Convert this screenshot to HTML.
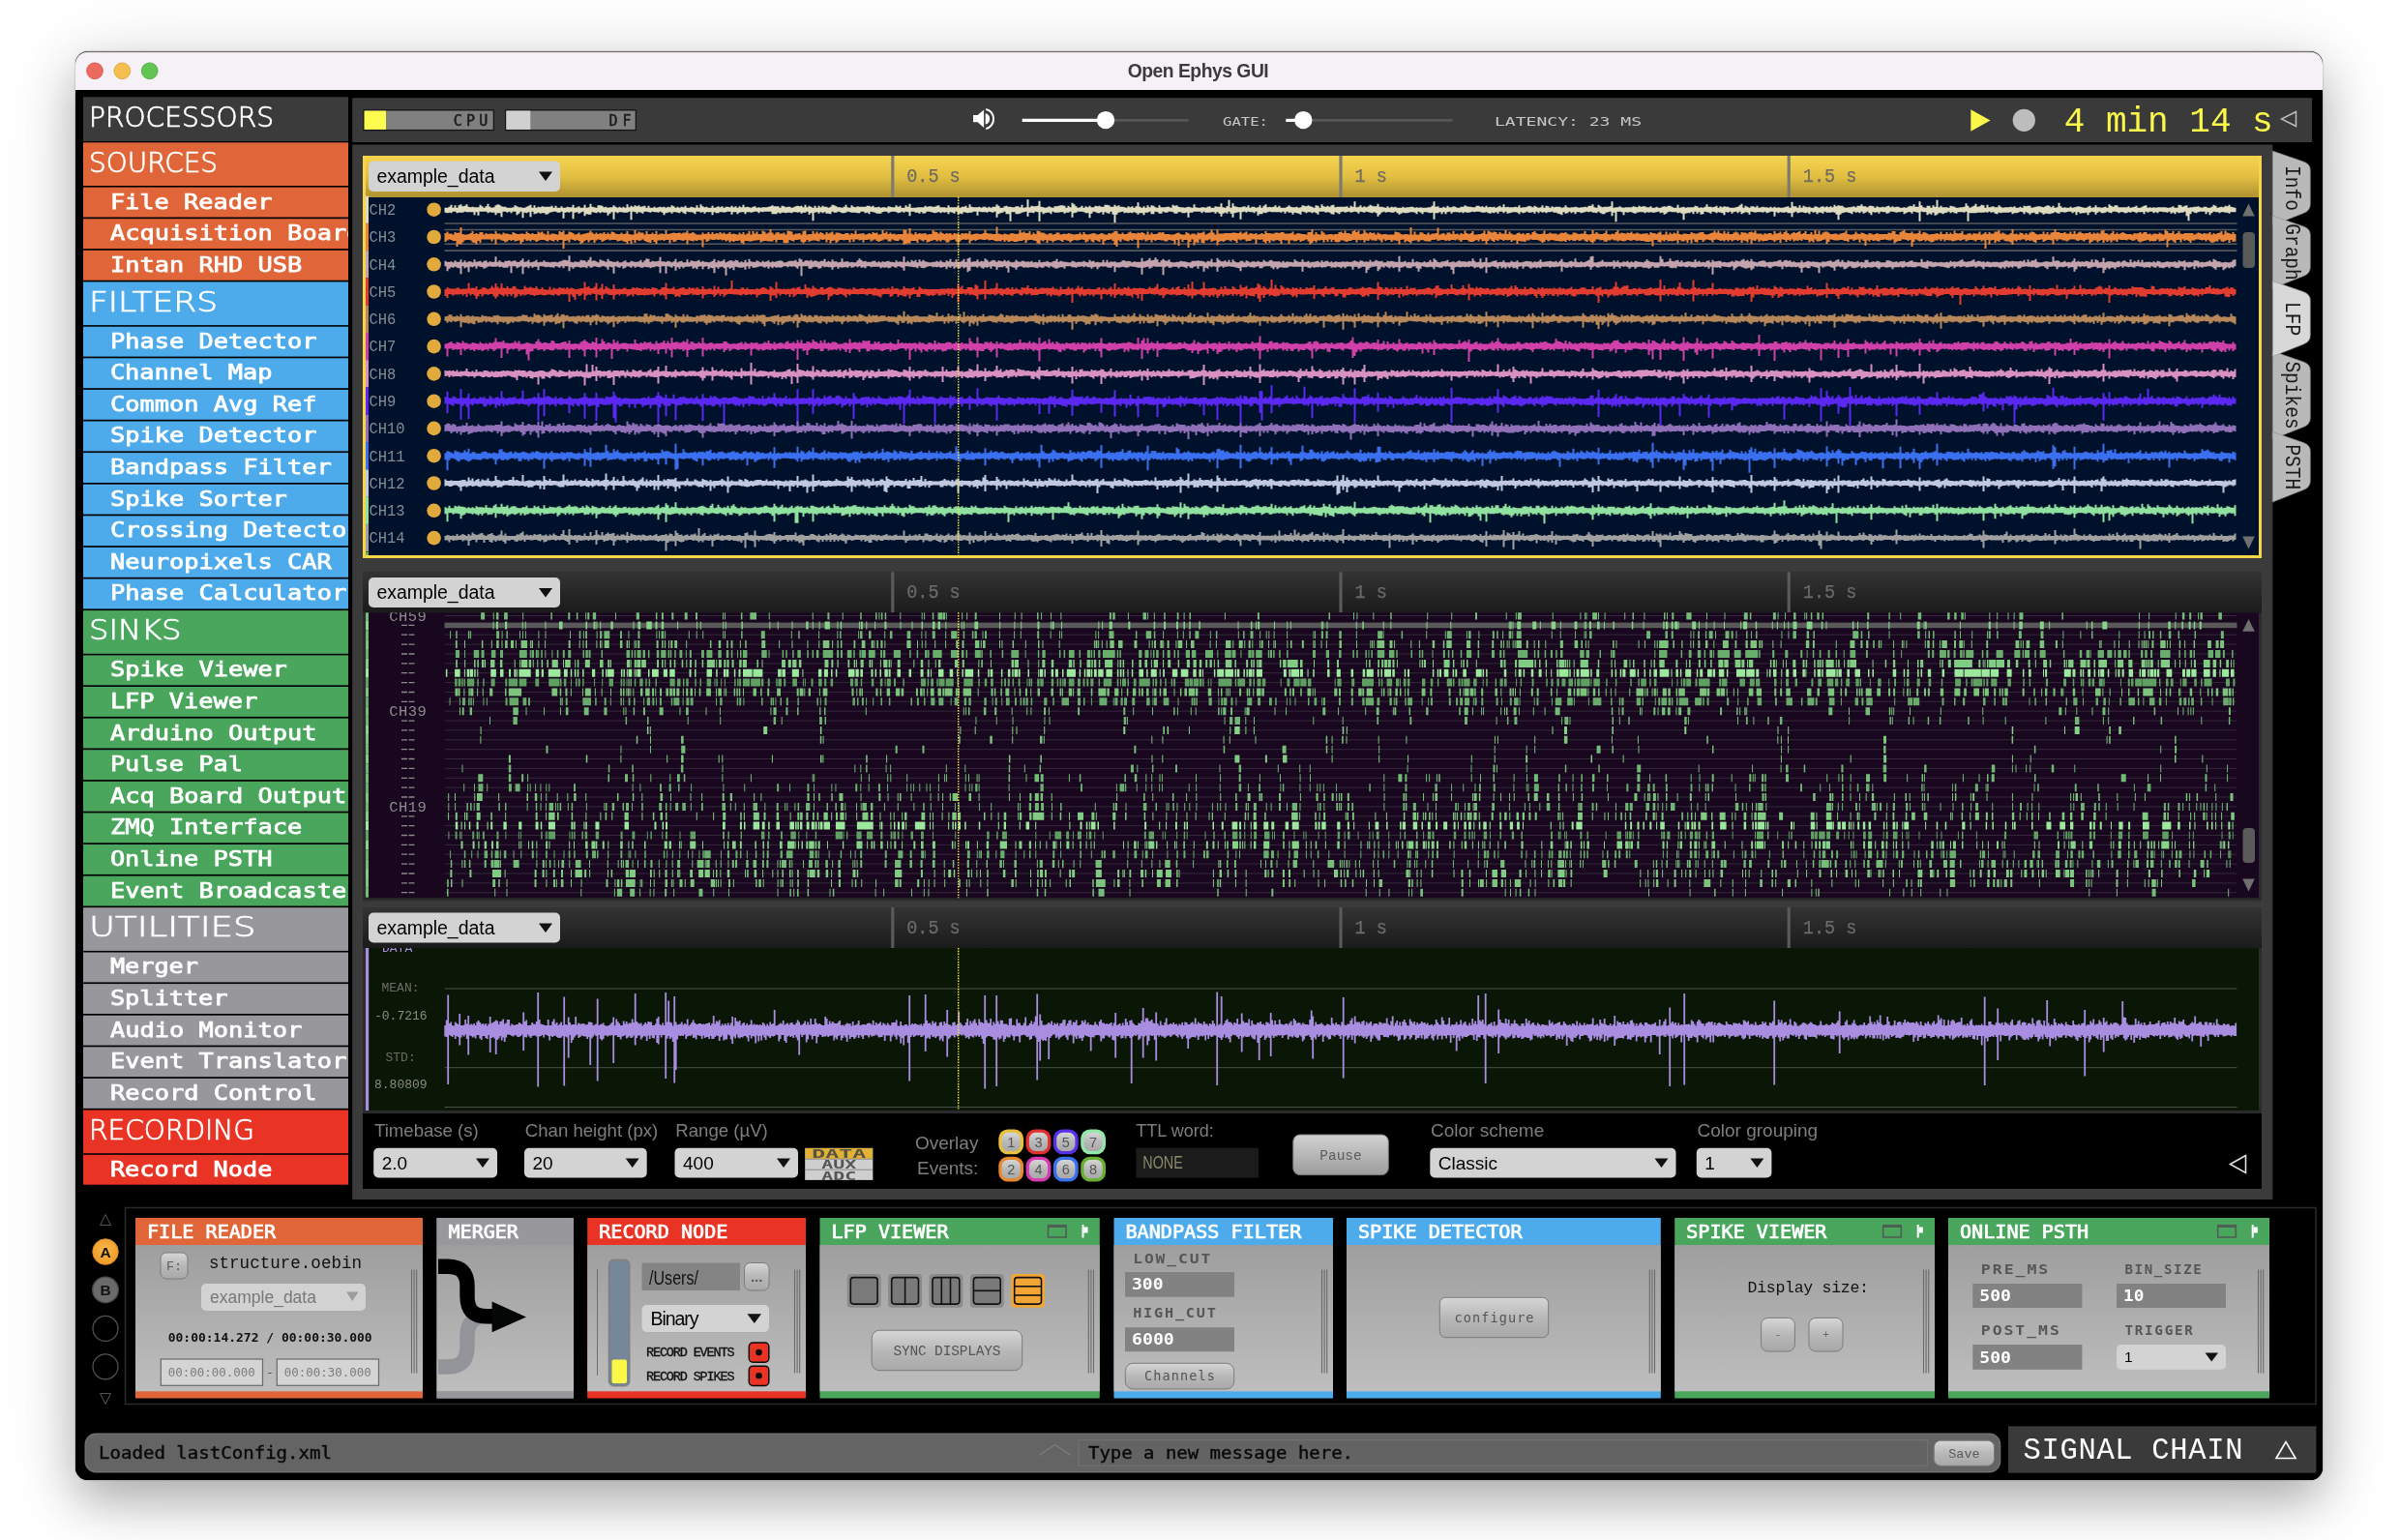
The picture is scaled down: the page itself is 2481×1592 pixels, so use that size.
<!DOCTYPE html>
<html><head><meta charset="utf-8"><title>Open Ephys GUI</title>
<style>
html,body{margin:0;padding:0;background:#fff;}
body{width:2481px;height:1592px;overflow:hidden;position:relative;}
#win{position:absolute;left:78px;top:53.4px;width:2323px;height:1476.8px;border-radius:13px;background:#000;box-shadow:0 22px 50px rgba(0,0,0,0.28),0 8px 90px rgba(0,0,0,0.10),0 0 1.5px rgba(0,0,0,0.5);}
svg{position:absolute;left:0;top:0;will-change:transform;}
text{white-space:pre;}
</style></head><body>
<div id="win"></div>
<svg width="2481" height="1592" viewBox="0 0 2481 1592">
<defs>
<clipPath id="winclip"><rect x="78" y="53.4" width="2323" height="1476.8" rx="13"/></clipPath>
<linearGradient id="gYel" x1="0" y1="0" x2="0" y2="1"><stop offset="0" stop-color="#f6d44e"/><stop offset="0.5" stop-color="#e2be42"/><stop offset="1" stop-color="#ae9230"/></linearGradient>
<linearGradient id="gHdr" x1="0" y1="0" x2="0" y2="1"><stop offset="0" stop-color="#333"/><stop offset="1" stop-color="#1b1b1b"/></linearGradient>
<linearGradient id="gBody" x1="0" y1="0" x2="0" y2="1"><stop offset="0" stop-color="#9e9e9e"/><stop offset="1" stop-color="#bebebe"/></linearGradient>
<linearGradient id="gBtn" x1="0" y1="0" x2="0" y2="1"><stop offset="0" stop-color="#d2d2d2"/><stop offset="1" stop-color="#9c9c9c"/></linearGradient>
<linearGradient id="gBtn2" x1="0" y1="0" x2="0" y2="1"><stop offset="0" stop-color="#d6d6d6"/><stop offset="0.5" stop-color="#b8b8b8"/><stop offset="1" stop-color="#a8a8a8"/></linearGradient>
<radialGradient id="gA" cx="0.5" cy="0.4" r="0.6"><stop offset="0" stop-color="#f8b848"/><stop offset="1" stop-color="#ee9a28"/></radialGradient>
</defs>
<g clip-path="url(#winclip)" opacity="0.999">
<rect x="78.0" y="53.0" width="2323.0" height="1477.0" fill="#000" />
<rect x="78.0" y="53.0" width="2323.0" height="40.0" fill="#f6f0f7" />
<line x1="78.0" y1="53.9" x2="2401.0" y2="53.9" stroke="#cfc9cf" stroke-width="1" />
<circle cx="98" cy="73.3" r="8.4" fill="#ec6a5e" stroke="#d05347" stroke-width="0.8"/>
<circle cx="126.3" cy="73.3" r="8.4" fill="#f4bf4f" stroke="#d6a23e" stroke-width="0.8"/>
<circle cx="154.7" cy="73.3" r="8.4" fill="#61c554" stroke="#50a73e" stroke-width="0.8"/>
<text x="1238.7" y="79.6" font-size="19.3" font-family='"Liberation Sans","DejaVu Sans",sans-serif' fill="#3c3a3c" font-weight="bold" textLength="146.0" lengthAdjust="spacing" text-anchor="middle" >Open Ephys GUI</text>
<rect x="86.0" y="100.3" width="274.0" height="45.7" fill="#3b3b3b" />
<text x="92.0" y="131.0" font-size="27.6" font-family='"DejaVu Sans","Liberation Sans",sans-serif' fill="#fff" font-weight="200" textLength="191.0" lengthAdjust="spacingAndGlyphs" stroke="#fff" stroke-width="0.7">PROCESSORS</text>
<clipPath id="plclip"><rect x="86" y="100" width="274" height="1130"/></clipPath><g clip-path="url(#plclip)">
<rect x="86.0" y="147.3" width="274.0" height="44.7" fill="#e0663a" />
<text x="92.0" y="177.5" font-size="27.6" font-family='"DejaVu Sans","Liberation Sans",sans-serif' fill="#fff" font-weight="200" textLength="133.0" lengthAdjust="spacingAndGlyphs" stroke="#fff" stroke-width="0.7">SOURCES</text>
<rect x="86.0" y="193.6" width="274.0" height="30.9" fill="#e0663a" />
<text x="113.9" y="215.5" font-size="21.3" font-family='"DejaVu Sans Mono","Liberation Mono",monospace' fill="#fff" textLength="167.6" lengthAdjust="spacingAndGlyphs" stroke="#fff" stroke-width="0.75">File Reader</text>
<rect x="86.0" y="226.2" width="274.0" height="30.9" fill="#e0663a" />
<text x="113.9" y="248.1" font-size="21.3" font-family='"DejaVu Sans Mono","Liberation Mono",monospace' fill="#fff" textLength="259.6" lengthAdjust="spacingAndGlyphs" stroke="#fff" stroke-width="0.75">Acquisition Board</text>
<rect x="86.0" y="258.8" width="274.0" height="30.9" fill="#e0663a" />
<text x="113.9" y="280.7" font-size="21.3" font-family='"DejaVu Sans Mono","Liberation Mono",monospace' fill="#fff" textLength="198.3" lengthAdjust="spacingAndGlyphs" stroke="#fff" stroke-width="0.75">Intan RHD USB</text>
<rect x="86.0" y="291.4" width="274.0" height="44.7" fill="#4eabeb" />
<text x="92.0" y="321.6" font-size="27.6" font-family='"DejaVu Sans","Liberation Sans",sans-serif' fill="#fff" font-weight="200" textLength="133.0" lengthAdjust="spacingAndGlyphs" stroke="#fff" stroke-width="0.7">FILTERS</text>
<rect x="86.0" y="337.7" width="274.0" height="30.9" fill="#4eabeb" />
<text x="113.9" y="359.6" font-size="21.3" font-family='"DejaVu Sans Mono","Liberation Mono",monospace' fill="#fff" textLength="213.6" lengthAdjust="spacingAndGlyphs" stroke="#fff" stroke-width="0.75">Phase Detector</text>
<rect x="86.0" y="370.3" width="274.0" height="30.9" fill="#4eabeb" />
<text x="113.9" y="392.2" font-size="21.3" font-family='"DejaVu Sans Mono","Liberation Mono",monospace' fill="#fff" textLength="167.6" lengthAdjust="spacingAndGlyphs" stroke="#fff" stroke-width="0.75">Channel Map</text>
<rect x="86.0" y="402.9" width="274.0" height="30.9" fill="#4eabeb" />
<text x="113.9" y="424.8" font-size="21.3" font-family='"DejaVu Sans Mono","Liberation Mono",monospace' fill="#fff" textLength="213.6" lengthAdjust="spacingAndGlyphs" stroke="#fff" stroke-width="0.75">Common Avg Ref</text>
<rect x="86.0" y="435.5" width="274.0" height="30.9" fill="#4eabeb" />
<text x="113.9" y="457.4" font-size="21.3" font-family='"DejaVu Sans Mono","Liberation Mono",monospace' fill="#fff" textLength="213.6" lengthAdjust="spacingAndGlyphs" stroke="#fff" stroke-width="0.75">Spike Detector</text>
<rect x="86.0" y="468.1" width="274.0" height="30.9" fill="#4eabeb" />
<text x="113.9" y="490.0" font-size="21.3" font-family='"DejaVu Sans Mono","Liberation Mono",monospace' fill="#fff" textLength="228.9" lengthAdjust="spacingAndGlyphs" stroke="#fff" stroke-width="0.75">Bandpass Filter</text>
<rect x="86.0" y="500.7" width="274.0" height="30.9" fill="#4eabeb" />
<text x="113.9" y="522.6" font-size="21.3" font-family='"DejaVu Sans Mono","Liberation Mono",monospace' fill="#fff" textLength="183.0" lengthAdjust="spacingAndGlyphs" stroke="#fff" stroke-width="0.75">Spike Sorter</text>
<rect x="86.0" y="533.3" width="274.0" height="30.9" fill="#4eabeb" />
<text x="113.9" y="555.2" font-size="21.3" font-family='"DejaVu Sans Mono","Liberation Mono",monospace' fill="#fff" textLength="259.6" lengthAdjust="spacingAndGlyphs" stroke="#fff" stroke-width="0.75">Crossing Detector</text>
<rect x="86.0" y="565.9" width="274.0" height="30.9" fill="#4eabeb" />
<text x="113.9" y="587.8" font-size="21.3" font-family='"DejaVu Sans Mono","Liberation Mono",monospace' fill="#fff" textLength="228.9" lengthAdjust="spacingAndGlyphs" stroke="#fff" stroke-width="0.75">Neuropixels CAR</text>
<rect x="86.0" y="598.5" width="274.0" height="30.9" fill="#4eabeb" />
<text x="113.9" y="620.4" font-size="21.3" font-family='"DejaVu Sans Mono","Liberation Mono",monospace' fill="#fff" textLength="244.3" lengthAdjust="spacingAndGlyphs" stroke="#fff" stroke-width="0.75">Phase Calculator</text>
<rect x="86.0" y="631.1" width="274.0" height="44.7" fill="#4aa65d" />
<text x="92.0" y="661.3" font-size="27.6" font-family='"DejaVu Sans","Liberation Sans",sans-serif' fill="#fff" font-weight="200" textLength="95.5" lengthAdjust="spacingAndGlyphs" stroke="#fff" stroke-width="0.7">SINKS</text>
<rect x="86.0" y="677.4" width="274.0" height="30.9" fill="#4aa65d" />
<text x="113.9" y="699.3" font-size="21.3" font-family='"DejaVu Sans Mono","Liberation Mono",monospace' fill="#fff" textLength="183.0" lengthAdjust="spacingAndGlyphs" stroke="#fff" stroke-width="0.75">Spike Viewer</text>
<rect x="86.0" y="710.0" width="274.0" height="30.9" fill="#4aa65d" />
<text x="113.9" y="731.9" font-size="21.3" font-family='"DejaVu Sans Mono","Liberation Mono",monospace' fill="#fff" textLength="152.3" lengthAdjust="spacingAndGlyphs" stroke="#fff" stroke-width="0.75">LFP Viewer</text>
<rect x="86.0" y="742.6" width="274.0" height="30.9" fill="#4aa65d" />
<text x="113.9" y="764.5" font-size="21.3" font-family='"DejaVu Sans Mono","Liberation Mono",monospace' fill="#fff" textLength="213.6" lengthAdjust="spacingAndGlyphs" stroke="#fff" stroke-width="0.75">Arduino Output</text>
<rect x="86.0" y="775.2" width="274.0" height="30.9" fill="#4aa65d" />
<text x="113.9" y="797.1" font-size="21.3" font-family='"DejaVu Sans Mono","Liberation Mono",monospace' fill="#fff" textLength="137.0" lengthAdjust="spacingAndGlyphs" stroke="#fff" stroke-width="0.75">Pulse Pal</text>
<rect x="86.0" y="807.8" width="274.0" height="30.9" fill="#4aa65d" />
<text x="113.9" y="829.7" font-size="21.3" font-family='"DejaVu Sans Mono","Liberation Mono",monospace' fill="#fff" textLength="244.3" lengthAdjust="spacingAndGlyphs" stroke="#fff" stroke-width="0.75">Acq Board Output</text>
<rect x="86.0" y="840.4" width="274.0" height="30.9" fill="#4aa65d" />
<text x="113.9" y="862.3" font-size="21.3" font-family='"DejaVu Sans Mono","Liberation Mono",monospace' fill="#fff" textLength="198.3" lengthAdjust="spacingAndGlyphs" stroke="#fff" stroke-width="0.75">ZMQ Interface</text>
<rect x="86.0" y="873.0" width="274.0" height="30.9" fill="#4aa65d" />
<text x="113.9" y="894.9" font-size="21.3" font-family='"DejaVu Sans Mono","Liberation Mono",monospace' fill="#fff" textLength="167.6" lengthAdjust="spacingAndGlyphs" stroke="#fff" stroke-width="0.75">Online PSTH</text>
<rect x="86.0" y="905.6" width="274.0" height="30.9" fill="#4aa65d" />
<text x="113.9" y="927.5" font-size="21.3" font-family='"DejaVu Sans Mono","Liberation Mono",monospace' fill="#fff" textLength="259.6" lengthAdjust="spacingAndGlyphs" stroke="#fff" stroke-width="0.75">Event Broadcaster</text>
<rect x="86.0" y="938.2" width="274.0" height="44.7" fill="#98989c" />
<text x="92.0" y="968.4" font-size="27.6" font-family='"DejaVu Sans","Liberation Sans",sans-serif' fill="#fff" font-weight="200" textLength="172.5" lengthAdjust="spacingAndGlyphs" stroke="#fff" stroke-width="0.7">UTILITIES</text>
<rect x="86.0" y="984.5" width="274.0" height="30.9" fill="#98989c" />
<text x="113.9" y="1006.4" font-size="21.3" font-family='"DejaVu Sans Mono","Liberation Mono",monospace' fill="#fff" textLength="91.0" lengthAdjust="spacingAndGlyphs" stroke="#fff" stroke-width="0.75">Merger</text>
<rect x="86.0" y="1017.1" width="274.0" height="30.9" fill="#98989c" />
<text x="113.9" y="1039.0" font-size="21.3" font-family='"DejaVu Sans Mono","Liberation Mono",monospace' fill="#fff" textLength="121.6" lengthAdjust="spacingAndGlyphs" stroke="#fff" stroke-width="0.75">Splitter</text>
<rect x="86.0" y="1049.7" width="274.0" height="30.9" fill="#98989c" />
<text x="113.9" y="1071.6" font-size="21.3" font-family='"DejaVu Sans Mono","Liberation Mono",monospace' fill="#fff" textLength="198.3" lengthAdjust="spacingAndGlyphs" stroke="#fff" stroke-width="0.75">Audio Monitor</text>
<rect x="86.0" y="1082.3" width="274.0" height="30.9" fill="#98989c" />
<text x="113.9" y="1104.2" font-size="21.3" font-family='"DejaVu Sans Mono","Liberation Mono",monospace' fill="#fff" textLength="244.3" lengthAdjust="spacingAndGlyphs" stroke="#fff" stroke-width="0.75">Event Translator</text>
<rect x="86.0" y="1114.9" width="274.0" height="30.9" fill="#98989c" />
<text x="113.9" y="1136.8" font-size="21.3" font-family='"DejaVu Sans Mono","Liberation Mono",monospace' fill="#fff" textLength="213.6" lengthAdjust="spacingAndGlyphs" stroke="#fff" stroke-width="0.75">Record Control</text>
<rect x="86.0" y="1147.5" width="274.0" height="44.7" fill="#e93324" />
<text x="92.0" y="1177.7" font-size="27.6" font-family='"DejaVu Sans","Liberation Sans",sans-serif' fill="#fff" font-weight="200" textLength="171.0" lengthAdjust="spacingAndGlyphs" stroke="#fff" stroke-width="0.7">RECORDING</text>
<rect x="86.0" y="1193.8" width="274.0" height="30.9" fill="#e93324" />
<text x="113.9" y="1215.7" font-size="21.3" font-family='"DejaVu Sans Mono","Liberation Mono",monospace' fill="#fff" textLength="167.6" lengthAdjust="spacingAndGlyphs" stroke="#fff" stroke-width="0.75">Record Node</text>
</g>
<rect x="364.2" y="101.2" width="2025.8" height="45.8" fill="#3a3a3a" />
<rect x="375.3" y="113.2" width="135.7" height="22.0" fill="#141414" />
<rect x="376.6" y="114.5" width="133.1" height="19.4" fill="#808080" />
<rect x="376.6" y="114.5" width="22.4" height="19.4" fill="#fdfb4e" />
<text x="468.7" y="130.2" font-size="15" font-family='"DejaVu Sans Mono","Liberation Mono",monospace' fill="#1c1c1c" textLength="35.5" lengthAdjust="spacing" stroke="#1c1c1c" stroke-width="0.5">CPU</text>
<rect x="522.0" y="113.2" width="136.0" height="22.0" fill="#141414" />
<rect x="523.3" y="114.5" width="133.4" height="19.4" fill="#808080" />
<rect x="523.3" y="114.5" width="25.0" height="19.4" fill="#d0d0d0" />
<text x="629.5" y="130.2" font-size="15" font-family='"DejaVu Sans Mono","Liberation Mono",monospace' fill="#1c1c1c" textLength="23.0" lengthAdjust="spacing" stroke="#1c1c1c" stroke-width="0.5">DF</text>
<path d="M1006 119H1010.6L1017.1 113.5V132L1010.6 126.3H1006z" fill="#fff"/>
<path d="M1018.7 117.3A4.5 5.55 0 0 1 1018.7 128.4z" fill="#fff"/>
<path d="M1019.2 112.9A8.7 10.1 0 0 1 1019.2 133" fill="none" stroke="#fff" stroke-width="2"/>
<line x1="1056.7" y1="124.4" x2="1228.8" y2="124.4" stroke="#575757" stroke-width="2.8" />
<line x1="1056.7" y1="124.4" x2="1142.7" y2="124.4" stroke="#fff" stroke-width="3.2" />
<circle cx="1143" cy="124.1" r="9.2" fill="#fff"/>
<text x="1264.0" y="129.7" font-size="13" font-family='"DejaVu Sans Mono","Liberation Mono",monospace' fill="#c8c8c8" textLength="47.0" lengthAdjust="spacingAndGlyphs" >GATE:</text>
<line x1="1329.3" y1="124.4" x2="1501.7" y2="124.4" stroke="#575757" stroke-width="2.8" />
<line x1="1329.3" y1="124.4" x2="1347.3" y2="124.4" stroke="#fff" stroke-width="3.2" />
<circle cx="1347.3" cy="124.1" r="9.2" fill="#fff"/>
<text x="1545.0" y="129.7" font-size="13" font-family='"DejaVu Sans Mono","Liberation Mono",monospace' fill="#c8c8c8" textLength="152.0" lengthAdjust="spacingAndGlyphs" >LATENCY: 23 MS</text>
<path d="M2037.3 113.2L2057.5 124.5L2037.3 135.8z" fill="#fbf84a"/>
<circle cx="2092.3" cy="124.3" r="11.6" fill="#bdbdbd"/>
<text x="2133.7" y="136.0" font-size="36" font-family='"Liberation Mono","DejaVu Sans Mono",monospace' fill="#fbf84a" textLength="216.0" lengthAdjust="spacing" >4 min 14 s</text>
<path d="M2373.5 115.5L2358.5 123L2373.5 130.5z" fill="none" stroke="#bbb" stroke-width="1.5"/>
<rect x="364.2" y="149.5" width="1985.1" height="1090.5" fill="#3b3b3b" />
<path d="M2349.3 156L2381 167Q2388.3 169.5 2388.3 176L2388.3 211Q2388.3 218 2381 220.5L2349.3 233z" fill="#b9b9b9" stroke="#8a8a8a" stroke-width="0.6"/>
<text transform="translate(2362.6 194.5) rotate(90)" text-anchor="middle" font-size="22" font-family='"Liberation Mono","DejaVu Sans Mono",monospace' fill="#1a1a1a" textLength="46.8" lengthAdjust="spacingAndGlyphs">Info</text>
<path d="M2349.3 223L2381 234Q2388.3 236.5 2388.3 243L2388.3 276Q2388.3 283 2381 285.5L2349.3 298z" fill="#b9b9b9" stroke="#8a8a8a" stroke-width="0.6"/>
<text transform="translate(2362.6 260.5) rotate(90)" text-anchor="middle" font-size="22" font-family='"Liberation Mono","DejaVu Sans Mono",monospace' fill="#1a1a1a" textLength="58.5" lengthAdjust="spacingAndGlyphs">Graph</text>
<path d="M2349.3 363L2381 374Q2388.3 376.5 2388.3 383L2388.3 432Q2388.3 439 2381 441.5L2349.3 454z" fill="#b9b9b9" stroke="#8a8a8a" stroke-width="0.6"/>
<text transform="translate(2362.6 408.5) rotate(90)" text-anchor="middle" font-size="22" font-family='"Liberation Mono","DejaVu Sans Mono",monospace' fill="#1a1a1a" textLength="70.2" lengthAdjust="spacingAndGlyphs">Spikes</text>
<path d="M2349.3 446.5L2381 457.5Q2388.3 460.0 2388.3 466.5L2388.3 497Q2388.3 504 2381 506.5L2349.3 519z" fill="#b9b9b9" stroke="#8a8a8a" stroke-width="0.6"/>
<text transform="translate(2362.6 482.8) rotate(90)" text-anchor="middle" font-size="22" font-family='"Liberation Mono","DejaVu Sans Mono",monospace' fill="#1a1a1a" textLength="46.8" lengthAdjust="spacingAndGlyphs">PSTH</text>
<path d="M2349.3 290.6L2381 301.6Q2388.3 304.1 2388.3 310.6L2388.3 346.6Q2388.3 353.6 2381 356.1L2349.3 368.6z" fill="#d8d8d8" stroke="#8a8a8a" stroke-width="0.6"/>
<text transform="translate(2362.6 329.6) rotate(90)" text-anchor="middle" font-size="22" font-family='"Liberation Mono","DejaVu Sans Mono",monospace' fill="#1a1a1a" textLength="35.1" lengthAdjust="spacingAndGlyphs">LFP</text>
<rect x="375.0" y="161.0" width="1963.0" height="416.0" fill="#f8d548" />
<rect x="378.0" y="203.8" width="1957.0" height="370.2" fill="#00122b" />
<rect x="378.0" y="161.0" width="1957.0" height="42.8" fill="url(#gYel)" />
<line x1="922.8" y1="161.0" x2="922.8" y2="203.8" stroke="#7d7a6e" stroke-width="3.2" />
<text x="937.2" y="187.6" font-size="20" font-family='"Liberation Mono","DejaVu Sans Mono",monospace' fill="#6f6c62" textLength="55.5" lengthAdjust="spacingAndGlyphs" stroke="#6f6c62" stroke-width="0.25">0.5 s</text>
<line x1="1386.0" y1="161.0" x2="1386.0" y2="203.8" stroke="#7d7a6e" stroke-width="3.2" />
<text x="1400.5" y="187.6" font-size="20" font-family='"Liberation Mono","DejaVu Sans Mono",monospace' fill="#6f6c62" textLength="33.3" lengthAdjust="spacingAndGlyphs" stroke="#6f6c62" stroke-width="0.25">1 s</text>
<line x1="1849.2" y1="161.0" x2="1849.2" y2="203.8" stroke="#7d7a6e" stroke-width="3.2" />
<text x="1863.8" y="187.6" font-size="20" font-family='"Liberation Mono","DejaVu Sans Mono",monospace' fill="#6f6c62" textLength="55.5" lengthAdjust="spacingAndGlyphs" stroke="#6f6c62" stroke-width="0.25">1.5 s</text>
<rect x="381.0" y="166.6" width="198.0" height="31.3" rx="5" fill="#d3d3d3" />
<text x="389.5" y="189.1" font-size="19.5" font-family='"Liberation Sans","DejaVu Sans",sans-serif' fill="#000" textLength="122.0" lengthAdjust="spacing" >example_data</text>
<path d="M557.0 177.6h14l-7.0 9.5z" fill="#111"/>
<line x1="459.5" y1="231.0" x2="2312.5" y2="231.0" stroke="#56585c" stroke-width="1.6" />
<line x1="459.5" y1="237.5" x2="2312.5" y2="237.5" stroke="#56585c" stroke-width="1.6" />
<line x1="459.5" y1="252.3" x2="2312.5" y2="252.3" stroke="#56585c" stroke-width="1.6" />
<line x1="459.5" y1="259.1" x2="2312.5" y2="259.1" stroke="#56585c" stroke-width="1.6" />
<rect x="378.0" y="202.6" width="3.0" height="28.3" fill="#dedbc0" />
<text x="381.5" y="222.0" font-size="16.6" font-family='"Liberation Mono","DejaVu Sans Mono",monospace' fill="#868c94" textLength="27.8" lengthAdjust="spacingAndGlyphs" >CH2</text>
<circle cx="448.6" cy="216.7" r="7.3" fill="#e2a93c"/>
<path d="M460.5 214.7v5m2 0.5v-5.5m2 -1v6m2 0.5v-8.5m2 3v4m2 0v-6.5m2 2.5v5.5m2 -0.5v-7.5m2 -1v8.5m2 0v-6.5m2 -0.5v6m2 0.5v-8m2 2.5v5.5m2 0v-5m2 -0.5v5.5m2 3v-8m2 0v5m2 3.5v-8.5m2 -2.5v7m2 0v-5.5m2 1.5v4m2 0v-5.5m2 -2.5v9.5m2 -1v-5.5m2 1v5m2 0v-5.5m2 -2v10m2 -2v-9m2 0.5v8.5m2 4v-11m2 0.5v5m2 0v-5m2 1v5m2 -1v-4m2 0v5.5m2 -1.5v-4.5m2 -2v6.5m2 3.5v-9m2 1v6.5m2 -2v-4.5m2 0.5v10.5m2 -5.5v-5m2 -1v6.5m2 -1v-6.5m2 -1v12.5m2 -5.5v-4m2 -2.5v9m2 -0.5v-6m2 -1v6m2 1v-6.5m2 -1v7m2 0v-6.5m2 0v8m2 -0.5v-7.5m2 0v6m2 -0.5v-6.5m2 2v4m2 0v-6m2 2v5m2 0v-5m2 -1.5v5.5m2 7v-11m2 0v5m2 -0.5v-5.5m2 0.5v5.5m2 -1v-4.5m2 -2.5v14.5m2 -6.5v-5m2 -0.5v5m2 1.5v-7.5m2 1.5v5m2 -1v-4m2 -3v11.5m2 -2v-6.5m2 -0.5v7.5m2 0v-11m2 3v5.5m2 0.5v-5.5m2 0.5v5.5m2 -1v-7m2 0v8m2 -1v-6.5m2 1.5v5.5m2 0v-6m2 1v8m2 -2v-6.5m2 0v5m2 7.5v-14.5m2 1.5v5.5m2 1v-5.5m2 -1v5.5m2 0v-4.5m2 -1v6m2 0v-5m2 -3.5v8.5m2 -1v-4.5m2 -1.5v14.5m2 -8.5v-5m2 -1.5v7m2 1.5v-7.5m2 -1v7m2 0.5v-6m2 -0.5v7.5m2 -2v-6m2 2v4m2 0.5v-6.5m2 2v5m2 -1v-4m2 -1v5.5m2 0v-4.5m2 -0.5v5.5m2 -1v-5m2 0.5v5.5m2 2.5v-8.5m2 1v5.5m2 -0.5v-6m2 0.5v5m2 1.5v-8.5m2 1v6m2 0v-4.5m2 -1v6m2 0.5v-5.5m2 -1v5m2 1.5v-6m2 -1.5v8.5m2 -2.5v-4m2 0v4.5m2 0v-5.5m2 0.5v5.5m2 1.5v-6.5m2 -2.5v6.5m2 0v-4m2 -3.5v8.5m2 -0.5v-6m2 1v6.5m2 -1.5v-5.5m2 1v4.5m2 0v-4.5m2 -2v9.5m2 -3v-4.5m2 -0.5v6m2 0v-7m2 1v5m2 0v-6m2 1.5v5m2 -0.5v-5.5m2 0v5m2 0v-4.5m2 -1.5v9m2 -2.5v-5m2 -1v6m2 2v-6.5m2 -1.5v6.5m2 -0.5v-5m2 -2.5v7.5m2 2v-7m2 -0.5v5.5m2 0v-5m2 0.5v5m2 -0.5v-5.5m2 -0.5v5.5m2 0v-4m2 -0.5v6m2 -1.5v-4m2 -0.5v5m2 -0.5v-4.5m2 0v4.5m2 0v-5m2 -0.5v5.5m2 2.5v-9m2 1v8m2 0v-8m2 0v6.5m2 1v-6m2 -2v7m2 0v-6.5m2 1v6m2 -0.5v-6m2 0v6m2 0.5v-5.5m2 -0.5v5m2 0v-6m2 -0.5v7m2 -0.5v-6m2 -0.5v8m2 -1v-5.5m2 -2.5v8m2 -1v-4.5m2 -1.5v9m2 -1.5v-6.5m2 1v13.5m2 -8.5v-7m2 2v4.5m2 1.5v-8m2 1.5v5m2 1v-7.5m2 1v5.5m2 1.5v-7m2 1v6m2 0.5v-7.5m2 -2v7m2 1v-7.5m2 1v6.5m2 -1v-4.5m2 0v5m2 1v-5.5m2 -1v6.5m2 -0.5v-8m2 2.5v4.5m2 0.5v-4.5m2 -2.5v7.5m2 0v-6m2 0.5v5.5m2 0.5v-7m2 0.5v6.5m2 -1.5v-5m2 0v5m2 1.5v-6.5m2 -1v7m2 1.5v-8.5m2 1v5m2 0.5v-6.5m2 1.5v5.5m2 1v-6.5m2 -0.5v7m2 0v-6m2 -0.5v5m2 -0.5v-4.5m2 0.5v4m2 1.5v-7m2 0.5v5.5m2 -0.5v-4.5m2 0v4.5m2 0.5v-7m2 1.5v6.5m2 -0.5v-7m2 2v4m2 1v-5m2 -2.5v6.5m2 0.5v-5.5m2 -3v12.5m2 -4.5v-4m2 0v4m2 1v-5m2 -0.5v5.5m2 1v-6.5m2 0v5m2 1.5v-6.5m2 -1.5v7.5m2 -1.5v-5m2 -0.5v5.5m2 0.5v-6m2 0.5v6m2 0.5v-6.5m2 -1v7m2 -0.5v-7m2 2v6m2 -1v-5m2 0v5.5m2 -0.5v-4.5m2 -2.5v9m2 -2v-5m2 0v5.5m2 1v-6.5m2 0v4.5m2 3v-9m2 2v6m2 0.5v-7.5m2 0v5.5m2 0.5v-7m2 2v5.5m2 -0.5v-8.5m2 2.5v6m2 -1v-4.5m2 0v4.5m2 4v-8.5m2 -0.5v5m2 0.5v-4.5m2 -1v5.5m2 0v-5.5m2 1v5m2 -1v-5m2 1v4.5m2 0.5v-6m2 0v5m2 6v-13.5m2 1.5v8.5m2 -1v-5.5m2 0v5m2 -1v-5.5m2 -0.5v8.5m2 0v-7.5m2 0v15m2 -9.5v-5m2 0v5m2 2v-8m2 0v8m2 -0.5v-6.5m2 -2.5v8m2 -0.5v-4.5m2 -0.5v4.5m2 5v-17.5m2 8v5.5m2 0v-7m2 0.5v7m2 -1.5v-5.5m2 -0.5v6.5m2 9.5v-21m2 6v5.5m2 2v-7m2 0.5v5.5m2 -0.5v-5.5m2 -1v6.5m2 1.5v-7m2 0.5v4m2 1v-6.5m2 0v6.5m2 0v-7m2 -0.5v7m2 0v-7m2 0.5v8m2 -1v-5m2 -2v7m2 -1v-4.5m2 -4.5v15m2 -4.5v-9m2 2v6.5m2 -1v-4m2 -0.5v4.5m2 0v-6m2 2v4.5m2 1v-7m2 1v6m2 5v-12.5m2 1.5v6.5m2 -2v-4.5m2 -1.5v6.5m2 1v-7m2 -0.5v7.5m2 -1v-5.5m2 0v8m2 -2.5v-7.5m2 0v8.5m2 0.5v-8.5m2 1.5v5m2 3v-8m2 -2v18.5m2 -8.5v-8.5m2 -1v7.5m2 -0.5v-5.5m2 0v5m2 1.5v-6m2 0.5v5m2 0.5v-7m2 1v5.5m2 0.5v-7m2 1.5v4.5m2 1v-7m2 -4v12.5m2 -1.5v-6.5m2 1v5.5m2 2v-9m2 1.5v5m2 0v-7.5m2 2v4.5m2 2.5v-9m2 0.5v8.5m2 -2.5v-4.5m2 0.5v4.5m2 1.5v-8.5m2 2v6.5m2 -2v-4.5m2 0v5.5m2 0v-6m2 0v5m2 0v-4m2 -3v7.5m2 1.5v-8m2 -0.5v8.5m2 -1.5v-5.5m2 0.5v5m2 1v-6m2 0.5v5.5m2 -0.5v-5.5m2 -0.5v11m2 -5v-5.5m2 0.5v5m2 -1v-7.5m2 3v4.5m2 0v-4m2 0v4m2 1.5v-6m2 0v4.5m2 1v-5m2 -1v6m2 0v-6.5m2 1.5v4.5m2 0v-4.5m2 -1.5v7.5m2 -1.5v-5.5m2 0v7m2 3v-13.5m2 4v6.5m2 -1v-5m2 -1.5v7.5m2 -2v-12m2 8v6m2 4v-14.5m2 3v7m2 -0.5v-6m2 0.5v5m2 7.5v-12.5m2 -0.5v5.5m2 -0.5v-5.5m2 1v5.5m2 -1v-6.5m2 2.5v4.5m2 0v-5.5m2 0v6.5m2 -1.5v-4m2 -0.5v8.5m2 -1.5v-9m2 2.5v6.5m2 -1.5v-7m2 -1.5v9m2 -1v-5m2 -0.5v5m2 0.5v-5m2 -0.5v5.5m2 0v-7m2 2v5m2 0v-6.5m2 2v5m2 -1v-4m2 0v6m2 -2v-5m2 -1.5v7.5m2 0v-6m2 0.5v7.5m2 -2v-5.5m2 -0.5v6.5m2 0.5v-6m2 -0.5v7.5m2 -3v-6.5m2 0.5v6.5m2 1v-7m2 -1v7m2 0v-6m2 0.5v6.5m2 -1v-4.5m2 -2.5v8m2 1.5v-9m2 2v4m2 0v-7.5m2 2v5.5m2 1v-6m2 -1v6.5m2 0.5v-6m2 -1.5v9m2 0.5v-10m2 2.5v5m2 1v-6.5m2 0v7.5m2 -2v-5.5m2 0v5m2 1v-6m2 -0.5v6m2 -0.5v-4m2 -2v7m2 -0.5v-5.5m2 -5.5v10.5m2 0.5v-5m2 -0.5v7m2 -2v-6.5m2 2v5m2 0.5v-6.5m2 1v4.5m2 0.5v-6m2 -1.5v8m2 0.5v-7.5m2 0.5v6m2 1v-7m2 -2.5v13m2 -2v-8m2 0v6m2 -1v-4.5m2 0.5v5m2 -0.5v-6m2 1.5v4.5m2 0.5v-6m2 0.5v5.5m2 -1v-5m2 1v5.5m2 1.5v-7m2 0v6m2 -1v-6m2 1v5.5m2 0v-6m2 0v5.5m2 -0.5v-5.5m2 0v5.5m2 0.5v-5m2 -0.5v7m2 -2.5v-4m2 -0.5v5.5m2 1.5v-6.5m2 0v4.5m2 0v-4.5m2 -0.5v5.5m2 0.5v-6m2 -1.5v7m2 7v-18.5m2 5.5v6.5m2 0v-7m2 1.5v4.5m2 2v-6.5m2 -1v5.5m2 2v-6.5m2 -2v6.5m2 -0.5v-4.5m2 0v6.5m2 -1.5v-6m2 0.5v5.5m2 0v-4.5m2 0v5m2 -0.5v-5.5m2 0v6.5m2 -1v-7m2 1v6.5m2 0v-6m2 0v5.5m2 -0.5v-4.5m2 0v5m2 -0.5v-6m2 0v6m2 0.5v-5.5m2 -0.5v6.5m2 0v-5.5m2 -1.5v6.5m2 1v-6m2 -0.5v7m2 -1v-5.5m2 -0.5v6.5m2 -1v-4.5m2 -1v7m2 -2v-6m2 1.5v4.5m2 1.5v-9m2 3v4.5m2 2v-7m2 0.5v6m2 -0.5v-5.5m2 0v5m2 0v-5.5m2 0.5v5.5m2 1.5v-9m2 2.5v4.5m2 1v-6m2 0v5.5m2 -1v-5m2 -1v7m2 0v-6.5m2 1v5m2 1.5v-8m2 1v5m2 1.5v-5.5m2 -0.5v4.5m2 1v-7.5m2 2.5v4.5m2 1v-7.5m2 0.5v6m2 0v-4.5m2 -1.5v5.5m2 1v-5.5m2 -0.5v6m2 1v-7m2 0v7.5m2 1v-7.5m2 -0.5v5m2 1.5v-8.5m2 2v6m2 -1.5v-4m2 -0.5v6m2 -1v-5m2 -0.5v7.5m2 -2v-5m2 0.5v4.5m2 1v-6m2 0v5.5m2 -0.5v-5.5m2 0.5v4.5m2 0.5v-6.5m2 0v6m2 1v-8.5m2 3v5.5m2 0.5v-5.5m2 -3v7m2 1.5v-7m2 1v7m2 0v-7.5m2 0v6m2 -0.5v-5.5m2 -0.5v5.5m2 4.5v-15m2 6.5v5m2 9.5v-15m2 0v4.5m2 0v-5.5m2 1v5m2 3v-7.5m2 -0.5v5m2 0.5v-5.5m2 0v5m2 0v-5m2 -1v7m2 0.5v-7m2 0.5v5.5m2 -0.5v-6.5m2 1v5.5m2 0v-6m2 0v7m2 -1v-5m2 0v5.5m2 -0.5v-6m2 1.5v5m2 0v-5m2 -1v5.5m2 -0.5v-4m2 0v5.5m2 -0.5v-6m2 -0.5v8.5m2 -1v-7m2 -1v6.5m2 -0.5v-6m2 1v5.5m2 0v-4.5m2 0v4.5m2 1v-8.5m2 3v5m2 1v-6.5m2 -0.5v13.5m2 -6.5v-6m2 -0.5v6m2 0v-6m2 0v5m2 2v-7m2 -1.5v6m2 2v-7.5m2 1.5v4.5m2 2.5v-7.5m2 0.5v6.5m2 -2.5v-5m2 -2.5v8m2 0.5v-6m2 0v7m2 -2v-4.5m2 -0.5v5.5m2 1v-7.5m2 2v4.5m2 0.5v-6.5m2 1v6m2 2v-9m2 0.5v5.5m2 0.5v-6m2 1v4m2 2v-6m2 0v4.5m2 -0.5v-4.5m2 -0.5v6.5m2 -1.5v-6.5m2 -1.5v10.5m2 -1v-5.5m2 -2v6.5m2 0.5v-6m2 1v7m2 -3v-5.5m2 0v6m2 0.5v-5.5m2 -1.5v6.5m2 0v-4.5m2 -0.5v5m2 0.5v-6m2 0.5v4.5m2 1.5v-6m2 0.5v5m2 -1v-5m2 1v4m2 5v-10m2 1v4.5m2 1v-6m2 0.5v4.5m2 0.5v-5m2 -0.5v5.5m2 -0.5v-5.5m2 -0.5v7m2 0v-5.5m2 -6v15.5m2 -4.5v-6.5m2 0v5.5m2 1.5v-5.5m2 -2.5v7.5m2 -0.5v-4.5m2 -2v7m2 0.5v-6.5m2 0.5v5.5m2 1.5v-7.5m2 1v4m2 1v-5m2 -1.5v6m2 2v-7.5m2 1v5m2 0v-6m2 -0.5v7.5m2 -2v-4.5m2 -1v6.5m2 0v-5.5m2 -1v6.5m2 -0.5v-5m2 -2.5v8m2 2v-8.5m2 -1v15m2 -5.5v-9m2 0v7.5m2 -0.5v-5.5m2 0.5v4.5m2 0.5v-5.5m2 0v6m2 1v-7.5m2 -0.5v5.5m2 1v-5.5m2 -1.5v6.5m2 1v-7.5m2 -1.5v7.5m2 2v-7.5m2 0v6.5m2 -1v-4.5m2 -1.5v7.5m2 2v-9.5m2 0.5v6m2 0.5v-5m2 -1.5v6m2 1.5v-6.5m2 0v4.5m2 0.5v-5.5m2 0.5v5m2 1.5v-7.5m2 -0.5v7.5m2 -1.5v-4.5m2 -1v5.5m2 0.5v-5m2 -0.5v6m2 -0.5v-5.5m2 1v4.5m2 -0.5v-4m2 -0.5v7m2 -1v-5.5m2 -1v5.5m2 0v-6.5m2 0.5v7.5m2 -2v-7.5m2 2.5v5.5m2 0.5v-6m2 -5.5v20.5m2 -10v-6.5m2 2v5m2 0v-4.5m2 -2v9.5m2 -1.5v-8m2 2v7m2 -2v-7.5m2 1.5v9m2 -1v-15m2 7.5v6m2 0v-7.5m2 1.5v7m2 -1v-6m2 0v5.5m2 -1v-4m2 -2v7.5m2 -1v-6m2 0.5v6.5m2 0.5v-6m2 0v4.5m2 0v-5m2 0v5m2 0.5v-6m2 -3.5v8.5m2 10v-16m2 2v5.5m2 0v-6.5m2 -1v7.5m2 0v-9.5m2 3v6m2 0v-6.5m2 -1.5v8m2 0v-7.5m2 2.5v4.5m2 0.5v-8m2 2.5v4.5m2 1v-6m2 -0.5v6m2 1.5v-6.5m2 0v7m2 -1.5v-7.5m2 1.5v6.5m2 -0.5v-5m2 -0.5v5.5m2 0v-5.5m2 0v5.5m2 -0.5v-5.5m2 0.5v7m2 -1v-7m2 1.5v5.5m2 -0.5v-5m2 -1v5m2 0.5v-4.5m2 -2v8.5m2 -2v-6m2 -0.5v7.5m2 1.5v-9m2 2v5.5m2 -0.5v-5.5m2 -0.5v7.5m2 0v-8m2 0v6m2 1v-6.5m2 0.5v7.5m2 -1v-7.5m2 -1v8.5m2 0.5v-8.5m2 1.5v6.5m2 -0.5v-7.5m2 2v4.5m2 1v-6m2 -4.5v11m2 -1.5v-6m2 1.5v4.5m2 0.5v-5.5m2 0.5v4.5m2 -0.5v-4m2 -1v5m2 1.5v-5.5m2 -0.5v5m2 3v-8.5m2 -0.5v6m2 1.5v-7m2 0.5v6m2 0v-5.5m2 0v5m2 2.5v-8.5m2 -1v7m2 -1v-4m2 -0.5v5m2 2.5v-9.5m2 2v5.5m2 -1v-4.5m2 0.5v5.5m2 0v-6m2 -0.5v6m2 -1v-4m2 -3.5v8.5m2 0.5v-7.5m2 1v5m2 0v-6.5m2 0v7m2 1v-6m2 0v5m2 0v-5m2 0v6m2 0v-6m2 -1v6m2 0.5v-5m2 -0.5v4.5m2 0.5v-5.5m2 -1v7.5m2 -1v-4.5m2 0v4.5m2 0v-5.5m2 -1v8.5m2 -2.5v-6.5m2 2.5v5m2 -1v-4.5m2 0.5v4m2 1.5v-6m2 0.5v4.5m2 1v-6m2 0v4.5m2 0v-4.5m2 0v5m2 0v-5m2 0.5v5m2 -1v-4m2 -0.5v6.5m2 -1v-6.5m2 1.5v6.5m2 -2v-4.5m2 -3v8.5m2 -0.5v-7.5m2 1.5v6m2 -1v-6m2 -0.5v11m2 5v-13.5m2 -0.5v7m2 -2.5v-4.5m2 -0.5v6m2 0.5v-6.5m2 -0.5v6m2 -0.5v-4.5m2 0.5v4m2 0v-5m2 0v7.5m2 -2v-4.5m2 0v7.5m2 -2v-6.5m2 -2v7m2 0.5v-6.5m2 2v4.5m2 1v-6m2 -0.5v5.5m2 0v-5m2 -1.5v7m2 0v-6.5m2 -1.5v9m2 -1.5v-5.5m2 0.5v5m2 0v-4.5" stroke="#dedbc0" stroke-width="2" fill="none"/>
<rect x="378.0" y="230.8" width="3.0" height="28.3" fill="#e8853a" />
<text x="381.5" y="250.3" font-size="16.6" font-family='"Liberation Mono","DejaVu Sans Mono",monospace' fill="#868c94" textLength="27.8" lengthAdjust="spacingAndGlyphs" >CH3</text>
<circle cx="448.6" cy="245.0" r="7.3" fill="#e2a93c"/>
<path d="M460.5 241.0v9m2 -1.5v-9m2 2v6m2 0.5v-6.5m2 1v6.5m2 0v-9m2 1v14m2 -3v-11.5m2 -5.5v17.5m2 -2v-8.5m2 0.5v6m2 -0.5v-5.5m2 -0.5v6m2 0.5v-7.5m2 -2v11.5m2 0.5v-9m2 -1v11.5m2 -3.5v-7m2 -2v11m2 -3.5v-7.5m2 2.5v5m2 0v-6.5m2 1v5.5m2 0v-6m2 0v8m2 -2v-5.5m2 -3v13.5m2 -5v-6m2 0v6m2 1v-6m2 -2v8.5m2 1.5v-9m2 0v8m2 -1.5v-6m2 0.5v6.5m2 -1v-8m2 1v8.5m2 -0.5v-7m2 0v6.5m2 3.5v-10.5m2 0v8.5m2 -2.5v-5.5m2 -2.5v9.5m2 -0.5v-7.5m2 1v7.5m2 -1.5v-7m2 1v6.5m2 1.5v-8m2 -2.5v9.5m2 -1v-7.5m2 -1v8.5m2 0v-6.5m2 1v6.5m2 0.5v-10.5m2 3.5v5.5m2 1v-7.5m2 0v8m2 -1.5v-6m2 0.5v7m2 -1.5v-9m2 1v8m2 9v-18.5m2 4v6.5m2 -0.5v-6.5m2 -2.5v11m2 -3v-7.5m2 1v7m2 1v-6.5m2 -0.5v6m2 1v-8.5m2 2v9.5m2 -1v-9m2 -0.5v7.5m2 -1v-7m2 -0.5v10m2 -2v-10m2 2v7.5m2 3v-9m2 -1.5v8m2 -1v-5.5m2 -1v7m2 2v-8.5m2 -1.5v9m2 -1v-6m2 -1.5v7m2 1v-6.5m2 -2.5v8.5m2 0v-8m2 1.5v6.5m2 1.5v-7.5m2 0v7m2 -0.5v-8m2 1.5v7.5m2 0.5v-8.5m2 -2.5v13m2 -3v-7m2 0.5v9.5m2 -4v-5.5m2 -4.5v13m2 -3v-6.5m2 -2v9.5m2 -0.5v-8m2 0v7m2 1.5v-6.5m2 -3.5v11m2 0.5v-8.5m2 0v9m2 -3v-7.5m2 1.5v8m2 2v-13m2 3.5v6m2 0v-7m2 0v6.5m2 1v-7m2 -4v10m2 0v-6m2 -0.5v10m2 -3.5v-7m2 -0.5v9.5m2 -0.5v-8.5m2 0v7m2 0v-7.5m2 1v7m2 0.5v-8.5m2 0v7.5m2 4.5v-14m2 3v7m2 0.5v-8m2 -1v9.5m2 -1v-7m2 1v6.5m2 -1v-5.5m2 0v6m2 7v-15m2 1.5v5.5m2 2.5v-8.5m2 -1.5v9m2 -1.5v-5.5m2 -2v8m2 0v-6m2 -1v6.5m2 0.5v-6.5m2 -1.5v7.5m2 1v-7m2 -1v7.5m2 1.5v-7.5m2 -0.5v7m2 2v-10.5m2 2v7m2 1v-8.5m2 0.5v7m2 0v-6.5m2 -2v8m2 2.5v-9m2 -2v12.5m2 -3.5v-6.5m2 -1v7.5m2 0.5v-10.5m2 3.5v7m2 -0.5v-10m2 2.5v7m2 0v-9m2 2.5v6m2 2.5v-8.5m2 -3.5v11m2 -0.5v-9.5m2 2v7.5m2 0.5v-9m2 -3.5v12.5m2 0v-9m2 2v5.5m2 2.5v-10m2 -0.5v8m2 0v-6.5m2 0v6.5m2 3v-10.5m2 2v9m2 -0.5v-12.5m2 0.5v9m2 1v-9.5m2 3v7m2 -1.5v-6.5m2 0v6.5m2 -0.5v-6.5m2 1.5v7.5m2 1.5v-12.5m2 -0.5v11.5m2 -2v-5.5m2 -0.5v8m2 -1v-7m2 -3v9.5m2 0v-7m2 -2v9.5m2 0.5v-8m2 -1.5v7.5m2 0.5v-7m2 1.5v5m2 3v-10.5m2 1.5v6.5m2 3.5v-11m2 -1v9.5m2 -0.5v-6m2 -2v10.5m2 -1.5v-9m2 0.5v7m2 0v-6m2 0v6.5m2 -0.5v-7m2 0v7m2 2.5v-8m2 -1.5v6.5m2 2.5v-8m2 -3.5v9m2 0v-5.5m2 -0.5v7m2 -0.5v-6.5m2 -0.5v9.5m2 -2.5v-5.5m2 -0.5v6m2 -0.5v-6.5m2 1v7.5m2 -1v-8.5m2 1v6.5m2 1.5v-8.5m2 2v7.5m2 -1v-7m2 -4v10.5m2 -1v-6.5m2 -1.5v8m2 2v-7.5m2 -1.5v9m2 -2v-5.5m2 -0.5v7m2 0.5v-6.5m2 -0.5v7m2 -1.5v-5.5m2 0v6.5m2 4.5v-15.5m2 0.5v14m2 -0.5v-10m2 -5.5v15.5m2 -2.5v-7.5m2 1v6.5m2 0v-9m2 2v9m2 -3.5v-6.5m2 0.5v7m2 1v-8m2 -0.5v7m2 2.5v-8m2 -0.5v8m2 -1v-7m2 -4v10.5m2 -0.5v-8.5m2 0.5v9.5m2 -1v-7m2 -2v10m2 -1.5v-7m2 1v6.5m2 2v-9.5m2 0.5v9m2 -2v-7.5m2 1.5v5.5m2 -0.5v-6.5m2 0.5v8m2 4v-12m2 1v7m2 -1.5v-7m2 0.5v6m2 0.5v-7m2 0.5v6m2 4v-12.5m2 3.5v6.5m2 -1v-6m2 -0.5v7.5m2 -1v-6.5m2 0.5v5.5m2 0v-5.5m2 -1v7m2 0v-10m2 3v6.5m2 1v-7m2 0v6.5m2 0v-6m2 0v7m2 0.5v-15m2 7v7.5m2 0.5v-7.5m2 0.5v5.5m2 2v-8.5m2 0.5v6.5m2 1.5v-7.5m2 -1v8m2 -0.5v-8m2 0.5v8.5m2 0v-8m2 -0.5v8m2 -0.5v-11m2 2.5v8.5m2 -1v-8.5m2 1.5v10m2 -2.5v-7.5m2 -2v9m2 0v-5.5m2 -2v8m2 0.5v-7m2 -3.5v13m2 0.5v-13m2 1.5v8m2 1v-9m2 1v6.5m2 3v-8.5m2 -1v7m2 0.5v-8m2 1.5v8m2 -1.5v-7m2 -1.5v8m2 -0.5v-7.5m2 2v6.5m2 1v-8m2 -0.5v6.5m2 0.5v-6.5m2 -1v8m2 1.5v-9m2 0.5v7m2 -1v-5.5m2 -0.5v6.5m2 0v-6.5m2 -1.5v7.5m2 -0.5v-5m2 -2.5v8m2 2.5v-8.5m2 0.5v7m2 -2v-5.5m2 -0.5v8m2 1v-9.5m2 0.5v6.5m2 1v-6.5m2 -0.5v8m2 -2.5v-6.5m2 0.5v11.5m2 -4v-6.5m2 0v5.5m2 0v-7m2 0.5v6m2 1.5v-8.5m2 -1.5v14m2 2v-16m2 2.5v7m2 1.5v-8m2 -1.5v7m2 1v-6.5m2 0v7m2 0.5v-9m2 -1v8.5m2 1v-8m2 0v6.5m2 0.5v-6.5m2 -1v16m2 -8.5v-7m2 -1v8.5m2 -1v-6.5m2 1.5v7m2 -1v-9m2 3v5.5m2 2.5v-10m2 1.5v6m2 1v-7m2 -0.5v6.5m2 0v-8m2 0.5v8m2 0v-8.5m2 2v7.5m2 0v-7.5m2 0v6m2 0.5v-6m2 0v6.5m2 3.5v-10.5m2 -1v7m2 6v-13.5m2 1.5v5.5m2 2.5v-7.5m2 0v5.5m2 0v-8m2 1v15m2 -6v-7.5m2 -1v6m2 6v-12m2 1v8m2 0.5v-10.5m2 0.5v6.5m2 3.5v-10.5m2 -1v12m2 -3v-6m2 -1v7m2 -1v-7m2 -3v12.5m2 -1v-8.5m2 2v6m2 5v-16m2 4v8.5m2 -1v-7.5m2 0v8.5m2 -1v-8m2 0v7m2 0.5v-7.5m2 0v8.5m2 -1.5v-7.5m2 0v8.5m2 2v-10m2 0v6.5m2 1v-9m2 2v6m2 0v-7m2 -1v10m2 -0.5v-6.5m2 -1.5v8m2 -1.5v-6m2 0.5v5.5m2 4.5v-11m2 1.5v5m2 0.5v-6m2 -1v6.5m2 2.5v-8m2 -3v12.5m2 -2.5v-8m2 0v10m2 -2.5v-7m2 0v8m2 -1v-8m2 0v7.5m2 1v-8m2 -1v12m2 -4v-8m2 1.5v7m2 0v-7m2 0v10.5m2 -3.5v-7.5m2 -1.5v9m2 1v-7m2 -1v7.5m2 -1v-7m2 0.5v8.5m2 -1v-7m2 0v6.5m2 -1v-5m2 -2.5v9.5m2 3v-12.5m2 -3v14m2 -2v-6.5m2 -2.5v10.5m2 -2v-6.5m2 0.5v6m2 -0.5v-9m2 1.5v10m2 -2.5v-5.5m2 0v7.5m2 -2.5v-5.5m2 0v8m2 -2v-5.5m2 -0.5v8m2 0.5v-8.5m2 -2v10m2 -1.5v-9m2 1.5v7.5m2 1v-11m2 2.5v9m2 -1v-8m2 1v7m2 -1v-9m2 -1v10m2 2.5v-10.5m2 -1.5v9.5m2 0.5v-6.5m2 -0.5v6.5m2 2.5v-12.5m2 2.5v8m2 0.5v-7.5m2 -1.5v7.5m2 1v-7.5m2 -0.5v8m2 0.5v-6.5m2 -2v7m2 1v-7m2 1v8m2 -3v-5.5m2 0v7m2 -1v-5.5m2 0v5.5m2 2v-7.5m2 0v6m2 0v-9m2 0.5v9m2 3.5v-12m2 1.5v6m2 -0.5v-5m2 -0.5v8.5m2 -1.5v-7m2 0.5v7.5m2 1.5v-16.5m2 7.5v6.5m2 -0.5v-9m2 3v6m2 1.5v-7.5m2 -2.5v8.5m2 -0.5v-7.5m2 1.5v7m2 0.5v-7m2 -2v9m2 0v-7m2 -1v6.5m2 0v-6.5m2 -0.5v6.5m2 1.5v-13.5m2 7v6m2 -0.5v-6.5m2 -0.5v7m2 1v-6.5m2 -2v8m2 0.5v-8.5m2 1.5v6m2 0v-9m2 3v6.5m2 -1v-6m2 1v6m2 1.5v-9m2 1v6m2 0v-9.5m2 2.5v7m2 1.5v-7.5m2 -1v9m2 0v-11m2 3.5v6.5m2 -1v-5.5m2 -0.5v7.5m2 -2v-5.5m2 -1v8.5m2 -0.5v-10.5m2 3.5v10.5m2 -3.5v-10.5m2 1v8m2 1.5v-8.5m2 -1v10.5m2 -2v-8m2 2v7m2 -1.5v-7.5m2 1.5v6.5m2 1v-7.5m2 -3.5v10m2 0.5v-6.5m2 -2.5v8.5m2 2v-8.5m2 1v6m2 0v-6m2 -1.5v11m2 -3v-8.5m2 1.5v7.5m2 0v-8.5m2 1.5v7.5m2 -1.5v-7.5m2 0v7.5m2 -1v-5m2 -2.5v8m2 0v-9m2 2v7m2 0.5v-6.5m2 0v7.5m2 1.5v-9.5m2 -3v11.5m2 -2v-6m2 -0.5v8m2 -1v-8m2 1v6.5m2 0.5v-7m2 0v7.5m2 0v-6.5m2 -1v8m2 0v-9m2 0.5v8m2 1v-10m2 1.5v6.5m2 1v-6.5m2 0v5.5m2 1v-8.5m2 0v8.5m2 -1v-6.5m2 0.5v7m2 -0.5v-7m2 0v6m2 1.5v-10m2 3v8m2 -1.5v-6m2 -0.5v8m2 1.5v-13.5m2 3.5v8m2 -2v-7.5m2 1.5v6m2 1v-6.5m2 0v6m2 1.5v-8.5m2 -2.5v11.5m2 -1.5v-6.5m2 0.5v6m2 -1v-6m2 0.5v6.5m2 0v-8.5m2 -2v11.5m2 -1v-7m2 -1v8.5m2 0.5v-8.5m2 0.5v7.5m2 -1v-7.5m2 0.5v7.5m2 0.5v-9.5m2 2v6.5m2 0.5v-7m2 -1v8.5m2 -0.5v-7m2 0.5v7m2 0v-7.5m2 0v8m2 0.5v-9m2 1.5v7.5m2 -0.5v-9.5m2 1v13.5m2 -6.5v-7m2 1v6m2 2v-9.5m2 -1v11m2 -2v-6m2 0v7m2 -1.5v-8.5m2 3v7m2 -0.5v-8.5m2 1.5v7.5m2 -0.5v-8.5m2 1v7m2 3v-13m2 3.5v6m2 1.5v-7m2 -1v8m2 -1v-7m2 0.5v9m2 -3v-6m2 -2v11.5m2 -4v-6.5m2 0.5v8.5m2 0.5v-9m2 -1v7.5m2 0v-8m2 0v10m2 -1.5v-6.5m2 0.5v5m2 0.5v-6m2 -1v7.5m2 2v-10m2 -2v9.5m2 -0.5v-7m2 -2v9.5m2 1v-8m2 0.5v7m2 1v-10.5m2 2.5v6.5m2 1.5v-10m2 2.5v6m2 1.5v-7.5m2 -1.5v8m2 -0.5v-8.5m2 1v8.5m2 -1v-5.5m2 -2.5v11m2 -2.5v-8m2 0v8.5m2 1.5v-9m2 -1.5v7.5m2 4.5v-12.5m2 1v8m2 0.5v-10.5m2 3v6m2 2.5v-8.5m2 0v7m2 1v-7m2 -1.5v8m2 0v-7m2 -1v7m2 0v-7m2 1.5v6m2 1.5v-11m2 2.5v7m2 -0.5v-7m2 -1.5v11.5m2 -3.5v-5.5m2 -2v8m2 2v-11.5m2 2.5v7m2 1v-6.5m2 -1.5v6.5m2 2v-9.5m2 1v7.5m2 0.5v-9m2 -1v9m2 1v-7m2 -1v6.5m2 0.5v-9m2 3v6m2 2.5v-8.5m2 -2v9m2 1.5v-8m2 -4.5v9.5m2 2v-7.5m2 -3.5v11m2 -0.5v-6.5m2 -2v7.5m2 -0.5v-8m2 0v12.5m2 -2v-9.5m2 1.5v5.5m2 0.5v-6m2 -0.5v7m2 0v-7m2 1v6m2 -0.5v-6.5m2 -0.5v7m2 1v-8.5m2 -2v10.5m2 1v-8m2 0.5v5m2 0v-5m2 -0.5v7m2 -1v-8.5m2 2v6m2 3v-8.5m2 -1.5v7m2 1.5v-8m2 1v12m2 -5.5v-6m2 -1.5v8.5m2 -1.5v-6.5m2 1v6.5m2 -0.5v-6.5m2 -1v8m2 0.5v-7.5m2 0v6m2 0v-6m2 0v5.5m2 0.5v-6m2 -1.5v8m2 0v-7.5m2 -2v8.5m2 4v-12.5m2 3v8m2 -1v-6.5m2 -2.5v9m2 -1.5v-8.5m2 -1.5v10m2 0.5v-7.5m2 0.5v8m2 -1v-7m2 -1.5v15.5m2 -5v-8.5m2 0v6m2 1v-7.5m2 -2.5v11m2 -0.5v-7m2 -2v8m2 1.5v-9m2 1v7m2 1v-7m2 -0.5v8.5m2 -0.5v-8m2 -0.5v7m2 0v-7.5m2 1v5.5m2 1.5v-9.5m2 2.5v5.5m2 2v-7.5m2 -2v8m2 0.5v-6.5m2 -1.5v8m2 1v-7.5m2 -3.5v10.5m2 -0.5v-7.5m2 0.5v6.5m2 1v-8m2 -2v9m2 -0.5v-5m2 0v7m2 -1v-7m2 -0.5v7m2 0v-5.5m2 -1.5v7.5m2 1v-8m2 0v6.5m2 0v-8.5m2 3v7m2 -1v-7m2 -1.5v17m2 -9v-6m2 -2v12.5m2 -4v-7m2 0v6.5m2 3v-11.5m2 0v9.5m2 1v-12m2 3.5v6.5m2 -0.5v-7m2 1v7.5m2 0.5v-7m2 0v7m2 1v-9.5m2 -4v16m2 -4.5v-6.5m2 -0.5v8m2 -1.5v-5.5m2 -2v8m2 -1v-6.5m2 1.5v5m2 1.5v-8m2 1.5v5.5m2 1v-8.5m2 -1v9m2 1.5v-10m2 1.5v9.5m2 -3v-5.5m2 -0.5v6m2 -0.5v-5.5m2 -2.5v10.5m2 -1v-7m2 -2v8m2 0v-5.5m2 -2v8m2 4v-12.5m2 -3v10.5m2 1.5v-9m2 0v7.5m2 0v-6.5m2 0v7.5m2 0v-8.5m2 1.5v8m2 -1v-7m2 -2v8m2 0v-5.5m2 -3v8.5m2 1v-6.5m2 -1.5v8.5m2 -1v-8.5m2 1.5v7.5m2 1v-8m2 -0.5v7m2 -0.5v-6.5m2 -1v11.5m2 -1.5v-8m2 -1.5v8m2 0v-7m2 -1v10m2 -1.5v-7.5m2 -3v9.5m2 3v-13m2 3v7.5m2 1.5v-8.5m2 1v6m2 2v-9.5m2 -2v9.5m2 0v-6.5m2 -1.5v9.5m2 -2.5v-5.5m2 -1v7m2 0v-8m2 1v7m2 0.5v-6.5m2 0v5.5m2 0.5v-6m2 0.5v6.5m2 -0.5v-7.5m2 0.5v6m2 2v-8.5m2 -1v10.5m2 -1v-8m2 -1.5v9m2 -0.5v-8.5m2 2v6m2 1.5v-8m2 1v6.5m2 0.5v-8m2 0v7.5m2 -1.5v-5.5m2 -1.5v9m2 -0.5v-7.5m2 1v6.5m2 -1.5v-10m2 1.5v16.5m2 -6.5v-8m2 0v7m2 1.5v-10.5m2 3v9m2 -3v-7m2 -2v9m2 2.5v-9m2 0.5v5.5m2 1.5v-8m2 0v7m2 1v-8m2 0v10m2 -2.5v-7.5m2 1.5v6m2 -1v-6m2 -1v7m2 0.5v-7m2 1v6.5m2 -0.5v-7m2 0.5v8m2 -1.5v-6.5m2 -1.5v9.5m2 1.5v-8.5m2 -1.5v9.5m2 -1v-7.5m2 -1v8.5m2 -2v-7m2 -1.5v10.5m2 0.5v-7.5m2 -4v10.5m2 -1v-7.5m2 0.5v10m2 -3v-6m2 -2v10m2 -0.5v-7.5" stroke="#e8853a" stroke-width="2" fill="none"/>
<rect x="378.0" y="259.1" width="3.0" height="28.3" fill="#c4a4ac" />
<text x="381.5" y="278.6" font-size="16.6" font-family='"Liberation Mono","DejaVu Sans Mono",monospace' fill="#868c94" textLength="27.8" lengthAdjust="spacingAndGlyphs" >CH4</text>
<circle cx="448.6" cy="273.3" r="7.3" fill="#e2a93c"/>
<path d="M460.5 269.8v5.5m2 5v-9.5m2 0v7m2 -1.5v-6m2 1v5.5m2 -1v-6.5m2 1.5v6m2 0.5v-6.5m2 -2.5v15m2 -8v-4m2 -2v8m2 -1v-5m2 -1v11m2 -5.5v-5.5m2 1v5m2 -1v-7m2 2.5v7m2 -2.5v-5m2 -0.5v6m2 0.5v-5m2 -1.5v8m2 -1v-7.5m2 2v4.5m2 -0.5v-5m2 0.5v5m2 0v-5m2 -5.5v10.5m2 -0.5v-4.5m2 -1.5v7m2 -0.5v-5m2 0.5v5.5m2 0v-7m2 0v7m2 -1.5v-6m2 1v12m2 -7v-5.5m2 -0.5v6m2 2v-6.5m2 0v5.5m2 -1v-6m2 -2v16m2 -7v-5.5m2 -0.5v5.5m2 1.5v-8.5m2 2.5v4m2 1.5v-6m2 -0.5v5.5m2 0v-7m2 2.5v8m2 -4v-4.5m2 0v4.5m2 0.5v-6.5m2 1.5v5.5m2 -0.5v-5m2 0.5v5m2 0v-5.5m2 0v6m2 -1.5v-4.5m2 0.5v4.5m2 1v-6.5m2 -0.5v5.5m2 2v-8.5m2 0v6.5m2 0v-6m2 -5v16m2 -4v-5.5m2 0.5v6.5m2 -1.5v-6m2 0.5v5m2 0.5v-5.5m2 -2v8m2 -0.5v-7m2 0v7m2 1v-6.5m2 -2v6.5m2 1.5v-11m2 4v6.5m2 -1v-6m2 1v5.5m2 0.5v-5m2 -3v8m2 -1v-6m2 0.5v5.5m2 1v-5.5m2 -3v11m2 -3v-6m2 0.5v6m2 6.5v-12m2 0v4.5m2 1v-6.5m2 1.5v5.5m2 -1.5v-4m2 -1v7.5m2 -1v-7.5m2 2v4m2 0.5v-4.5m2 -1.5v7m2 -1.5v-5m2 0.5v6m2 -1v-5m2 -0.5v5.5m2 1v-8m2 2.5v5.5m2 -1v-6.5m2 -2v9m2 0v-8.5m2 3v6.5m2 -1v-6.5m2 0.5v6m2 -1v-5m2 -0.5v6m2 6.5v-16.5m2 4.5v5m2 0v-5m2 0.5v12m2 -7.5v-5.5m2 0.5v5.5m2 1v-5.5m2 -1v5m2 4.5v-12m2 3.5v5m2 1.5v-7.5m2 -0.5v6m2 1.5v-6m2 0v4.5m2 0v-7.5m2 3v4.5m2 -0.5v-6m2 0.5v8m2 -1v-6.5m2 -0.5v8.5m2 -2.5v-7m2 2v4.5m2 3v-8.5m2 1v5m2 -0.5v-4.5m2 0.5v7m2 -1.5v-6m2 -1v7.5m2 5v-14.5m2 3.5v5m2 1.5v-8.5m2 1v6m2 -0.5v-6m2 -1.5v9m2 7.5v-13.5m2 -1v6m2 1.5v-8.5m2 0v7.5m2 2.5v-9m2 -1.5v7m2 0.5v-7m2 2v5.5m2 0v-6.5m2 1v5m2 2.5v-10m2 2.5v4m2 2.5v-10m2 2.5v5m2 1.5v-6m2 0v6m2 -0.5v-7m2 1v5.5m2 -0.5v-4m2 -1.5v6m2 1v-6m2 -0.5v5.5m2 2v-8.5m2 2v4.5m2 1.5v-7m2 0.5v5m2 1v-6.5m2 -0.5v6.5m2 0.5v-7.5m2 0.5v6.5m2 -1v-4m2 0v4m2 1v-6m2 -0.5v5.5m2 0.5v-6m2 0v5.5m2 1v-7.5m2 2v7m2 -2.5v-8m2 1v17m2 -10v-4.5m2 -1.5v6m2 0v-6m2 0.5v8m2 0v-9m2 1.5v6m2 -0.5v-6.5m2 0.5v6.5m2 1.5v-7m2 -1v7.5m2 -2v-5.5m2 -2v8.5m2 -0.5v-5m2 -1v6.5m2 0v-5.5m2 -2.5v10.5m2 -2.5v-6m2 0v5.5m2 2v-6.5m2 -0.5v5.5m2 0.5v-9.5m2 3.5v5.5m2 0v-6m2 0v6.5m2 -1.5v-4m2 -0.5v6m2 -0.5v-5m2 0v4m2 1v-7m2 -2v8m2 1.5v-8m2 1.5v6m2 1v-7.5m2 1v4.5m2 0v-4.5m2 0v5.5m2 -0.5v-6m2 0v6m2 0v-4.5m2 -1v5.5m2 1.5v-6m2 -1v6m2 0.5v-6m2 -0.5v6m2 1v-7.5m2 1v6m2 -1.5v-4.5m2 0.5v5m2 0.5v-7.5m2 1.5v4.5m2 0.5v-5.5m2 0.5v6m2 3v-14.5m2 6v4m2 0v-5.5m2 1.5v4.5m2 0v-7m2 1.5v6m2 0v-7.5m2 2.5v6m2 -2v-7m2 2v6.5m2 0.5v-8.5m2 1.5v6.5m2 -1v-5m2 0.5v4m2 0v-4m2 -0.5v5.5m2 -0.5v-5m2 -1v6.5m2 -0.5v-5m2 -1.5v7.5m2 -0.5v-5.5m2 0.5v4.5m2 2.5v-9m2 1v5.5m2 1v-9m2 3v4.5m2 2.5v-7m2 -2.5v8m2 1v-6.5m2 0v6.5m2 -1.5v-6m2 -2v9.5m2 -1v-5.5m2 -3.5v14m2 -1.5v-13.5m2 4.5v5m2 0v-5.5m2 0v5.5m2 1v-8.5m2 2.5v4.5m2 1.5v-7m2 0.5v7.5m2 -1.5v-9m2 1.5v8m2 -1v-5m2 -1v8m2 -2.5v-6.5m2 0.5v6.5m2 3v-8m2 -1.5v7m2 0v-6.5m2 0.5v6m2 -1v-6.5m2 1.5v7m2 4.5v-12.5m2 1.5v4.5m2 1v-5m2 -0.5v6m2 2v-10m2 1.5v6m2 -1v-4.5m2 -1v6m2 1v-7m2 1v5.5m2 0.5v-6.5m2 0.5v5.5m2 0v-6.5m2 1.5v5m2 0.5v-6m2 0.5v6m2 -1.5v-7m2 2.5v5.5m2 0v-6m2 0v4.5m2 0.5v-6m2 1v6m2 -1.5v-4m2 -1v6m2 1v-7.5m2 -2v10m2 -1v-6m2 -1v6.5m2 0v-6m2 0.5v7m2 -2.5v-4.5m2 0.5v4m2 0v-4m2 -1.5v6.5m2 0v-6m2 1v5.5m2 -1v-5m2 0v5m2 -0.5v-4.5m2 -1v6.5m2 -1v-4.5m2 0.5v5m2 0v-7.5m2 1.5v7.5m2 -1.5v-6.5m2 1.5v4.5m2 2.5v-7.5m2 0.5v5m2 -1v-4m2 -2.5v7m2 -0.5v-4m2 -2.5v7.5m2 0.5v-5.5m2 -1v6.5m2 -1.5v-4.5m2 -0.5v11m2 -5v-5m2 0v5.5m2 -0.5v-5.5m2 -1.5v6.5m2 0.5v-7m2 1v6.5m2 -0.5v-6.5m2 0.5v5m2 0.5v-4.5m2 -1v5.5m2 0.5v-5.5m2 0v6m2 0v-6m2 -4v17m2 -7v-6.5m2 -0.5v6.5m2 -0.5v-7m2 -2v11m2 -1v-7.5m2 -0.5v6.5m2 0.5v-9.5m2 2v7.5m2 0v-4.5m2 -2v6.5m2 8.5v-16.5m2 1.5v7m2 -1v-5.5m2 -1.5v8.5m2 0v-6m2 0.5v4.5m2 0v-4.5m2 -0.5v5m2 1.5v-6.5m2 -1v6m2 0v-5.5m2 0v6m2 1v-6.5m2 0.5v4m2 1.5v-5.5m2 -1.5v7.5m2 -1.5v-6m2 0v5.5m2 2.5v-8.5m2 0.5v5.5m2 0v-5.5m2 0.5v10.5m2 -4v-5.5m2 -1.5v8m2 -2.5v-5m2 -2.5v8.5m2 -1v-4m2 0v4.5m2 5v-14m2 2v7.5m2 -1v-5m2 0v6.5m2 -1v-6.5m2 1.5v5m2 -0.5v-6.5m2 2.5v4.5m2 0v-7.5m2 2v6m2 0.5v-5.5m2 0v6m2 3v-10.5m2 0v6.5m2 0v-5m2 -2v7m2 -1v-5m2 1v5m2 0v-6m2 0v6.5m2 -1v-5m2 -1v5.5m2 2v-6.5m2 0v6.5m2 -1.5v-7m2 1.5v5m2 0v-4.5m2 -1.5v6m2 1.5v-8m2 1.5v8m2 -2v-6m2 0v8m2 -1.5v-6.5m2 1v5m2 0.5v-7m2 1.5v5.5m2 0v-6.5m2 0.5v5m2 -0.5v-4.5m2 0.5v4.5m2 0v-7.5m2 1.5v6m2 0v-5m2 0v5m2 5v-12.5m2 2.5v5m2 0v-5m2 -1v7m2 0.5v-6m2 -0.5v5m2 1v-6m2 -0.5v6m2 0v-6.5m2 1.5v4.5m2 1v-7.5m2 1.5v5.5m2 0v-6.5m2 0v5.5m2 0v-4m2 -1v6.5m2 -0.5v-5m2 -1v6.5m2 -1v-5m2 0v5.5m2 1v-6.5m2 -0.5v5.5m2 1.5v-6.5m2 -0.5v5.5m2 -0.5v-4.5m2 0v5m2 3v-8.5m2 -1v6.5m2 0v-5.5m2 0.5v7m2 -1v-7.5m2 0.5v6m2 0v-5m2 -0.5v12m2 -3.5v-8m2 -2v8m2 -1v-5m2 -0.5v5.5m2 -0.5v-6.5m2 1v10.5m2 -2v-8m2 -0.5v6m2 1v-5.5m2 0v4m2 1v-6.5m2 0.5v7m2 -1.5v-6m2 0.5v7m2 -1v-5.5m2 0v5.5m2 4.5v-16m2 6v6m2 -0.5v-5.5m2 -1v5.5m2 1.5v-5.5m2 -0.5v6.5m2 0v-6m2 -3.5v8m2 -0.5v-4m2 -1v7m2 3.5v-10m2 0.5v6.5m2 -2.5v-4m2 -1v5.5m2 0.5v-5m2 -0.5v5.5m2 -0.5v-7m2 2v5.5m2 2v-11m2 1.5v7m2 0.5v-5.5m2 0.5v5.5m2 0v-6.5m2 0v5m2 0.5v-6m2 -1v6.5m2 0.5v-4.5m2 -0.5v8m2 4.5v-13m2 1v5m2 -0.5v-5.5m2 -1v7m2 0v-6m2 0v5.5m2 0.5v-6m2 0.5v5m2 0.5v-6.5m2 0.5v5m2 0.5v-8.5m2 2.5v7.5m2 -1v-5m2 -0.5v5.5m2 1.5v-10.5m2 4v6m2 -1.5v-5m2 -4.5v16m2 -6v-5m2 0v5m2 -1v-5m2 -0.5v6m2 0.5v-7m2 2v6.5m2 -2.5v-4.5m2 0v6.5m2 -1v-7m2 2v6.5m2 -2v-4.5m2 0v6m2 -1.5v-6m2 1v6.5m2 -0.5v-6m2 -1.5v9m2 -2.5v-4.5m2 0v4m2 2.5v-7m2 -0.5v5.5m2 -0.5v-5.5m2 0.5v6m2 1.5v-7.5m2 1v5.5m2 -0.5v-6m2 0.5v6.5m2 -1v-6m2 -2v9m2 -1.5v-5m2 0v5m2 0v-5.5m2 0v5.5m2 1v-7m2 0.5v5.5m2 0.5v-5.5m2 -1v6m2 0v-4.5m2 -1.5v5.5m2 5.5v-13m2 3v5m2 1v-5.5m2 0v5.5m2 -1v-5.5m2 -0.5v7m2 -1.5v-4.5m2 -3.5v9m2 0v-5.5m2 0.5v5m2 0v-6m2 1v4.5m2 0.5v-5.5m2 -1v5.5m2 0.5v-7m2 -3.5v13.5m2 -2.5v-11.5m2 6.5v4m2 1v-5m2 -0.5v6m2 -1v-5.5m2 -1.5v7m2 -0.5v-4.5m2 0v5.5m2 -1v-4.5m2 0v5m2 -0.5v-4.5m2 -1.5v8.5m2 -2v-5m2 -1.5v6.5m2 1.5v-6m2 0v4m2 0.5v-5.5m2 0.5v4.5m2 1v-6.5m2 1.5v6.5m2 -1.5v-6m2 1v4.5m2 2v-8m2 0.5v6m2 -0.5v-5m2 0v5m2 1v-5.5m2 -1v6.5m2 0v-8.5m2 1.5v8m2 -1v-6m2 0v4.5m2 1.5v-5.5m2 0v5.5m2 0v-5.5m2 -6.5v10.5m2 0v-7.5m2 3.5v4.5m2 -0.5v-4.5m2 -0.5v5m2 1.5v-9.5m2 2.5v7.5m2 -0.5v-6.5m2 -1v8m2 -2v-6.5m2 2v5m2 0v-6.5m2 2v4m2 1v-5.5m2 -0.5v6m2 -1v-5m2 0.5v5.5m2 0v-5.5m2 -2.5v8.5m2 -1v-5m2 -1v6m2 0v-4.5m2 -0.5v4.5m2 1v-5m2 -1.5v6m2 2v-8.5m2 2v4.5m2 8v-15m2 1.5v6m2 0.5v-6.5m2 -0.5v6.5m2 1v-7.5m2 1.5v4m2 0.5v-5m2 0.5v4.5m2 0.5v-5m2 -0.5v5.5m2 -1v-5.5m2 1v8.5m2 -2v-8m2 0.5v6m2 -0.5v-5m2 -1.5v7.5m2 0.5v-9m2 2v8m2 -0.5v-8.5m2 1.5v6.5m2 2.5v-11.5m2 2.5v7.5m2 -2.5v-4.5m2 0.5v4.5m2 -0.5v-5m2 -0.5v6m2 0v-6.5m2 0.5v6.5m2 -1v-4m2 -0.5v6m2 0.5v-6.5m2 0v5m2 -0.5v-5m2 0v5m2 0.5v-6.5m2 -0.5v7m2 2.5v-7.5m2 -1.5v6m2 1v-7.5m2 1v6m2 0v-6.5m2 1.5v5.5m2 -0.5v-5.5m2 1v5m2 -0.5v-4.5m2 0v6m2 4.5v-12.5m2 2v5.5m2 -0.5v-5.5m2 -1v7.5m2 0v-7m2 0.5v4.5m2 0.5v-5.5m2 0.5v5.5m2 0.5v-6m2 0.5v11m2 -7v-4m2 -1v6.5m2 -1v-5m2 -0.5v5m2 0v-5.5m2 -0.5v7m2 0.5v-6m2 -0.5v9.5m2 -4v-7m2 -0.5v7m2 1v-5.5m2 -2v7m2 2.5v-7.5m2 0.5v6.5m2 -1.5v-7m2 1v5m2 1.5v-6.5m2 0.5v6.5m2 -0.5v-6m2 -1v6.5m2 -1v-4m2 -0.5v6.5m2 -1v-5m2 -2.5v8.5m2 -1v-7.5m2 2.5v5m2 0.5v-6m2 -0.5v6m2 -0.5v-5m2 -1v7m2 1.5v-8m2 1v5m2 -0.5v-4.5m2 0v5m2 0.5v-7.5m2 0v7m2 0v-6.5m2 1v7.5m2 -2v-5.5m2 -0.5v6m2 0v-5m2 -1v5.5m2 1v-6.5m2 -0.5v6.5m2 -1v-4m2 -0.5v5.5m2 -0.5v-6m2 -0.5v7m2 0v-5.5m2 0v5.5m2 -1v-4m2 0v4m2 1v-8.5m2 3v6m2 0.5v-6.5m2 -1.5v8.5m2 -2.5v-5m2 0v5.5m2 0.5v-5m2 -0.5v5m2 -0.5v-4m2 0v4m2 0.5v-5m2 0.5v4.5m2 0.5v-5m2 -0.5v6m2 0.5v-6m2 -1.5v6m2 -0.5v-4.5m2 -0.5v7m2 -1.5v-5m2 -0.5v5m2 1v-7m2 -1v7.5m2 -0.5v-5m2 0.5v5.5m2 0v-6m2 0v5.5m2 0v-6.5m2 -1v7m2 1.5v-6m2 -1v6m2 -0.5v-5.5m2 1v5.5m2 2v-8m2 1v4.5m2 0v-5.5m2 0.5v5.5m2 0v-5m2 -0.5v5m2 0.5v-5.5m2 0v5m2 1v-5.5m2 -0.5v7m2 -1.5v-5.5m2 -1v8m2 -2v-6.5m2 1v6.5m2 -1v-5.5m2 -0.5v7m2 -1.5v-5m2 0v5.5m2 2v-7.5m2 -0.5v7.5m2 -1.5v-5.5m2 -1.5v7m2 -0.5v-4m2 -3v7.5m2 0v-5m2 -1.5v7m2 -0.5v-6.5m2 -1.5v9m2 0v-6m2 0.5v4.5m2 -0.5v-4m2 -0.5v4.5m2 1.5v-6.5m2 0v8m2 -2.5v-5m2 0v5m2 -0.5v-10m2 4.5v6m2 2.5v-9m2 0.5v6.5m2 -0.5v-4.5m2 -0.5v5.5m2 -0.5v-6m2 1.5v4m2 2v-6.5m2 0.5v5m2 0v-6.5m2 -2.5v13.5m2 -2.5v-7.5m2 -1v5.5m2 1v-5.5m2 -0.5v5m2 0.5v-5m2 -1v5.5m2 2v-7m2 0.5v6.5m2 -1v-8m2 3v4.5m2 0v-7.5m2 1v8m2 -0.5v-5.5m2 -0.5v6m2 5.5v-15.5m2 4.5v7.5m2 -2v-6.5m2 0v8m2 -1.5v-6.5m2 0.5v6m2 1.5v-7m2 -1v6m2 0v-6.5m2 1.5v4m2 1.5v-7m2 -0.5v6m2 0.5v-5m2 0.5v5m2 -0.5v-7.5m2 3v5m2 0.5v-7m2 1v4.5m2 0v-6.5m2 2.5v4.5m2 0v-7m2 2.5v5.5m2 -0.5v-5.5m2 0v5.5m2 0.5v-6m2 0.5v4m2 1v-6m2 1v5.5m2 -1.5v-5.5m2 0.5v6.5m2 0v-5.5m2 0v6m2 -1v-5.5m2 -0.5v5.5m2 1.5v-6.5m2 0v5m2 0v-5m2 -0.5v6.5m2 0.5v-6m2 -2v7.5m2 -1.5v-5m2 0v5.5m2 3.5v-10m2 2v4.5m2 1v-6m2 0v5.5m2 -1v-4m2 -2v9m2 -3v-6m2 0.5v7m2 -1v-4.5m2 -0.5v6m2 -1v-4.5m2 -0.5v5m2 -0.5v-5m2 -1v6m2 0.5v-5m2 -3v9.5m2 1.5v-10m2 1.5v6m2 0v-6m2 1v4.5m2 3.5v-8m2 -0.5v7m2 -1.5v-5m2 0v6m2 -1v-5.5m2 -2v8m2 -1.5v-7" stroke="#c4a4ac" stroke-width="2" fill="none"/>
<rect x="378.0" y="287.4" width="3.0" height="28.3" fill="#e23b30" />
<text x="381.5" y="306.8" font-size="16.6" font-family='"Liberation Mono","DejaVu Sans Mono",monospace' fill="#868c94" textLength="27.8" lengthAdjust="spacingAndGlyphs" >CH5</text>
<circle cx="448.6" cy="301.5" r="7.3" fill="#e2a93c"/>
<path d="M460.5 299.0v7m2 2v-11m2 1v6m2 0.5v-6m2 0v7m2 -1v-6m2 -1v7m2 0v-7m2 1.5v5m2 1.5v-7m2 0v5.5m2 3v-8.5m2 -6v11m2 2v-7.5m2 -0.5v6.5m2 1.5v-7.5m2 -2v13m2 -2.5v-7m2 -0.5v5m2 2.5v-9m2 -0.5v7.5m2 -0.5v-6m2 1v6m2 -1v-6m2 -2.5v8.5m2 2.5v-9m2 -4.5v15.5m2 -2v-10m2 1.5v6m2 1v-12m2 4.5v9m2 -2v-6.5m2 -2v10.5m2 -2.5v-6m2 0v8m2 -2v-8m2 0v12m2 -1.5v-8m2 0.5v5m2 2v-6.5m2 -0.5v5.5m2 1v-10m2 2v7m2 -0.5v-6.5m2 -1v8.5m2 0v-7.5m2 0.5v8m2 -1v-9m2 2.5v6.5m2 -0.5v-5.5m2 -2v8m2 0.5v-6.5m2 0.5v5.5m2 -0.5v-5m2 -3v8m2 0.5v-5.5m2 -2v8m2 -1.5v-5.5m2 0v7m2 0v-8.5m2 1v6m2 0.5v-7m2 1v5.5m2 0.5v-7.5m2 1.5v13.5m2 -7.5v-7m2 0.5v9m2 3v-11m2 0v5m2 2v-7.5m2 -0.5v7.5m2 -2v-5.5m2 -6.5v18.5m2 -4.5v-8.5m2 -1v8.5m2 0.5v-7m2 0v5.5m2 0.5v-7.5m2 -4v18m2 -6v-5.5m2 -1.5v7.5m2 4v-15.5m2 5.5v5.5m2 -1v-7.5m2 1.5v7m2 0.5v-6.5m2 0.5v6m2 4.5v-15.5m2 4.5v6.5m2 -1v-5m2 -0.5v7m2 -1.5v-5m2 -1v6.5m2 -0.5v-6.5m2 1.5v7.5m2 -1v-6.5m2 -0.5v6m2 2v-9.5m2 1v6m2 1v-8m2 1v7.5m2 -0.5v-7m2 1v6m2 0.5v-8m2 1v6.5m2 0v-7m2 1v5.5m2 0v-7.5m2 0.5v9m2 -2.5v-6m2 1.5v4m2 2v-6.5m2 -2v7.5m2 1v-8.5m2 -4.5v17m2 -5.5v-6m2 0.5v5.5m2 0v-6m2 -1.5v8m2 2.5v-8m2 0v7m2 1v-9m2 -0.5v7m2 0.5v-8m2 1.5v6.5m2 0v-6m2 -2v7.5m2 -1v-5.5m2 -0.5v7.5m2 -0.5v-6m2 -1.5v8m2 0v-6.5m2 0.5v5m2 4.5v-12.5m2 2.5v6.5m2 -0.5v-5.5m2 -0.5v5.5m2 0v-6m2 1.5v5m2 2.5v-11.5m2 3.5v6m2 -1.5v-7m2 2.5v7m2 -2v-5m2 -0.5v8.5m2 -2v-6.5m2 0.5v5m2 0v-6m2 -8v14m2 0.5v-5.5m2 -0.5v6m2 0v-5.5m2 0v6m2 0.5v-8m2 0v6.5m2 1v-6m2 -1.5v7.5m2 -1v-5m2 0v6m2 -1v-5m2 0v5.5m2 3v-9.5m2 1v6m2 -0.5v-6.5m2 -1v7m2 0v-6.5m2 1v5.5m2 0.5v-5m2 -3.5v15m2 -5.5v-8m2 1.5v6.5m2 2.5v-16.5m2 7v5m2 2v-7m2 0.5v5m2 0v-5.5m2 0.5v6m2 -1v-5.5m2 0.5v8m2 -3v-6m2 -0.5v9.5m2 -1.5v-7m2 -1.5v7m2 0v-7.5m2 2.5v5.5m2 -0.5v-5m2 -5v10m2 4v-10.5m2 0v8m2 1.5v-8.5m2 -3v11m2 -0.5v-8.5m2 1v6.5m2 -0.5v-5.5m2 -2v7.5m2 0.5v-8m2 2v5.5m2 -0.5v-6m2 -1v13m2 -3.5v-10m2 1v8m2 -1.5v-5.5m2 0.5v6m2 0v-7.5m2 0v6.5m2 0.5v-6.5m2 0.5v7m2 2v-9m2 0.5v5m2 1.5v-7m2 1v4.5m2 0v-7m2 1.5v5.5m2 0.5v-5.5m2 -0.5v5.5m2 0v-6m2 0v6m2 0.5v-5.5m2 -0.5v7m2 -1.5v-6m2 0.5v5.5m2 1.5v-7m2 -1v8m2 0v-7m2 0.5v7.5m2 1v-8.5m2 -1v6.5m2 -0.5v-5.5m2 0v5.5m2 0v-6.5m2 1.5v8m2 -1v-10m2 2.5v5.5m2 0v-6m2 0.5v8.5m2 -2v-5.5m2 -0.5v6.5m2 1v-10.5m2 2v8.5m2 -2v-6.5m2 0.5v10m2 -3.5v-7m2 -1v7m2 0v-4.5m2 0v7.5m2 0v-10.5m2 1.5v6m2 0v-5m2 -0.5v6m2 1v-6.5m2 0v7m2 -1v-6m2 0v7m2 -1v-6m2 0v4.5m2 2v-6.5m2 -0.5v7m2 -1v-6m2 0v6.5m2 -1.5v-5m2 -0.5v8m2 -2v-5.5m2 -0.5v10m2 -2.5v-7m2 0v5.5m2 8.5v-19m2 4v6.5m2 0v-8.5m2 3.5v4.5m2 1.5v-6m2 -2v6.5m2 1.5v-8m2 0v7.5m2 0.5v-6.5m2 -4.5v12m2 3.5v-14m2 3.5v5.5m2 0v-6m2 0v5.5m2 5.5v-19.5m2 9v5m2 0.5v-5.5m2 -1v6.5m2 -0.5v-5.5m2 -1v8m2 -1v-12m2 6v5m2 1.5v-7m2 0.5v7.5m2 -2v-5m2 -1.5v7.5m2 -0.5v-7m2 1.5v6m2 1v-9m2 2v5m2 -0.5v-6m2 1.5v4.5m2 1.5v-5.5m2 -2.5v8.5m2 -2v-6m2 0v7m2 0v-9.5m2 3v5.5m2 2v-7.5m2 1v6m2 0v-8m2 2v6m2 -1v-5.5m2 -1v6.5m2 0v-6.5m2 0.5v5.5m2 2v-8m2 0.5v6.5m2 2v-8.5m2 -1.5v8m2 1v-7m2 0v6.5m2 1.5v-7m2 -3v9m2 -1.5v-5m2 0v5m2 1.5v-7m2 -2v8.5m2 -0.5v-6m2 -1v15.5m2 -9v-4.5m2 -1.5v5.5m2 1v-9m2 2.5v8.5m2 -2v-8m2 2.5v7m2 -0.5v-6.5m2 -0.5v5.5m2 1.5v-7m2 0.5v5.5m2 2v-7.5m2 0v5.5m2 0v-7m2 -0.5v7.5m2 5v-10m2 -2v6.5m2 0v-5.5m2 1v5.5m2 -1v-6m2 -1.5v10m2 -2v-5.5m2 -6v15m2 -3v-6m2 -2v7m2 1.5v-7m2 0v7m2 -1.5v-7m2 1v7.5m2 0.5v-9.5m2 2v7m2 2v-9m2 -1v6.5m2 1v-7m2 0v10.5m2 -4.5v-6.5m2 0.5v13m2 -7v-6m2 1v5m2 0v-5.5m2 -2v7m2 0.5v-6m2 0v6.5m2 0v-8m2 -3v10.5m2 1.5v-6.5m2 -1v7m2 3v-11m2 1v7.5m2 -1.5v-6m2 1.5v5m2 0.5v-6.5m2 -1.5v7.5m2 0v-5.5m2 -2v8.5m2 -0.5v-9m2 3v6m2 -1v-5m2 -2v8m2 0.5v-6.5m2 -5v12.5m2 -1v-7m2 -7.5v17.5m2 -3v-7m2 0.5v6.5m2 -1.5v-4.5m2 -0.5v5.5m2 1v-7.5m2 -6.5v16m2 -2.5v-7m2 0.5v7m2 1.5v-9m2 0v7m2 1.5v-9m2 0.5v6.5m2 3.5v-8.5m2 -0.5v7m2 -2v-7.5m2 2.5v7.5m2 -2v-8.5m2 2.5v7m2 -0.5v-6.5m2 0.5v5m2 2v-10m2 1.5v6.5m2 1.5v-6.5m2 0v5m2 2.5v-12m2 3v8.5m2 -1.5v-7.5m2 -1.5v13m2 -3.5v-6m2 -1v8m2 0v-8.5m2 0.5v8.5m2 -2.5v-7m2 -4v15.5m2 3.5v-17.5m2 3.5v7m2 3v-12m2 1.5v7.5m2 -1v-5m2 -1.5v8.5m2 -1v-16m2 9.5v7.5m2 0.5v-12m2 3.5v8m2 -0.5v-6.5m2 -4v8.5m2 1.5v-8.5m2 2v6m2 0v-7m2 0.5v6m2 1v-6m2 -2v10m2 -1.5v-7.5m2 -0.5v10m2 -3.5v-5m2 -2v7.5m2 0v-5.5m2 0v5.5m2 0v-7.5m2 1v6m2 0.5v-7m2 0v6.5m2 5v-14m2 4.5v5m2 -0.5v-5.5m2 0v5.5m2 1.5v-6.5m2 -1v9m2 -3v-8m2 2.5v6m2 0v-6m2 -1v6m2 0.5v-7m2 2v7.5m2 -0.5v-7m2 0v4.5m2 0.5v-5m2 0v8.5m2 0v-9m2 0.5v6m2 0v-7.5m2 -0.5v7.5m2 -0.5v-5.5m2 0.5v5.5m2 0v-6m2 0v5.5m2 1v-7m2 -1.5v10.5m2 -0.5v-9m2 0.5v7m2 1.5v-9.5m2 0v7m2 0v-6m2 0.5v5.5m2 0v-5.5m2 -7v18.5m2 -5v-8.5m2 0.5v7m2 0.5v-5.5m2 -2v7.5m2 1.5v-8.5m2 1.5v5.5m2 0v-7m2 1.5v6m2 -1v-7m2 2v5m2 4v-9.5m2 -1.5v7m2 2.5v-7.5m2 0v6m2 0.5v-10m2 3.5v5.5m2 -0.5v-6.5m2 0.5v7m2 -1v-6.5m2 2v6.5m2 -1.5v-5.5m2 0v5.5m2 -0.5v-5m2 -0.5v6.5m2 -1v-6m2 -1v7.5m2 0v-6.5m2 1v6m2 -1.5v-5.5m2 -2.5v12.5m2 -2.5v-10.5m2 3v7.5m2 -0.5v-6.5m2 0.5v5m2 0v-5m2 -1v7.5m2 -1.5v-5m2 -5v10m2 0v-6m2 0.5v6.5m2 0.5v-6.5m2 0v5.5m2 0v-6.5m2 -3v10m2 0v-7m2 1v4.5m2 7v-17m2 4v7m2 0v-7m2 1v8m2 -1.5v-8.5m2 1.5v7m2 1.5v-9.5m2 1v6m2 0.5v-6m2 -0.5v6.5m2 -0.5v-6m2 1.5v5.5m2 -0.5v-6m2 0.5v5m2 1.5v-7m2 -1v8m2 -1v-6.5m2 0.5v6.5m2 1v-8m2 -0.5v6.5m2 3v-8.5m2 -1v8.5m2 -1v-9.5m2 3v5.5m2 1v-10m2 2v9.5m2 -2.5v-5m2 -0.5v7m2 -1v-5.5m2 -2.5v9m2 0v-6.5m2 -0.5v6m2 0v-7.5m2 1v6m2 2v-7m2 0.5v8.5m2 -4v-6.5m2 1v7m2 2.5v-11m2 1.5v7.5m2 -2v-6m2 0.5v7m2 -1.5v-6m2 0.5v7m2 0.5v-8.5m2 1v5.5m2 2.5v-8m2 -1.5v7.5m2 0.5v-6.5m2 -0.5v6m2 1v-6m2 -0.5v7m2 -1.5v-6m2 -1.5v9m2 1v-7.5m2 -0.5v8m2 -2v-5.5m2 -0.5v6m2 -0.5v-6.5m2 -0.5v7.5m2 -0.5v-6.5m2 1.5v6.5m2 -1v-5.5m2 0v5m2 0v-8m2 3.5v5m2 1.5v-8m2 -0.5v15.5m2 -8v-8.5m2 3v7m2 -2.5v-5m2 -0.5v6m2 3v-8m2 -0.5v6.5m2 -1v-6m2 -2v9.5m2 -0.5v-14m2 5v9m2 -1v-6m2 -1.5v8.5m2 -1.5v-8.5m2 0v8.5m2 1.5v-10.5m2 4v6m2 0.5v-6.5m2 -1v6m2 0.5v-6.5m2 1v7m2 -2v-6.5m2 1v5.5m2 -0.5v-4.5m2 0v6m2 0.5v-7m2 -0.5v7.5m2 -0.5v-8m2 1.5v5.5m2 1v-7m2 0v7.5m2 0v-8m2 -8.5v22.5m2 -6.5v-6m2 -4v10.5m2 -1.5v-5m2 -0.5v7.5m2 -2v-6m2 0.5v6.5m2 -0.5v-7m2 1.5v6.5m2 0.5v-9.5m2 -4.5v12.5m2 0.5v-7.5m2 1v7.5m2 -2v-5m2 -0.5v6.5m2 -0.5v-5m2 -1.5v6m2 7.5v-22m2 7.5v8m2 0.5v-7m2 -1v7m2 -0.5v-5m2 -0.5v7.5m2 -2v-5m2 -1v8m2 -2v-6.5m2 0.5v6m2 1.5v-13m2 6.5v5m2 1v-6m2 -0.5v5.5m2 0v-6m2 1v5m2 0v-5.5m2 0v5.5m2 1v-6m2 -0.5v5.5m2 2.5v-7.5m2 0.5v7m2 -1v-8m2 0v9m2 -0.5v-7.5m2 0v7.5m2 0v-8.5m2 1.5v5m2 1v-7m2 -1.5v7.5m2 8v-15m2 -0.5v11m2 -3v-6m2 -3.5v9.5m2 0v-5.5m2 -1.5v6.5m2 0.5v-6.5m2 -0.5v7.5m2 0v-6.5m2 -1v7.5m2 0.5v-6.5m2 0v9m2 -2.5v-10m2 1.5v7m2 4v-9.5m2 -2v10m2 0v-9m2 1.5v5m2 -0.5v-5m2 0.5v6m2 -0.5v-6.5m2 0.5v5.5m2 1.5v-7m2 0.5v6.5m2 -1.5v-6.5m2 0.5v8m2 -1.5v-6m2 0.5v6m2 -0.5v-5.5m2 -3.5v9m2 0v-6.5m2 -1v7m2 0.5v-5m2 -1v5.5m2 2.5v-7m2 -0.5v6.5m2 0v-6.5m2 0v6m2 -1v-5m2 -6.5v15.5m2 -4v-6m2 1v5m2 0v-6.5m2 1.5v5m2 2v-8m2 1v10m2 -4.5v-5.5m2 -1.5v7m2 -0.5v-7m2 1v6m2 0v-8m2 3.5v6m2 -1v-7m2 2v5m2 1v-6.5m2 0v8.5m2 -3v-8m2 0.5v8m2 0.5v-9m2 2v6m2 -1v-4.5m2 -1.5v7.5m2 -1v-6m2 1.5v7m2 -1.5v-6.5m2 -3.5v11.5m2 0.5v-8m2 -0.5v5m2 2v-7.5m2 -0.5v8m2 0v-7.5m2 1v6m2 -0.5v-7m2 -0.5v8.5m2 0v-6.5m2 0v6m2 2v-9m2 -0.5v6.5m2 0v-6.5m2 1v6m2 0.5v-7.5m2 2v5m2 0v-5.5m2 0v7.5m2 -2.5v-5.5m2 0.5v7m2 -0.5v-6.5m2 -1v5.5m2 1v-5.5m2 -0.5v6m2 1v-9m2 2v7.5m2 0v-7m2 -1.5v8.5m2 -2.5v-6m2 0.5v6.5m2 3v-11m2 2v7.5m2 -1v-7m2 0v7m2 -1v-5m2 -1.5v6.5m2 0v-5.5m2 -1v8m2 2.5v-12m2 2v7m2 0v-7.5m2 -0.5v8m2 10v-16m2 0v6.5m2 -1.5v-6m2 0v7m2 0v-6.5m2 0.5v6m2 -1v-5m2 -0.5v8m2 -2v-8.5m2 2v6.5m2 0v-5m2 -1.5v7.5m2 -0.5v-9.5m2 2.5v8m2 -1.5v-6.5m2 -1v7.5m2 3v-10.5m2 1v6m2 0.5v-8.5m2 3v7m2 -1.5v-5.5m2 -0.5v6.5m2 0v-7m2 -1v8m2 0v-6.5m2 -1v7m2 0v-5.5m2 -1.5v6.5m2 0v-5m2 -1v6m2 2v-10.5m2 1.5v7.5m2 0v-5.5m2 -0.5v5.5m2 0.5v-6m2 0.5v7m2 5v-16m2 4.5v4.5m2 1.5v-7.5m2 1v4.5m2 1.5v-6.5m2 0.5v6m2 0.5v-6.5m2 -0.5v7m2 -1v-5.5m2 0v7m2 -1v-7m2 0v6m2 0v-6.5m2 1.5v6m2 0.5v-11m2 4.5v6.5m2 -0.5v-6.5m2 0.5v5.5m2 0v-7m2 2v9.5m2 -4.5v-5.5m2 0v5m2 0.5v-6.5m2 -2.5v9m2 0.5v-6m2 0v5.5m2 -0.5v-9.5m2 4v7.5m2 -2v-6m2 1v6m2 -1v-5m2 -0.5v5.5m2 2v-7m2 0v5.5m2 1v-8m2 -1v7.5m2 0v-8.5m2 1v8m2 -1v-4.5m2 -1.5v6.5m2 0.5v-6.5m2 -3v18m2 -7.5v-6.5m2 -0.5v6m2 -0.5v-7m2 1.5v6.5m2 0v-6m2 -1v6.5m2 1v-6.5m2 -0.5v6.5m2 1v-7m2 -1v6m2 0v-5.5m2 -2.5v9m2 -1v-7m2 0v10m2 -2.5v-7.5m2 0v9.5m2 0v-9.5m2 1v8.5m2 0.5v-8m2 0v5m2 0v-5m2 -3.5v9m2 0.5v-9m2 3v5.5m2 -0.5v-4.5m2 -1v7m2 -1v-6.5m2 0v6m2 0v-5.5m2 -0.5v6.5m2 2v-8m2 -0.5v8m2 -1.5v-5.5m2 -0.5v6.5m2 1v-6.5m2 -3v8.5m2 1.5v-9m2 0v8.5m2 -2v-8m2 3v6m2 0v-6.5m2 0.5v5m2 1v-8m2 1v8m2 -1v-6.5m2 0v8m2 -2.5v-5m2 -1v7.5m2 -1.5v-5m2 -2v7m2 -0.5v-6.5m2 -2v8.5m2 0.5v-5.5m2 -1v6.5m2 0.5v-6m2 -0.5v6.5m2 0v-5.5m2 0v5m2 -0.5v-5.5m2 -0.5v9m2 0.5v-10.5m2 2v8.5m2 -3v-7m2 0.5v8.5m2 -1.5v-5.5" stroke="#e23b30" stroke-width="2" fill="none"/>
<rect x="378.0" y="315.7" width="3.0" height="28.3" fill="#b8885a" />
<text x="381.5" y="335.1" font-size="16.6" font-family='"Liberation Mono","DejaVu Sans Mono",monospace' fill="#868c94" textLength="27.8" lengthAdjust="spacingAndGlyphs" >CH6</text>
<circle cx="448.6" cy="329.8" r="7.3" fill="#e2a93c"/>
<path d="M460.5 327.3v4.5m2 2v-7m2 -1.5v7m2 1v-8m2 2v4.5m2 1v-5.5m2 -1v6m2 -0.5v-4.5m2 -2.5v13.5m2 -5v-6m2 0v6.5m2 0v-7.5m2 0v8.5m2 -1v-6.5m2 -1v8.5m2 0.5v-8m2 0v4.5m2 2v-6.5m2 0.5v5.5m2 0v-7.5m2 1v5m2 1.5v-6.5m2 0.5v5m2 0.5v-5.5m2 0.5v6m2 -1v-6.5m2 0v7m2 2v-9.5m2 1v6m2 0v-5.5m2 0v6.5m2 -1v-5.5m2 0v8m2 -1v-7m2 0v5.5m2 1v-6.5m2 0.5v4.5m2 0.5v-5.5m2 -0.5v6m2 -0.5v-5.5m2 -1.5v6.5m2 0.5v-6.5m2 0v6.5m2 1v-5.5m2 -0.5v5m2 2.5v-7m2 -3.5v8.5m2 0.5v-7.5m2 -0.5v9m2 -1v-7m2 1.5v4.5m2 4.5v-12m2 1.5v7m2 -1v-6m2 -0.5v7.5m2 0v-8m2 2.5v4.5m2 3v-9.5m2 -2v10.5m2 0v-7m2 -2v7.5m2 6.5v-14.5m2 1.5v6m2 -0.5v-6m2 1.5v5.5m2 -0.5v-5m2 -0.5v6m2 1.5v-7m2 -0.5v8m2 -2.5v-6m2 1v6m2 -1v-6m2 1v5.5m2 0.5v-7.5m2 0v7m2 3.5v-8.5m2 -2v7.5m2 -1.5v-5.5m2 -1.5v11m2 -4v-6m2 2v5.5m2 0v-7m2 0.5v5.5m2 1v-6m2 -0.5v8.5m2 -1.5v-6.5m2 -0.5v6m2 5.5v-12m2 1.5v4.5m2 2.5v-7.5m2 -0.5v6.5m2 -1v-5m2 -0.5v5.5m2 1.5v-6.5m2 -1v6m2 0.5v-6m2 0.5v5m2 0.5v-5.5m2 -0.5v5.5m2 0v-4.5m2 -1v6m2 0.5v-6m2 0v5.5m2 1.5v-10m2 0v8.5m2 2v-7.5m2 -2v8m2 -0.5v-6.5m2 -0.5v6m2 0.5v-5m2 -0.5v5.5m2 0.5v-5.5m2 -0.5v8m2 -2.5v-4.5m2 -3.5v8.5m2 -0.5v-8m2 1.5v6m2 2v-7m2 1v5m2 6v-13.5m2 1.5v6.5m2 -1.5v-4.5m2 0v6m2 0.5v-9m2 2.5v5.5m2 -0.5v-7m2 2v5.5m2 0v-5.5m2 0.5v5m2 -0.5v-4.5m2 -1.5v8m2 -2v-5.5m2 -1v7m2 -0.5v-6.5m2 -0.5v8.5m2 2v-9m2 -1.5v8.5m2 0v-8m2 0.5v6m2 1v-6m2 -1v5.5m2 0.5v-6m2 0.5v5.5m2 1v-7.5m2 0v6m2 0.5v-4.5m2 -1v5m2 1v-5.5m2 -0.5v6.5m2 -1v-4.5m2 -0.5v6m2 1.5v-8m2 -0.5v9.5m2 -2.5v-6m2 0v5.5m2 -0.5v-5.5m2 -1.5v7.5m2 0.5v-6m2 0v6m2 1v-9m2 2v5m2 1.5v-8.5m2 1v5.5m2 1v-7m2 -0.5v9.5m2 2.5v-11.5m2 2v5m2 -0.5v-4.5m2 -0.5v5m2 1v-6.5m2 -0.5v8.5m2 -2.5v-6m2 -1v11m2 -3.5v-5m2 -1v9m2 -1.5v-7.5m2 0v6m2 0v-6.5m2 -0.5v6.5m2 0v-4.5m2 -1.5v8m2 -2.5v-7m2 0.5v13.5m2 -5v-6m2 -3.5v7.5m2 0.5v-6m2 -0.5v7m2 1v-6.5m2 -1.5v7m2 0.5v-7m2 1.5v5.5m2 -1v-6.5m2 0v7m2 1.5v-7m2 -1v8m2 -2v-5.5m2 0.5v5.5m2 2v-8m2 0v6m2 0.5v-6m2 -2v8m2 -1.5v-5m2 -0.5v6.5m2 -0.5v-6m2 1v5.5m2 2.5v-8.5m2 -0.5v6.5m2 -1v-4m2 -2v7.5m2 -1v-6m2 1v5m2 0v-6m2 0v6m2 1v-6m2 -2.5v7.5m2 0v-7m2 1v5.5m2 1v-5.5m2 0v7.5m2 -1.5v-8.5m2 2v7m2 -1v-7m2 0.5v7m2 0v-7.5m2 1.5v5.5m2 -0.5v-6m2 0v6m2 -0.5v-5.5m2 1.5v4m2 1v-6m2 0.5v5.5m2 0v-5.5m2 0v5.5m2 1.5v-6.5m2 -2v10m2 -4v-6m2 1.5v6.5m2 0v-12m2 5.5v4.5m2 3v-9.5m2 1.5v7m2 1.5v-8m2 -0.5v6m2 0.5v-7m2 0v6.5m2 0.5v-6m2 0v5.5m2 -0.5v-5m2 0v5.5m2 0.5v-6m2 -2v8.5m2 -1v-7m2 0.5v7m2 -1v-5.5m2 -3.5v9m2 0v-5m2 -0.5v5.5m2 0v-6.5m2 2v7m2 -2.5v-5m2 -3v10m2 -2v-5.5m2 -1v7m2 -1v-5m2 0v8m2 -3v-4.5m2 -2.5v7m2 1.5v-5.5m2 -5.5v12m2 -1.5v-5.5m2 -1v5.5m2 5.5v-10m2 -1.5v8m2 1.5v-8.5m2 -0.5v6.5m2 4v-9m2 -1v5m2 1.5v-6.5m2 -2v8m2 0v-5.5m2 0v5m2 -0.5v-5.5m2 0v6m2 1v-7m2 0.5v6.5m2 0.5v-6.5m2 -1v6m2 0.5v-8.5m2 1v7.5m2 1v-6m2 -2v7.5m2 -0.5v-6.5m2 0.5v7m2 0.5v-8.5m2 1v6m2 0v-7m2 1v5.5m2 0v-5m2 -0.5v5.5m2 0v-5m2 -0.5v7m2 -1v-5m2 -1.5v6m2 0v-6m2 0v6m2 1.5v-9.5m2 2v8m2 1v-9m2 1v5m2 3.5v-11m2 3v5m2 1.5v-7.5m2 0v6m2 0.5v-7.5m2 1v5.5m2 1v-7m2 1v5m2 1v-8m2 2.5v4.5m2 1.5v-9m2 2.5v5.5m2 -0.5v-5m2 -2v8m2 0v-8m2 2v13.5m2 -8.5v-5m2 0v7.5m2 -2v-7m2 1v5.5m2 0v-6m2 0v7m2 2.5v-9m2 0.5v7.5m2 0.5v-8m2 -2v7m2 0v-6.5m2 -1.5v12m2 -3.5v-7.5m2 2v5.5m2 1.5v-7.5m2 0.5v5m2 -0.5v-4.5m2 0.5v4.5m2 2v-6.5m2 0v4.5m2 0v-4.5m2 -3v7m2 1.5v-6m2 0v6.5m2 0.5v-7m2 -1.5v7m2 0.5v-6.5m2 0.5v6.5m2 0.5v-9m2 2v6m2 -1v-6m2 -2.5v9.5m2 -1v-5m2 0.5v4m2 3v-10m2 2v5m2 2.5v-7.5m2 1v4m2 2v-9m2 2.5v7m2 -0.5v-7.5m2 1.5v6m2 -2v-7m2 0.5v12m2 -5v-6m2 -0.5v6.5m2 1v-7m2 -1.5v11m2 -2v-6.5m2 -1v6m2 0v-4.5m2 -3v8m2 -0.5v-6m2 1.5v5m2 -1v-5.5m2 1.5v5m2 2.5v-8.5m2 1v4.5m2 0.5v-5.5m2 -1.5v8m2 -0.5v-10m2 4.5v6.5m2 -1.5v-7.5m2 2.5v4.5m2 1.5v-6.5m2 -1v7.5m2 -0.5v-7m2 1v5.5m2 1.5v-6.5m2 -4.5v8.5m2 2v-6m2 -1.5v8m2 2v-9.5m2 0.5v5m2 0.5v-6m2 -2v8m2 0.5v-7m2 0v9m2 -3v-5m2 -1.5v8.5m2 -0.5v-7m2 -0.5v6.5m2 0v-8.5m2 3v5m2 1.5v-6.5m2 -1v6.5m2 -0.5v-4.5m2 -0.5v5m2 1v-6.5m2 0.5v6m2 1v-8m2 -3v10m2 0.5v-7m2 -1v7.5m2 0.5v-7m2 0v5.5m2 4.5v-9m2 -0.5v4.5m2 0.5v-5.5m2 0.5v5m2 2v-7m2 0.5v4m2 1.5v-7.5m2 1.5v6.5m2 -0.5v-6m2 0.5v4.5m2 1.5v-7m2 -2v8.5m2 -0.5v-6m2 0.5v5.5m2 -1v-4.5m2 -1.5v8m2 -1v-5.5m2 -3.5v8m2 3v-7.5m2 -1v7m2 -0.5v-5.5m2 -0.5v7.5m2 -1.5v-5m2 -1.5v6.5m2 2v-10.5m2 2.5v7m2 0v-9.5m2 3v5.5m2 0v-6.5m2 0v8m2 -0.5v-6m2 -1v5m2 0v-5m2 -0.5v12.5m2 -6.5v-5m2 -1.5v6.5m2 0.5v-7.5m2 1v6.5m2 0v-5.5m2 -1v8m2 -1v-7.5m2 -0.5v7.5m2 -0.5v-5m2 -3.5v17m2 -8.5v-5.5m2 -1.5v7m2 0.5v-6m2 -0.5v6m2 1v-6m2 -2.5v14m2 -6.5v-4.5m2 -4v8.5m2 -0.5v-4.5m2 -0.5v7.5m2 -1v-8m2 1.5v6.5m2 0v-7.5m2 1v7m2 0.5v-7.5m2 0.5v5.5m2 0v-6m2 -3.5v15m2 -5v-6m2 0.5v4.5m2 0.5v-7m2 -3.5v12m2 -1.5v-6m2 -0.5v6.5m2 0.5v-7.5m2 2v7m2 -2v-6.5m2 1v5m2 4.5v-10m2 0v7m2 -0.5v-6m2 0v6m2 -0.5v-10.5m2 5.5v4m2 0v-6m2 1.5v5m2 0v-8m2 2.5v6m2 -0.5v-6.5m2 2v4.5m2 0.5v-5.5m2 0v6m2 0.5v-8.5m2 2v4.5m2 1.5v-8.5m2 2.5v6m2 1v-6.5m2 -0.5v5.5m2 0v-5.5m2 0v6m2 2.5v-9.5m2 1.5v4.5m2 -0.5v-4.5m2 -0.5v7.5m2 -2v-5m2 -0.5v7m2 -1.5v-6m2 1.5v5m2 0v-6m2 -0.5v7m2 0v-7m2 1.5v5.5m2 -1v-5m2 -3v8m2 1v-6.5m2 -2v9.5m2 -1v-6.5m2 0.5v7m2 -2v-5m2 -2v9.5m2 0v-8.5m2 1v6.5m2 -1.5v-5m2 -5v15.5m2 -5.5v-5.5m2 0v6m2 -0.5v-6m2 0.5v7m2 -1v-5m2 -2v12.5m2 -6v-5m2 -1v6m2 2v-8.5m2 0.5v6m2 1v-7m2 -0.5v7m2 0v-5.5m2 0.5v5m2 0.5v-6m2 0.5v5.5m2 -1v-6m2 1v6.5m2 -2v-5m2 1v5m2 0.5v-6.5m2 -2v8m2 0.5v-6m2 -3.5v15.5m2 -7v-6m2 1.5v5.5m2 0v-6.5m2 1v4m2 2.5v-11m2 4v5.5m2 1v-7.5m2 0v8m2 -1.5v-5.5m2 -1.5v7m2 -0.5v-7.5m2 2v5m2 2v-6.5m2 -1.5v8m2 -1.5v-6.5m2 1.5v5.5m2 0v-5.5m2 -0.5v7m2 -1v-5.5m2 0v4.5m2 0v-5m2 0v6.5m2 -1v-6m2 0.5v5.5m2 0v-5.5m2 -3v15m2 -6v-7m2 1.5v6m2 0v-6m2 -1.5v7m2 1v-8.5m2 1.5v5.5m2 3.5v-10.5m2 2v13m2 -7.5v-7m2 1v9m2 -2v-7.5m2 1.5v4.5m2 5.5v-14m2 2v7m2 -1v-8m2 2v8m2 2v-9.5m2 1v7m2 -1v-5.5m2 -2.5v6.5m2 1.5v-6.5m2 -0.5v6m2 1v-7.5m2 1.5v5m2 1.5v-8.5m2 0.5v7m2 0v-6m2 -0.5v6m2 0v-6m2 1.5v5.5m2 1v-7m2 -0.5v5.5m2 0v-6.5m2 1v7.5m2 -1.5v-6.5m2 -1v11m2 -1v-8m2 -2v7m2 0v-5.5m2 0.5v5.5m2 1v-7m2 -0.5v6.5m2 0.5v-6m2 0v5m2 -0.5v-5m2 -1.5v7.5m2 0v-5.5m2 -0.5v6m2 -0.5v-5m2 0v7.5m2 -2.5v-6.5m2 1.5v5.5m2 0v-9.5m2 4v5m2 0v-5m2 -2v7m2 -0.5v-4m2 -0.5v6m2 -1v-6.5m2 0.5v6m2 -0.5v-5m2 -0.5v9m2 -3v-5m2 -2.5v7.5m2 -0.5v-4.5m2 0v5m2 0.5v-6.5m2 -1.5v8m2 0v-6.5m2 0v6m2 0v-5.5m2 0.5v6m2 -1.5v-4.5m2 0.5v7m2 -2v-6m2 0.5v6m2 0v-9m2 2.5v7m2 0.5v-7m2 0v5.5m2 1v-7m2 -2.5v8m2 0.5v-6m2 0.5v4.5m2 1v-6.5m2 -2.5v10.5m2 1v-9m2 0.5v6.5m2 -0.5v-6m2 0.5v6m2 -1.5v-4.5m2 -1v7m2 -0.5v-5.5m2 -1v11m2 -3v-9.5m2 2v7m2 0v-7m2 -1v9m2 -3v-5m2 0.5v6m2 0.5v-7.5m2 0.5v5.5m2 4v-10m2 0.5v5m2 1.5v-7.5m2 0v7m2 -0.5v-5.5m2 0.5v6.5m2 -0.5v-6m2 -1.5v9m2 -2v-6.5m2 0.5v6.5m2 -1.5v-4.5m2 0.5v5m2 2.5v-8m2 -1.5v6.5m2 5v-11m2 1v5m2 0v-5.5m2 0.5v7m2 -2v-6.5m2 1v7.5m2 0.5v-9.5m2 1v5.5m2 0.5v-6m2 1v4.5m2 1v-7m2 0v6m2 0.5v-6.5m2 -1.5v14.5m2 -6v-5m2 -1v5.5m2 0v-5m2 -2v7.5m2 1v-6.5m2 -2.5v8.5m2 -1v-7.5m2 1v6.5m2 0v-7.5m2 2v6.5m2 1v-7.5m2 -0.5v6.5m2 1v-8m2 1.5v4.5m2 0.5v-5m2 0v5m2 -0.5v-4m2 -3.5v7.5m2 0.5v-5m2 -2v7.5m2 -0.5v-6m2 -0.5v6.5m2 1v-6m2 -2.5v8.5m2 0v-6.5m2 0.5v5m2 -0.5v-5.5m2 0.5v5m2 0.5v-6m2 0v6.5m2 2v-8m2 0.5v5m2 -0.5v-4.5m2 0v6.5m2 -1.5v-5.5m2 -1.5v9.5m2 -2.5v-5m2 -2.5v7.5m2 0.5v-6m2 0v5.5m2 1.5v-7.5m2 1v4.5m2 0.5v-7.5m2 1v7m2 1.5v-8m2 1v6m2 -0.5v-7.5m2 0v9m2 -2.5v-4.5m2 0v5.5m2 2v-7m2 -2v7m2 1.5v-10m2 3v5.5m2 7v-16.5m2 4v5m2 1.5v-6.5m2 0v6.5m2 -1.5v-6.5m2 0v7m2 0.5v-6.5m2 0v6m2 -0.5v-5m2 -0.5v6.5m2 1v-7.5m2 0.5v6m2 -1v-6m2 1.5v5.5m2 0v-8m2 1.5v6.5m2 -1v-7m2 2v5m2 -0.5v-4m2 -2.5v7m2 1v-6m2 -0.5v6.5m2 4.5v-11m2 0v6m2 0v-6.5m2 0v5.5m2 1.5v-7.5m2 1v8.5m2 -3.5v-5.5m2 1.5v5.5m2 0.5v-6.5m2 -1v6.5m2 0v-6.5m2 -0.5v10m2 -3v-5.5m2 0v5m2 1v-6.5m2 0.5v6m2 -1v-5m2 0v5m2 1v-7.5m2 0v8m2 -1.5v-5m2 -2v7.5m2 0.5v-6m2 -0.5v8.5m2 -2.5v-6.5m2 0v7.5m2 -1.5v-5.5m2 1v5.5m2 0.5v-7.5m2 1.5v5.5m2 0.5v-7.5m2 1v6m2 -1v-5m2 -1.5v6.5m2 2.5v-8m2 0.5v5.5m2 -0.5v-5m2 -2v7.5m2 0v-5.5m2 -0.5v6m2 0v-7m2 1.5v6.5m2 -1v-7.5m2 2v5m2 -0.5v-5m2 -0.5v6m2 1v-6m2 -2.5v10.5m2 -3.5v-5m2 -0.5v7m2 0v-5.5m2 -1.5v6m2 0.5v-7.5m2 0v8.5m2 -1v-5m2 -1v7m2 -1v-5m2 -0.5v7.5m2 -3v-5.5m2 1v6.5m2 -1.5v-6.5m2 2v8m2 -2.5v-10m2 4.5v5m2 -1v-5m2 0v5.5m2 1v-6.5m2 0.5v5m2 2v-6.5m2 -1.5v6m2 2.5v-8m2 -1.5v8m2 -1.5v-5.5m2 1.5v5.5m2 -1.5v-5.5m2 1v4.5m2 0.5v-4.5m2 -1.5v8.5m2 -0.5v-7m2 0v5m2 1.5v-8m2 2v5m2 0v-5.5m2 -3v11m2 0v-9m2 -0.5v8m2 -1.5v-5m2 -0.5v5.5m2 2v-7m2 -0.5v7m2 0.5v-7.5m2 -1v9m2 -2.5v-5m2 0v5.5m2 0v-6m2 1v4.5m2 5v-12.5m2 0.5v8m2 0v-6m2 0v5m2 -0.5v-5m2 -0.5v6m2 0v-6.5m2 0v6.5m2 1v-5.5m2 -4v10.5m2 -1.5v-7m2 1v6.5m2 -1.5v-6.5m2 -0.5v8m2 1v-7m2 -0.5v7.5m2 -1.5v-5m2 -1v6m2 -0.5v-4.5m2 -2.5v7.5m2 0v-6.5m2 1.5v7.5m2 -1v-6m2 -1v5m2 1v-7m2 -1v7.5m2 1.5v-7m2 1v4.5m2 0v-5m2 0v5.5m2 0.5v-5.5m2 0v4.5m2 0.5v-8.5m2 2.5v7m2 1.5v-8" stroke="#b8885a" stroke-width="2" fill="none"/>
<rect x="378.0" y="344.0" width="3.0" height="28.3" fill="#d040a8" />
<text x="381.5" y="363.4" font-size="16.6" font-family='"Liberation Mono","DejaVu Sans Mono",monospace' fill="#868c94" textLength="27.8" lengthAdjust="spacingAndGlyphs" >CH7</text>
<circle cx="448.6" cy="358.1" r="7.3" fill="#e2a93c"/>
<path d="M460.5 355.6v5m2 8v-13.5m2 -1v6.5m2 0v-7.5m2 2v7m2 -1v-5.5m2 -2v8m2 -0.5v-7m2 1v12m2 -6.5v-8m2 2v8m2 -1.5v-6.5m2 1v5m2 1.5v-6.5m2 -1.5v7.5m2 1.5v-8.5m2 0.5v6m2 1v-6.5m2 -2v8m2 1.5v-8m2 0.5v6.5m2 -1v-6.5m2 1v7m2 -2v-6.5m2 1v6m2 2v-9.5m2 -4v12m2 -1v-7m2 0v7m2 9.5v-16.5m2 -1.5v8.5m2 -0.5v-5.5m2 0v11m2 -4v-6.5m2 -0.5v6m2 1v-7m2 -2v8m2 0v-6m2 -2v10.5m2 -1.5v-6m2 0v6m2 -0.5v-6m2 -1v12.5m2 6v-18m2 0.5v8.5m2 -0.5v-7.5m2 0v5m2 0v-7.5m2 -2.5v11.5m2 -0.5v-8m2 1.5v6m2 2v-9m2 0v7.5m2 -0.5v-6m2 -0.5v7.5m2 0.5v-10.5m2 0.5v9.5m2 -1.5v-5.5m2 0v6.5m2 0v-6.5m2 -1v7.5m2 -1v-7m2 -0.5v9m2 -0.5v-6.5m2 -3v18m2 -9v-5.5m2 0v6.5m2 -0.5v-6.5m2 0.5v5m2 1.5v-6.5m2 -2v7.5m2 1.5v-10m2 -1.5v17.5m2 -7v-8.5m2 1.5v6.5m2 1v-7m2 -2v8m2 1v-8m2 -5v20.5m2 -8.5v-5.5m2 -0.5v8m2 -1.5v-11m2 2.5v8m2 1v-6.5m2 -1.5v7.5m2 -1v-6m2 1v15.5m2 -10v-10m2 3.5v6.5m2 2v-10.5m2 3v6m2 -1v-5.5m2 -0.5v6.5m2 0v-6.5m2 0.5v8.5m2 -3v-5m2 -0.5v6m2 0.5v-6m2 -4.5v10.5m2 0.5v-7m2 0.5v6.5m2 1v-9m2 1v6.5m2 0v-8.5m2 1.5v7m2 -1v-6.5m2 -0.5v9.5m2 -2v-5.5m2 0v7m2 -1v-9m2 2.5v11m2 -4.5v-7m2 -0.5v7m2 0v-9m2 3v10.5m2 -5v-8m2 2.5v7m2 7.5v-20.5m2 5v7m2 0.5v-8m2 0v7m2 1v-7m2 -0.5v7m2 2v-10.5m2 1v8m2 7.5v-18.5m2 5v6.5m2 -1v-8m2 0.5v8.5m2 -0.5v-6.5m2 0v5.5m2 0v-7m2 1.5v5.5m2 8v-19.5m2 5.5v7m2 1v-7m2 -0.5v6m2 1v-8m2 0.5v6m2 2v-7m2 -0.5v5.5m2 0.5v-6m2 0v6.5m2 -1v-5.5m2 -2v11m2 -2v-9m2 1.5v6m2 2.5v-7.5m2 0v6m2 -1v-5.5m2 0.5v5.5m2 1v-7m2 -0.5v7m2 -0.5v-7.5m2 2v5.5m2 1v-8.5m2 1.5v6m2 -0.5v-5m2 -1.5v13.5m2 -6.5v-6.5m2 0v6m2 1v-7.5m2 1.5v7m2 -1.5v-5.5m2 -0.5v7.5m2 -0.5v-8.5m2 1v6.5m2 0.5v-9.5m2 3v7m2 -1.5v-5m2 -2v8.5m2 -0.5v-6m2 -0.5v5.5m2 0.5v-7m2 0.5v6m2 0v-5m2 -2v7.5m2 0v-8.5m2 2.5v5.5m2 1.5v-7.5m2 -1v9.5m2 -2.5v-5.5m2 -3.5v20.5m2 -11.5v-6m2 -3v9m2 2.5v-8m2 0v7m2 5v-14m2 0.5v8.5m2 -1.5v-6m2 -3.5v9.5m2 0.5v-8m2 0.5v7.5m2 -0.5v-5.5m2 -3v11m2 0v-8.5m2 -3v9m2 0v-5.5m2 -1v8.5m2 -1v-6.5m2 -1.5v8.5m2 -1v-7.5m2 0.5v8m2 -1.5v-5m2 0v7m2 -2v-5m2 -1v7m2 2.5v-10m2 1v6m2 4v-14.5m2 4v7m2 -1v-6.5m2 -0.5v7.5m2 0.5v-7m2 -1v10.5m2 -3.5v-6m2 -2.5v8.5m2 0v-8m2 0v11m2 -0.5v-11m2 3.5v5.5m2 1v-6.5m2 -2.5v8.5m2 0v-7m2 -1.5v8.5m2 1v-7m2 -0.5v8m2 -1v-7.5m2 0.5v6m2 0v-6m2 -1.5v10m2 -2v-6.5m2 0.5v6.5m2 0v-6.5m2 -4.5v10m2 -0.5v-5.5m2 -1v6m2 0.5v-5.5m2 -0.5v8m2 -2v-5.5m2 -0.5v17.5m2 -10v-7m2 -0.5v6m2 3v-9m2 1v5m2 1.5v-8.5m2 1v10m2 -3.5v-6.5m2 1.5v6.5m2 1v-8m2 -1.5v7m2 1v-7.5m2 1v5.5m2 2.5v-11.5m2 3.5v6m2 0v-7.5m2 1v6.5m2 2v-8.5m2 0v8m2 -0.5v-8.5m2 -0.5v7.5m2 0.5v-7.5m2 1.5v5m2 1.5v-7m2 -1.5v9m2 -0.5v-7m2 0v8m2 -1.5v-7.5m2 1.5v5m2 1.5v-7m2 0.5v5m2 2v-13m2 3.5v9.5m2 -1v-6.5m2 0v7.5m2 7v-21m2 6.5v7.5m2 0.5v-8m2 0.5v7.5m2 -2v-7.5m2 0v7m2 1.5v-7.5m2 -1.5v11m2 -2v-7m2 0.5v5m2 9v-16.5m2 2.5v4.5m2 1v-7m2 0.5v6m2 1v-6m2 0v6.5m2 0.5v-8m2 -0.5v8m2 0.5v-7m2 -1v7m2 0v-6.5m2 -0.5v7.5m2 -1v-10m2 3.5v6.5m2 1v-8m2 0.5v6m2 1.5v-7.5m2 -2v8m2 1v-6.5m2 -1.5v9.5m2 -1.5v-7m2 1v7m2 11v-24.5m2 6v6.5m2 -0.5v-7.5m2 -1v8.5m2 -0.5v-5m2 -5v11m2 -0.5v-6.5m2 -1v7.5m2 0.5v-6m2 -2.5v8.5m2 2v-9m2 1v8.5m2 -2.5v-6.5m2 0.5v7m2 -2v-6.5m2 1v5.5m2 1v-6.5m2 -0.5v7m2 1v-8.5m2 1.5v7m2 -1.5v-7m2 1.5v6m2 -0.5v-7m2 0.5v10m2 -2v-8m2 1v5.5m2 0.5v-7.5m2 1.5v5m2 0v-6.5m2 1v8m2 -2.5v-6m2 0v8.5m2 6.5v-20m2 5.5v5.5m2 0v-5m2 0v6.5m2 1v-9m2 0.5v7.5m2 -0.5v-6.5m2 -1v8m2 -0.5v-6m2 -0.5v6m2 -0.5v-5.5m2 -0.5v6m2 3.5v-9.5m2 0v7m2 2v-10m2 0.5v6.5m2 1v-7m2 1v6m2 0v-6m2 -6.5v13m2 -1.5v-5m2 -3.5v19m2 -9.5v-12m2 5.5v7m2 3.5v-16m2 5.5v7m2 -1.5v-7m2 1v8m2 -2v-5.5m2 -2.5v16.5m2 -7v-7m2 0v6.5m2 -1v-6m2 1v5.5m2 0v-6.5m2 -0.5v7.5m2 0v-8m2 2v6m2 0v-6.5m2 0.5v6m2 -0.5v-7m2 0v7m2 -1v-4.5m2 -2v7m2 1v-6.5m2 0.5v7m2 -0.5v-6.5m2 -1v10.5m2 -2.5v-11m2 4v6.5m2 4v-12.5m2 1v8.5m2 -1v-6.5m2 0v6m2 0v-6.5m2 -2.5v13m2 -5.5v-4.5m2 -0.5v6m2 2v-8.5m2 0v6.5m2 5v-10.5m2 -2v10.5m2 -0.5v-8.5m2 0v6.5m2 -0.5v-6.5m2 1v5m2 2v-9.5m2 2.5v5m2 1v-7m2 1v6m2 2.5v-9m2 -1.5v8m2 1v-7.5m2 0.5v6.5m2 -1.5v-5.5m2 -0.5v6.5m2 -0.5v-5m2 0v5m2 0.5v-8m2 1.5v8.5m2 -3v-5.5m2 -0.5v8.5m2 9v-24m2 7v8m2 -0.5v-7m2 0v6m2 3v-8.5m2 -2.5v7.5m2 1.5v-9.5m2 2v6m2 1v-7.5m2 0v7.5m2 -1v-5m2 -0.5v5.5m2 2v-9m2 1v6.5m2 2v-9m2 1v5.5m2 2v-7m2 0v7.5m2 -2v-6m2 0v5.5m2 3v-8m2 0v6m2 0.5v-6.5m2 0v6.5m2 -1.5v-5.5m2 -1.5v8m2 1v-9.5m2 2.5v15m2 -10v-7.5m2 -0.5v11m2 -2v-8m2 2v5m2 0.5v-6m2 0v6.5m2 -1v-6.5m2 1v8.5m2 0.5v-8.5m2 -1.5v6m2 0.5v-5m2 0v5.5m2 0v-6.5m2 0v6m2 1v-7.5m2 0.5v8m2 -2v-5m2 -0.5v5.5m2 0.5v-7m2 -2v9.5m2 8.5v-21.5m2 6v13.5m2 -4v-8.5m2 -1v7m2 2v-10m2 1v7m2 -0.5v-6.5m2 -1.5v8m2 -0.5v-6.5m2 1.5v5.5m2 -0.5v-6m2 -0.5v7.5m2 -0.5v-6.5m2 -3.5v11.5m2 -1v-6m2 -0.5v7m2 -1v-8.5m2 3.5v4.5m2 2v-9.5m2 2.5v5.5m2 -1v-4.5m2 -1.5v7.5m2 0.5v-6.5m2 0v8m2 -2v-11m2 4v6.5m2 1.5v-7m2 -0.5v7.5m2 -2v-6.5m2 1.5v7m2 -1.5v-6m2 0v6.5m2 -0.5v-5.5m2 0v6.5m2 -1v-7.5m2 0.5v7m2 4.5v-10m2 -1.5v6.5m2 1v-6.5m2 -0.5v10m2 -3.5v-7.5m2 2v5.5m2 6v-15.5m2 2.5v7m2 -0.5v-5m2 -0.5v6.5m2 0v-6m2 -1v6m2 0v-5.5m2 0.5v5.5m2 1v-7m2 0v6m2 0v-5.5m2 0v5m2 0.5v-5.5m2 -4v9.5m2 -0.5v-5.5m2 -1.5v7.5m2 0.5v-9m2 1.5v6.5m2 13.5v-23m2 4.5v8m2 -2v-6m2 -1.5v7m2 0v-8m2 2.5v6.5m2 1v-8.5m2 1v5.5m2 1.5v-7m2 0v6.5m2 -1v-5.5m2 -1v6m2 1.5v-9.5m2 2v8m2 -2v-7.5m2 -3.5v13m2 -2.5v-6.5m2 1.5v6.5m2 1v-7m2 -1v6m2 2v-7m2 0v6.5m2 -1v-5.5m2 -0.5v7.5m2 -1v-6m2 -2v7m2 2v-9m2 2v6.5m2 -1.5v-5m2 -1v6m2 0.5v-7m2 1v6m2 1v-8m2 0.5v9.5m2 -3v-6m2 -1v6.5m2 0.5v-6m2 -1.5v7m2 1v-7.5m2 -1v9m2 -0.5v-8m2 1v6m2 1.5v-7m2 0.5v5.5m2 1.5v-8m2 -4.5v10.5m2 0.5v-8.5m2 0.5v8m2 -0.5v-6.5m2 1v8.5m2 -3v-8.5m2 3.5v6.5m2 -1.5v-7.5m2 1.5v7m2 -0.5v-5.5m2 -1v7.5m2 1v-7.5m2 -0.5v8.5m2 -3v-6.5m2 1v5.5m2 1v-8m2 1v6m2 1.5v-7.5m2 0v7.5m2 8.5v-16.5m2 1.5v6m2 -0.5v-6m2 0.5v6.5m2 0v-6.5m2 0v7m2 -1v-7m2 0.5v6m2 0v-6.5m2 1v8m2 -1v-8.5m2 -2v8.5m2 4.5v-13m2 -0.5v9.5m2 0v-7m2 1v6m2 0v-5.5m2 -1v10m2 -3v-7m2 -2.5v10m2 0v-7.5m2 0v6m2 0v-7m2 1v6m2 0.5v-6.5m2 0.5v6.5m2 -0.5v-7.5m2 0.5v7m2 0.5v-6m2 -4.5v16m2 -4.5v-7.5m2 -3v19.5m2 -10v-9m2 1.5v7m2 1v-7m2 0.5v16.5m2 -11v-7.5m2 -3v11.5m2 -0.5v-6.5m2 -0.5v7.5m2 -1.5v-5m2 -2.5v8.5m2 0.5v-9.5m2 2.5v6.5m2 -1v-5m2 0v7m2 0.5v-8.5m2 -6v24.5m2 -11v-7.5m2 -1.5v9.5m2 -2v-6m2 0.5v6m2 -0.5v-5m2 -1v10m2 2.5v-17.5m2 5.5v6.5m2 1.5v-10.5m2 3v5m2 2v-7.5m2 0.5v6.5m2 -1v-5.5m2 -1.5v7m2 9.5v-15.5m2 -1v6.5m2 0.5v-8m2 2v6.5m2 1v-7m2 -0.5v6m2 0.5v-9m2 1v7m2 0.5v-6m2 0v6m2 0.5v-9.5m2 1.5v8.5m2 -1.5v-5.5m2 0.5v5.5m2 -0.5v-5m2 -1v7m2 0.5v-8m2 1v7m2 -1.5v-6m2 0.5v5.5m2 2v-7.5m2 0.5v5.5m2 -0.5v-6m2 -0.5v7.5m2 6.5v-22m2 9.5v6m2 0v-7.5m2 1.5v6.5m2 -1v-5.5m2 -0.5v5.5m2 2v-8m2 0.5v6.5m2 11.5v-20m2 0v8.5m2 0v-6.5m2 0.5v5m2 1.5v-8m2 0v10.5m2 -3.5v-8m2 1.5v7.5m2 2v-10m2 1.5v6m2 0.5v-8m2 2v6.5m2 -1.5v-6m2 -2v8m2 -0.5v-6m2 -0.5v7m2 0.5v-10m2 3v7m2 1.5v-8.5m2 -1v7m2 0.5v-6m2 -0.5v7.5m2 -0.5v-6.5m2 0v5.5m2 12v-17m2 0.5v4.5m2 0.5v-6.5m2 0v7m2 -1.5v-5.5m2 1v5.5m2 -0.5v-6m2 -2.5v10m2 -1.5v-5m2 0v14.5m2 -9v-7.5m2 2v6m2 0.5v-6.5m2 -1v7.5m2 7v-18.5m2 4.5v6m2 0.5v-6.5m2 -1v7m2 -0.5v-5m2 0v5m2 1v-6m2 0v5.5m2 -0.5v-5m2 -4v14m2 -5v-7m2 1.5v7.5m2 -1v-8m2 2v6m2 0v-6m2 -2v7m2 1v-6m2 0v6m2 -0.5v-7m2 -2v10m2 -1.5v-5m2 0v5m2 6v-12m2 0.5v5.5m2 0v-5m2 -2.5v15.5m2 -8v-6m2 0.5v6.5m2 0v-7.5m2 1.5v5.5m2 -0.5v-6m2 0.5v7m2 -1.5v-6m2 -0.5v7.5m2 2v-8.5m2 -1.5v8.5m2 -1v-6.5m2 -4.5v17.5m2 -6v-7.5m2 1.5v6m2 -0.5v-6m2 0v7.5m2 1.5v-11.5m2 2.5v5.5m2 1v-10m2 3.5v6m2 3v-8.5m2 -1v8m2 -1.5v-7.5m2 2v5m2 0.5v-6m2 0.5v5m2 1v-6.5m2 0.5v5.5m2 1v-6.5m2 -1.5v7m2 1v-7.5m2 -1.5v8m2 0.5v-6.5m2 -1v8.5m2 -1v-7.5m2 0v7.5m2 -1v-7m2 1.5v5.5m2 0.5v-6m2 -1.5v9.5m2 -2.5v-5.5m2 -1v7.5m2 -1v-5m2 -1.5v7m2 1v-8.5m2 2v6m2 0v-6.5m2 0v7m2 -1v-5.5m2 -0.5v7m2 1v-10m2 0v8m2 0.5v-7m2 1v7.5m2 -1v-7m2 -2v7m2 1.5v-6.5m2 0.5v5m2 0.5v-7.5m2 1.5v7m2 -1.5v-5m2 -1v7m2 -0.5v-6m2 -0.5v6m2 0v-7.5m2 1v8.5m2 0.5v-7.5m2 0v5m2 1.5v-9m2 -0.5v8m2 3.5v-8.5m2 -1.5v7.5m2 0v-6m2 0v5.5m2 0.5v-7m2 0v6m2 2v-7.5m2 -1.5v9m2 -0.5v-9m2 2v5.5m2 0v-5.5m2 -1.5v14m2 -6.5v-6.5m2 -0.5v8.5m2 -0.5v-6.5m2 0v7.5m2 -2v-5.5m2 -1v7m2 1.5v-8.5m2 -4.5v12m2 -1v-6.5m2 -0.5v13m2 -5v-9m2 2.5v7m2 -2v-6.5m2 1.5v5m2 1v-6.5m2 0v7m2 -1v-6m2 0v6m2 -0.5v-7m2 1v7.5m2 -1v-7m2 0.5v7m2 1.5v-9m2 0.5v7m2 2.5v-8.5m2 -1.5v7.5m2 -1v-5.5m2 -4.5v20m2 -10v-5m2 -1.5v7m2 1v-9.5m2 2v6m2 1v-6.5m2 -0.5v8m2 -0.5v-9.5m2 2.5v5.5m2 2v-7m2 -1v6m2 0v-5m2 -0.5v5.5m2 1v-6m2 -0.5v7.5m2 -2v-6.5m2 1v5.5m2 1v-7.5m2 0.5v6.5m2 -0.5v-5m2 -3v8m2 0.5v-5.5m2 -1.5v9m2 0.5v-10m2 1.5v5.5m2 0v-5.5m2 -3v9.5m2 -0.5v-8m2 1v7.5m2 2.5v-9.5m2 0.5v5.5m2 1.5v-10m2 1.5v7m2 0.5v-5.5m2 -0.5v6.5m2 -1v-6m2 -1.5v7m2 1.5v-6m2 -1.5v8m2 -1v-9.5m2 3.5v9m2 -2.5v-6m2 0v7m2 -2v-6.5m2 1v6m2 0.5v-6m2 -1v7m2 -0.5v-7m2 1.5v9m2 -3.5v-7.5m2 1.5v6m2 0v-6.5m2 -1.5v7.5m2 1.5v-8.5m2 -0.5v10.5m2 -0.5v-9m2 -1.5v8m2 2v-8.5m2 0v10m2 -1.5v-10.5m2 3v9m2 -3.5v-5m2 0v7m2 -2v-5m2 -2v9.5m2 -1.5v-6" stroke="#d040a8" stroke-width="2" fill="none"/>
<rect x="378.0" y="372.2" width="3.0" height="28.3" fill="#d890c0" />
<text x="381.5" y="391.7" font-size="16.6" font-family='"Liberation Mono","DejaVu Sans Mono",monospace' fill="#868c94" textLength="27.8" lengthAdjust="spacingAndGlyphs" >CH8</text>
<circle cx="448.6" cy="386.4" r="7.3" fill="#e2a93c"/>
<path d="M460.5 382.9v6m2 -0.5v-5m2 -0.5v7m2 -1.5v-5m2 -0.5v6.5m2 -0.5v-5m2 -1.5v6.5m2 0v-4.5m2 -1v6m2 -1v-4.5m2 -0.5v5m2 0.5v-8m2 3v5.5m2 -0.5v-4.5m2 -1v5.5m2 1.5v-6m2 -2.5v7m2 -0.5v-4m2 -0.5v5m2 1v-5.5m2 -1.5v7m2 -1v-6m2 0.5v6.5m2 0v-5.5m2 -1v5.5m2 1v-5.5m2 -1v6.5m2 0v-6m2 0v5.5m2 0.5v-6.5m2 -0.5v6m2 0.5v-6m2 -0.5v5.5m2 0v-5m2 0v6m2 0.5v-6m2 -1.5v8m2 2.5v-10m2 -0.5v6m2 0.5v-6m2 0v7m2 -0.5v-6.5m2 1.5v6m2 -1.5v-5.5m2 -0.5v8m2 0.5v-7.5m2 0.5v5.5m2 0v-6m2 -0.5v14m2 -8v-6.5m2 0v8.5m2 0v-8m2 1v4.5m2 1v-5.5m2 -1v7.5m2 -2v-7.5m2 0.5v6.5m2 1v-6.5m2 1.5v5m2 0.5v-7.5m2 0.5v6m2 0v-5m2 0.5v4.5m2 -0.5v-4m2 -2v9m2 -1v-6.5m2 -0.5v6m2 0v-5.5m2 -1.5v6.5m2 0.5v-5.5m2 -1v6m2 1v-5.5m2 0v14m2 -8v-14m2 8v6.5m2 -0.5v-6m2 -7.5v12m2 0v-5.5m2 -4.5v15m2 -5.5v-5.5m2 0v7.5m2 -1.5v-5m2 -0.5v6m2 -1v-4.5m2 -1v8m2 0v-8.5m2 2v5.5m2 8v-15m2 0v6m2 0v-6m2 0.5v7m2 -2v-5.5m2 0v5.5m2 2v-6m2 -2v6m2 0.5v-4.5m2 0v6m2 -1.5v-7m2 1v7m2 -0.5v-5.5m2 -1v7.5m2 -1v-7m2 2v4m2 0v-4m2 0v5.5m2 -1.5v-5.5m2 -1.5v8m2 0v-5m2 -1.5v7m2 0v-7.5m2 -3.5v17.5m2 -7.5v-5m2 -0.5v5m2 0.5v-5.5m2 -5.5v12m2 0v-6m2 0v4.5m2 1.5v-5.5m2 -0.5v5.5m2 1v-8.5m2 2v4.5m2 0.5v-4.5m2 -1v5m2 0v-5.5m2 1v5.5m2 -0.5v-4.5m2 -1v5m2 0.5v-5.5m2 0v5m2 0.5v-5.5m2 1v4m2 0.5v-5m2 -1v7.5m2 3v-14m2 4v7.5m2 -2.5v-6m2 1v5m2 0v-4.5m2 -4.5v14m2 -4.5v-6m2 -0.5v6m2 0v-4.5m2 -1v6m2 0.5v-8m2 2.5v4.5m2 1.5v-7m2 1v5m2 1.5v-6.5m2 -1v9.5m2 -4v-4m2 -1.5v6m2 0v-4.5m2 0v4.5m2 2v-10.5m2 3v5m2 0.5v-5.5m2 0.5v4.5m2 0v-5m2 -8.5v22.5m2 -9v-5m2 -2.5v8m2 0.5v-5m2 -1v6m2 -0.5v-6m2 0.5v6m2 -0.5v-5.5m2 0.5v4.5m2 2.5v-6.5m2 -0.5v4.5m2 1v-5.5m2 -1.5v8m2 -0.5v-5.5m2 0v6m2 -1.5v-4.5m2 0v7.5m2 -2v-6m2 -0.5v8m2 -2.5v-7m2 -0.5v8m2 7.5v-13m2 -1v6m2 1v-5.5m2 -8.5v20m2 -6.5v-7.5m2 0.5v7m2 -1v-5.5m2 1v5m2 0.5v-7m2 1v5.5m2 1v-6.5m2 -5v14m2 -3v-5m2 -2.5v6.5m2 1v-6.5m2 1.5v5m2 -0.5v-7m2 0v8m2 -1v-5.5m2 1v5m2 0v-6m2 0v6.5m2 -1v-6.5m2 1.5v5m2 1.5v-8m2 -0.5v8m2 -0.5v-5m2 -1.5v8m2 -2.5v-6.5m2 2.5v4m2 2.5v-10.5m2 2.5v7m2 -1.5v-5m2 -1v7.5m2 0.5v-7.5m2 0v6.5m2 -0.5v-6m2 1.5v8.5m2 -2.5v-7m2 -1v6m2 2.5v-6.5m2 -2v8.5m2 -2v-6m2 1.5v6m2 0v-6.5m2 -2.5v8m2 -0.5v-5m2 0v5m2 0.5v-6m2 0v5.5m2 2.5v-10m2 1v7m2 0.5v-8m2 1v6.5m2 -0.5v-6m2 1v6m2 0v-5.5m2 0v4m2 1v-7.5m2 0.5v7m2 1v-7m2 -4.5v14.5m2 -4v-5.5m2 -1.5v8.5m2 -2v-4.5m2 -1v5.5m2 2.5v-8.5m2 0.5v6.5m2 -1.5v-5m2 -1.5v7m2 0.5v-6m2 1v4m2 1v-5m2 0v4.5m2 1.5v-7m2 0v5.5m2 0.5v-5.5m2 0v5m2 6v-16m2 5v4.5m2 1v-7.5m2 2v5.5m2 1v-6.5m2 -1v7m2 -1v-5.5m2 -0.5v7.5m2 -2v-9.5m2 5v5m2 2v-7.5m2 1v4.5m2 1v-6m2 -0.5v7.5m2 -1v-9m2 1v8.5m2 0v-7m2 -0.5v6m2 1.5v-14m2 7v6.5m2 -0.5v-6.5m2 1v5m2 5v-13.5m2 3.5v6m2 -0.5v-6.5m2 1v5.5m2 -1v-4.5m2 -1.5v6.5m2 1.5v-12.5m2 5v7m2 0v-8.5m2 3v6m2 -1.5v-5.5m2 -1.5v6.5m2 2.5v-8m2 -1v7.5m2 0v-7.5m2 0.5v6m2 1.5v-5.5m2 -3.5v7.5m2 0.5v-7m2 0.5v6.5m2 -0.5v-6m2 1v5m2 0v-5.5m2 0.5v5m2 3v-7.5m2 -0.5v8.5m2 -2.5v-5m2 -2v8.5m2 1.5v-13.5m2 4v5.5m2 0v-5.5m2 0v6m2 0v-7m2 2v5m2 0v-5.5m2 -0.5v5.5m2 0v-6m2 0.5v7m2 -1v-8.5m2 3.5v4.5m2 1.5v-6.5m2 0.5v6.5m2 -2v-4.5m2 -0.5v6.5m2 0v-6m2 -5v17.5m2 -7.5v-5m2 -1.5v9.5m2 -3v-4.5m2 -2.5v8m2 -1v-7.5m2 2v6m2 -0.5v-5.5m2 0v5m2 1v-5.5m2 -2v8m2 1.5v-8.5m2 -0.5v6.5m2 0.5v-6m2 -0.5v5.5m2 8.5v-15.5m2 0.5v8m2 1.5v-7.5m2 0.5v4.5m2 -0.5v-5m2 -2.5v9.5m2 -2v-4m2 0v5m2 1v-7.5m2 1.5v5m2 0.5v-6.5m2 0v5m2 1.5v-6m2 -0.5v6.5m2 -1.5v-5m2 -0.5v8m2 -1v-6m2 -1v6.5m2 0v-5.5m2 -0.5v6m2 -1v-6.5m2 2v9.5m2 -5v-5.5m2 0.5v6m2 3.5v-12m2 3v4.5m2 1.5v-6m2 -1v6m2 0.5v-5m2 -1.5v5.5m2 0.5v-5.5m2 1v6.5m2 -2v-6m2 1v5m2 0.5v-6m2 -2v8m2 -0.5v-5.5m2 -0.5v6m2 -0.5v-4.5m2 0v5m2 1.5v-7.5m2 1v5m2 -0.5v-6m2 2v4m2 0v-4m2 -1.5v5.5m2 3v-9m2 0v8.5m2 0v-7m2 0v6m2 -0.5v-6.5m2 1v5.5m2 -1v-6m2 -5.5v21m2 -8.5v-6.5m2 1.5v4.5m2 2.5v-8.5m2 1v6.5m2 1.5v-8m2 -0.5v7m2 2v-10m2 -1v8m2 -0.5v-5m2 0.5v4.5m2 0.5v-5.5m2 -1v8m2 -2.5v-4.5m2 0v5m2 2v-7m2 -1v5.5m2 1.5v-8m2 1.5v6.5m2 0v-6.5m2 1v5m2 0.5v-7.5m2 1.5v6m2 -1.5v-5m2 -4.5v12.5m2 -2.5v-5.5m2 1v5.5m2 0.5v-6.5m2 0.5v6m2 5.5v-19.5m2 6.5v6.5m2 -0.5v-7.5m2 2v6m2 -0.5v-6m2 0.5v6.5m2 0v-7m2 -1.5v8.5m2 -1v-5m2 -1.5v8m2 -1v-5m2 -1v5.5m2 -0.5v-4.5m2 -0.5v5.5m2 0.5v-5m2 -1.5v6m2 -0.5v-5.5m2 0.5v6m2 -0.5v-5m2 0.5v5.5m2 5v-12m2 -2v10m2 -2v-5.5m2 0v5.5m2 -0.5v-7m2 2.5v6.5m2 0v-6.5m2 -5.5v12.5m2 -2v-6.5m2 1.5v5m2 0.5v-6m2 -2v9.5m2 0v-8m2 1.5v5.5m2 -1v-5m2 -0.5v7.5m2 0v-8.5m2 2v5m2 -0.5v-6.5m2 1v8m2 -0.5v-9m2 2v5m2 1v-8m2 -2v17.5m2 -6.5v-7.5m2 0.5v5m2 1.5v-7m2 -2v8m2 1v-6m2 -2v15m2 -7.5v-6.5m2 -0.5v7m2 -0.5v-5.5m2 -2.5v8.5m2 5v-18m2 7.5v6m2 -1.5v-5.5m2 0.5v5.5m2 0v-5.5m2 0.5v4.5m2 -0.5v-5m2 0v9.5m2 -2v-7m2 0v7.5m2 -2v-6m2 -0.5v7.5m2 1.5v-7.5m2 0v4m2 1v-7m2 0.5v5.5m2 1v-5.5m2 -1v7m2 -0.5v-5m2 -1v6m2 -0.5v-6.5m2 1.5v6m2 -1v-5m2 -1.5v6m2 0v-4m2 -2v6m2 0v-4.5m2 0v6m2 -1.5v-5m2 1v4.5m2 1.5v-6.5m2 -0.5v6m2 -0.5v-5m2 -1.5v7.5m2 -1v-4.5m2 -0.5v6m2 -0.5v-6m2 0v5.5m2 -0.5v-5m2 0.5v5.5m2 0.5v-8.5m2 2v6m2 -1v-4.5m2 -0.5v6m2 -1v-4.5m2 -0.5v10m2 -4.5v-5m2 -0.5v5.5m2 0.5v-5.5m2 0v6.5m2 -1v-5.5m2 0v4.5m2 0v-5m2 0.5v7m2 -2.5v-5.5m2 0.5v5m2 0v-5.5m2 1v6m2 -1.5v-5.5m2 0.5v6m2 -1v-4m2 -2.5v8m2 -1.5v-5.5m2 1v5.5m2 -0.5v-5m2 -1.5v6.5m2 -0.5v-4.5m2 0.5v4m2 0.5v-5m2 -7.5v12.5m2 1.5v-6m2 -0.5v5.5m2 0.5v-8m2 2v5m2 0v-5.5m2 -2v7m2 2.5v-6.5m2 -5.5v16m2 -4v-9m2 1v6m2 2v-7m2 -0.5v5.5m2 1v-7.5m2 1v7.5m2 -2.5v-6m2 1.5v5.5m2 7v-13m2 0v5.5m2 0.5v-5.5m2 0v7m2 -1.5v-5m2 -0.5v5.5m2 -1v-8m2 4v4.5m2 0v-4.5m2 0v4m2 0.5v-6.5m2 0v6.5m2 1.5v-6.5m2 -0.5v5.5m2 -0.5v-6m2 0.5v6m2 0v-5.5m2 -1v6.5m2 -0.5v-4m2 -0.5v5m2 2v-6.5m2 -1.5v6m2 -0.5v-5m2 0v6.5m2 -1.5v-4.5m2 0.5v4.5m2 2v-7.5m2 -2.5v8m2 -0.5v-4m2 0v6m2 -1.5v-4.5m2 -0.5v5m2 3.5v-12m2 2v6.5m2 1v-7m2 1v7.5m2 -0.5v-7m2 -1v7m2 -1.5v-4m2 -1v7m2 0v-6m2 0v4.5m2 0v-4.5m2 -0.5v4.5m2 0.5v-5m2 -1v6.5m2 1v-7.5m2 1.5v6.5m2 -2v-5.5m2 0v7m2 -1.5v-5.5m2 -0.5v8m2 -2v-5.5m2 1v5m2 0v-5.5m2 -1v6m2 0.5v-7m2 0v9m2 -2v-7m2 0v6.5m2 0v-7m2 1v5.5m2 0.5v-6m2 0v6m2 -0.5v-6.5m2 2.5v4.5m2 1.5v-8.5m2 0.5v8m2 -1v-5m2 -1v5m2 3v-7m2 -1v5m2 4.5v-10m2 1v6m2 -0.5v-6m2 1v4.5m2 0.5v-5m2 0v4m2 2v-7m2 -1.5v14.5m2 -7.5v-5.5m2 -2v10.5m2 -2.5v-5.5m2 0v5m2 2v-7.5m2 0v5.5m2 0v-5.5m2 0v7.5m2 -2v-5.5m2 0.5v5.5m2 1v-6m2 -1.5v6.5m2 -0.5v-5m2 0.5v4.5m2 -0.5v-5m2 -3v8.5m2 0.5v-6m2 0v6m2 0.5v-7.5m2 -0.5v7.5m2 -0.5v-5m2 -4v13m2 -3.5v-5.5m2 -0.5v5.5m2 1.5v-8m2 0v6m2 2v-8m2 1.5v6m2 -0.5v-6.5m2 0.5v6m2 1v-6m2 -0.5v4.5m2 0.5v-5.5m2 1v5.5m2 5v-17m2 6v7.5m2 -2v-6m2 -1v6m2 0v-5m2 1v6.5m2 -2v-4.5m2 -0.5v5m2 3v-9.5m2 2v5.5m2 -1v-6m2 0v6m2 5v-10.5m2 -1v7m2 0.5v-6.5m2 0.5v7m2 0.5v-8m2 -0.5v5.5m2 1v-6m2 0v7m2 0v-7m2 1v4m2 2v-8m2 1.5v4.5m2 1v-5.5m2 0v5m2 2v-7m2 0v5.5m2 -1v-5m2 0.5v6.5m2 5v-15m2 2.5v7.5m2 0v-7.5m2 1v5.5m2 -0.5v-4.5m2 0v5m2 0.5v-5.5m2 -0.5v4.5m2 2v-7m2 0.5v5.5m2 1.5v-6.5m2 0v5m2 0.5v-7m2 1v5m2 0v-4.5m2 0v6m2 -0.5v-6m2 -0.5v5m2 0.5v-6.5m2 1.5v5m2 -0.5v-6m2 -1.5v8m2 2.5v-7.5m2 0v7.5m2 -0.5v-8m2 -0.5v6.5m2 0v-7.5m2 0.5v10m2 -1v-7.5m2 0.5v6m2 -0.5v-5.5m2 0.5v6m2 -0.5v-13.5m2 8v4.5m2 0v-4.5m2 -1v8m2 -1v-6.5m2 -1v7.5m2 -1v-5m2 -2.5v9.5m2 -1.5v-6m2 0.5v6.5m2 -2.5v-6m2 -1v9m2 -1.5v-4.5m2 -7.5v16m2 -2.5v-7m2 -0.5v5.5m2 1.5v-7m2 0.5v6m2 0v-5m2 0v4m2 2v-6.5m2 0.5v4.5m2 -0.5v-4.5m2 0v5m2 2.5v-7.5m2 -8v14.5m2 -2v-4m2 -1.5v13.5m2 -6v-6.5m2 -0.5v5.5m2 1.5v-6m2 -1v5.5m2 0.5v-5m2 -1v7.5m2 -1v-7m2 0v7m2 0v-5.5m2 -2v7m2 0v-6.5m2 1v5.5m2 0v-5m2 -3v8m2 -1v-4.5m2 -3.5v9.5m2 -0.5v-7.5m2 2v4.5m2 1v-6.5m2 -0.5v6.5m2 0v-7m2 1.5v8m2 -1.5v-6m2 -5v11m2 1v-8.5m2 1.5v4.5m2 0.5v-6m2 1v5.5m2 0v-6.5m2 0.5v6m2 -0.5v-5m2 0v6m2 -0.5v-5.5m2 0v6.5m2 -1.5v-5.5m2 0v6m2 -1v-4m2 -1v6m2 -1v-5.5m2 -1.5v8m2 -0.5v-6m2 1.5v4m2 1.5v-6.5m2 -0.5v8m2 -1v-10m2 3v6m2 -0.5v-4.5m2 -2v8.5m2 -1v-5m2 0v4.5m2 0.5v-5.5m2 0.5v5m2 -1v-4.5m2 0v4.5m2 1v-6m2 0v6m2 -1v-4.5m2 0v5m2 0v-7m2 2v5.5m2 -0.5v-7.5m2 3v5.5m2 1.5v-8m2 -1v6.5m2 8v-17.5m2 1.5v9m2 -0.5v-5m2 -1v7.5m2 -2.5v-6.5m2 2v7m2 -1v-5.5m2 -1v7m2 -1.5v-5.5m2 1v4.5m2 0v-4.5m2 -0.5v5.5m2 -0.5v-4.5m2 -2v8m2 0.5v-7m2 -2v7.5m2 -1v-5.5m2 0.5v7m2 -1.5v-6m2 1v5m2 1.5v-7m2 -0.5v6.5m2 0v-6m2 -1v6.5m2 0.5v-7.5m2 1.5v7.5m2 -1v-6m2 -1.5v6.5m2 5.5v-18.5m2 6.5v6.5m2 -0.5v-4m2 -1v8m2 -2.5v-4.5m2 -1v6m2 1v-7.5m2 0.5v6.5m2 -1v-6.5m2 1v6m2 -0.5v-6.5m2 0.5v6.5m2 0.5v-7.5m2 0v8m2 -2v-6.5m2 2v5m2 0v-7.5m2 2.5v4.5m2 0.5v-6m2 1v7m2 -1v-7m2 -1v9m2 -2.5v-4m2 -0.5v7.5m2 -1.5v-7.5m2 0.5v7m2 1v-7m2 -1.5v9.5m2 -2v-7.5m2 1.5v4.5m2 2v-8m2 0v7.5m2 -1v-4.5m2 0v5m2 -0.5v-8.5m2 3v5m2 1.5v-5.5m2 -1v8m2 3v-13.5m2 3v5m2 -0.5v-4.5m2 0v5m2 0.5v-7m2 0.5v6.5m2 -0.5v-4.5m2 -1v5m2 0v-5m2 -0.5v6m2 1v-7m2 1.5v4.5m2 0v-5.5m2 0v6m2 0v-5.5m2 0v5m2 -0.5v-5.5m2 1.5v4.5m2 1v-7m2 -1v9m2 -1.5v-7m2 2v4m2 0v-6m2 -0.5v8m2 1.5v-8m2 0v5.5m2 0.5v-9m2 4v6m2 -1.5v-6m2 1v8m2 -2v-8.5" stroke="#d890c0" stroke-width="2" fill="none"/>
<rect x="378.0" y="400.5" width="3.0" height="28.3" fill="#5a28f0" />
<text x="381.5" y="420.0" font-size="16.6" font-family='"Liberation Mono","DejaVu Sans Mono",monospace' fill="#868c94" textLength="27.8" lengthAdjust="spacingAndGlyphs" >CH9</text>
<circle cx="448.6" cy="414.7" r="7.3" fill="#e2a93c"/>
<path d="M460.5 410.2v7m2 10v-22.5m2 6.5v6.5m2 1v-7m2 -2v10m2 -2.5v-7m2 1.5v6m2 0v-6m2 -9.5v31.5m2 -14v-8.5m2 0.5v6m2 3v-10m2 -4v26.5m2 -15.5v-5.5m2 -0.5v7.5m2 -2v-6.5m2 1.5v5.5m2 0v-6m2 -1.5v7m2 0.5v-6.5m2 -1v10m2 0v-8m2 0v5.5m2 1.5v-10m2 1.5v7m2 0v-5.5m2 -1.5v11m2 -3v-8.5m2 1.5v8m2 -2.5v-13m2 6.5v9.5m2 -2v-6.5m2 0v7.5m2 -1.5v-7m2 0.5v7m2 0v-7.5m2 -0.5v7m2 0v-5m2 0v6m2 -1v-6m2 -7.5v14m2 0.5v-6m2 0v6m2 2v-8.5m2 0v6.5m2 -1v-6m2 -1v8m2 -1v-6m2 -5v29m2 -16v-8.5m2 0.5v7m2 12v-28m2 8v7.5m2 0v-8.5m2 1v9m2 -1.5v-6.5m2 0.5v6.5m2 2v-10.5m2 2.5v5m2 1v-7m2 -0.5v8m2 -1v-5.5m2 0v5.5m2 0.5v-6.5m2 -2v17.5m2 -8.5v-7.5m2 1v8m2 -3v-5.5m2 0.5v7m2 1v-8.5m2 -0.5v6.5m2 1v-8m2 -4.5v26.5m2 -15v-7.5m2 1.5v8.5m2 -0.5v-8.5m2 0.5v7.5m2 -0.5v-7.5m2 -5.5v29.5m2 -14.5v-9.5m2 0.5v6m2 0.5v-7m2 1v6.5m2 0v-8.5m2 0v8m2 0.5v-8m2 -1v7.5m2 15v-27.5m2 4v28m2 -18.5v-7m2 -0.5v9.5m2 -0.5v-7.5m2 -0.5v6m2 0v-6.5m2 0.5v6m2 3.5v-9.5m2 0.5v5.5m2 0v-6m2 0.5v9.5m2 -4v-6m2 0.5v5m2 1v-6.5m2 -0.5v9.5m2 -1.5v-8.5m2 1v7m2 -0.5v-8.5m2 2v10.5m2 -3.5v-7.5m2 0v7m2 0.5v-9.5m2 -4v32m2 -16v-12.5m2 1.5v7m2 2v-8m2 -3.5v22.5m2 -10.5v-8m2 0v8m2 -2.5v-5.5m2 -4v10m2 16.5v-22m2 -0.5v7.5m2 -0.5v-8.5m2 0.5v8m2 -1.5v-7.5m2 1v7m2 0.5v-6.5m2 0v5.5m2 0v-6.5m2 1.5v5.5m2 0.5v-7m2 -1.5v7.5m2 1v-6m2 0v8m2 15v-28m2 4v6.5m2 1.5v-8m2 0.5v7m2 0v-9.5m2 1.5v9.5m2 -0.5v-10.5m2 1v8m2 0v-6.5m2 0.5v8.5m2 -3v-6.5m2 -0.5v29.5m2 -23v-6.5m2 1v6.5m2 -0.5v-6.5m2 0v6m2 1v-8.5m2 0.5v9.5m2 -1v-8m2 1v8m2 -2v-6m2 0.5v8.5m2 -3v-6.5m2 0.5v5.5m2 2.5v-10.5m2 0.5v8m2 0v-8m2 1.5v7m2 -0.5v-5.5m2 -1v8m2 -1.5v-5.5m2 -3v10m2 0.5v-7.5m2 -0.5v7m2 -1.5v-7.5m2 1.5v6.5m2 -0.5v-6.5m2 -4.5v12.5m2 1.5v-9.5m2 1v5.5m2 2.5v-9m2 1v8.5m2 -3v-6m2 -2v9m2 -0.5v-5.5m2 -1v7.5m2 -0.5v-6m2 -0.5v5.5m2 2v-8m2 -9v38.5m2 -23v-6m2 0v6m2 0v-6.5m2 0.5v6m2 -0.5v-5.5m2 -1v8.5m2 -1.5v-6.5m2 -9v25.5m2 -8v-7.5m2 -1.5v7m2 2.5v-9.5m2 1.5v6.5m2 -1.5v-5.5m2 -3v11m2 -1.5v-7m2 -1.5v8.5m2 0v-9.5m2 2.5v6m2 0v-6m2 -2v9.5m2 0v-10m2 1v7.5m2 4v-10m2 1v7m2 -0.5v-9m2 2v5.5m2 3v-8.5m2 0.5v5.5m2 15.5v-27m2 3.5v8m2 -0.5v-5m2 0v5m2 2v-8.5m2 0v8m2 -1v-7.5m2 0v11m2 -3.5v-7.5m2 1.5v7.5m2 -2v-7m2 1.5v7m2 -1.5v-5.5m2 -2.5v8m2 0.5v-6.5m2 0.5v6.5m2 0v-6m2 0v7.5m2 -1.5v-6.5m2 -2v8m2 1v-7.5m2 -1v7m2 1.5v-7.5m2 -1.5v8.5m2 5.5v-14m2 0v7.5m2 21v-27m2 -0.5v8m2 -1.5v-8.5m2 -6v17m2 -2.5v-6m2 -0.5v7m2 0v-5.5m2 -2.5v8m2 1v-7m2 0v5.5m2 0.5v-9m2 1v8.5m2 -1v-6.5m2 -0.5v7.5m2 -0.5v-7m2 0v7.5m2 20v-26.5m2 1v5m2 2.5v-8m2 -2v8.5m2 -0.5v-7m2 0.5v8m2 -1.5v-6.5m2 0v6m2 5v-13.5m2 2v8.5m2 -2v-7.5m2 2.5v5m2 0.5v-5.5m2 -1.5v7m2 2.5v-10m2 2v5m2 0v-5m2 -1v6m2 6.5v-14.5m2 2v6m2 0v-5m2 0v5.5m2 2.5v-19m2 10v6m2 1.5v-6.5m2 -0.5v7m2 -1v-6.5m2 -1v7m2 1.5v-7.5m2 -0.5v9.5m2 -2v-7m2 0v7.5m2 16v-24m2 -2v8.5m2 1v-7m2 0v7.5m2 0.5v-7.5m2 0v5.5m2 1.5v-8m2 0v8m2 -1v-6m2 0.5v7.5m2 -2v-5.5m2 -2v7.5m2 -0.5v-6m2 0v7.5m2 -0.5v-7m2 1v5m2 0v-6.5m2 1v7m2 -1v-7m2 0.5v6m2 2v-8m2 0.5v5.5m2 11v-16.5m2 0.5v5m2 1.5v-7m2 -0.5v7m2 -0.5v-6m2 -1.5v17.5m2 -10v-8.5m2 1.5v7.5m2 3v-12m2 3v5.5m2 0.5v-7m2 -1v8.5m2 1v-8.5m2 1v7.5m2 1v-8.5m2 0v6m2 0.5v-8m2 -8v27m2 -10.5v-9.5m2 0.5v9.5m2 0v-9.5m2 0v7.5m2 0v-8m2 2v6.5m2 0.5v-8.5m2 -1v8m2 0.5v-6m2 -0.5v7m2 -0.5v-8m2 1v7m2 -0.5v-5.5m2 -0.5v6m2 9.5v-15m2 0.5v5.5m2 0v-6.5m2 0v7m2 0v-6.5m2 -0.5v7m2 0.5v-8.5m2 -7v27.5m2 -12.5v-6m2 0v6m2 1.5v-8.5m2 1v5m2 0.5v-6m2 0v10m2 -3.5v-6m2 -4.5v12m2 -1.5v-6.5m2 0.5v5m2 2.5v-7.5m2 -3v22m2 -13.5v-6m2 0.5v5m2 1.5v-8.5m2 0v7m2 0.5v-7.5m2 -0.5v9m2 -0.5v-7.5m2 -0.5v9m2 -1v-6m2 -1v20m2 -13.5v-6.5m2 0.5v6m2 3.5v-9.5m2 -1v9.5m2 -2.5v-5.5m2 -2.5v8m2 0v-5.5m2 0v6.5m2 -1v-6m2 -0.5v7m2 0.5v-7.5m2 -2v11.5m2 -3.5v-6.5m2 1v8m2 -2v-7.5m2 2v5m2 0v-5.5m2 0.5v5m2 0.5v-7m2 0v7.5m2 -0.5v-5.5m2 -1v9m2 -2.5v-6.5m2 -0.5v18.5m2 -11.5v-7m2 1.5v7m2 -1v-6m2 0v7.5m2 -2v-6m2 -0.5v8m2 15v-24m2 1v6.5m2 -0.5v-7m2 1v8m2 -2v-6.5m2 1v8.5m2 -1.5v-7m2 0v5.5m2 2.5v-8m2 0.5v5.5m2 1.5v-9m2 1v8.5m2 18.5v-29.5m2 3.5v5m2 1v-9m2 0.5v8.5m2 -0.5v-5.5m2 -1.5v9.5m2 -1v-9m2 0.5v6.5m2 0v-7m2 2v6.5m2 8v-22.5m2 0v30.5m2 -17.5v-5.5m2 -1.5v7.5m2 0v-6m2 -2v8m2 9.5v-29m2 14v6.5m2 0v-7.5m2 0v7m2 2.5v-10m2 1.5v6m2 -0.5v-6m2 -1.5v7m2 0v-8.5m2 3v5.5m2 0v-6m2 -1v8m2 -0.5v-5.5m2 -3.5v9m2 -0.5v-6m2 1v5m2 0.5v-6.5m2 -11.5v19.5m2 -1v-6m2 -1.5v9m2 -2.5v-8.5m2 1.5v22m2 -15v-5.5m2 -1v7m2 2v-8.5m2 -1v7.5m2 2v-10.5m2 2.5v7.5m2 -0.5v-7.5m2 -0.5v8.5m2 -2v-5.5m2 -1v7.5m2 -1v-7m2 -0.5v10m2 -2.5v-7m2 0.5v10m2 0v-9m2 -4.5v10m2 0v-7m2 1v7m2 -0.5v-6.5m2 -0.5v8.5m2 -1.5v-6.5m2 -10v35.5m2 -19v-6.5m2 1v5m2 1v-6m2 -2v7m2 2.5v-10m2 0v9m2 0v-11m2 3.5v6m2 0.5v-7.5m2 1.5v7.5m2 -2v-6m2 -5.5v20m2 -8v-6.5m2 0v6.5m2 0v-6m2 -1v7m2 3v-8.5m2 -3v9m2 -0.5v-7.5m2 2v9.5m2 -4.5v-5.5m2 0.5v6.5m2 -1v-5.5m2 -0.5v6.5m2 -1v-7.5m2 1.5v8.5m2 -1.5v-6.5m2 0.5v6.5m2 -0.5v-7m2 0.5v7m2 -1.5v-6.5m2 -2.5v9m2 0v-5.5m2 -2v9.5m2 -0.5v-7.5m2 0.5v5.5m2 2.5v-9.5m2 2v7.5m2 -1v-7m2 -1.5v7m2 1.5v-6.5m2 -1.5v8.5m2 -1.5v-5.5m2 -2v9m2 0.5v-8.5m2 -1.5v9.5m2 -2v-5m2 -1v6.5m2 1v-6.5m2 -11.5v36.5m2 -19.5v-6m2 -1v6.5m2 0.5v-7.5m2 0.5v6.5m2 1v-7.5m2 1v5.5m2 0v-6m2 1v5m2 2v-8m2 0.5v7m2 0v-6.5m2 0v5m2 0.5v-6.5m2 0.5v6m2 1.5v-7.5m2 -1v8.5m2 -1v-6m2 -0.5v7.5m2 0.5v-8.5m2 -1.5v9m2 0v-6.5m2 -2.5v7.5m2 0.5v-8m2 -7.5v24.5m2 -9v-7m2 0.5v7.5m2 2v-12m2 1v7.5m2 1v-7m2 1v5.5m2 1v-8m2 -1v9.5m2 -0.5v-10m2 3v6.5m2 1v-10m2 1v10m2 -1v-7.5m2 0v6.5m2 -1v-5m2 -1.5v7.5m2 -1v-7m2 2v6m2 1.5v-8.5m2 -1v7m2 0.5v-5.5m2 -1.5v7.5m2 2.5v-11.5m2 1.5v8m2 0v-9.5m2 0.5v7.5m2 0v-7.5m2 0.5v7m2 1v-6.5m2 -0.5v8m2 -2v-6m2 0.5v6.5m2 -0.5v-6.5m2 1v6m2 -0.5v-6.5m2 0.5v7m2 -1.5v-7m2 1.5v6.5m2 2v-10m2 0.5v7m2 -0.5v-5m2 -0.5v6.5m2 1v-7m2 0v5.5m2 1v-6.5m2 -0.5v7m2 0v-7.5m2 -2.5v10m2 1v-11m2 3.5v5.5m2 -0.5v-6.5m2 -8v28.5m2 -13.5v-6.5m2 -0.5v7.5m2 0.5v-6.5m2 -0.5v5.5m2 1.5v-8.5m2 2v6m2 2.5v-9m2 -1.5v8.5m2 1.5v-13m2 4.5v6.5m2 2.5v-11m2 -0.5v8.5m2 0v-5.5m2 -3v9m2 1.5v-8.5m2 0.5v6m2 0.5v-6m2 0v5m2 1.5v-7.5m2 -1.5v9.5m2 -1v-7.5m2 0v6.5m2 4v-9.5m2 -0.5v7.5m2 -1.5v-5.5m2 -0.5v7.5m2 -1v-5.5m2 -1v9m2 -2.5v-6m2 -1.5v9m2 0v-7m2 -1v29m2 -22v-7m2 -0.5v8.5m2 1.5v-9m2 0.5v6m2 -1v-5.5m2 -2v10.5m2 -2v-8.5m2 2.5v5m2 1v-7.5m2 0.5v19m2 -13v-5.5m2 -4.5v10m2 0.5v-8m2 1v6.5m2 1.5v-7m2 -2v7.5m2 0.5v-5.5m2 -0.5v7.5m2 -1.5v-6m2 -1v6.5m2 2.5v-11m2 2.5v6m2 1.5v-7m2 -1v7.5m2 13.5v-24m2 4.5v7m2 -2v-5m2 -0.5v6m2 0v-7m2 1v6.5m2 2v-8.5m2 0v6.5m2 0v-8m2 2v5.5m2 0v-6.5m2 0v6m2 7v-13.5m2 0v9m2 0v-8m2 0v6.5m2 -0.5v-5.5m2 0v5m2 0v-6m2 0v6.5m2 -0.5v-5.5m2 0v5.5m2 1v-6m2 -0.5v5.5m2 0v-5.5m2 0.5v7.5m2 -1v-7.5m2 0.5v8m2 -2.5v-6m2 0.5v6m2 1.5v-8m2 0.5v6m2 -0.5v-6m2 -1v9.5m2 -2.5v-5.5m2 -1.5v7.5m2 0v-8.5m2 2.5v6.5m2 -1v-7m2 0v23.5m2 -15v-6.5m2 -1.5v6.5m2 0v-7m2 2v7m2 -1.5v-6m2 -2v8.5m2 -1v-7m2 1v7.5m2 -1v-6.5m2 0v8m2 -1.5v-5.5m2 0v5m2 3.5v-9.5m2 -2.5v8.5m2 0.5v-7.5m2 -1v8m2 1.5v-8m2 1.5v6m2 17.5v-34.5m2 9.5v9.5m2 0v-9.5m2 -7v14.5m2 2v-11m2 2v7m2 0v-9m2 3v5m2 0.5v-7m2 -2.5v19.5m2 -7.5v-10m2 1.5v9.5m2 0v-10.5m2 0v10m2 -3.5v-7m2 -10v40m2 -22.5v-8.5m2 2.5v5.5m2 2v-11m2 3.5v6m2 0v-7m2 -2v9m2 0.5v-6.5m2 -1v6.5m2 2v-8.5m2 -1.5v9.5m2 0.5v-8m2 1v5m2 1v-6.5m2 0.5v7.5m2 -1v-9m2 2.5v7m2 -2v-5.5m2 -0.5v7m2 -0.5v-6m2 -1.5v8.5m2 -1.5v-5.5m2 -2v10m2 -1.5v-7m2 0.5v18.5m2 -12.5v-7m2 0v6.5m2 0v-7.5m2 1v7m2 0.5v-9m2 2.5v6m2 1v-7.5m2 0v7m2 1.5v-9.5m2 2v7m2 -1v-8.5m2 0.5v18.5m2 -11.5v-5m2 0v6m2 1v-7m2 -0.5v7.5m2 -1.5v-7.5m2 0v8.5m2 0v-8m2 0.5v7m2 1.5v-14.5m2 6.5v6.5m2 1v-7m2 -1.5v6.5m2 0v-6.5m2 0.5v9m2 -2.5v-8.5m2 2.5v6.5m2 0v-8m2 1.5v6m2 2v-7.5m2 -0.5v6.5m2 1v-8m2 0.5v6.5m2 2v-8m2 0v7m2 -1v-6.5m2 0v5.5m2 1.5v-9m2 0.5v7.5m2 1v-8.5m2 1.5v5.5m2 0v-9.5m2 -0.5v11m2 7v-20m2 4.5v7.5m2 5v-11m2 0.5v7m2 -1v-6.5m2 0.5v8m2 1v-10m2 1v5.5m2 1.5v-6.5m2 -1.5v7.5m2 6v-12.5m2 0v5.5m2 0v-8m2 1v9m2 0v-10m2 1.5v7m2 20v-29m2 1.5v13m2 -5v-6.5m2 -1.5v10.5m2 -2v-6.5m2 -1.5v8m2 0v-9.5m2 2.5v6.5m2 0v-7m2 0.5v8m2 -0.5v-9m2 1v7.5m2 -1v-6m2 -0.5v7m2 -1v-6m2 1v6m2 1.5v-8m2 -3.5v11m2 -0.5v-9.5m2 1.5v7.5m2 -0.5v-17m2 8.5v10m2 2v-11m2 2v6m2 1v-10m2 -0.5v9.5m2 2v-9m2 -1v9m2 -0.5v-7m2 0v7m2 -1v-5.5m2 -0.5v8m2 -1.5v-7m2 0v7.5m2 0.5v-10m2 2.5v5.5m2 0.5v-6m2 -0.5v7.5m2 -1.5v-6m2 -0.5v7m2 0.5v-8m2 2v7m2 1.5v-9m2 -1v8m2 -1.5v-5.5m2 0.5v6m2 16.5v-28.5m2 4v8m2 -1v-5m2 -7v14.5m2 -2v-5.5m2 0v7m2 -1v-7.5m2 1v7m2 -1.5v-6m2 -0.5v6.5m2 3.5v-9m2 -2v8m2 1v-9m2 1.5v6m2 2v-7.5m2 0.5v5.5m2 0v-6.5m2 1v5m2 2v-8.5m2 -4v12m2 -1.5v-5m2 -2v8m2 0.5v-7.5m2 -9.5v16.5m2 -1v-6.5m2 -1.5v8.5m2 0v-6m2 0.5v5m2 1.5v-8.5m2 0.5v7.5m2 -1v-5.5m2 -1.5v8.5m2 -1v-6.5m2 0.5v6m2 0v-6.5m2 0.5v7m2 -1v-7.5m2 1.5v8.5m2 0v-10.5m2 0.5v7.5m2 0v-6.5m2 1v5m2 0v-5.5m2 -2v9m2 1v-7.5m2 0v6m2 -0.5v-7m2 1v6.5m2 -1v-6m2 0v7.5m2 -1.5v-6m2 -1v11.5m2 -3.5v-7.5m2 1.5v5.5m2 0v-6.5m2 -1.5v9.5m2 -1v-8m2 -2.5v10.5m2 0v-9m2 1.5v8.5m2 -1.5v-10m2 3v8m2 0.5v-8.5m2 0v6.5m2 2v-7.5m2 -1.5v9m2 0v-7m2 -2.5v7.5m2 0.5v-6" stroke="#5a28f0" stroke-width="2" fill="none"/>
<rect x="378.0" y="428.8" width="3.0" height="28.3" fill="#9070b8" />
<text x="381.5" y="448.2" font-size="16.6" font-family='"Liberation Mono","DejaVu Sans Mono",monospace' fill="#868c94" textLength="37.0" lengthAdjust="spacingAndGlyphs" >CH10</text>
<circle cx="448.6" cy="442.9" r="7.3" fill="#e2a93c"/>
<path d="M460.5 438.9v7m2 -0.5v-8m2 0.5v8m2 2v-8.5m2 -1.5v8.5m2 -0.5v-7m2 2v7m2 -2v-5.5m2 0v9m2 -2.5v-7.5m2 0.5v7m2 -1v-9m2 3.5v8.5m2 -1v-8m2 -0.5v8m2 -1v-6m2 0v6.5m2 -1v-7.5m2 1.5v6.5m2 0v-6m2 0v5m2 1v-7m2 0v6m2 0.5v-6.5m2 0v7.5m2 -1.5v-5.5m2 -1v6.5m2 2.5v-9m2 0v7m2 5v-15.5m2 5v7m2 -1v-6.5m2 -0.5v7m2 0.5v-7.5m2 1v5.5m2 -0.5v-4.5m2 -3.5v8m2 0.5v-7m2 0.5v6m2 1.5v-8m2 -3v14.5m2 -1.5v-9m2 -0.5v6.5m2 -0.5v-7.5m2 1v10.5m2 -3v-7m2 -0.5v6.5m2 2v-8m2 -3.5v16.5m2 -7.5v-5m2 -4.5v13m2 -0.5v-7m2 -2v6m2 1v-6.5m2 -1.5v9.5m2 -1.5v-5.5m2 -0.5v5.5m2 2v-7m2 -2v7m2 1.5v-9m2 2v6m2 1.5v-10.5m2 3v6m2 1v-7.5m2 -0.5v7.5m2 -1v-6m2 0.5v6m2 0.5v-6m2 -1.5v6.5m2 0v-6.5m2 0v8.5m2 -1.5v-6m2 -1v8m2 0.5v-6.5m2 -1.5v7.5m2 2.5v-9.5m2 0v5.5m2 0.5v-7.5m2 -1.5v9m2 -0.5v-5.5m2 0v6.5m2 -1v-6.5m2 1.5v5.5m2 -1v-6m2 -1v7.5m2 0v-6.5m2 1v5.5m2 1.5v-7m2 0.5v8.5m2 -3.5v-6m2 -0.5v6.5m2 1.5v-7m2 0v7m2 1v-7.5m2 -5v11m2 2.5v-10.5m2 1v7.5m2 -2v-8m2 1.5v11m2 -2.5v-8.5m2 2v8m2 -2v-8.5m2 1.5v6.5m2 0v-5.5m2 -2v7.5m2 -0.5v-6.5m2 0.5v6m2 1.5v-6m2 -1.5v9.5m2 -2.5v-7.5m2 -1v14m2 -5.5v-7.5m2 1v7.5m2 1v-8.5m2 -0.5v11.5m2 -5.5v-6m2 0.5v6.5m2 0v-5.5m2 -1v5m2 0.5v-6.5m2 1.5v5m2 1v-7m2 -0.5v6m2 0.5v-5m2 -1.5v8.5m2 -0.5v-7.5m2 -1v8.5m2 -1v-7m2 0.5v5.5m2 0.5v-5.5m2 0v5m2 2v-8.5m2 1v8.5m2 4.5v-13m2 1v7m2 -2v-5.5m2 -0.5v6.5m2 0.5v-9m2 3v6m2 0.5v-7m2 1v5.5m2 -0.5v-8.5m2 0.5v8m2 0.5v-9m2 0.5v7.5m2 1.5v-7.5m2 0v6.5m2 1v-8.5m2 0v7.5m2 0v-6m2 -0.5v9.5m2 -2.5v-7.5m2 -0.5v6.5m2 1v-5.5m2 -0.5v6m2 -0.5v-6m2 -0.5v8m2 -1.5v-6.5m2 1.5v8.5m2 -3v-6m2 0v8m2 -1v-6m2 -2v7.5m2 -1v-6m2 1.5v5m2 0v-7.5m2 2v6.5m2 0v-6.5m2 -1v7.5m2 -1v-6.5m2 -3v14.5m2 -4v-8m2 1.5v6.5m2 -0.5v-7m2 0v5.5m2 0.5v-7.5m2 2.5v7m2 -1v-6.5m2 0v6.5m2 -0.5v-7m2 0.5v6m2 0v-5m2 -5v12.5m2 -1v-6.5m2 0v6.5m2 -1.5v-6.5m2 1v7.5m2 -2v-8.5m2 0.5v8.5m2 -1v-5.5m2 0v7m2 -1v-5.5m2 -3v9m2 0v-5.5m2 -1.5v7.5m2 2.5v-9m2 -2.5v11.5m2 -3v-5m2 -1.5v8m2 -1.5v-6.5m2 0v7.5m2 -2v-4.5m2 -1v6m2 0v-10.5m2 3.5v6.5m2 3.5v-11m2 1.5v8.5m2 -1v-7m2 1v5.5m2 0v-6m2 -5v18.5m2 -7.5v-6m2 -1.5v9m2 -1.5v-5.5m2 -0.5v5.5m2 1v-6m2 -0.5v8m2 -1.5v-6m2 -2v7m2 2v-8m2 0v6m2 0.5v-6.5m2 1.5v5.5m2 -1v-7m2 2v6.5m2 -1v-6.5m2 -0.5v7.5m2 -0.5v-7.5m2 0.5v7m2 -0.5v-6m2 0v6.5m2 0v-7.5m2 1v7.5m2 0v-9.5m2 3v6m2 -0.5v-8m2 1.5v6m2 0.5v-7m2 1v6.5m2 0v-6m2 -0.5v11m2 -4.5v-6m2 -1.5v7m2 -0.5v-6.5m2 -0.5v7m2 2v-9.5m2 0.5v7m2 0v-5m2 0v5.5m2 1v-8m2 1v6m2 0.5v-7.5m2 2v6.5m2 -2v-7m2 1v8m2 0v-9m2 1.5v6.5m2 0v-7m2 -1.5v9m2 1.5v-8m2 -1v6.5m2 2v-9m2 0v7m2 -1v-4.5m2 -2.5v8m2 0v-6.5m2 -0.5v6.5m2 0.5v-7.5m2 1v6.5m2 -0.5v-6m2 1v7m2 1.5v-11.5m2 3v5m2 1v-8m2 0.5v8m2 4v-13.5m2 2v7.5m2 -1v-6.5m2 1.5v5.5m2 0.5v-8.5m2 0.5v9m2 -2.5v-6.5m2 1.5v5.5m2 0.5v-7m2 1v5m2 5v-11.5m2 1.5v6m2 -0.5v-7m2 0.5v6.5m2 0.5v-8m2 0v7m2 0.5v-7.5m2 1v6m2 1.5v-7m2 -0.5v9.5m2 -3.5v-6m2 -1v10m2 -2v-6.5m2 -0.5v7m2 0.5v-9m2 1.5v6m2 1.5v-8m2 0.5v6m2 2.5v-9m2 1.5v4.5m2 0.5v-5.5m2 -1.5v8m2 1v-8m2 0v8m2 -1v-8m2 -1v10.5m2 -2v-6.5m2 -1v8.5m2 0.5v-8.5m2 -0.5v7.5m2 0v-6m2 0.5v5m2 2v-8.5m2 -0.5v8m2 0v-9m2 3v5.5m2 0.5v-8m2 -2v9.5m2 2.5v-9m2 -1.5v8m2 -1v-5m2 -0.5v8m2 -0.5v-6m2 -2.5v7.5m2 1.5v-8.5m2 0.5v9m2 -2v-6.5m2 -3v8m2 4v-12m2 1.5v7.5m2 0v-6m2 -1v6.5m2 1v-6m2 -4v10m2 -1v-8.5m2 1.5v7m2 1.5v-6.5m2 -1.5v7m2 1v-6m2 -1v13m2 -6v-8m2 -1.5v9m2 0v-8m2 2.5v7.5m2 -3v-7.5m2 2v6.5m2 0.5v-7.5m2 1v7m2 -1v-6m2 -1v7m2 -0.5v-6.5m2 1v5m2 0.5v-6.5m2 0v11.5m2 -4v-7.5m2 -1.5v7m2 0.5v-5m2 0v5m2 2v-7m2 -0.5v6m2 -0.5v-6m2 0v6.5m2 0v-7.5m2 0v7m2 3v-10.5m2 2v5.5m2 0v-5.5m2 -0.5v9.5m2 -3.5v-5m2 0.5v6m2 0v-6.5m2 -1.5v7.5m2 -0.5v-5m2 -3.5v8.5m2 -0.5v-7m2 0.5v8.5m2 -2v-6.5m2 0v9m2 -1.5v-6m2 -0.5v14m2 -8.5v-5m2 -2v8m2 0v-7.5m2 1v10m2 -4v-7.5m2 0v8m2 1v-10.5m2 2.5v8.5m2 -1.5v-5.5m2 -3.5v13.5m2 -5v-6m2 -0.5v8.5m2 -2.5v-6m2 0v7.5m2 -0.5v-7m2 -2.5v8.5m2 0v-5.5m2 -0.5v7.5m2 -1v-7.5m2 2v5.5m2 1v-7.5m2 0v6.5m2 -0.5v-5.5m2 0.5v6.5m2 -0.5v-6m2 -0.5v5m2 7v-14.5m2 3v6.5m2 0.5v-7m2 -1v8.5m2 -2.5v-5m2 -0.5v6.5m2 -0.5v-5.5m2 0v5m2 1v-7m2 -1v7m2 5.5v-14m2 3v5.5m2 2v-7m2 -0.5v5.5m2 2v-7.5m2 -1v6m2 0.5v-8.5m2 2.5v6.5m2 3v-10.5m2 0v8m2 -1v-5.5m2 0.5v5m2 1v-8m2 1v6m2 3v-9m2 0v7m2 -1v-5m2 -1.5v7m2 0v-6.5m2 -1v8m2 -1.5v-6.5m2 0.5v6m2 1v-8m2 2v7m2 -1v-7m2 0.5v10m2 -4v-5m2 -2v10.5m2 -3v-6.5m2 1.5v7m2 -1v-7m2 0.5v5m2 3v-9m2 0.5v6m2 0.5v-6.5m2 -0.5v6.5m2 -1v-5m2 0v6.5m2 -1v-7.5m2 1v8.5m2 0.5v-9m2 0v6m2 1.5v-6.5m2 -2v9.5m2 -1v-7.5m2 1.5v5.5m2 1.5v-7m2 -0.5v14.5m2 -6.5v-9m2 -1.5v10m2 -1.5v-7m2 0v7m2 1.5v-7.5m2 -1.5v7m2 4v-9m2 -2v7.5m2 1v-6.5m2 0.5v5m2 0v-5.5m2 -2.5v7.5m2 0.5v-6m2 -2.5v13.5m2 -5.5v-6m2 1v6m2 1v-7.5m2 0.5v5m2 1v-7.5m2 1v7m2 0v-6.5m2 0v7m2 -1.5v-7.5m2 1.5v6.5m2 -0.5v-6.5m2 1v7m2 -1.5v-6.5m2 1v7m2 1v-8m2 0v5.5m2 -0.5v-5m2 0.5v5.5m2 -1v-6m2 -0.5v9m2 -0.5v-8.5m2 -2.5v12m2 -1.5v-6m2 -3.5v7.5m2 1v-6m2 0.5v5.5m2 1v-8m2 -0.5v8m2 -1v-8.5m2 3.5v6m2 0v-6m2 0v7m2 -2v-5.5m2 -1.5v8.5m2 -1.5v-6m2 -1.5v8m2 0.5v-7.5m2 0.5v8m2 0.5v-8m2 -0.5v6.5m2 1v-7m2 -0.5v6.5m2 0v-6m2 -0.5v6m2 0.5v-6m2 0v7m2 -0.5v-8.5m2 2.5v5m2 6v-10.5m2 0v4.5m2 0v-7m2 0v8m2 0.5v-7.5m2 -0.5v6.5m2 2v-8.5m2 1v6m2 1v-6.5m2 -2v7m2 5v-15m2 4v7m2 0.5v-9m2 2.5v11m2 -4.5v-7m2 -3v9.5m2 0v-6m2 -2v8.5m2 0.5v-8.5m2 2v6.5m2 0v-9m2 1.5v7.5m2 -1v-7m2 0v7.5m2 -0.5v-7m2 1v5.5m2 -1v-5.5m2 0.5v9m2 -2v-7.5m2 1v5m2 2v-7.5m2 -0.5v6.5m2 -0.5v-7m2 2v6m2 0.5v-12m2 5v5.5m2 0.5v-5.5m2 0v7m2 -2v-7.5m2 2v7m2 -0.5v-8.5m2 2v8m2 -1v-8m2 0v9m2 -2v-5.5m2 -0.5v6m2 1.5v-8m2 -0.5v7m2 -0.5v-6m2 0.5v6m2 3v-10m2 1.5v7m2 -0.5v-7m2 0v10.5m2 -2.5v-8.5m2 0v8m2 -2v-6m2 0.5v6m2 1.5v-7.5m2 -2v9m2 -1.5v-5m2 -4v10m2 1v-9m2 1v6.5m2 0v-7m2 0v7m2 0v-5.5m2 0v6.5m2 0v-7m2 1v5m2 -0.5v-6.5m2 1v8.5m2 -2v-6m2 0v5m2 1v-7m2 1.5v4.5m2 0.5v-7.5m2 -1v10m2 0.5v-8m2 -0.5v7m2 -1v-5m2 0v5.5m2 1.5v-8m2 0.5v6m2 1.5v-11.5m2 3v7m2 -0.5v-5.5m2 -3.5v10.5m2 -1.5v-5m2 -0.5v6m2 -0.5v-6.5m2 1v6m2 0v-5.5m2 -1.5v12m2 -0.5v-13.5m2 3.5v5.5m2 0.5v-8.5m2 2v7m2 -0.5v-7m2 1v5.5m2 0.5v-6.5m2 -1v6.5m2 1v-8.5m2 1.5v6.5m2 0v-5.5m2 -0.5v6m2 -0.5v-5.5m2 -0.5v6.5m2 0v-5.5m2 -1v10.5m2 -4.5v-5m2 -1.5v7m2 -1v-4m2 -1v5.5m2 4v-11.5m2 1.5v6.5m2 1v-6.5m2 -3.5v8.5m2 0v-5.5m2 0.5v6.5m2 0v-7m2 0v5.5m2 0.5v-7m2 0.5v6m2 3v-7.5m2 -2v8m2 0v-9m2 3v4.5m2 1v-6.5m2 -2v8.5m2 0v-6m2 -2v7.5m2 -0.5v-7m2 1.5v6m2 0.5v-7.5m2 -0.5v6.5m2 0.5v-5.5m2 -2.5v9m2 1v-11m2 3.5v6.5m2 1v-8m2 0v7.5m2 -1.5v-5m2 0v9m2 -3v-7.5m2 1v8m2 -1.5v-7.5m2 1.5v7m2 0v-8.5m2 0v7m2 0v-6m2 -0.5v6.5m2 -0.5v-9.5m2 2.5v6.5m2 0.5v-7.5m2 1v6.5m2 3v-10.5m2 2v6.5m2 -0.5v-5.5m2 -2v8m2 -0.5v-6m2 -0.5v8.5m2 -2.5v-6.5m2 0.5v8.5m2 -2.5v-5m2 0v5.5m2 1.5v-9.5m2 0v7m2 1v-5.5m2 -1v6.5m2 0v-7.5m2 2v5m2 1v-6.5m2 -2v9.5m2 -1v-8.5m2 2v6m2 1.5v-7.5m2 0.5v6m2 2v-10.5m2 2v7m2 -0.5v-7.5m2 1.5v5m2 0v-5m2 -5v16m2 -4.5v-6.5m2 -2v6.5m2 0.5v-6m2 -0.5v6.5m2 1.5v-8m2 0v8.5m2 -2v-5m2 0v8m2 -2.5v-5m2 -2.5v7m2 1.5v-7m2 0.5v6.5m2 -1.5v-5.5m2 0v7m2 0v-6.5m2 -1.5v8m2 5v-16.5m2 5v6.5m2 -1v-8.5m2 1.5v7.5m2 1v-8.5m2 -1v8m2 2v-8.5m2 1v5.5m2 0v-7m2 0v7.5m2 -0.5v-6.5m2 0.5v5.5m2 0.5v-7m2 0v8m2 -1.5v-8.5m2 2.5v6m2 0.5v-6.5m2 0v10.5m2 -4v-7m2 -5.5v18m2 -5.5v-6m2 -0.5v6m2 2.5v-8m2 0v7m2 0v-6.5m2 0v5m2 1v-6.5m2 0v7m2 0v-7m2 -1v6.5m2 0.5v-6.5m2 0v10m2 -3.5v-7m2 -0.5v9.5m2 -0.5v-7.5m2 -2v8.5m2 0.5v-8.5m2 0v9.5m2 -2v-8m2 1.5v7m2 -1v-8m2 2v6.5m2 3v-10m2 0.5v6.5m2 0.5v-8.5m2 2v7m2 0.5v-7m2 -2v8.5m2 -1.5v-7m2 0.5v7m2 1v-7m2 0.5v6m2 0v-7m2 1v5.5m2 1v-9m2 0.5v8m2 0v-6m2 -1.5v7.5m2 -0.5v-6.5m2 -0.5v7.5m2 -1v-6.5m2 -0.5v7.5m2 -0.5v-7.5m2 2.5v6.5m2 1.5v-10.5m2 -0.5v8.5m2 2.5v-10.5m2 2.5v5.5m2 -1v-6.5m2 -1.5v9m2 2v-10m2 2v10.5m2 -3.5v-6.5m2 -3v10m2 3v-10m2 0v6.5m2 0.5v-9m2 1v7m2 -1.5v-5m2 0.5v5.5m2 0v-7.5m2 0.5v7.5m2 -0.5v-6m2 0.5v7.5m2 -2.5v-7.5m2 -0.5v9.5m2 1.5v-8.5m2 0.5v6m2 1v-8.5m2 0.5v6.5m2 -0.5v-5.5m2 0v7m2 -1v-6.5m2 0v6m2 1.5v-6.5m2 -1.5v8.5m2 -2v-5.5m2 -0.5v6m2 3.5v-10.5m2 2v5.5m2 1.5v-9.5m2 -1v12m2 -2v-9.5m2 2v7m2 -0.5v-6m2 0.5v5m2 1v-7m2 -0.5v7m2 -0.5v-5.5m2 0.5v6m2 -1v-6.5m2 2v6m2 -1v-6.5m2 -0.5v6.5m2 0v-7m2 0v10m2 -1.5v-9.5m2 1.5v8m2 0v-8m2 1v5.5m2 2v-7.5m2 1v5m2 1v-8.5m2 1.5v5.5m2 0v-5m2 -3v8.5m2 0v-8m2 2.5v5m2 1v-7m2 1v5.5m2 -0.5v-6.5m2 1.5v6m2 0v-6m2 -1v7.5m2 -1.5v-7m2 1v6.5m2 -0.5v-5m2 0v5m2 -0.5v-5m2 -1.5v8.5m2 -1v-6m2 0.5v5m2 3.5v-9m2 1v4.5m2 0v-5.5m2 -3.5v11m2 -2v-5m2 0v7m2 -1v-6m2 -1.5v7m2 -0.5v-5m2 -0.5v7.5m2 0v-7m2 -0.5v6m2 0v-7m2 -3.5v11.5m2 -1.5v-5.5m2 -1.5v8m2 0.5v-7.5m2 -0.5v7m2 0.5v-6m2 -4.5v11m2 2.5v-11.5m2 1.5v7.5m2 -1.5v-5.5m2 0v8m2 -1.5v-6m2 0v7.5m2 0v-9m2 1v7m2 -0.5v-6m2 -2.5v8m2 0.5v-7m2 0v6.5m2 0.5v-8m2 0.5v6.5m2 1v-9m2 1.5v8.5m2 -1.5v-6m2 0.5v5m2 1.5v-7.5m2 -0.5v6.5m2 0.5v-6.5m2 -1v9.5m2 -1v-10.5m2 3v7.5m2 -1.5v-5.5m2 -0.5v6m2 -0.5v-6.5m2 2v6m2 0v-5.5m2 -2v8m2 0v-6.5m2 -1v6m2 0.5v-6" stroke="#9070b8" stroke-width="2" fill="none"/>
<rect x="378.0" y="457.1" width="3.0" height="28.3" fill="#3a70f0" />
<text x="381.5" y="476.5" font-size="16.6" font-family='"Liberation Mono","DejaVu Sans Mono",monospace' fill="#868c94" textLength="37.0" lengthAdjust="spacingAndGlyphs" >CH11</text>
<circle cx="448.6" cy="471.2" r="7.3" fill="#e2a93c"/>
<path d="M460.5 468.2v7m2 11v-20m2 0.5v9m2 -2v-6m2 1v5m2 1v-9m2 1v9.5m2 1v-10m2 1v7m2 -0.5v-7m2 -2.5v10m2 1v-9m2 -3.5v13.5m2 -1v-7.5m2 -1.5v7.5m2 0v-7.5m2 1.5v6.5m2 0v-6.5m2 0v7m2 -1v-7.5m2 -0.5v7m2 1v-8m2 1.5v6.5m2 -1v-5.5m2 0.5v5m2 1.5v-7.5m2 0.5v12m2 -5v-6.5m2 -4v9.5m2 1.5v-11.5m2 2.5v9m2 -1v-7m2 0.5v7.5m2 -1v-7.5m2 -0.5v7m2 0v-5m2 -2v8m2 -1v-6m2 0.5v8.5m2 0v-9m2 -1v7.5m2 1v-8m2 0.5v7m2 2v-8m2 -0.5v6.5m2 0.5v-8.5m2 1v6m2 0.5v-8m2 0.5v8.5m2 0.5v-8m2 0.5v6m2 10.5v-16.5m2 -1v8m2 -1.5v-5m2 -1v7.5m2 2v-11m2 2v7m2 -0.5v-6.5m2 0v6.5m2 -0.5v-5.5m2 -1.5v7.5m2 1.5v-8.5m2 0.5v7m2 -1.5v-6.5m2 0.5v9.5m2 -3.5v-6.5m2 1v6m2 0.5v-6m2 0v6.5m2 0v-7.5m2 1v5m2 0v-5m2 -4.5v17.5m2 -7v-7.5m2 0.5v8.5m2 6.5v-20m2 6v6m2 0.5v-7m2 -0.5v8m2 -0.5v-8m2 1v8m2 -1.5v-7m2 0v6.5m2 -0.5v-14m2 6.5v10m2 -1v-7m2 0v7m2 -0.5v-10.5m2 2.5v8m2 -1v-8.5m2 2.5v7.5m2 -0.5v-6.5m2 0.5v7.5m2 0.5v-8.5m2 -0.5v6.5m2 0v-5.5m2 -2v7m2 0.5v-5.5m2 0v8.5m2 -2.5v-6.5m2 -1v8.5m2 -2v-5.5m2 -0.5v6m2 3.5v-11m2 2.5v8m2 -3v-6m2 1v6m2 1v-7.5m2 0v6m2 1v-7m2 0v12m2 -6v-6m2 -3.5v9m2 0.5v-7.5m2 -0.5v14m2 -6.5v-7.5m2 1v6.5m2 0.5v-6m2 0.5v6m2 11v-27m2 10v16m2 -11v-5.5m2 0v6m2 0.5v-10.5m2 3v7m2 -0.5v-5.5m2 0v6m2 -0.5v-6m2 0v7.5m2 1v-9.5m2 1.5v9m2 -3.5v-7m2 0.5v7m2 7v-14.5m2 1v6.5m2 0.5v-8.5m2 0v10m2 -0.5v-11m2 3.5v6m2 1v-7.5m2 1v5m2 2.5v-9m2 0v7m2 0v-7.5m2 1v7m2 -1v-5m2 -1v6m2 2v-8m2 -1v8.5m2 -0.5v-8.5m2 1.5v8m2 -0.5v-8m2 1.5v5.5m2 1.5v-7m2 -2v8.5m2 -1.5v-7.5m2 1.5v13.5m2 -7v-6.5m2 -1v8m2 0v-7m2 1v9m2 -1.5v-9.5m2 0.5v8m2 -0.5v-6.5m2 -0.5v6.5m2 0.5v-6m2 0v5m2 2v-7.5m2 -1.5v7m2 1.5v-6.5m2 -6.5v21.5m2 -8v-7m2 -1v6.5m2 0.5v-6m2 0v5m2 0v-5.5m2 -1v6.5m2 0v-5.5m2 -1v7m2 0v-6m2 -0.5v6.5m2 1v-7m2 -6.5v15.5m2 -3.5v-5.5m2 -2.5v11.5m2 -2v-8.5m2 2v6m2 0.5v-8m2 -1.5v9m2 -1v-6.5m2 -4.5v13m2 -2v-6m2 0v6m2 1v-6m2 -0.5v7m2 -0.5v-7.5m2 -2v10.5m2 -2v-5m2 -2v9m2 -2v-6m2 0v6.5m2 1.5v-8m2 0v7.5m2 -1v-5.5m2 -1.5v6.5m2 1.5v-7.5m2 0v6m2 0.5v-6.5m2 1v8m2 1v-9.5m2 0v7.5m2 -1v-8m2 0.5v11.5m2 -3v-9m2 1.5v10m2 -4.5v-7.5m2 2.5v5.5m2 0.5v-6m2 -0.5v5.5m2 0v-7m2 1.5v6.5m2 -1v-5.5m2 -1v9m2 -2v-8.5m2 3v6m2 -1v-6m2 -4v12m2 0v-8m2 -1v8m2 3v-11m2 1v6.5m2 -0.5v-5.5m2 -3v10.5m2 -0.5v-8.5m2 2v5.5m2 1.5v-9.5m2 0.5v7m2 1v-7m2 -0.5v7.5m2 -1v-5.5m2 0v8m2 -0.5v-10m2 3v6.5m2 -1v-5.5m2 -1v6.5m2 1v-8m2 -1v9m2 -1v-6m2 -0.5v6m2 1.5v-7m2 -2.5v10m2 -1v-6.5m2 -0.5v6.5m2 -0.5v-5.5m2 -2v10m2 -2.5v-5m2 -2v8m2 0v-6.5m2 0.5v5m2 1v-6.5m2 -0.5v6m2 0.5v-8m2 2.5v6m2 0.5v-7m2 -7v15m2 -0.5v-9.5m2 2.5v8.5m2 -3v-5.5m2 0v5m2 1.5v-7.5m2 -2v9.5m2 0v-6.5m2 -2v8.5m2 0.5v-7.5m2 0v6m2 0v-6.5m2 -0.5v7.5m2 -0.5v-5.5m2 -0.5v6m2 7v-18m2 5v6m2 1v-7.5m2 -2v8.5m2 -0.5v-6m2 -1v8m2 0v-8m2 1.5v7.5m2 -2v-6.5m2 -0.5v7.5m2 1v-7m2 0.5v5.5m2 -0.5v-5.5m2 0.5v6.5m2 3.5v-10.5m2 0v7m2 -1.5v-6.5m2 -0.5v7.5m2 2v-7.5m2 -1v8.5m2 -2.5v-5m2 -0.5v7.5m2 -1v-7m2 -0.5v8.5m2 -1.5v-5.5m2 0v6.5m2 -1v-6m2 0.5v8m2 6.5v-15m2 -8.5v14.5m2 0.5v-8.5m2 2v6.5m2 -0.5v-5.5m2 0v9.5m2 -3.5v-7m2 -3v12.5m2 -3v-8.5m2 2v7.5m2 0v-7m2 0v5.5m2 0v-6.5m2 1v6.5m2 -0.5v-5.5m2 0v8.5m2 -1v-11m2 2.5v8m2 -1v-7.5m2 1.5v6m2 -0.5v-7.5m2 1.5v7.5m2 1.5v-10.5m2 0v7.5m2 1v-7.5m2 -1.5v7.5m2 0v-8m2 0.5v8m2 0v-6.5m2 -0.5v9.5m2 -1.5v-10m2 1v7.5m2 10v-23.5m2 8.5v5m2 0v-5m2 -1v6.5m2 1.5v-9.5m2 2v6.5m2 2v-9m2 0.5v6.5m2 0.5v-8m2 0v9m2 -0.5v-9m2 -2.5v10m2 1.5v-7.5m2 -0.5v8.5m2 -1.5v-9m2 0v8m2 1.5v-7m2 -1v6.5m2 1.5v-7m2 -1v10m2 -3.5v-6m2 -0.5v8.5m2 0.5v-7.5m2 -2v8m2 11.5v-25.5m2 8v7m2 -2v-7.5m2 0v8.5m2 -0.5v-8m2 2v7m2 -0.5v-7m2 0.5v7.5m2 -1.5v-7.5m2 2v7m2 -2v-5.5m2 0v7.5m2 -1v-6.5m2 0v6m2 1.5v-7m2 -6v12m2 0.5v-11m2 4.5v5.5m2 1.5v-7.5m2 -1v8m2 -0.5v-7m2 -1.5v11m2 -2v-7.5m2 0.5v8.5m2 -3v-6m2 1v6m2 -1v-6m2 1v6m2 -0.5v-5.5m2 -1.5v7m2 0.5v-6.5m2 0.5v6m2 3v-9m2 -1v6.5m2 1.5v-9m2 1.5v5.5m2 10.5v-20m2 -0.5v11m2 1v-10m2 -0.5v10.5m2 -1v-7.5m2 -1v8.5m2 -0.5v-6.5m2 1v5m2 0.5v-6m2 0.5v5.5m2 0.5v-8m2 1v7m2 9.5v-24.5m2 8.5v6m2 0v-7.5m2 2v7.5m2 1v-10m2 1.5v8m2 -2v-7m2 -1v7.5m2 0.5v-8m2 1.5v5.5m2 0v-11.5m2 5v7.5m2 0.5v-6.5m2 -1v8m2 -1v-6m2 -2v7m2 6.5v-18m2 6.5v6.5m2 -1v-5.5m2 -1.5v8.5m2 -2v-5m2 -0.5v5.5m2 0v-6.5m2 1.5v5.5m2 -0.5v-6.5m2 -1v10.5m2 4v-12m2 -0.5v6m2 -0.5v-5m2 0v5.5m2 -0.5v-5m2 -1.5v9.5m2 -1v-15m2 6.5v6.5m2 1v-6.5m2 0v7m2 -0.5v-10m2 0v10m2 -1v-6.5m2 1v6m2 1v-8m2 1.5v5m2 3v-10.5m2 2.5v8.5m2 -1.5v-8.5m2 -1v8m2 0.5v-6.5m2 -1v6.5m2 0.5v-8m2 2.5v5.5m2 0.5v-7.5m2 1.5v6.5m2 -1v-6m2 0.5v6m2 -1v-5.5m2 -2.5v8m2 1.5v-8m2 1.5v5m2 0.5v-5.5m2 -0.5v7.5m2 -1v-7m2 0.5v8.5m2 1v-13m2 4v7.5m2 1v-9.5m2 1v7.5m2 -2.5v-6.5m2 1v8.5m2 -2.5v-6.5m2 1v5.5m2 4v-10.5m2 -6v16m2 -0.5v-15.5m2 6v6m2 1.5v-7m2 -1v8.5m2 -2v-5m2 -2.5v7.5m2 2v-8m2 1v7m2 -2v-5m2 -1v6.5m2 -0.5v-5.5m2 0.5v5.5m2 2v-8.5m2 1v5.5m2 -0.5v-6.5m2 -1v8.5m2 -0.5v-9m2 2.5v6.5m2 1v-7.5m2 0v7.5m2 -0.5v-9.5m2 3.5v6.5m2 1v-8m2 -1.5v8.5m2 2.5v-10m2 -0.5v7.5m2 0v-7m2 0v7.5m2 2.5v-13.5m2 3.5v7m2 0.5v-9m2 2v6m2 0v-6.5m2 0.5v6m2 0.5v-7.5m2 -0.5v8m2 0.5v-8m2 0v10m2 -3v-7.5m2 1.5v5.5m2 0v-5.5m2 0.5v6m2 -0.5v-5.5m2 -1.5v9m2 -1.5v-9.5m2 2v9.5m2 1v-9m2 -1.5v8.5m2 -0.5v-10m2 3.5v8.5m2 -3.5v-6m2 0v7.5m2 -1.5v-5m2 -1v14m2 -7.5v-5.5m2 0v6.5m2 -1v-7.5m2 -2v14.5m2 -4.5v-7.5m2 -1.5v8.5m2 2v-8.5m2 0.5v6m2 0.5v-6.5m2 -0.5v6.5m2 -0.5v-7m2 1v6m2 0.5v-6.5m2 -0.5v6.5m2 1.5v-7.5m2 1v5m2 0v-7m2 -1v9.5m2 -1.5v-7.5m2 0v9m2 -1.5v-5.5m2 -0.5v9m2 -2v-7.5m2 0v7.5m2 0v-7.5m2 0v7m2 -0.5v-6m2 1v7.5m2 -1.5v-7.5m2 1.5v6m2 0.5v-7.5m2 1v6m2 1.5v-7.5m2 -1.5v8m2 0.5v-7m2 -2v7.5m2 0v-8.5m2 1v7.5m2 1.5v-8m2 0.5v14.5m2 -9v-5m2 -0.5v6.5m2 0v-6m2 -2.5v9.5m2 -0.5v-7.5m2 0.5v6m2 1v-11.5m2 5v5.5m2 2.5v-9.5m2 1v5.5m2 0.5v-8.5m2 1.5v7.5m2 0v-6.5m2 -2.5v8m2 0v-6.5m2 0.5v7m2 -1v-7.5m2 1v7m2 0.5v-7m2 -5v17.5m2 -5.5v-6m2 -1v6.5m2 0v-5.5m2 0v5m2 1.5v-7m2 -3v10.5m2 -1.5v-5.5m2 0v6.5m2 -0.5v-7.5m2 1.5v7m2 -0.5v-8m2 1v7.5m2 -1v-8m2 1v6m2 0v-5.5m2 -1v8.5m2 -2v-6m2 -1v10.5m2 -0.5v-9.5m2 0v11m2 -3.5v-10m2 4v5.5m2 0v-7m2 0v7m2 1.5v-9m2 2v6m2 3v-10.5m2 -9.5v26m2 -10v-6.5m2 -2v8.5m2 4v-10.5m2 0.5v6.5m2 -0.5v-5m2 -2.5v8.5m2 0v-7m2 1v5m2 1.5v-6.5m2 -3v8m2 1v-6.5m2 0.5v9m2 -2v-8.5m2 0v9m2 -1.5v-7m2 -3v21m2 -4.5v-13m2 0.5v6.5m2 0.5v-10.5m2 2.5v8m2 -1.5v-10m2 4v9m2 -0.5v-9m2 1v5m2 2.5v-8m2 -2v8.5m2 0v-7.5m2 -0.5v8m2 -0.5v-6.5m2 0.5v9m2 9.5v-20.5m2 1.5v6m2 2v-10m2 2v7m2 5v-12.5m2 -2.5v10.5m2 0v-6.5m2 0v5m2 0.5v-6.5m2 -3v10.5m2 -1.5v-7m2 0.5v8m2 -1.5v-6m2 0v6.5m2 1v-6.5m2 -2.5v8.5m2 1v-7m2 -2v9.5m2 -1v-6.5m2 -4v24m2 -14.5v-12m2 5v9m2 0v-12.5m2 5v7.5m2 -1v-8.5m2 -0.5v9m2 0.5v-8m2 -0.5v9m2 -1v-7.5m2 -1v7.5m2 -0.5v-7m2 2v6.5m2 8.5v-20.5m2 5v5.5m2 1v-7.5m2 0.5v6m2 2.5v-9m2 -3.5v11m2 1v-8.5m2 1.5v7m2 1v-9m2 1v6.5m2 -1.5v-5m2 -1v6.5m2 1v-11m2 1v10.5m2 -2v-8m2 1.5v10m2 -2.5v-7m2 -1v9.5m2 -2v-7m2 -1.5v8m2 1.5v-8m2 1.5v6.5m2 0.5v-7m2 -0.5v5.5m2 3v-9m2 0v7m2 -0.5v-5.5m2 -7.5v21m2 -6.5v-9m2 1.5v6m2 -0.5v-8.5m2 3v5.5m2 0.5v-8m2 -2v15m2 -5.5v-8m2 2.5v13m2 -5v-8m2 0.5v6.5m2 0v-6.5m2 0v5m2 0v-7.5m2 1.5v6m2 7v-12m2 0v7m2 -1.5v-6m2 -1.5v7m2 1v-7.5m2 0v10.5m2 -4v-5.5m2 0v7.5m2 0.5v-9m2 1.5v5.5m2 0v-6.5m2 1v5m2 1.5v-7m2 -0.5v7.5m2 9v-17m2 1.5v6.5m2 -1.5v-6.5m2 1.5v5m2 0.5v-6m2 0.5v5.5m2 1v-8m2 1v6m2 0.5v-7m2 -6v22.5m2 -9.5v-6.5m2 0.5v5m2 2v-8.5m2 0v8m2 -1.5v-5m2 -1.5v8m2 3.5v-15m2 4v6m2 2.5v-8m2 0.5v16m2 -7v-10m2 0v7.5m2 -1v-8m2 1.5v7.5m2 -1.5v-5.5m2 -0.5v6m2 2.5v-9m2 -1v8.5m2 6.5v-22.5m2 9.5v6.5m2 1v-8m2 1v5m2 1.5v-6.5m2 -1.5v9.5m2 -2.5v-7.5m2 0.5v7m2 1v-8m2 1v7.5m2 -0.5v-7.5m2 -1v8.5m2 -1v-5.5m2 -2v9m2 1.5v-9m2 0v6m2 1v-11.5m2 3.5v6.5m2 2v-7.5m2 0v5.5m2 2.5v-9m2 0.5v6m2 1v-6.5m2 -1v8.5m2 -1v-6m2 -1.5v9.5m2 -2.5v-7m2 0.5v8.5m2 -1v-8.5m2 0.5v7.5m2 -0.5v-6.5m2 0v7m2 -0.5v-5.5m2 -2v8.5m2 -0.5v-7.5m2 1v6.5m2 -0.5v-6m2 -0.5v8m2 1v-8m2 -1.5v7.5m2 -0.5v-7m2 1.5v7m2 0.5v-8m2 0.5v6.5m2 2v-10.5m2 -1.5v9.5m2 -0.5v-7m2 0.5v6.5m2 1.5v-7m2 -1v6m2 0.5v-6m2 -0.5v10m2 -4v-8m2 1v10m2 -1.5v-8m2 -1v8.5m2 1v-7m2 0v5m2 0v-5m2 -1v7.5m2 9.5v-24.5m2 2v20m2 -8v-6.5m2 0v9m2 -2.5v-5.5m2 -2.5v9.5m2 -2v-8.5m2 2.5v8m2 -2v-5.5m2 -0.5v7m2 -1v-5m2 -7v23.5m2 -9.5v-7.5m2 -0.5v6m2 2v-7.5m2 0v7m2 -0.5v-7.5m2 -0.5v7.5m2 1v-7.5m2 0.5v6m2 1v-8m2 1.5v6.5m2 0v-6.5m2 -3.5v12m2 -2.5v-7m2 -0.5v8m2 3v-19.5m2 10v7.5m2 -0.5v-10m2 0v8m2 1.5v-10.5m2 3v7m2 -0.5v-10m2 4.5v6.5m2 -0.5v-6m2 -1.5v8m2 -0.5v-6m2 -0.5v7m2 -1.5v-6.5m2 1v10.5m2 -5v-5.5m2 -0.5v7.5m2 -1.5v-5m2 -1v7m2 -0.5v-7m2 -2v10.5m2 -1v-6m2 0v5.5m2 0v-7.5m2 2v7m2 0v-7m2 -1.5v6.5m2 2v-8m2 -0.5v6.5m2 0.5v-6m2 -1v9m2 -2.5v-7.5m2 1.5v7.5m2 -1.5v-8m2 2.5v6m2 9v-16.5m2 2v6m2 0.5v-7m2 -0.5v6m2 2.5v-8m2 -1v6.5m2 0v-5.5m2 0.5v5.5m2 -0.5v-8m2 2.5v6m2 1v-6.5m2 0v6m2 -1v-5m2 -1v9m2 -2v-6.5m2 0.5v6m2 -0.5v-6m2 -4v10m2 0v-8m2 -0.5v9.5m2 -1.5v-9m2 2v7.5m2 0v-6.5m2 -0.5v7.5m2 0v-6m2 0v5m2 2.5v-7.5m2 -2v10m2 -2v-7m2 0.5v6m2 -0.5v-5.5m2 0v10m2 -4v-5.5m2 -2v8m2 1v-8" stroke="#3a70f0" stroke-width="2" fill="none"/>
<rect x="378.0" y="485.4" width="3.0" height="28.3" fill="#c0c8e0" />
<text x="381.5" y="504.8" font-size="16.6" font-family='"Liberation Mono","DejaVu Sans Mono",monospace' fill="#868c94" textLength="37.0" lengthAdjust="spacingAndGlyphs" >CH12</text>
<circle cx="448.6" cy="499.5" r="7.3" fill="#e2a93c"/>
<path d="M460.5 495.5v7m2 -0.5v-5m2 0v6m2 0v-6.5m2 0.5v5m2 -0.5v-4.5m2 0v5m2 1.5v-6.5m2 -0.5v11m2 -4.5v-7m2 0v6.5m2 1v-6m2 -4v9m2 -0.5v-5.5m2 -2v8.5m2 -0.5v-5m2 -1.5v6m2 1v-8m2 2.5v6m2 -1v-7m2 1v5.5m2 0.5v-6m2 -2v8m2 0v-5.5m2 0.5v6m2 -1v-5.5m2 -5v10m2 2v-8m2 0.5v7m2 0v-6m2 -1v5.5m2 -0.5v-4.5m2 0v4.5m2 0.5v-6m2 0v6m2 0.5v-9.5m2 3.5v5.5m2 0v-6m2 1v5.5m2 -0.5v-4.5m2 -6.5v11m2 1v-5.5m2 -0.5v5.5m2 1.5v-7.5m2 0v7m2 0v-6.5m2 0.5v4.5m2 -0.5v-5m2 0v5.5m2 3.5v-9m2 1v4.5m2 4v-14m2 4v6m2 -0.5v-4.5m2 -2v7m2 0v-5m2 0v4.5m2 0v-4.5m2 0.5v5m2 1v-6m2 -0.5v6.5m2 0v-13m2 6v5m2 1v-7m2 2v4.5m2 0v-5.5m2 0.5v5m2 -0.5v-6m2 2v4.5m2 -0.5v-5m2 -0.5v7m2 -0.5v-5.5m2 0v5m2 1v-8.5m2 2.5v6.5m2 -1.5v-4.5m2 -2.5v8.5m2 -1v-6m2 0v5m2 1v-6.5m2 1.5v5m2 -0.5v-5m2 -1v7m2 3.5v-17m2 6.5v6.5m2 -1v-4m2 -1v5.5m2 4.5v-13.5m2 4v5m2 0v-6.5m2 2v4.5m2 0.5v-5.5m2 -5v11m2 -1.5v-5m2 1v4.5m2 -0.5v-5m2 0v5.5m2 0v-7m2 2v6.5m2 4v-10m2 -1v8m2 -3v-6m2 -2v9m2 -0.5v-4.5m2 -2v8.5m2 -2v-4.5m2 -1.5v7m2 -1v-5m2 -1v10.5m2 -4v-5.5m2 -6v15.5m2 -4v-5.5m2 0.5v4m2 1.5v-7.5m2 1v5.5m2 3v-10m2 0.5v7m2 0v-7m2 0v8m2 4.5v-14m2 3.5v5.5m2 2v-7.5m2 0v4m2 0v-4m2 -0.5v5.5m2 -1v-7m2 3v5m2 0v-5m2 0v4m2 0v-6m2 1v6m2 1v-6m2 0v5.5m2 1v-9m2 1v5.5m2 1.5v-6.5m2 1v4.5m2 5.5v-11.5m2 1.5v5m2 2v-7.5m2 0v5m2 0v-5m2 -0.5v5m2 1.5v-8m2 1.5v5m2 1v-5m2 -5v17m2 -6v-6m2 -1v5.5m2 -0.5v-4m2 0v4.5m2 -0.5v-4m2 -2v6.5m2 0.5v-6.5m2 1.5v5m2 0.5v-8m2 1v7.5m2 -0.5v-5.5m2 -0.5v5m2 1v-5.5m2 -1v5.5m2 0v-6m2 0v5.5m2 0v-5.5m2 1v5.5m2 -0.5v-5m2 -1.5v6m2 0.5v-4.5m2 -0.5v5m2 0v-4.5m2 -1.5v6.5m2 -1v-4.5m2 -0.5v9m2 -3.5v-5m2 0.5v4.5m2 1.5v-6m2 -1v6m2 0v-5m2 -1v11.5m2 -5.5v-6m2 0.5v6m2 -1.5v-4.5m2 -5v12m2 -2v-4.5m2 -1v5.5m2 1.5v-7m2 -1v7.5m2 6.5v-13m2 1v6m2 -1v-5m2 -7v17.5m2 -5v-6m2 0v5.5m2 -1v-5.5m2 1.5v5m2 -0.5v-5m2 0v6.5m2 0v-6.5m2 -0.5v6m2 0.5v-6m2 0.5v5m2 0v-5.5m2 -2v7.5m2 -0.5v-5.5m2 0.5v5.5m2 -0.5v-4.5m2 0v4.5m2 0.5v-5.5m2 -4.5v11.5m2 -1.5v-7.5m2 -2v15.5m2 -6v-6.5m2 1v6.5m2 -2v-5m2 -0.5v6.5m2 -1v-4m2 -2v6m2 1.5v-6.5m2 -1.5v7.5m2 2v-8.5m2 1.5v4.5m2 0v-7.5m2 3v4m2 2v-6.5m2 0v4.5m2 1v-7m2 0v6m2 6.5v-11m2 -4.5v16.5m2 -5v-9m2 1v6m2 -0.5v-5m2 1v6m2 -1.5v-5m2 -0.5v5.5m2 0.5v-5.5m2 0v6.5m2 -1v-5.5m2 -2v6.5m2 3.5v-7.5m2 -1.5v9m2 -3v-5m2 -3v8m2 0.5v-6m2 -0.5v6m2 1.5v-7.5m2 -4v11m2 -1v-4.5m2 -2.5v8.5m2 -2v-4m2 -0.5v7m2 -2v-5m2 0.5v4m2 0v-4m2 0v4m2 0v-4m2 -0.5v6.5m2 0v-7m2 -1.5v7m2 0.5v-6m2 0v5m2 1v-5m2 -1.5v7.5m2 -1v-5m2 -2v6m2 8v-15m2 2.5v5.5m2 0.5v-6.5m2 0.5v4.5m2 0v-4.5m2 0v5m2 1.5v-6.5m2 0.5v4m2 2v-6.5m2 -1v7m2 2v-9m2 0.5v5.5m2 1v-5.5m2 -4v8m2 6.5v-17m2 5v5.5m2 0v-4m2 -0.5v5m2 -0.5v-4.5m2 0v5m2 4.5v-13.5m2 2.5v6.5m2 1.5v-6m2 -0.5v4.5m2 0.5v-6m2 1.5v8m2 -4v-5m2 0v6m2 -0.5v-5m2 0.5v5m2 -0.5v-5m2 -0.5v6.5m2 -1.5v-4m2 0v4m2 2v-9m2 2.5v4.5m2 0.5v-6m2 1.5v5.5m2 0.5v-6m2 0v4.5m2 0v-7m2 2.5v7m2 -2v-7.5m2 2v6m2 0v-5.5m2 -1v5m2 2v-6.5m2 -3v8m2 0v-6.5m2 1v5.5m2 0v-7.5m2 2.5v5.5m2 0v-7m2 1.5v5.5m2 -0.5v-4.5m2 0v5.5m2 -1v-6.5m2 2v4.5m2 0.5v-5.5m2 -6.5v11m2 0.5v-6m2 0.5v5m2 0.5v-4.5m2 -0.5v6m2 -1v-5.5m2 0.5v5m2 1.5v-6m2 -1v5m2 2v-8m2 1.5v5m2 0.5v-5.5m2 -1.5v6.5m2 8v-15m2 2.5v6m2 -2v-5m2 -1.5v6.5m2 0v-4m2 0v4.5m2 0v-4.5m2 0v6.5m2 1v-7.5m2 -3v7.5m2 0.5v-5.5m2 -1v6.5m2 0v-6m2 1v4.5m2 1v-8.5m2 1v6m2 2v-7.5m2 1v5m2 1.5v-6m2 -0.5v4.5m2 0.5v-5m2 0v5.5m2 -0.5v-5m2 0v5.5m2 -1v-5m2 -0.5v6m2 -0.5v-5m2 1v4.5m2 -0.5v-5m2 1v4m2 1v-9m2 3.5v9m2 -4v-5.5m2 0.5v5m2 2v-7.5m2 -0.5v6m2 2v-7.5m2 0v6m2 0v-7.5m2 2v5.5m2 -0.5v-4.5m2 -1v6.5m2 -1v-6m2 -3v16.5m2 -7.5v-6.5m2 1.5v5m2 0.5v-6.5m2 -6.5v15m2 -3v-4m2 -0.5v4.5m2 2.5v-8.5m2 1v7m2 0.5v-7.5m2 -2.5v8m2 1.5v-7.5m2 0.5v5.5m2 0v-6m2 0v6m2 2v-7.5m2 -1.5v9.5m2 -2.5v-4.5m2 0v4.5m2 6.5v-17m2 2.5v8m2 0.5v-5.5m2 0.5v4.5m2 1v-8.5m2 2.5v5m2 0v-5m2 0v4.5m2 0.5v-5.5m2 0.5v5.5m2 -0.5v-7m2 2.5v4.5m2 0v-5m2 -0.5v5m2 0.5v-6m2 0.5v7.5m2 -1v-5.5m2 -0.5v7m2 -1v-7m2 -0.5v6m2 1v-7.5m2 1v9.5m2 -3.5v-6.5m2 1.5v4.5m2 1.5v-7m2 0v5.5m2 1.5v-6m2 -1.5v7m2 3v-10.5m2 1.5v5m2 0.5v-4.5m2 0v4.5m2 1v-6m2 -0.5v6.5m2 -1.5v-4.5m2 -0.5v5.5m2 0.5v-5m2 0v5.5m2 -1.5v-5m2 -0.5v6m2 0.5v-6.5m2 0.5v5m2 0v-6m2 1v6.5m2 -1.5v-5m2 0.5v5.5m2 0v-7.5m2 0.5v6.5m2 0v-4.5m2 0v4m2 1.5v-6m2 0.5v5m2 -0.5v-6.5m2 1v6.5m2 -0.5v-6m2 0v6m2 -1v-4.5m2 0.5v4.5m2 0v-5m2 0.5v4m2 2v-6.5m2 -0.5v5.5m2 9.5v-20m2 6v12.5m2 -7.5v-6.5m2 -5v15.5m2 -3.5v-6m2 -3.5v15.5m2 -5.5v-7.5m2 1.5v4.5m2 0.5v-6.5m2 -0.5v9m2 -1v-7m2 1v4.5m2 0.5v-8m2 1.5v6.5m2 0v-5m2 -2v9.5m2 -2.5v-5.5m2 -0.5v5.5m2 2v-7m2 -1v8m2 -2.5v-4.5m2 -5.5v11m2 0v-6m2 1v4.5m2 0.5v-5.5m2 0v4.5m2 1v-6m2 0.5v4.5m2 0.5v-4.5m2 -1.5v5.5m2 2v-6.5m2 0v5.5m2 6v-11.5m2 0v7m2 -2v-4.5m2 -0.5v4.5m2 0v-6m2 1v6m2 -1v-5.5m2 1v5m2 1.5v-7m2 -1.5v6.5m2 0.5v-4.5m2 0v5.5m2 -1v-5m2 -1.5v10.5m2 -4.5v-5m2 0.5v5m2 1v-6m2 -1v5.5m2 0v-7.5m2 1.5v6m2 0.5v-6m2 0.5v5m2 3v-8m2 0v6.5m2 -1v-7.5m2 2v7m2 -0.5v-6.5m2 0.5v4.5m2 1.5v-8m2 1.5v5.5m2 0.5v-6m2 1v5m2 -1v-4.5m2 0v5m2 1v-6m2 -1.5v7.5m2 -1v-4.5m2 -0.5v5m2 -0.5v-4m2 0v5m2 -1v-5m2 0.5v4.5m2 3v-8.5m2 -0.5v7m2 1.5v-7m2 -1.5v9m2 -2.5v-6m2 1v5.5m2 1v-6m2 -1v7m2 -0.5v-6m2 0.5v9.5m2 -4.5v-5.5m2 -5v15.5m2 -6v-4.5m2 -0.5v5.5m2 -0.5v-4.5m2 -0.5v5.5m2 -0.5v-5m2 -2v7.5m2 3v-8m2 0v5.5m2 -1v-5.5m2 1v6m2 -1v-4.5m2 -1v5.5m2 0v-6m2 1v6m2 -1.5v-7m2 3v4m2 0v-5.5m2 0.5v6m2 2v-9.5m2 2.5v5m2 -1v-5m2 0.5v5.5m2 -0.5v-5m2 0.5v5m2 -1v-4m2 -1v6m2 -1v-4.5m2 -1v7.5m2 -0.5v-7m2 1.5v4m2 0.5v-6m2 1v5m2 -0.5v-5.5m2 1v5.5m2 -1v-5m2 -0.5v6m2 2v-6.5m2 -1v5m2 0.5v-4.5m2 -0.5v4.5m2 0v-4.5m2 -0.5v6.5m2 -1.5v-7m2 1.5v5.5m2 2.5v-6.5m2 0v6m2 5.5v-15.5m2 2v6.5m2 0v-5m2 -5v16m2 -6.5v-5.5m2 1v5.5m2 -1v-4m2 0v4.5m2 1v-8.5m2 1.5v6m2 -0.5v-6.5m2 2.5v7m2 -2.5v-4.5m2 -1v5.5m2 1v-6.5m2 0v7m2 -2v-4.5m2 -2v8.5m2 -1v-5m2 0v5m2 -0.5v-5m2 0v4.5m2 1.5v-6.5m2 0.5v11m2 -6.5v-5m2 1v5m2 -0.5v-5m2 0.5v5m2 -0.5v-5.5m2 -1.5v6.5m2 0.5v-5.5m2 -1.5v7m2 0.5v-5m2 -0.5v5.5m2 -1v-4m2 -1v12m2 -6v-5m2 0v4.5m2 1v-6m2 -0.5v7.5m2 -2.5v-5m2 0.5v5.5m2 0v-5.5m2 0.5v5m2 -0.5v-5m2 -4.5v13m2 -3.5v-4.5m2 -1.5v7m2 0.5v-6.5m2 0v6.5m2 -1.5v-7m2 1.5v6m2 -0.5v-4.5m2 0v4m2 0v-5m2 -0.5v8m2 -2v-5.5m2 1v4m2 1v-5.5m2 -1.5v7.5m2 -0.5v-5.5m2 0v6.5m2 5.5v-16m2 3.5v5.5m2 1v-7m2 1.5v4m2 2v-7m2 -1v9m2 -3v-4.5m2 -0.5v5.5m2 0v-6m2 0v7m2 0v-6.5m2 0.5v7m2 -2.5v-4m2 0v4.5m2 -0.5v-5m2 0v6m2 -1v-5.5m2 0v6.5m2 -0.5v-5m2 0.5v7m2 5v-18.5m2 6v4.5m2 0.5v-4.5m2 0v5.5m2 -1.5v-4.5m2 0v5.5m2 0v-6.5m2 1.5v6m2 -1.5v-5.5m2 0v5m2 1v-6.5m2 1v5m2 5.5v-14.5m2 2.5v7m2 -0.5v-4.5m2 0v4m2 1.5v-5.5m2 -0.5v5m2 -0.5v-4.5m2 -1.5v7.5m2 -0.5v-5m2 0v4m2 0v-4.5m2 -1.5v6.5m2 0.5v-7.5m2 1v6.5m2 2v-7m2 -2.5v9m2 -1.5v-5m2 -1.5v6.5m2 2.5v-8.5m2 -0.5v8m2 0v-7m2 -0.5v5.5m2 0v-4.5m2 -1v6m2 -1v-5m2 0.5v6.5m2 -1.5v-5.5m2 -1.5v15m2 -4v-8.5m2 -0.5v5.5m2 2v-7m2 -3v7.5m2 0v-4.5m2 -6v18m2 -8v-4.5m2 -0.5v6m2 -1v-5m2 0.5v4.5m2 1.5v-6.5m2 0v6.5m2 0v-5.5m2 -0.5v6.5m2 -1.5v-5m2 -0.5v8.5m2 -3.5v-4m2 -1.5v6m2 0v-7.5m2 2.5v6m2 -0.5v-6.5m2 1.5v4m2 4.5v-13.5m2 3.5v5.5m2 0.5v-4.5m2 -1v7.5m2 -1.5v-5.5m2 0.5v4m2 1v-7.5m2 0.5v6m2 0.5v-4.5m2 -0.5v5.5m2 0v-6m2 0.5v5.5m2 -1v-4.5m2 0v4.5m2 0.5v-5.5m2 1v5.5m2 -1v-5m2 -0.5v5.5m2 0v-5m2 -1.5v6.5m2 1.5v-7m2 0.5v6.5m2 -2v-5m2 0.5v5m2 0.5v-5m2 -4v14m2 -5.5v-4.5m2 -1v5m2 1.5v-6m2 -0.5v6.5m2 -1.5v-5m2 1v4m2 0.5v-4.5m2 -1v5.5m2 1v-7m2 -0.5v9m2 -1v-6m2 -0.5v4.5m2 3v-9m2 -1v7.5m2 0.5v-6m2 0.5v6m2 -1v-5m2 0.5v4.5m2 0.5v-5.5m2 0.5v4m2 1.5v-6.5m2 -0.5v5.5m2 0v-4.5m2 0v4.5m2 0.5v-5m2 -1v7m2 0.5v-7m2 0v5.5m2 1v-5.5m2 -1v5m2 1.5v-5.5m2 0v4.5m2 6v-15.5m2 4.5v5m2 1.5v-9m2 0.5v8m2 -1.5v-4m2 -0.5v4.5m2 1v-5m2 -1.5v6m2 3.5v-9m2 -0.5v7m2 -1v-4.5m2 0v4.5m2 -0.5v-5m2 0v6m2 -1v-4.5m2 -0.5v5m2 0v-5.5m2 1v6.5m2 1.5v-9m2 0.5v6m2 -1v-4m2 -1.5v7m2 -1.5v-4m2 0v4m2 0.5v-5m2 0v4.5m2 1.5v-6.5m2 0v5.5m2 0.5v-5.5m2 0.5v5m2 0v-5m2 -0.5v5.5m2 -0.5v-4.5m2 0v4m2 2v-7.5m2 0.5v7m2 -0.5v-5.5m2 -0.5v5m2 -0.5v-5m2 -2.5v7.5m2 0.5v-5m2 -1.5v11.5m2 -5v-6.5m2 2v4.5m2 -0.5v-6m2 2v4.5m2 0v-5.5m2 -4v17.5m2 -8v-5.5m2 1v5m2 0v-5.5m2 0v5m2 0.5v-6m2 1v5m2 -0.5v-5.5m2 0.5v5.5m2 1.5v-8m2 1v4.5m2 1v-6.5m2 -0.5v6m2 0.5v-4.5m2 -3v13.5m2 -5.5v-10m2 3v7.5m2 -1.5v-4m2 0v5m2 -0.5v-5.5m2 1v5m2 -0.5v-6m2 1.5v5.5m2 -0.5v-5.5m2 0.5v4m2 1.5v-7.5m2 0.5v6m2 1v-8.5m2 1.5v5.5m2 0.5v-5.5m2 -0.5v6m2 0.5v-6.5m2 0.5v5m2 0.5v-6m2 1.5v5m2 0v-6m2 0.5v5.5m2 -1v-4.5m2 0v5m2 1v-7.5m2 0v6m2 0.5v-4.5m2 0v5m2 0v-6m2 1v4.5m2 0.5v-7.5m2 2v5m2 1v-7.5m2 0v6.5m2 -0.5v-4.5m2 -0.5v6.5m2 0.5v-6.5m2 0v4.5m2 0.5v-4.5m2 0v5m2 -1v-4.5m2 0v4.5m2 0.5v-6m2 0v5.5m2 0v-4.5m2 -2v7.5m2 0v-5.5m2 -1v6.5m2 0.5v-6m2 0.5v4.5m2 0v-4.5m2 -1.5v5.5m2 0v-4m2 -0.5v4.5m2 1v-5.5m2 -1.5v6.5m2 0v-4.5m2 0v4.5m2 -0.5v-4.5m2 0v5m2 0v-5m2 0v5.5m2 7v-12m2 -1v7m2 -1v-5m2 -1v5m2 0v-4m2 -1.5v6.5m2 -1v-6" stroke="#c0c8e0" stroke-width="2" fill="none"/>
<rect x="378.0" y="513.6" width="3.0" height="28.3" fill="#90e0a0" />
<text x="381.5" y="533.1" font-size="16.6" font-family='"Liberation Mono","DejaVu Sans Mono",monospace' fill="#868c94" textLength="37.0" lengthAdjust="spacingAndGlyphs" >CH13</text>
<circle cx="448.6" cy="527.8" r="7.3" fill="#e2a93c"/>
<path d="M460.5 524.3v7m2 8v-14m2 -2.5v7.5m2 0v-5m2 0v6.5m2 -1v-8m2 1v7m2 0.5v-8.5m2 1v12.5m2 -3.5v-9m2 0.5v7.5m2 -1.5v-5m2 -1v6.5m2 0v-5.5m2 -1v7.5m2 -1v-5.5m2 -2v8.5m2 1v-8.5m2 0v7m2 1.5v-8.5m2 0.5v6m2 -0.5v-8m2 2.5v7.5m2 -0.5v-7m2 0.5v6.5m2 -1.5v-7.5m2 -1.5v14m2 -4.5v-6.5m2 0v7m2 -0.5v-10m2 3v8.5m2 -1v-7.5m2 -1.5v11.5m2 -1.5v-7m2 -1.5v7.5m2 0v-8m2 0v9m2 -1v-6.5m2 0.5v5m2 2.5v-7.5m2 -1v6.5m2 2v-8.5m2 -1.5v9m2 -0.5v-6m2 0v5m2 1v-6m2 -2.5v9m2 -1v-6.5m2 -1v7.5m2 2v-7.5m2 0.5v4.5m2 1.5v-9.5m2 3v6m2 0v-6m2 -1.5v7m2 0v-6.5m2 0v7m2 -1v-5.5m2 -1v10m2 -1.5v-9m2 1.5v5.5m2 0.5v-5.5m2 -1v8m2 -2v-7m2 -1.5v10m2 -1v-7m2 0v9m2 -2v-7.5m2 0.5v7m2 0v-5.5m2 -0.5v5.5m2 0v-7m2 1.5v7.5m2 -0.5v-9.5m2 1.5v8m2 -1.5v-5m2 -2.5v9.5m2 -1.5v-7m2 0.5v11.5m2 -4v-6.5m2 0v6m2 -1v-6.5m2 0.5v6.5m2 0v-5.5m2 -0.5v6m2 0.5v-8.5m2 2.5v5.5m2 1.5v-8.5m2 -1.5v12m2 -2v-7.5m2 0v6m2 0v-5.5m2 -1v6.5m2 -0.5v-6.5m2 1.5v5m2 2v-8m2 1v6m2 1.5v-8m2 0v7m2 0.5v-8m2 1v8m2 -2v-6m2 -1.5v6.5m2 1.5v-6.5m2 0v5.5m2 0v-6.5m2 0v7.5m2 -1v-6.5m2 0.5v7m2 -0.5v-8m2 -1.5v15.5m2 -5v-7m2 -1v6m2 0.5v-6.5m2 -4v19.5m2 -8v-9.5m2 3v7m2 -0.5v-8m2 0.5v7m2 -0.5v-11.5m2 5.5v6m2 1.5v-7m2 -0.5v6m2 1v-6.5m2 0v7.5m2 -2v-7m2 1.5v6m2 1.5v-8m2 -0.5v6.5m2 -0.5v-5.5m2 0v6.5m2 -0.5v-7m2 -0.5v9m2 0.5v-10m2 1v6.5m2 0.5v-6m2 0.5v6.5m2 -1v-8m2 -2v9.5m2 0.5v-5.5m2 -0.5v6.5m2 0v-9.5m2 2.5v6m2 1v-6m2 -1v7.5m2 1.5v-8.5m2 -2v7.5m2 2v-7m2 -2.5v9.5m2 -2v-9m2 2.5v7m2 0.5v-6m2 0v8m2 -1v-8.5m2 1v6m2 0v-6.5m2 1v5.5m2 1.5v-7m2 0v5.5m2 0v-6m2 -1v6.5m2 1v-6.5m2 0v7.5m2 -1v-7m2 0v6m2 0.5v-8m2 0v7.5m2 0v-6m2 0.5v6.5m2 2v-9m2 -3.5v18.5m2 -8.5v-7.5m2 1.5v7.5m2 -0.5v-8m2 -2v9.5m2 0v-6.5m2 -0.5v6.5m2 2v-7.5m2 -1v7m2 -1v-7.5m2 2.5v5m2 10.5v-17m2 -1v18m2 -11v-6m2 -0.5v7m2 4v-9.5m2 0v6m2 -0.5v-6.5m2 1.5v6m2 -0.5v-8m2 0v16.5m2 -8v-7.5m2 0.5v8m2 -1.5v-6m2 -0.5v6.5m2 0v-7.5m2 2v6m2 -1v-6.5m2 -1v9m2 0.5v-7.5m2 0.5v5m2 0.5v-9.5m2 2v7m2 0.5v-7.5m2 1.5v5.5m2 3v-9m2 0.5v8m2 -1v-8m2 -1v8.5m2 3v-10.5m2 -0.5v7.5m2 1v-9.5m2 0v8.5m2 1.5v-8.5m2 0v8m2 -1.5v-6m2 -1v7.5m2 1.5v-7m2 -1.5v7m2 2v-8.5m2 0.5v6m2 0.5v-6.5m2 0v8.5m2 0.5v-10.5m2 1v6m2 0.5v-6.5m2 0v9.5m2 -3.5v-8m2 2v6.5m2 -0.5v-5.5m2 -1.5v8m2 -1v-9.5m2 2.5v7.5m2 0v-5.5m2 -2v9m2 -2v-5.5m2 0.5v8m2 1v-9.5m2 -0.5v6m2 1v-6m2 -3.5v8.5m2 1.5v-8.5m2 0v7.5m2 -0.5v-5.5m2 0.5v5m2 0v-5.5m2 0v5.5m2 0.5v-5.5m2 -1v6m2 3v-9m2 -2v9m2 1.5v-8m2 -2v10m2 -1.5v-9m2 1.5v6.5m2 1.5v-7m2 -0.5v6.5m2 1.5v-8.5m2 1.5v8.5m2 -2.5v-6m2 -1v6m2 0v-6.5m2 2v6m2 -1.5v-6m2 -1v7.5m2 1v-7.5m2 0v8.5m2 -1.5v-8m2 1.5v7.5m2 -0.5v-7.5m2 0.5v6.5m2 0.5v-7m2 -2v9.5m2 -2v-6m2 -1.5v7.5m2 1v-6.5m2 0.5v6.5m2 -0.5v-6m2 0v6m2 -0.5v-6.5m2 0v7.5m2 -1v-6m2 -0.5v6.5m2 0.5v-6m2 -0.5v7m2 -1.5v-5.5m2 0.5v5.5m2 0v-6m2 0.5v5m2 1v-8.5m2 1.5v6m2 9.5v-15m2 0v7m2 -0.5v-6m2 0v7.5m2 -2.5v-7m2 2v5.5m2 1v-7.5m2 -0.5v7m2 0v-5.5m2 -1.5v8.5m2 -2v-5m2 -0.5v5.5m2 3v-10.5m2 2v6m2 0.5v-7.5m2 0.5v7.5m2 -0.5v-7.5m2 0.5v8.5m2 -2v-7.5m2 1.5v5.5m2 0.5v-6m2 0v6m2 -0.5v-6.5m2 0v13.5m2 -7v-6m2 0v6m2 0.5v-7m2 1v5.5m2 0v-5m2 -2v7m2 0v-7m2 -4v11.5m2 1.5v-8.5m2 1.5v6.5m2 1v-8m2 0v6m2 -0.5v-5m2 -2.5v8m2 0v-6m2 -0.5v7m2 1v-7.5m2 -0.5v8.5m2 -2.5v-5m2 -1.5v7.5m2 -0.5v-7.5m2 1v6m2 2v-9m2 2v5.5m2 0v-5.5m2 -2v9m2 0v-8.5m2 0.5v6m2 2v-8.5m2 0.5v6m2 1v-7m2 1.5v5.5m2 0v-7m2 -1.5v13m2 -2.5v-8m2 -4.5v11m2 0.5v-8m2 1v5.5m2 0v-7.5m2 1v6m2 0v-5.5m2 -1.5v7.5m2 3v-11m2 0v9m2 -0.5v-6.5m2 0v12m2 -4v-8m2 0v5.5m2 0.5v-6.5m2 -0.5v8.5m2 -1v-7m2 0v6m2 1v-7m2 -3v14.5m2 -2.5v-9m2 1v5m2 0v-5m2 0.5v5m2 0.5v-7m2 0v7.5m2 0v-7m2 -1.5v8.5m2 2.5v-10.5m2 0v8.5m2 -1.5v-6.5m2 -5v16m2 -3.5v-7m2 -4v10m2 -0.5v-7m2 0.5v13m2 -5v-6.5m2 -1v7m2 0v-6.5m2 -1.5v8.5m2 -0.5v-7m2 1v6.5m2 0v-8m2 -1v12m2 -2.5v-10m2 1v9.5m2 -2v-6.5m2 1v6.5m2 0v-7m2 -1.5v7.5m2 1v-8m2 0v7.5m2 1.5v-8.5m2 -3v11m2 -2v-5m2 0v7.5m2 -1.5v-6m2 -1v7.5m2 -1v-6.5m2 1v5.5m2 -0.5v-6m2 0.5v6m2 1.5v-10m2 0v8.5m2 -0.5v-6.5m2 0.5v8m2 -2v-5m2 0v5.5m2 0.5v-7.5m2 0v8m2 -1.5v-7.5m2 -0.5v8m2 0v-6.5m2 0.5v8m2 -1v-8m2 0v7m2 0v-6m2 -0.5v8m2 0v-11m2 4.5v5.5m2 0v-8.5m2 3v5m2 0.5v-7m2 1.5v5m2 0.5v-6.5m2 -1v7.5m2 2v-8m2 -0.5v6m2 1v-8m2 2v8m2 -3v-5m2 -0.5v6.5m2 -0.5v-5.5m2 -1.5v7m2 -0.5v-7m2 -1v8m2 0.5v-5.5m2 -1.5v7m2 2.5v-11.5m2 3v6.5m2 1v-9.5m2 2v7.5m2 0.5v-8m2 0v8.5m2 0v-9m2 -3.5v9.5m2 4.5v-11.5m2 0.5v7m2 2v-11.5m2 3.5v8.5m2 1v-9m2 -2v7m2 1v-6m2 -1v7m2 0v-8.5m2 0.5v9m2 -1v-7.5m2 -0.5v8m2 -1v-6.5m2 -0.5v7.5m2 1.5v-7.5m2 -6v15m2 -2.5v-6m2 0v5m2 0.5v-5.5m2 0v5m2 0.5v-7m2 1.5v6m2 0v-6m2 -0.5v6m2 0.5v-7m2 -0.5v7m2 -0.5v-6m2 0.5v7m2 1v-8m2 0.5v6m2 0v-6.5m2 0.5v5.5m2 1v-6.5m2 -2v7m2 0.5v-9m2 1v9m2 -1v-7m2 -0.5v8.5m2 0v-8.5m2 0v7m2 0.5v-7.5m2 1v7m2 0v-7.5m2 1v7m2 0v-6.5m2 -1v7.5m2 0v-8m2 0.5v5.5m2 1v-8m2 2v5.5m2 2v-8m2 -1.5v11m2 -3.5v-10m2 4.5v6m2 9.5v-18m2 0v8.5m2 0.5v-7.5m2 0v9m2 -1v-10m2 -0.5v11m2 1v-9m2 -1v9m2 1v-8.5m2 -0.5v6m2 2.5v-8m2 -1.5v8.5m2 -0.5v-7.5m2 -2v10m2 -1v-8m2 1.5v8m2 -1.5v-5.5m2 -1v7m2 2v-8.5m2 -1.5v7m2 4v-9.5m2 0.5v8.5m2 -1.5v-8.5m2 1v6m2 0.5v-9m2 2v9.5m2 4.5v-14.5m2 1.5v6m2 0.5v-7m2 -1v15.5m2 -8.5v-7m2 1.5v6m2 0v-8.5m2 2v6.5m2 -0.5v-8.5m2 0v8.5m2 -0.5v-5m2 0v6.5m2 1v-9.5m2 -2.5v11m2 0v-7.5m2 -1.5v10m2 2v-9.5m2 -1v8.5m2 -2v-6m2 0.5v8m2 -2.5v-5.5m2 0v8.5m2 -2v-8m2 -0.5v8.5m2 -0.5v-7.5m2 0.5v9.5m2 -3.5v-7m2 2v6.5m2 -0.5v-6m2 -2.5v9.5m2 -2v-7.5m2 2v7m2 1v-8.5m2 -1.5v18.5m2 -10v-7.5m2 1.5v6.5m2 -0.5v-6m2 -2.5v8m2 -0.5v-5m2 -1.5v9.5m2 -2.5v-5.5m2 0v5.5m2 0.5v-7.5m2 1.5v5m2 0.5v-7m2 -1v10m2 -1.5v-7.5m2 -1v8m2 0v-7.5m2 0.5v7m2 1v-7m2 -0.5v6.5m2 -0.5v-6.5m2 -0.5v8m2 -0.5v-6m2 0.5v5m2 0.5v-5.5m2 0v7m2 5v-15m2 2v7.5m2 -1.5v-5.5m2 -3.5v12m2 -2v-7m2 -1v8m2 -0.5v-6m2 0.5v7m2 -0.5v-8m2 0v9.5m2 -3v-6.5m2 0v8m2 0v-6.5m2 -1v7.5m2 -1v-6m2 0.5v8m2 -1v-7m2 -1.5v7.5m2 0.5v-8m2 -1v9.5m2 0.5v-7.5m2 -1.5v7.5m2 1.5v-8.5m2 1v6.5m2 -0.5v-6m2 -1v6.5m2 0v-8m2 2.5v6m2 0v-7m2 -0.5v9m2 3.5v-16m2 5v6m2 2v-8m2 -0.5v6m2 1.5v-8.5m2 1v7m2 0v-7m2 0.5v5m2 0.5v-5.5m2 0v7m2 -1.5v-7m2 -0.5v8.5m2 -1.5v-7m2 1v8m2 -2v-6m2 1v7m2 -0.5v-8m2 1v7m2 -1v-6m2 -2v13m2 -4.5v-6m2 -1.5v7.5m2 -1v-5.5m2 0.5v6.5m2 -0.5v-8.5m2 2.5v5.5m2 -0.5v-5m2 -1v6.5m2 -0.5v-6m2 1v5.5m2 0v-9m2 1v7.5m2 2v-7m2 -1v6m2 2v-8m2 0.5v7.5m2 -0.5v-7m2 0.5v5.5m2 0v-5.5m2 -2v11m2 -4v-6m2 0v7.5m2 -1.5v-5m2 -0.5v5.5m2 0.5v-5.5m2 0v6.5m2 -0.5v-6.5m2 -0.5v6.5m2 -0.5v-7m2 2v5m2 0v-6m2 1v5.5m2 0.5v-6m2 -1v7m2 -1.5v-5.5m2 -1.5v8m2 0v-6m2 0v6m2 0v-6.5m2 1v7m2 -1.5v-5.5m2 -0.5v6.5m2 2.5v-9.5m2 -0.5v7.5m2 0v-11.5m2 5v5.5m2 0.5v-7m2 0v9m2 -2v-7.5m2 -6v15m2 -1.5v-7.5m2 2v6m2 -1v-5m2 0v5.5m2 0v-6m2 -1.5v7m2 2v-7.5m2 -2.5v8m2 3.5v-9m2 -3v10.5m2 -1v-7m2 0.5v6m2 -0.5v-7m2 0.5v8.5m2 -2v-8m2 1v8m2 1v-8m2 1v6.5m2 -0.5v-7m2 1v7m2 -0.5v-8.5m2 1v8.5m2 -2.5v-5m2 -1v7m2 0v-11m2 5v5.5m2 10v-15.5m2 -0.5v5.5m2 0.5v-5m2 -1.5v7m2 -0.5v-6m2 0.5v5.5m2 1v-7.5m2 -1v8m2 2v-8m2 -1.5v6.5m2 0.5v-5.5m2 -3v8.5m2 -0.5v-5m2 0v5.5m2 0.5v-8m2 1.5v6.5m2 -0.5v-5.5m2 -1v6.5m2 6.5v-16m2 3.5v6m2 -0.5v-5.5m2 -0.5v7m2 -0.5v-8m2 2v5.5m2 0.5v-6m2 0.5v5m2 1.5v-6.5m2 0v5.5m2 -0.5v-5m2 0v5.5m2 1v-8.5m2 1.5v5.5m2 0.5v-6m2 0.5v5m2 0.5v-8m2 2.5v7m2 1v-11.5m2 3v5.5m2 4.5v-10m2 0.5v5.5m2 -0.5v-6.5m2 1v6m2 -0.5v-6m2 0.5v8m2 0v-8.5m2 1v5.5m2 0v-7m2 0v7.5m2 -0.5v-6m2 0v5.5m2 0v-8.5m2 3.5v6.5m2 7v-18m2 4.5v5m2 1.5v-8m2 0v6.5m2 0.5v-6m2 -1v6.5m2 1v-6m2 -1v6m2 1v-6.5m2 0.5v6m2 -0.5v-5.5m2 -1v8m2 -1v-5.5m2 -1.5v7.5m2 -0.5v-6.5m2 0.5v5.5m2 -0.5v-5m2 -1.5v7.5m2 -1v-5m2 -0.5v7m2 -1v-6m2 0v6.5m2 -0.5v-8m2 1.5v6.5m2 7.5v-13m2 0v5.5m2 0v-6.5m2 -0.5v6.5m2 0v-6.5m2 1.5v6m2 5v-15.5m2 3v7m2 0v-5.5m2 -0.5v9m2 -3.5v-6.5m2 1.5v6m2 0.5v-7.5m2 -1v8.5m2 -1v-8.5m2 2v7m2 0.5v-7m2 -1.5v7m2 0.5v-6m2 -1v7m2 5.5v-13m2 0.5v9m2 -0.5v-8.5m2 -2.5v9.5m2 -0.5v-6.5m2 0v6.5m2 0.5v-7m2 1v5m2 1v-5.5m2 -0.5v5.5m2 0v-6.5m2 1.5v6m2 -1v-6m2 -0.5v7m2 -0.5v-8.5m2 3v6m2 1v-6.5m2 -4v9m2 0v-6.5m2 1v5.5m2 0v-6.5m2 0v6.5m2 1.5v-7.5m2 1v6.5m2 0.5v-7m2 -2.5v9m2 -1v-6.5m2 -2v13m2 -4v-6.5m2 0v5.5m2 0v-7m2 1.5v5.5m2 0.5v-6.5m2 -1v8m2 -1v-9m2 2v7m2 1.5v-8m2 1v8.5m2 -2.5v-9m2 3v6m2 1v-7.5m2 -2.5v9.5m2 8.5v-15.5m2 -0.5v7m2 -0.5v-7m2 0.5v14.5m2 -6.5v-6.5m2 -3v12m2 -3v-6m2 0v5m2 -0.5v-5m2 -2v9m2 0.5v-9m2 1v9.5m2 -1.5v-8m2 1v6m2 -0.5v-7m2 -0.5v10m2 -3v-5.5m2 -1v7m2 -0.5v-6.5m2 1.5v6.5m2 0v-11m2 3.5v6m2 1v-5.5m2 -4.5v10m2 0v-8m2 1.5v6m2 1v-7.5m2 0.5v7.5m2 -2.5v-7.5m2 2v6.5m2 0.5v-7m2 0v10.5m2 -3.5v-6.5m2 -0.5v8m2 -2v-8.5m2 2v7m2 1.5v-7m2 -0.5v5.5m2 3.5v-11m2 2v7.5m2 -1.5v-5.5m2 -1v6.5m2 -0.5v-4.5m2 -1v7m2 1.5v-9.5m2 1.5v6.5m2 9.5v-17m2 0.5v6m2 1.5v-8m2 0.5v5.5m2 1v-7m2 1v7m2 -2v-7m2 0.5v7m2 2v-10.5m2 3v5m2 0.5v-7m2 0.5v6.5m2 -0.5v-5m2 -4v9.5m2 3.5v-9.5m2 -1v8m2 0v-6.5m2 -0.5v9m2 -2.5v-8m2 0.5v6.5m2 0.5v-6m2 0v6m2 2.5v-11" stroke="#90e0a0" stroke-width="2" fill="none"/>
<rect x="378.0" y="541.9" width="3.0" height="28.3" fill="#a0a0a0" />
<text x="381.5" y="561.4" font-size="16.6" font-family='"Liberation Mono","DejaVu Sans Mono",monospace' fill="#868c94" textLength="37.0" lengthAdjust="spacingAndGlyphs" >CH14</text>
<circle cx="448.6" cy="556.1" r="7.3" fill="#e2a93c"/>
<path d="M460.5 554.1v4.5m2 0v-5.5m2 0.5v7m2 -2.5v-4m2 -0.5v5.5m2 -0.5v-4.5m2 -2v6.5m2 -0.5v-4m2 -1v5m2 1.5v-7.5m2 1v5.5m2 0v-4.5m2 -2v12m2 -5v-5.5m2 -3v7.5m2 0v-6m2 1v7.5m2 -2.5v-5.5m2 -1v6.5m2 0v-7m2 2v8m2 -3v-4m2 -1.5v5.5m2 2v-8m2 -1v10m2 -2.5v-5.5m2 1v6m2 -1.5v-5m2 -1v6.5m2 -0.5v-10m2 5v6.5m2 2v-10.5m2 2.5v4.5m2 0.5v-5m2 0v4m2 0v-4m2 0v5.5m2 0.5v-7.5m2 0v6m2 0.5v-8m2 -1.5v8.5m2 2v-6.5m2 -1v5.5m2 0v-4.5m2 -0.5v5.5m2 0v-5m2 -1.5v6m2 0v-5m2 -0.5v6.5m2 0.5v-7.5m2 1.5v4.5m2 2.5v-7m2 -1v7.5m2 -1.5v-4.5m2 -1.5v6m2 -0.5v-4.5m2 -2v6.5m2 1v-6m2 1v4m2 0.5v-4.5m2 -2v6m2 0v-10m2 5v6m2 1v-6.5m2 -6.5v16m2 -5v-5m2 1v4m2 0.5v-5.5m2 0.5v7.5m2 -2.5v-5.5m2 0.5v5.5m2 -0.5v-4.5m2 -2.5v7m2 -0.5v-4m2 0v5m2 -1v-8m2 4v4.5m2 -0.5v-5m2 -5v15m2 -4.5v-6m2 1v4.5m2 0v-8m2 3.5v6.5m2 -1v-7m2 -1.5v8.5m2 -1v-6m2 -0.5v7.5m2 5v-13m2 3v5.5m2 -1.5v-5.5m2 1.5v4.5m2 0v-6m2 0v5.5m2 0.5v-5m2 -3.5v11m2 -2.5v-4.5m2 -2.5v7.5m2 -1v-5.5m2 0.5v6m2 -0.5v-5m2 -0.5v5m2 1.5v-6m2 -1v5.5m2 1v-6m2 1v5m2 -0.5v-5m2 -0.5v5.5m2 0v-4.5m2 -1v5.5m2 0.5v-7m2 2v6m2 -1v-5.5m2 -0.5v6.5m2 -0.5v-6m2 -1v17.5m2 -8.5v-7.5m2 -2v8m2 0v-7.5m2 2v5.5m2 5v-16m2 2.5v8m2 1v-7m2 -0.5v8m2 -0.5v-6m2 -1v5.5m2 0v-6m2 1.5v4m2 0v-5.5m2 0v6.5m2 -0.5v-7m2 2v5.5m2 1.5v-14.5m2 8v5m2 1.5v-8m2 -1.5v7.5m2 0v-4.5m2 0v5m2 -0.5v-6m2 1.5v11m2 -6v-6.5m2 0v5.5m2 0v-6.5m2 2.5v4.5m2 0.5v-6m2 1v4.5m2 -0.5v-4.5m2 -0.5v5.5m2 0.5v-6m2 1v4m2 1v-5m2 0v5m2 0.5v-6m2 -0.5v6.5m2 1.5v-7m2 0v4.5m2 8v-15.5m2 -0.5v7.5m2 0.5v-5m2 -0.5v6m2 0.5v-6m2 -5v17m2 -7.5v-4.5m2 0.5v5.5m2 -1.5v-4m2 0v4.5m2 0v-5m2 -1v6.5m2 -0.5v-6.5m2 0v7m2 0.5v-7m2 -2.5v12m2 -2.5v-6m2 0v4.5m2 1.5v-6.5m2 1v4.5m2 -0.5v-4m2 -1v5m2 2v-7m2 0v5.5m2 1v-6.5m2 0v5m2 1.5v-9m2 3.5v5.5m2 2v-8.5m2 -0.5v8m2 3.5v-11m2 1v4.5m2 -0.5v-4m2 -0.5v5m2 -0.5v-6m2 0v6m2 0v-5m2 1v5.5m2 1v-8m2 1.5v4m2 2v-6m2 -0.5v4.5m2 1.5v-7.5m2 1.5v4.5m2 2v-9m2 2v5m2 2v-8m2 0.5v5.5m2 1.5v-5.5m2 -1v5m2 1v-7.5m2 1v7m2 2.5v-8m2 -1.5v6m2 -0.5v-5m2 1v5m2 -0.5v-4.5m2 -1.5v5.5m2 0v-5m2 0.5v4.5m2 1.5v-6.5m2 0v5m2 2v-7m2 1v5m2 2v-7.5m2 -1v8.5m2 -3v-5m2 -0.5v6m2 1v-6m2 -0.5v5m2 1v-5m2 -0.5v5.5m2 -1v-5m2 -1v6m2 0.5v-5m2 0v4.5m2 0.5v-4.5m2 -1v5.5m2 -0.5v-5.5m2 1.5v4m2 0v-4.5m2 0.5v4m2 0.5v-10m2 5.5v7m2 -2v-5m2 -1.5v6m2 0v-4.5m2 -0.5v5m2 0v-6m2 1v5.5m2 -1v-6m2 2v4m2 2.5v-6.5m2 -2.5v7m2 0v-7m2 1.5v6.5m2 0v-6.5m2 1v4.5m2 -0.5v-4.5m2 -2v7.5m2 1v-6m2 -1.5v8m2 -2.5v-4.5m2 0.5v7m2 -1v-7m2 -1.5v6.5m2 0.5v-5m2 -0.5v6.5m2 -1.5v-4m2 -1.5v6m2 0.5v-10m2 3.5v6.5m2 0v-5.5m2 -0.5v5m2 0.5v-5m2 0v5.5m2 3.5v-12m2 3v5m2 2.5v-7m2 -1.5v5.5m2 1.5v-6m2 0v6m2 -0.5v-6m2 1v4m2 2.5v-11.5m2 5v4.5m2 0v-5.5m2 -1.5v6.5m2 0v-4m2 0v5m2 -0.5v-7.5m2 2v5.5m2 0v-4.5m2 -0.5v4.5m2 0v-5.5m2 1v6m2 -0.5v-6.5m2 0.5v7m2 -2v-6m2 1v5m2 0.5v-6.5m2 -0.5v7.5m2 -0.5v-5.5m2 1v5m2 0v-6m2 0.5v5m2 0v-6m2 0.5v5m2 1.5v-6.5m2 0.5v6.5m2 -0.5v-8.5m2 3v6.5m2 -1.5v-5m2 -0.5v5m2 -0.5v-4m2 -1v5.5m2 0.5v-6m2 1v5.5m2 1v-7m2 -0.5v5.5m2 0.5v-6.5m2 -0.5v6.5m2 0v-6m2 1v5m2 -0.5v-5.5m2 0.5v6m2 -0.5v-7m2 2.5v4.5m2 0v-6.5m2 2v8m2 -4v-4m2 -2v7m2 -0.5v-6m2 -0.5v6m2 0v-7.5m2 3v5m2 0v-4.5m2 -3v9m2 -1.5v-5m2 -2.5v7m2 0.5v-4.5m2 -0.5v4.5m2 1.5v-7m2 0.5v5.5m2 6.5v-17m2 5v6m2 0v-5m2 -1.5v9m2 1v-9m2 0.5v4m2 1v-6m2 0.5v4.5m2 0v-5m2 0v6m2 -0.5v-6m2 0.5v6m2 0v-5m2 -1v7m2 -1v-5.5m2 -0.5v5.5m2 -0.5v-5m2 0.5v5m2 -0.5v-5m2 -4.5v15m2 -4v-6m2 0v5m2 0v-5m2 -0.5v6m2 -0.5v-4.5m2 -1v5m2 1v-5.5m2 0.5v5m2 1.5v-7m2 -1v6.5m2 -0.5v-6.5m2 1.5v5m2 0v-5m2 0v4.5m2 0v-4.5m2 0.5v5m2 0v-5.5m2 0v4.5m2 0v-6m2 2v4.5m2 0v-5.5m2 1v5.5m2 1.5v-7.5m2 0.5v5.5m2 -1v-4.5m2 -1v6m2 -0.5v-6.5m2 2v4.5m2 0v-4.5m2 -0.5v6m2 -1.5v-5m2 0v5.5m2 -0.5v-8m2 1v7.5m2 -0.5v-4m2 -1.5v7.5m2 -1.5v-4.5m2 -0.5v5m2 0v-6.5m2 2v4.5m2 1v-8m2 1.5v8m2 -1.5v-8m2 2v5m2 0v-5m2 -1.5v6m2 0.5v-5.5m2 1v5m2 -0.5v-4.5m2 -1.5v6.5m2 -1v-6.5m2 1v7m2 5v-11m2 0v4.5m2 0.5v-6.5m2 0.5v5.5m2 1v-6.5m2 1v6m2 -1.5v-6m2 1v5m2 0v-4m2 -1v6.5m2 4v-13.5m2 4v4.5m2 0v-5m2 0.5v4.5m2 0v-5m2 0.5v4.5m2 1v-6m2 0v5m2 2.5v-8.5m2 1.5v4.5m2 1v-11m2 5v5m2 0v-5m2 -1.5v7.5m2 -0.5v-6m2 0v6.5m2 -0.5v-8m2 2.5v6.5m2 -2v-10.5m2 5v6.5m2 -1v-7.5m2 3.5v5m2 1.5v-8m2 -0.5v7m2 0v-6m2 -0.5v7.5m2 -2v-6.5m2 -1.5v8m2 2v-6.5m2 -1.5v6.5m2 -0.5v-6m2 1.5v6m2 -1v-4.5m2 -3.5v9.5m2 -2v-5m2 -1.5v6.5m2 1.5v-6m2 -0.5v5m2 0.5v-4.5m2 -0.5v6m2 1.5v-8m2 0v5.5m2 0.5v-6.5m2 -5.5v14.5m2 -3.5v-4m2 0v4m2 1v-6.5m2 1v4.5m2 1v-5m2 -0.5v6m2 -1.5v-4m2 0v4m2 1v-7m2 1v5.5m2 1v-7.5m2 1v5m2 0v-5.5m2 1.5v4m2 1v-6.5m2 0.5v5m2 0.5v-8.5m2 3v5m2 0v-4.5m2 0v5m2 1v-6.5m2 0v6m2 0v-5.5m2 -2v15m2 -8.5v-4m2 -1v5.5m2 0.5v-6.5m2 0.5v5m2 2v-7.5m2 1v4.5m2 2v-6.5m2 0.5v4.5m2 1v-5.5m2 -0.5v4.5m2 0.5v-5.5m2 -1.5v11.5m2 -4.5v-5m2 0.5v6m2 -2v-4m2 -1.5v5.5m2 0.5v-6m2 1v6.5m2 -1v-5.5m2 -0.5v6m2 0v-5m2 -1v7m2 -1.5v-6m2 1.5v5m2 2v-8m2 0.5v6m2 -0.5v-6m2 0.5v4.5m2 0.5v-6m2 1v5m2 -0.5v-5m2 0.5v4.5m2 0v-5.5m2 1v5m2 0v-6.5m2 2v4.5m2 1v-6m2 0v4.5m2 0v-4.5m2 0v5m2 -0.5v-5.5m2 1v5.5m2 1v-7m2 -1v7m2 -1v-5m2 1v4.5m2 1.5v-8m2 2v7m2 -2.5v-5m2 -4.5v16m2 -7v-4m2 -1.5v5.5m2 0.5v-5m2 -1v6m2 0v-5.5m2 0v5m2 0.5v-5m2 -1v5.5m2 7.5v-17.5m2 5.5v5.5m2 -0.5v-8m2 1v7m2 -0.5v-5m2 -3v18m2 -9.5v-5.5m2 -0.5v6m2 1v-10.5m2 4.5v4.5m2 0.5v-7m2 2.5v5m2 -1v-4.5m2 0v5.5m2 0.5v-6.5m2 0v6m2 -1v-5.5m2 -0.5v9.5m2 -3.5v-5m2 0.5v5.5m2 -0.5v-4.5m2 -1v6m2 -0.5v-4.5m2 -1v7.5m2 -2v-5.5m2 -4v12m2 -3v-4m2 -1.5v10.5m2 -4.5v-5m2 0v5.5m2 -0.5v-4.5m2 -0.5v4.5m2 0v-4m2 -0.5v4.5m2 0.5v-4.5m2 0v5.5m2 1v-8m2 0v7.5m2 -2v-6m2 1.5v5.5m2 0v-5.5m2 0.5v6m2 -2v-4m2 -1.5v5.5m2 1v-9m2 2.5v7.5m2 5v-11.5m2 0.5v5.5m2 0.5v-7.5m2 0.5v7m2 -0.5v-6.5m2 -0.5v5.5m2 0.5v-4.5m2 0v5m2 -0.5v-5.5m2 0v5m2 1.5v-5.5m2 -1v5m2 0v-4.5m2 0.5v5.5m2 0v-6.5m2 0v5.5m2 1.5v-8m2 1v7m2 -1.5v-7m2 2v5.5m2 0.5v-6.5m2 0v6.5m2 0.5v-6m2 -2v6m2 1v-6m2 0.5v4.5m2 2v-6m2 -1v6.5m2 -1.5v-5.5m2 0v7m2 -1.5v-4m2 -5v11m2 0v-6m2 -2.5v7m2 2v-8m2 -1v14m2 -7.5v-4.5m2 -1v5.5m2 0v-5.5m2 1v5m2 -0.5v-7.5m2 3.5v5m2 -0.5v-5.5m2 0v5m2 1v-6m2 -4v9.5m2 0v-7m2 1.5v8m2 -2v-8m2 0.5v7m2 0.5v-7m2 0v6m2 2v-6m2 0v7m2 -2v-5.5m2 0v5m2 0v-6m2 0.5v5.5m2 -0.5v-4m2 -1.5v7.5m2 -1.5v-6.5m2 1v5.5m2 1.5v-6m2 -1v6m2 0v-6m2 0.5v7m2 -2.5v-5m2 -0.5v5.5m2 0.5v-5m2 -1.5v6.5m2 1.5v-8m2 0.5v5.5m2 2v-6m2 0v4.5m2 0.5v-5.5m2 -2.5v7.5m2 0v-5.5m2 -2v7.5m2 1v-7.5m2 1.5v6.5m2 -1.5v-6m2 1v5m2 0v-5.5m2 0.5v4.5m2 0.5v-5m2 0v6m2 -1v-4.5m2 -1v7.5m2 0v-7.5m2 0.5v5m2 0v-5m2 0.5v4m2 0v-4m2 -1.5v6m2 3.5v-13.5m2 3.5v9m2 -2v-6.5m2 1.5v4m2 2v-6.5m2 0.5v4m2 0v-5.5m2 -1.5v8.5m2 -1v-5.5m2 0v5.5m2 0.5v-7m2 1v5m2 0.5v-4.5m2 -0.5v4.5m2 0.5v-6.5m2 0v6.5m2 1v-5.5m2 -0.5v4.5m2 1.5v-7m2 1.5v6m2 -1.5v-7m2 2v5m2 0.5v-6m2 -4.5v15.5m2 3.5v-15.5m2 1.5v5m2 0v-5m2 -4v10m2 -0.5v-5.5m2 -1v6.5m2 -1v-5.5m2 1v5m2 0v-4.5m2 -4.5v9.5m2 -0.5v-5m2 0.5v4m2 0v-4.5m2 0.5v5m2 -1v-4m2 -1v6m2 1v-6m2 0v4.5m2 0v-4.5m2 -0.5v5m2 -0.5v-7m2 2v5.5m2 0.5v-8.5m2 2.5v5m2 0v-4m2 -2v7m2 4v-10.5m2 1.5v6m2 -2v-5m2 1v5m2 -0.5v-6m2 0v6.5m2 -0.5v-5m2 -0.5v5m2 0v-4.5m2 0.5v4m2 0v-4.5m2 0.5v5m2 -0.5v-5.5m2 -5.5v15m2 -4v-5.5m2 0v5.5m2 -0.5v-4m2 -1v6m2 0v-5.5m2 0v5.5m2 -0.5v-4.5m2 -1v5.5m2 1v-6m2 -1v6m2 0v-4.5m2 -2.5v7m2 -0.5v-4.5m2 -0.5v5.5m2 0v-4.5m2 -0.5v4.5m2 0v-4m2 -2v6.5m2 0v-4.5m2 0v6m2 -2v-4m2 -1v5m2 0.5v-4.5m2 0v4.5m2 1v-7m2 1v4.5m2 1v-5.5m2 0.5v4.5m2 0.5v-5m2 -0.5v4.5m2 0.5v-5m2 0.5v4.5m2 0v-4.5m2 0v4.5m2 0v-5.5m2 1v4.5m2 0v-5.5m2 -1.5v6.5m2 0.5v-6.5m2 2v5m2 -0.5v-4.5m2 -0.5v5m2 -0.5v-5.5m2 1v6.5m2 6.5v-18m2 4v6.5m2 -0.5v-5.5m2 0.5v4.5m2 0.5v-5.5m2 0.5v5m2 0v-5m2 -0.5v5.5m2 0v-4.5m2 -1v5.5m2 2.5v-7.5m2 -1.5v6m2 0v-8.5m2 4.5v6.5m2 -1v-7m2 1.5v4m2 0.5v-4.5m2 -1v7.5m2 -1v-6m2 0v4.5m2 2v-7m2 -0.5v6m2 0v-4.5m2 -0.5v6.5m2 0.5v-7m2 -1.5v7.5m2 -0.5v-5m2 -1.5v6m2 0v-5.5m2 1v5m2 0v-5m2 -0.5v5m2 0.5v-8m2 2.5v5m2 0v-6.5m2 2v4.5m2 0v-4.5m2 -6v14.5m2 -3.5v-6m2 1v4m2 0.5v-6m2 1.5v5.5m2 -1v-6m2 0.5v7m2 -1.5v-4.5m2 -1v6m2 -0.5v-5.5m2 -6.5v12m2 0v-6.5m2 1v6.5m2 -1v-5m2 0.5v4m2 0.5v-6m2 1.5v5m2 -1v-4.5m2 -1.5v6.5m2 0.5v-5.5m2 0.5v6m2 -1v-6m2 1v5m2 0v-5m2 -0.5v4.5m2 0.5v-4.5m2 -0.5v5m2 0v-4.5m2 -2.5v7.5m2 -0.5v-5m2 -1.5v6m2 0v-4m2 -3.5v9m2 -1v-5.5m2 1v4m2 2v-7m2 -1.5v7m2 1.5v-6.5m2 0v4.5m2 2v-7m2 0v7m2 -1.5v-4.5m2 -2v6m2 1v-6m2 0.5v14m2 -9v-5m2 -2v7.5m2 0.5v-6.5m2 -0.5v7.5m2 -0.5v-6m2 -0.5v6m2 0.5v-7.5m2 0.5v7m2 0v-6.5m2 -1.5v6.5m2 1.5v-7m2 1v5m2 0v-6.5m2 1.5v5.5m2 2v-10m2 3v4.5m2 0v-5.5m2 -0.5v6m2 -0.5v-7m2 2.5v5m2 -0.5v-4m2 -0.5v5m2 -0.5v-4.5m2 0v5m2 0v-6m2 1.5v4.5m2 -0.5v-5m2 0.5v6.5m2 -1.5v-4.5m2 -0.5v5.5m2 -1v-5.5m2 0.5v6.5m2 -0.5v-5.5m2 0v4.5m2 1v-5.5m2 -1v5.5m2 0.5v-4.5m2 -3v8m2 -0.5v-5m2 0.5v4m2 0.5v-4.5m2 -1.5v5.5m2 2v-6m2 0v5.5m2 0.5v-6m2 -0.5v5.5m2 -1v-4.5m2 0v6m2 -1.5v-6.5" stroke="#a0a0a0" stroke-width="2" fill="none"/>
<rect x="378.0" y="570.6" width="3.0" height="3.4" fill="#6cb83a" />
<path d="M2318.2 223.5L2324.5 210.5L2330.8 223.5z" fill="#6f6f6f"/>
<rect x="2318.5" y="240.0" width="12.5" height="37.0" rx="4" fill="#5a5a5a" />
<path d="M2318.2 554.5L2324.5 567.5L2330.8 554.5z" fill="#6f6f6f"/>
<rect x="375.0" y="591.3" width="1963.0" height="340.0" fill="#2b2b2b" />
<rect x="375.0" y="591.3" width="1963.0" height="42.0" fill="url(#gHdr)" />
<line x1="922.8" y1="591.3" x2="922.8" y2="633.3" stroke="#5a5a5a" stroke-width="3.2" />
<text x="937.2" y="617.9" font-size="20" font-family='"Liberation Mono","DejaVu Sans Mono",monospace' fill="#6a6a6a" textLength="55.5" lengthAdjust="spacingAndGlyphs" stroke="#6a6a6a" stroke-width="0.25">0.5 s</text>
<line x1="1386.0" y1="591.3" x2="1386.0" y2="633.3" stroke="#5a5a5a" stroke-width="3.2" />
<text x="1400.5" y="617.9" font-size="20" font-family='"Liberation Mono","DejaVu Sans Mono",monospace' fill="#6a6a6a" textLength="33.3" lengthAdjust="spacingAndGlyphs" stroke="#6a6a6a" stroke-width="0.25">1 s</text>
<line x1="1849.2" y1="591.3" x2="1849.2" y2="633.3" stroke="#5a5a5a" stroke-width="3.2" />
<text x="1863.8" y="617.9" font-size="20" font-family='"Liberation Mono","DejaVu Sans Mono",monospace' fill="#6a6a6a" textLength="55.5" lengthAdjust="spacingAndGlyphs" stroke="#6a6a6a" stroke-width="0.25">1.5 s</text>
<rect x="381.0" y="597.0" width="198.0" height="31.0" rx="5" fill="#d3d3d3" />
<text x="389.5" y="619.3" font-size="19.5" font-family='"Liberation Sans","DejaVu Sans",sans-serif' fill="#000" textLength="122.0" lengthAdjust="spacing" >example_data</text>
<path d="M557.0 607.9h14l-7.0 9.5z" fill="#111"/>
<rect x="378.0" y="633.3" width="1957.0" height="295.0" fill="#19071f" />
<clipPath id="d2clip"><rect x="375" y="633.3" width="1963" height="295"/></clipPath><g clip-path="url(#d2clip)">
<rect x="378.0" y="631.6" width="3.0" height="9.9" fill="#74bd78" />
<line x1="459.5" y1="636.5" x2="2312.5" y2="636.5" stroke="#34283a" stroke-width="1" />
<text x="402.3" y="641.5" font-size="15.5" font-family='"Liberation Mono","DejaVu Sans Mono",monospace' fill="#8c8c8c" textLength="38.4" lengthAdjust="spacing" >CH59</text>
<line x1="497.1" y1="636.5" x2="2312.5" y2="636.5" stroke="#74bd78" stroke-width="8" stroke-dasharray="4 8.6 1 2.2 2.5 5.7 3.68227 15.4 1 28.2 1.5 16.4 2 6.6 1.5 7.8 1 1.1 2 3.5 3.38508 19.8 1 20.8 3.15521 17.0 1.5 4.5 2 8.4 2 11.4 3 8.3 2 26.0 1 1.0 1 15.9 1.5 7.9 6.69126 12.7 1 44.0 1 14.7 2 13.3 1 17.5 1.5 14.3 1.5 1.9 1 1.5 1.5 2.3 1.5 14.1 1 21.4 1 1.4 1 7.7 1.5 4.2 5.06536 0.4 2 0.8 1 15.4 1 4.0 1 7.5 2 23.3 1 14.8 1 5.8 1 15.4 1.5 2.6 1 9.0 1 9.3 1 49.5 2.03003 1.3 2.5 13.2 1 14.6 3.5 1.1 1 5.7 1 9.4 1.5 12.0 1.80202 5.1 1 4.9 1.5 34.9 1 33.0 2 71.6 1.5 24.0 1 2.4 1 15.9 1 16.9 1.5 36.5 1 24.0 1 23.8 2 29.7 1 9.1 1 1.1 4 31.8 1 27.7 1 3.7 1 0.4 1 5.6 5 0.9 1 5.6 1 19.6 1 7.3 1.5 10.4 1 19.6 1.5 1.5 1 4.3 2 13.0 5.27797 15.4 1 17.5 1 19.3 3.97913 2.1 1.5 22.5 3 1.7 1 6.5 1 8.0 2.5 8.7 1 0.9 1 3.7 1.5 5.0 2.32519 2.9 1.5 45.1 2.07811 20.2 1.31352 10.4 1 17.5 3.5 26.9 2.5 4.6 2.4332 4.7 2.5 1.0 1 24.5 1 6.9 1 10.3 1 5.1 1 4.8 4.03337 40.0 1.5 78.1 1 9.1 1 26.6 1 6.1 2.50553 4.8 2 6.9 1 1.4 2.42234 16.5 3.5 66"/>
<rect x="378.0" y="641.4" width="3.0" height="9.9" fill="#86d488" />
<rect x="459.5" y="643.6" width="1853.0" height="5.6" fill="#595959" />
<line x1="415.0" y1="646.4" x2="428.5" y2="646.4" stroke="#8a8a8a" stroke-width="1.3" stroke-dasharray="6 1.5"/>
<line x1="509.6" y1="646.4" x2="2312.5" y2="646.4" stroke="#86d488" stroke-width="8" stroke-dasharray="1 2.3 2 7.1 2.22292 15.6 1 1.9 1 19.7 1 13.6 3.5 23.9 1.6826 6.4 2 0.9 1 2.8 1 10.1 2.5 20.7 1 3.9 2.79438 6.1 5.5 3.7 2 4.2 2.52436 13.9 1 19.0 1 2.7 1 22.4 1 1.5 1 15.7 1.5 27.4 1 7.4 1 13.8 1 13.7 2.38032 4.2 1 5.8 1 5.0 5.28677 7.6 1 2.2 1.5 17.7 1 0.9 2 3.5 1 7.8 1 9.3 2.05927 14.1 1 11.0 1 9.0 1.50979 9.9 2.6116 3.0 2.5 5.3 1 15.5 1 1.2 1 10.3 3.77182 22.0 1 14.2 1 5.9 1 16.2 2 11.4 1 0.8 2 7.3 1 37.4 1 2.8 1 6.5 3.20911 16.5 2 24.3 1.5 8.9 2 10.9 1.9909 5.5 1.5 4.3 1.5 8.6 1.5 38.7 1 12.4 1.5 3.6 1 1.1 2 14.8 1 12.3 1 2.6 1 31.0 1 0.4 1 3.3 1 29.2 1 5.6 1.5 19.9 1 6.6 1 36.2 1 23.8 1 59.4 1 0.4 1.5 0.9 1 3.7 4 12.0 4 3.6 1 10.8 4.5 4.7 1 13.7 2.85902 7.2 1 0.5 1 2.8 2 6.2 2.5 4.3 1 8.5 1.5 17.9 1.5 10.3 1 19.6 1.5 1.1 2.5 3.4 2 1.4 3 0.5 1 13.6 4 2.8 1 6.5 1 7.1 1 9.4 1 16.2 1 1.7 4.28293 8.5 1.5 15.6 1 4.1 1 6.2 1 3.2 1 4.2 4 10.2 5.81439 9.3 1.5 3.2 1 26.4 1.5 3.6 1 9.1 1.5 20.7 1.14556 28.3 3 3.9 1 0.5 1.55441 34.2 1 28.8 2.15359 5.8 1 16.9 1 4.7 3.57276 18.0 4 5.3 1 37.6 1 4.2 1.5 9.9 5 32.5 1 8.9 1 19.6 2.5 4.5 1 6.1 1.5 5.7 2 3.1 1.5 4.5 2.04539 87"/>
<rect x="378.0" y="651.3" width="3.0" height="9.9" fill="#6fb674" />
<line x1="459.5" y1="656.2" x2="2312.5" y2="656.2" stroke="#34283a" stroke-width="1" />
<line x1="415.0" y1="656.2" x2="428.5" y2="656.2" stroke="#8a8a8a" stroke-width="1.3" stroke-dasharray="6 1.5"/>
<line x1="465.1" y1="656.2" x2="2312.5" y2="656.2" stroke="#6fb674" stroke-width="8" stroke-dasharray="1 5.1 1.5 11.2 1.5 0.7 1 26.0 3 2.5 1 3.8 1.5 12.1 1 2.0 1 1.9 1 12.5 1 6.1 1 24.5 1 8.7 1.64958 2.5 1 1.3 1.87712 9.6 1 2.4 2.34272 2.0 5.88814 10.7 2 6.5 1 9.0 2 16.9 1 1.7 1 1.5 2.65642 0.9 1 23.7 1 6.9 1 5.5 1 19.9 1 0.9 1 16.1 1.5 19.2 4 27.0 1 6.4 1.5 19.4 1 18.2 1 1.8 1.5 17.5 1 0.9 2.51546 6.5 2.5 13.7 1 4.7 2.5 15.2 3.65317 11.1 1 3.1 1 6.3 3 10.4 1 5.0 6.30229 6.2 1.5 7.7 1.5 1.1 2.42071 5.6 1 1.5 2 12.9 1 14.2 1 5.7 1 16.4 2 11.5 1 8.3 1 1.1 1 34.2 1 1.8 1 10.3 5.09633 22.4 1.5 9.3 5.5 2.6 1.5 7.8 1 13.8 1 4.9 1 5.5 1.5 4.6 4 11.4 1 5.1 1.5 21.4 1 4.3 1.5 5.9 3.0342 6.6 1 5.6 1 1.6 1 4.3 1 12.5 1 26.3 1 0.6 1 5.8 2.10696 2.6 2.07654 11.7 2.5 15.0 1 21.3 5 0.5 1 18.0 1.5 24.1 1 18.6 1 1.0 5 15.1 1 1.2 2.5 7.8 1 13.4 2 2.4 1.5 4.4 1 5.5 2.83524 0.8 1 3.5 5 31.0 1 8.0 1 14.3 1 8.5 1 0.6 1 2.9 2.5 56.5 4 15.4 2.5 3.8 2 17.7 1 1.9 1 3.8 1.84489 5.9 1.33837 2.4 4 2.4 1 9.5 4 2.1 2 2.9 1 9.5 1.5 3.5 1 4.0 1.5 24.9 1 6.0 1 4.0 3.5 10.7 2.5 4.3 1.5 39.3 6.0347 2.5 1.5 5.8 1.5 20.0 1 28.6 2.5 5.5 1 2.3 1.5 3.1 1.5 20.8 1.5 4.1 1 11.2 1 14.9 1 0.7 2 6.4 1.5 21.2 3 19.6 3 19.9 1 17.0 1 10.6 1.5 26.8 1 19.4 1 4.9 1 3.4 2.03644 2.1 1.5 6.2 1.5 7.4 2.62945 7.2 1.5 15.5 1.5 25.8 3 64"/>
<rect x="378.0" y="661.2" width="3.0" height="9.9" fill="#7cc47c" />
<line x1="459.5" y1="666.1" x2="2312.5" y2="666.1" stroke="#34283a" stroke-width="1" />
<line x1="415.0" y1="666.1" x2="428.5" y2="666.1" stroke="#8a8a8a" stroke-width="1.3" stroke-dasharray="6 1.5"/>
<line x1="470.9" y1="666.1" x2="2312.5" y2="666.1" stroke="#7cc47c" stroke-width="8" stroke-dasharray="1.79507 7.3 1 16.9 1.5 8.4 1 4.4 2.5 2.8 1 2.6 2.5965 3.3 3 1.9 1 4.7 6.5 2.8 1 0.6 1.5 5.4 1 5.7 1 23.6 2 9.0 1 2.8 1 2.0 1.5 9.4 1 2.6 1 0.5 1 2.2 5.13013 11.1 2.5 4.2 1.5 0.7 1 4.7 1 0.7 1 1.1 2 17.3 2 3.5 1.5 1.3 1.16989 2.9 1 1.3 2.0586 1.9 2.87239 9.1 1 23.7 1.5 7.3 2.5 6.0 1.5 2.9 1.81819 7.4 1 4.4 1.5 15.5 4 13.9 1 12.3 1 15.0 1 10.8 1 3.5 6.61306 2.8 1 4.3 1.25369 2.2 1.5 12.1 1.73183 6.5 3.73523 6.2 2 0.7 1 2.0 1.5 2.6 2 1.9 1 22.0 4.24472 6.4 1 3.7 1 2.7 1 8.8 1 9.9 1 10.1 2 4.3 2 11.4 4.45799 1.4 1 1.2 2.70132 14.3 1 1.5 1 10.1 1.5 11.7 1 12.2 1.5 3.0 1 16.2 1 35.2 1 0.6 2 0.7 1 2.6 1 3.9 1 2.6 4.4787 4.3 4.5 11.9 2.96944 12.2 1 2.1 1 1.3 2 4.3 2.5 0.4 1 3.4 2 6.8 1 1.2 4.63223 3.8 1 3.9 3.61314 16.0 1 5.3 1 9.1 5.5 1.8 1 5.4 4 1.6 1 3.4 2 1.6 1 6.6 1 0.8 2 5.4 1 4.3 1 0.5 1 11.5 1 2.6 1.59377 10.3 2 9.5 1 0.4 1 5.8 1 4.3 1 12.6 2.5 15.0 1 13.3 1 0.7 1 0.8 1 2.7 7.71519 5.3 3 1.6 1 16.2 1 7.6 1 12.8 2.5 8.6 1.5 2.0 5.5 15.2 4.26455 7.4 1.49935 13.1 2 7.0 1.5 1.3 1 2.6 1 1.0 1 3.0 1 1.0 1 0.8 5.5 4.9 1.86192 6.0 1 3.3 1.39975 5.9 1 14.5 3.07027 11.7 3.6119 3.3 1.5 2.9 1 1.7 1 24.5 1.5 1.9 1 22.1 1 5.3 1 9.4 1 1.4 1 1.4 9.55141 4.8 1.5 7.3 1.20472 7.9 1 1.8 1 4.2 2 5.6 2.45721 5.9 1 8.6 5.97296 6.7 1.6905 9.2 2.28506 2.8 6.56775 2.2 1.5209 0.8 1.5 10.2 1 7.3 1 25.2 3.5 3.6 2.01126 21.8 1 13.7 4.98241 6.0 2 3.7 2.24731 4.9 1.5 4.0 1.5 1.0 1 11.8 1 7.8 1 0.6 1 1.9 1 18.4 1 1.5 2.5 3.0 1.5 5.8 1 1.3 5.5 7.1 2 3.4 3.49736 0.8 1 7.1 1 14.5 1.90723 28.3 3.8426 1.3 1 1.3 1 2.6 3.71325 10.4 4.56119 11.7 2 4.9 1 37.4 1 0.4 1 12.8 1 3.6 1 9.7 1 8.8 1 2.2 1 0.9 1.5 0.7 1.5 1.0 1 3.1 2 6.8 5.5 1.2 1 2.0 1 8.8 1.5 3.9 1 8.5 1.5 13.0 3.79453 4.7 3 1.5 4 63"/>
<rect x="378.0" y="671.0" width="3.0" height="9.9" fill="#6aae6e" />
<line x1="459.5" y1="676.0" x2="2312.5" y2="676.0" stroke="#34283a" stroke-width="1" />
<line x1="415.0" y1="676.0" x2="428.5" y2="676.0" stroke="#8a8a8a" stroke-width="1.3" stroke-dasharray="6 1.5"/>
<line x1="470.9" y1="676.0" x2="2312.5" y2="676.0" stroke="#6aae6e" stroke-width="8" stroke-dasharray="4.06298 5.1 1 8.7 5.46559 2.3 3.02677 7.3 4.54724 4.6 3 16.9 7.89035 2.9 1.19245 0.6 2.5 1.8 2 0.4 1 2.1 1.5 2.5 1 6.1 1 4.4 1.5 4.5 1.99718 3.5 2.9544 12.3 1.5 1.3 2.5 0.7 2 11.0 1.5 24.5 3.62588 1.5 1.5 1.5 1.5 1.4 4.04935 1.9 2.5 2.9 1.5 7.4 2.5 1.9 5.23631 2.1 1.5 0.7 1.5 3.0 1.5 3.7 2.89514 3.5 1 3.0 2 10.2 2.85565 2.5 6 5.9 3.5 5.0 2.5 2.5 1.5 4.8 1 1.9 1.5 1.4 4.54743 14.8 5.5 1.8 1 13.1 1.50103 2.1 1.5 5.4 1.5 3.7 3.53534 6.4 1.5 3.8 1.5 2.8 2.5 4.3 10.4598 4.0 1.99296 1.8 2 4.9 4.67218 1.7 1.5 4.7 1.5 0.5 4.64679 2.8 6.87206 5.4 2 0.9 2.27828 8.5 7.24408 9.1 1.5 6.0 1.5 6.9 2.53442 0.5 1.5 3.7 9.36013 9.3 8 3.0 2.5 2.1 1.5 7.8 6 0.5 1.5 7.6 1.5 10.7 1.5 8.2 7.82349 6.5 1 12.2 1.5 3.0 3.33784 14.2 1.5 3.2 1.5 3.8 5.75794 4.9 1.5 6.8 3.06164 0.7 1.5 1.4 1.5 3.2 2.23186 2.5 12.7557 2.0 1.5 1.2 1.5 18.2 3.3438 3.0 4 2.0 1 1.5 1.5 1.7 2.5 4.2 1.5 3.3 3 3.9 1.5 2.2 1.5 7.0 4.23332 1.9 4.4373 9.7 8 4.3 1 6.9 6.5 0.8 3.9133 5.0 1 6.9 3.34726 0.5 2.2812 1.7 6.54059 6.1 1.5 0.7 2 1.1 1.5 4.6 1.5 6.4 1.5 25.4 3.0169 10.7 3.26803 10.1 2.5 11.8 1.5 2.3 1.5 7.7 1.5 1.6 1 1.9 1.5 4.9 7.43676 4.7 5.5 1.8 1.5 13.8 1.5 6.9 1.5 1.3 1.5 9.3 1 10.3 2 3.0 1.5 2.6 1.5 7.3 1.5 4.8 5.12371 6.4 1.61701 12.8 3 5.3 2.06837 1.6 1.5 13.5 10.2794 6.6 1.5 2.1 1.77626 5.5 1.5 4.7 2.07451 3.2 1.5 3.3 2.559 17.7 4.42255 1.9 3.45956 10.5 1.5 10.0 1.5 0.5 2.5 40.8 1 3.7 8.5 14.1 1.5 6.6 2.90652 6.2 3.5 3.3 1.5 4.3 2.80633 0.9 1 3.5 12.3163 4.8 6.95736 4.5 13.1356 0.9 1.5 12.4 2.14791 11.0 3.07729 12.9 2 4.4 1 5.2 1.5 5.4 1.67833 7.2 2 5.9 1.5 6.7 1 5.7 5.72344 10.8 1.87371 26.1 1.5 6.7 1 26.7 2 2.4 2 5.8 6.8815 1.1 2.5 4.1 2 4.5 2.5 0.7 1.5 1.4 8 8.6 1.5 3.0 2 8.3 7.08666 11.6 6.09917 2.2 1.5 0.9 5.07491 5.2 1.5 3.9 6 18.2 1.5 15.4 2.5 4.4 3.35928 0.6 1 6.9 6.40853 3.4 5 2.3 1.5 2.2 3.5 2.2 3.5 1.8 1.5 11.2 2.28372 1.9 2.5 3.4 2 8.0 10.4429 8.8 1.5 4.3 1.5 4.0 2.5 1.3 1.5 13.6 5.5 1.9 5.5 2.4 2 7.2 1.5 53"/>
<rect x="378.0" y="680.9" width="3.0" height="9.9" fill="#80cc82" />
<line x1="459.5" y1="685.9" x2="2312.5" y2="685.9" stroke="#34283a" stroke-width="1" />
<line x1="415.0" y1="685.9" x2="428.5" y2="685.9" stroke="#8a8a8a" stroke-width="1.3" stroke-dasharray="6 1.5"/>
<line x1="471.2" y1="685.9" x2="2312.5" y2="685.9" stroke="#80cc82" stroke-width="8" stroke-dasharray="1.64325 7.3 1 8.9 1.5 1.8 1.5 3.1 2 0.6 1.5 5.0 4.45982 5.4 2.5 12.3 1 4.4 1 0.7 6.5 1.4 2.41246 1.6 1 3.6 1 3.3 1.5 4.3 1.5 3.7 6.21123 5.2 1 1.1 5.61717 4.5 1 1.6 1.5 6.5 5 10.2 3.56073 4.7 2 0.7 1 15.9 3.25152 0.5 1 3.1 2.06143 0.5 3.95637 0.9 4.69174 11.2 2 3.0 1.5 1.6 1 4.3 1.58673 2.7 1.58201 6.4 1.5 3.1 1 2.6 2 3.4 1.5 5.8 1.5 3.7 8.07896 1.3 1 1.7 3 2.4 2 1.1 2.15596 3.0 2 5.6 2.48602 1.1 4.18316 10.5 1.5 3.6 1 19.5 3.92765 2.8 3 1.4 4.28867 2.4 2.58168 24.0 4.00453 2.9 1.98302 4.2 1.22147 9.7 1.80278 4.4 1.5 0.8 1 3.6 3.13215 5.8 1.5 0.7 1.5 7.7 1 2.3 4.25369 1.1 1.5 0.6 1 6.1 3 13.6 1 6.4 2.5 5.3 1 6.2 1 2.2 2.5 14.5 3.33293 4.5 2 14.6 1 2.0 1.5 8.1 1 20.6 2.52565 0.6 4.28959 9.5 1 9.8 1 3.0 3.09455 6.4 2.5 15.5 3.5 1.0 1.5 5.5 1.5 5.7 3.91772 0.9 1.5 1.1 2.39197 2.5 1.5 4.8 8.0876 5.1 1 1.3 1.62856 1.4 1.5 7.9 1.5 5.9 2.5 3.5 2.67131 3.8 1 1.8 4.3273 5.0 1.11603 4.1 3 7.4 1.5 7.7 3.15127 3.5 3.3565 3.0 2.4246 4.0 2 2.2 2.39314 2.0 1 2.8 1.5 6.7 6.5 3.1 1.5 10.2 2 2.9 1.5 0.8 1.5 2.3 1.5 0.5 3.26957 18.5 1.5 1.7 3.49533 1.1 11.0211 2.3 2.5 11.5 1 13.1 2 7.9 2 28.1 1 2.0 1.5 7.7 1.68253 2.2 2 0.9 3 0.7 3 1.7 2 2.4 1 22.5 1 1.3 1.5 0.8 2 7.0 1 10.6 5.98996 3.3 1.5 6.8 1 1.1 1.5 2.2 1.5 8.3 1 24.1 2.55721 1.1 2 9.5 2 1.6 15.5412 1.2 1.5 3.1 1.5 5.1 1.5 9.9 1.5 1.1 5.83687 0.4 1.5 0.8 1 1.1 1 3.4 1 6.0 8.22453 9.9 1.5 12.2 1.13356 2.4 1 8.5 3.75714 2.2 1 2.6 1.5 9.7 1.5 5.8 1 2.0 1.5 4.2 5.5 11.6 2 8.5 1 2.2 1.5 8.3 2 4.0 1.5 4.8 1.5 6.7 5.13166 0.8 4.5135 6.8 5.88793 0.9 3 2.6 1 0.8 4.5 17.6 1.5 1.5 1.97992 0.9 1 6.1 1 2.2 1 6.2 3.08695 7.2 2 1.1 1.50815 7.0 1.5 1.9 2 0.5 1.5 0.9 1.5 2.5 8.24447 2.1 1 1.4 1.5 4.4 1 2.6 2 0.5 6.7868 16.6 1 12.1 1.5 6.7 2.34086 12.7 1 9.1 1.5 1.6 3.07005 17.0 1 1.1 1.5 5.0 3 3.3 18.7747 6.5 2 2.3 1 0.8 1 1.5 1.5 0.6 7.39037 0.5 8.06853 2.9 3 5.9 2.5 10.3 2 5.2 1 7.3 4.0113 2.6 1.5 13.3 1.5 0.8 1 1.3 5.3443 7.0 6.11901 0.8 3.08064 4.0 1.5 3.3 8.75693 8.2 1 1.8 6.03894 5.2 4.1422 9.3 3.99459 0.6 1.5 0.7 1.5 0.7 3.07653 4.9 1 2.0 9.30221 5.1 1 3.9 1 4.7 1 5.1 1 2.1 2.06845 7.9 6.80247 2.9 3.58286 3.5 1.5 5.1 2.68484 2.0 1 1.6 1 53"/>
<rect x="378.0" y="690.8" width="3.0" height="9.9" fill="#9ce89c" />
<line x1="459.5" y1="695.7" x2="2312.5" y2="695.7" stroke="#34283a" stroke-width="1" />
<line x1="415.0" y1="695.7" x2="428.5" y2="695.7" stroke="#8a8a8a" stroke-width="1.3" stroke-dasharray="6 1.5"/>
<line x1="460.9" y1="695.7" x2="2312.5" y2="695.7" stroke="#9ce89c" stroke-width="8" stroke-dasharray="1.5 7.7 5.58527 4.2 1 1.8 2.5 0.5 3.42793 1.1 1.5 1.6 1 12.9 5.66745 4.1 3.5 5.6 2 3.3 1.95555 0.5 1 1.6 12.2966 5.0 3.5 2.5 2.21011 4.9 12.5836 3.5 3.82894 3.0 1.5 2.6 1.5323 1.4 1.5 3.8 1.5 8.4 3.2669 7.1 1.5 2.2 1.5 0.5 6.6658 7.2 1.5 1.0 1.5 1.9 1 0.7 3.76667 2.2 1 0.7 1 0.5 3.72382 7.6 1.5 2.5 6.79287 5.0 4.22614 2.2 5.51166 14.8 2 3.5 1.5 11.0 5.48048 4.2 1.5 6.2 2.5 0.4 2.5 5.5 1.5 3.2 2 2.5 9.63144 0.8 9.93417 15.7 3.62257 0.7 3.49836 6.9 7.10289 3.5 1 15.5 3.5 2.5 4.03016 3.1 1.5 3.3 1.5 11.6 6.55075 1.0 3.27901 1.6 2.6138 8.5 2 2.1 1.5 3.4 1.5 3.4 3.44492 0.8 2 6.8 3.61715 8.5 2.5 9.5 3 4.1 1.92303 1.5 1 6.9 5.5 6.2 3.55256 3.9 1 4.3 1.5 1.7 8.5 4.7 1.5 8.9 1.5 0.9 2.67327 8.6 1.5 5.5 2.5 1.8 1.5 0.8 3.62179 0.6 2 7.8 1.5 9.2 1 0.7 3.32307 1.2 1.5 5.7 2.5 1.8 2.95213 4.1 1.5 3.3 9.16421 3.7 1.5 3.6 1.5 1.2 3.71947 0.6 1.5 1.7 2.80534 1.4 5.49523 2.7 6.5 5.0 1.5 1.4 1.72396 1.2 1.5 3.3 1 3.3 1.5 6.1 4.62894 3.1 1.5 3.1 6.05435 2.9 1 2.5 1.75408 7.9 5.44849 3.5 7.61335 4.9 3.43909 2.7 2.44941 1.1 1 10.9 1.5 1.8 6.93678 1.3 8.5 1.6 1.5 0.8 2.5 4.1 1.5 1.5 1.5 0.8 3.87862 0.5 1.5 2.3 6.05736 21.9 3 2.5 1.5 0.6 8.59111 0.9 3 4.6 1 4.7 1.5 13.3 2.5 7.2 4.11866 10.7 2.5 9.6 2.5 1.5 7.17016 4.2 1.5 2.0 1.5 2.0 6.99683 1.3 2.5 9.9 1.5 1.8 2 23.8 1.5 3.4 1.5 0.8 2 2.7 4.70374 4.2 1.5 1.2 1.88859 6.1 3.56667 9.8 6 0.9 1.5 2.0 1.5 17.2 2.5 9.0 1 2.4 3.03023 1.9 1.5 6.6 2.5 5.4 3 4.2 1 4.4 1 5.1 1.95738 0.5 9.69012 0.8 1.5 3.0 1 1.9 2.75217 1.4 8.9788 1.4 1.5 4.6 2.91428 12.4 1.5 2.5 1.5 3.6 1.5 1.1 3.11241 4.3 6.02065 1.9 1.5 5.4 1.5 4.1 1.5 2.8 3.498 2.7 9.66797 2.2 1 3.9 2.5 1.9 1.5 3.9 5.99206 5.6 1.5 1.9 3 4.8 4.77813 0.8 2.5 3.7 5.52477 2.6 1.5 8.6 9.09272 1.1 8.54576 1.5 3 8.2 1 1.5 1.5 2.5 3.53568 4.8 1 3.9 3 4.3 3.49086 6.4 2.5 0.5 1 7.9 1.5 1.9 3.54648 1.0 1.5 3.0 9.83574 0.8 1.5 0.6 3.36024 5.6 2.59651 5.5 5.45943 8.0 1.5 3.0 1.5 19.7 3.53642 7.5 1.5 2.2 1.89017 8.8 1.5 2.0 1.5 5.7 3.36771 11.4 2.5 10.4 9.21403 0.9 17.2902 0.5 8.5 0.9 8.3263 8.5 5.02722 11.3 1.5 4.7 2.5 12.4 1 1.1 2 17.7 6.9739 1.7 2.9308 4.9 1.5 0.9 1.5 4.0 2.85866 3.5 1.5 2.9 1.5 0.7 4.0306 3.6 1.5 6.4 1 1.7 2 2.2 2.0618 4.9 4.47368 6.5 1.5 1.0 4.09655 2.0 1.5 0.8 4.0206 0.5 2 0.8 2.46587 7.3 5.78213 10.7 3 1.2 4 1.1 5.27951 7.3 6.73656 2.9 3.31193 3.6 1 1.5 7.17064 1.9 3.58782 53"/>
<rect x="378.0" y="700.7" width="3.0" height="9.9" fill="#5f9f62" />
<line x1="459.5" y1="705.6" x2="2312.5" y2="705.6" stroke="#34283a" stroke-width="1" />
<line x1="415.0" y1="705.6" x2="428.5" y2="705.6" stroke="#8a8a8a" stroke-width="1.3" stroke-dasharray="6 1.5"/>
<line x1="470.1" y1="705.6" x2="2312.5" y2="705.6" stroke="#5f9f62" stroke-width="8" stroke-dasharray="2.5 1.0 2.84004 0.8 1.5 0.8 1.5 1.9 7.34525 3.0 1.5 4.4 1.5 6.9 4.08556 10.6 2 1.5 9.34506 1.5 7.72602 9.0 3.83964 10.1 11.2397 0.5 1.5 2.3 2.57251 4.6 1 4.0 1.5 1.2 2 2.4 1.5 10.5 1 7.1 1 6.4 4.37508 7.6 1.72689 1.0 1.5 1.7 1 0.8 1.5 0.7 1.5 2.8 1.5 3.9 3.45336 2.6 1.5 1.8 1.5694 5.4 1.5 13.4 5.312 2.3 3.5 2.4 1.5 1.8 2.5 6.6 1.5 3.7 1.5 5.6 4.5 3.3 1 0.9 1.5 3.3 1 2.7 1 9.3 1.5 1.5 1.5 0.5 2 1.8 7.27195 0.9 9.91288 0.8 2.5 4.4 2 6.5 1.5 0.7 3.5 2.3 2 7.0 4.70905 5.9 1 1.0 1 5.7 2 5.6 3.5 2.5 2.15835 4.3 2.56544 17.8 3.17218 1.5 3.21542 2.9 1.5 9.6 2.5 6.5 2.57403 2.2 1 1.2 4.06083 3.1 2 7.4 1.5 17.0 5.23145 1.6 1.5 2.0 2.79472 3.3 1.5 0.7 6.0563 1.1 8.11409 3.6 1.5 5.4 9.45539 5.6 1.5 4.9 2.5 3.8 2.79782 8.0 1.5 1.8 1.87024 1.8 2 2.8 1.5 4.5 2 6.9 1 1.1 1.5 0.5 1.5 5.1 2.36353 0.7 3.5 8.0 2.5 3.4 1.5 1.4 1.5 0.8 1 0.5 2.5 2.9 5.75143 3.5 3 2.5 2 1.8 2 2.0 3.10238 5.2 1.5 3.6 8.53499 5.5 1.64747 1.6 1 1.0 4 1.5 1.5 4.8 2.79461 2.9 11.3519 2.7 1.5 1.1 2 3.0 1.5 3.6 1.5 4.9 1.5 1.0 1.98039 9.7 4.34116 0.4 3.5 0.6 5.71433 0.6 2.45758 0.7 1.5 4.1 1 1.7 1 7.0 13.9868 3.3 1.5 1.2 7.70055 4.1 2.5 1.8 1.5 2.5 4 1.3 3.5 15.4 1 5.7 2.98425 3.9 6.36617 0.6 6.27797 1.3 3.65371 24.2 1 1.7 4.20893 10.6 3 7.8 12.0259 5.0 1.5 1.3 1.5 4.2 5.63533 3.8 3.25232 0.7 1 2.9 2.70664 1.4 2.5 12.5 3.48435 5.4 2.5 4.6 1.5 8.3 5.48315 0.8 1.5 4.1 2 0.9 2 0.7 6.32509 3.6 3.55979 6.0 1 2.6 1.5 7.8 1.5 3.5 3.13982 1.2 2.67926 9.5 1 3.5 1.5 10.5 2 12.7 1.5 3.6 2.11538 3.9 2.39452 2.6 4 3.1 4.5 1.5 1.5 1.2 3.23563 0.7 9.46689 0.9 1 1.8 6.55806 6.3 1.5 8.2 1.5 13.9 1.5 6.6 1.5 1.3 5.72091 3.3 1.5 3.2 2.60176 15.6 1 4.4 1 3.2 1.5 0.8 2.48043 0.7 5 4.3 2 1.6 11.457 9.6 2 0.6 5.78372 12.9 5.47616 4.9 5 1.2 4.32862 14.7 2.5 4.3 1 4.3 3 6.4 2.5 14.4 2 4.9 3.73475 5.7 6.5 1.7 3.32436 2.6 1.5 3.8 3.92887 6.2 3.44275 0.8 1.5 8.8 1 7.3 3.5 7.6 1 4.8 2 8.2 1 1.7 2.56046 8.1 3.16056 8.8 2.71526 10.5 1.5 12.8 6 5.1 1.5 3.9 2 0.4 9.27876 1.1 1.5 1.5 2 2.9 6.1675 11.0 3.5 12.4 1.5 4.8 1.5 15.7 2.23981 16.0 3 6.7 1.5 6.6 1.5 0.5 1.5 4.4 2.5 1.3 2.5 4.7 4.0796 0.4 1.5 16.2 1 6.8 2 1.2 2.5 1.7 7.03219 0.4 14.6691 2.7 1.5 5.5 2.65478 2.1 2.92172 7.2 1 1.4 4.33723 7.7 2.5854 4.2 1.5 1.9 8 14.5 4.00604 3.4 2.08146 53"/>
<rect x="378.0" y="710.5" width="3.0" height="9.9" fill="#7cc47c" />
<line x1="459.5" y1="715.5" x2="2312.5" y2="715.5" stroke="#34283a" stroke-width="1" />
<line x1="415.0" y1="715.5" x2="428.5" y2="715.5" stroke="#8a8a8a" stroke-width="1.3" stroke-dasharray="6 1.5"/>
<line x1="470.5" y1="715.5" x2="2312.5" y2="715.5" stroke="#7cc47c" stroke-width="8" stroke-dasharray="2.5 0.4 2.17422 3.8 1 4.0 1.5 0.4 3.07105 3.8 1 4.6 1 6.4 3.16373 12.7 1.5 2.3 13.2765 31.3 5.83427 2.5 1.5 4.2 2.04572 3.4 1 11.2 1 1.8 6 4.0 1 5.8 1 8.3 1 9.2 1.75873 1.1 1.5 1.8 1 0.5 1.83843 0.7 1 2.0 1 6.6 2.5 2.7 4.49129 2.4 2 1.2 1 3.8 2 4.4 2.5 1.2 2.75391 0.6 2.5 1.3 3.06113 3.5 1 2.3 2.13147 2.2 2.5 2.0 1 3.7 1.67705 5.8 4.76517 5.1 1 1.3 3.5903 2.4 1 0.8 1 7.5 1.5 1.2 1.5 1.0 1.5 2.7 1 9.5 3.37841 4.2 1.5 5.6 2 7.9 3.86767 16.7 2 1.0 3.79607 0.8 1 3.4 2.30592 8.9 1 2.8 4.71045 25.1 2 2.8 1 2.0 1.54947 0.6 1.5 13.5 2 2.3 1.5 5.4 3.45918 5.8 4.30322 1.4 2.61145 12.7 2 2.2 2.5 0.7 1.5 2.4 1 2.6 3.82185 3.8 3.5 1.4 2 0.5 7.7805 3.2 2 0.5 1.5 3.8 8.46624 6.6 1 12.8 2.0943 1.3 1.5 5.0 1.5 3.5 3.9145 5.2 1 4.2 1.5 4.8 1.94977 3.3 1 6.3 2.5 11.4 2.5 6.6 1.5 0.7 1.2015 5.8 3.5 0.9 1 3.5 3.21041 10.9 1.5854 6.1 7.89651 1.1 2.37596 5.3 4.30687 2.8 1 4.6 1.5 4.6 3.42712 2.8 1.5 1.2 2 3.2 2.5 3.9 1 0.7 2.36981 3.2 1.5 2.3 3.49138 7.5 1 5.4 1.5 3.0 2.63795 1.7 6.39247 0.7 2.5 10.4 3.56049 6.8 1 1.9 1.5 3.8 1 0.7 1 0.9 1 9.2 2 5.6 1.5 0.6 1.5 2.9 1.05203 2.8 4.5 0.8 2.5 21.0 2 3.3 1.5 1.3 2 6.3 1.52636 5.7 3.79207 1.4 1 1.2 1 19.4 3.13205 1.6 2 10.7 2 5.5 3.5 0.6 1.85899 2.5 6.35544 8.8 1 1.1 1.5 3.1 1 0.9 1.96409 4.0 2.5 2.1 1.5 3.7 1 1.8 1.5 13.2 3.80655 4.9 2 17.1 2 9.2 1.5 2.3 1 0.6 4.45534 1.1 3.86133 0.7 1.5 5.5 2 12.2 2.50713 3.4 1 8.2 2 0.9 1.5 1.1 1 3.9 1 10.9 2 3.9 2 12.2 1.57499 4.6 1 10.7 3.5 2.4 1.5 1.6 3.02979 0.7 6.93354 1.0 1 4.3 2.5 2.8 1.5 6.2 1 4.1 1 3.7 1 13.7 1 6.2 7.52778 1.2 1 1.0 1.5 3.9 1 1.1 2.15703 0.8 1 5.1 4.08256 1.5 2.5 5.7 1.5 1.2 6.5878 15.3 7.11797 0.5 2.5 7.3 3.5 0.5 4.55078 1.6 1.07861 6.1 1 3.2 1 10.7 4.70615 3.2 5.38835 13.2 2.03485 3.9 2 4.1 4.5 17.2 4.5 6.0 2.5 8.7 6.49746 6.4 1.5 3.1 2 9.8 1.5 1.3 1.5 0.8 1.5 3.1 6 5.6 3.78218 8.0 2 3.1 2 8.2 1 2.8 1.73293 1.2 1 6.1 2 5.8 2 1.9 2 10.9 3.37894 11.2 6 3.8 2.73809 7.4 5.67925 3.8 1.5 0.6 4 5.3 1.96364 3.6 1.5 1.2 1.5 1.3 3.5 14.9 2 9.6 1.5 6.4 1 2.9 2.26732 6.2 2 5.9 1.5 0.4 1 9.4 2.5 7.3 1 12.5 5.65982 1.7 1 6.3 1 11.3 1 6.0 1.5 8.2 1.5 4.1 10.378 7.4 1 4.7 1.5 2.5 1.5 7.7 1 0.4 1 9.3 2.53781 8.1 1 6.6 1.5 2.6 1.5 3.2 2.5 4.5 5.46536 0.7 2.5 1.2 1.39769 53"/>
<rect x="378.0" y="720.4" width="3.0" height="9.9" fill="#68aa6c" />
<line x1="459.5" y1="725.3" x2="2312.5" y2="725.3" stroke="#34283a" stroke-width="1" />
<line x1="415.0" y1="725.3" x2="428.5" y2="725.3" stroke="#8a8a8a" stroke-width="1.3" stroke-dasharray="6 1.5"/>
<line x1="464.6" y1="725.3" x2="2312.5" y2="725.3" stroke="#68aa6c" stroke-width="8" stroke-dasharray="1 9.3 1 2.0 3.14752 3.1 1.5 0.7 1.5 1.0 1 9.6 1 2.4 1 18.7 2 2.0 9.49161 4.5 3.77414 1.7 2 30.9 1.5 0.4 1 2.9 2 15.6 8.69077 4.1 1.57805 8.0 2 4.1 1 9.6 1.5 1.3 1 4.5 1.74844 3.6 1.5 8.6 1 2.6 3.31355 2.3 2 1.6 1 3.0 2 9.8 1.5 1.1 6 3.3 1 2.7 3 1.3 3 23.4 1 3.1 2.45434 15.1 1.5 1.0 2 2.2 1 17.6 1.5 8.1 1.5 0.5 1.5 1.3 1 4.1 1.5 4.8 2 9.6 1.5 18.5 1.5 1.9 1 3.7 2 26.9 2.5 2.1 1.5 3.4 2 2.2 1 6.1 1 7.3 1.5 6.9 1.5 21.1 1.5 4.9 2 5.1 1.5 5.7 4.251 3.9 5 7.3 1 3.0 3.78892 6.2 2.5 2.2 2.5 13.5 2.5 5.8 1 2.1 2 4.5 1 3.7 3.7169 5.3 2 3.6 1.5 1.5 2 1.0 2.2041 2.9 1.5 12.0 3.23982 5.9 1.5 7.7 7.5 9.0 3 3.0 1.5 6.4 1 7.5 8.02296 6.3 1 0.7 3 3.1 2.24503 1.3 3 5.2 2.95972 11.9 3.5 2.8 1 0.5 3 6.7 5.69534 9.2 1 13.1 1.5 0.5 2 0.7 1.5 11.7 3.29876 6.6 1 1.8 2 0.6 3.60281 4.0 2 3.0 1 10.8 5.05064 5.8 3 8.9 2.82248 3.4 1.5 10.1 1 2.5 1 4.2 1 12.5 1.53941 5.0 2.71577 5.0 1 0.7 2 14.0 2 10.9 2 9.4 2.4003 1.1 8.34828 3.4 2.77309 10.1 2.50084 1.9 1 0.7 2 7.8 1.5 1.4 4.90439 9.6 1 5.5 1 1.7 2.10084 16.8 2 5.3 2 2.0 3.1241 1.8 5.08747 3.7 1 0.8 2 4.7 2 13.3 2 3.3 1 7.9 2 2.3 4.5 1.0 1 14.1 1 1.8 2 13.4 1 2.9 6.5 5.8 5.69029 1.1 1 14.0 1 3.8 8.67354 9.7 1.5 7.2 1.5 1.0 2.3491 13.1 4.3408 1.4 1.5 11.8 1 2.5 2 1.2 5.65259 1.4 2.5 0.8 1.5 3.7 1.5 1.2 9.58299 6.8 7 1.2 1.5 2.8 2 18.5 2.12796 9.0 1 8.9 1.5 9.0 4.5 13.8 2 9.6 6.5 8.9 1.5 5.0 7 1.3 2 12.1 5.69512 6.4 1 13.7 3.50539 3.3 2 2.9 6.5 22.4 1 12.9 5.07067 0.7 6.32436 23.3 2 10.5 1.5 7.5 2.28182 18.7 2.55628 8.8 1.5 7.1 2 0.5 2.5 22.6 1 4.8 1.5 9.7 1.5 19.5 1.5 6.2 4.1993 5.6 1 12.5 2.5 5.3 2.53827 2.9 1 10.6 1.5 7.5 6.66449 2.9 1.5 3.9 1 5.6 5.5 4.4 2.5 4.5 1 12.9 2.63635 1.9 3 1.8 1.5 1.6 2.6925 7.0 1.5 10.2 1 10.6 5.60918 0.4 2.5 1.3 1.5 53"/>
<rect x="378.0" y="730.3" width="3.0" height="9.9" fill="#74bd78" />
<line x1="459.5" y1="735.2" x2="2312.5" y2="735.2" stroke="#34283a" stroke-width="1" />
<text x="402.3" y="740.2" font-size="15.5" font-family='"Liberation Mono","DejaVu Sans Mono",monospace' fill="#8c8c8c" textLength="38.4" lengthAdjust="spacing" >CH39</text>
<line x1="475.0" y1="735.2" x2="2312.5" y2="735.2" stroke="#74bd78" stroke-width="8" stroke-dasharray="1 1.7 2 5.9 2.45003 42.3 5.5 7.7 1 17.5 1 15.9 1 4.9 2.61018 16.3 4.85236 15.8 3.07761 16.8 1 1.2 1 7.2 1.44624 8.8 2.02503 14.7 4 16.8 1 5.6 2.68193 17.8 1 13.4 1 51.5 1 2.0 3.19542 9.8 2 9.6 1.5 21.6 1.2993 3.5 1.55205 41.3 1 100.0 1 1.3 1 1.9 1.5 14.4 2.54019 8.7 2.1766 15.4 1 14.5 1 3.2 1 12.6 2.09155 2.8 1 29.2 2 45.2 2 7.9 1 18.8 1 21.1 1.5 2.3 1 12.9 1 3.9 1 22.4 1.51892 1.6 1 1.0 3.14282 4.7 2 12.6 1 0.7 3.32572 25.8 1 10.6 1 37.2 3 12.8 1 27.1 1 10.6 2.85596 14.2 1 0.5 2 13.2 1.5 16.1 2.37097 31.7 1.5 4.0 4 4.2 1 8.2 1 1.0 1 17.1 1 2.8 1 1.0 1.5 6.1 3 2.3 1 13.9 1 10.8 1 10.0 5 53.2 1.5 6.0 1 2.2 2 16.5 1 0.7 1 11.6 2 2.3 1 3.3 3.5 2.4 2.85694 5.8 1 1.7 3 6.2 3 30.7 2 15.0 1.53635 1.6 1 4.0 1.5 0.5 1 84.1 4 16.7 1 16.5 4.5 19.8 1.5 1.0 1 0.9 1 15.8 1 30.8 1 42.4 1 78.1 3 3.5 1 10.5 1 15.2 1 10.0 2.93746 2.8 1 46.4 1.5 22.8 1 4.5 1 4.1 1 1.8 1 1.5 1 36.1 2 56"/>
<rect x="378.0" y="740.1" width="3.0" height="9.9" fill="#6fb674" />
<line x1="459.5" y1="745.1" x2="2312.5" y2="745.1" stroke="#34283a" stroke-width="1" />
<line x1="415.0" y1="745.1" x2="428.5" y2="745.1" stroke="#8a8a8a" stroke-width="1.3" stroke-dasharray="6 1.5"/>
<line x1="506.0" y1="745.1" x2="2312.5" y2="745.1" stroke="#6fb674" stroke-width="8" stroke-dasharray="1 23.4 4.5 111.7 1.5 20.9 1.5 40.2 1 32.5 1 54.4 2.5 5.6 1 38.4 2.74801 2.7 1.5 154.4 1 20.3 1 15.8 1 31.9 1 4.1 1 76.1 2.5 0.8 1 99.6 1 4.5 3.24037 2.2 5.5 5.3 1 7.7 1 60.3 1 29.4 1 34.7 1.71841 32.2 2 54.7 3 29.6 1 10.3 1.5 6.0 3 45.7 1 2.2 4 1.2 1 43.0 1.5 5.8 1 8.4 1.5 56.5 2.5 1.2 1 50.1 1 7.9 1.79444 5.7 1 13.8 1.5 11.2 2.5 68.7 1 41.3 1.5 0.9 1 15.8 1.5 3.5 1 14.1 1.5 10.7 1.5 27.8 1.5 13.9 1 22.1 1 40.7 1 29.5 4.5 24.5 1 4.3 1 24.8 1.5 27.1 1.5 40.2 1 27.6 1.5 57"/>
<rect x="378.0" y="750.0" width="3.0" height="9.9" fill="#86d488" />
<line x1="459.5" y1="754.9" x2="2312.5" y2="754.9" stroke="#34283a" stroke-width="1" />
<line x1="415.0" y1="754.9" x2="428.5" y2="754.9" stroke="#8a8a8a" stroke-width="1.3" stroke-dasharray="6 1.5"/>
<line x1="496.6" y1="754.9" x2="2312.5" y2="754.9" stroke="#86d488" stroke-width="8" stroke-dasharray="1 171.3 1.5 1.4 1 116.4 4 54.7 1.5 143.0 1 14.3 1 37.6 1 3.2 1 27.7 1 81.1 2 39.1 1.5 2.7 1.5 20.8 1 41.4 1 3.9 5.5 5.7 1 7.5 1 90.8 1.5 2.6 1 211.7 1 11.5 3 46.4 1.5 73.4 2 94.2 1 9.7 1 230.5 1.5 52.8 1 9.7 5 30.6 1.5 8.5 2.5 170"/>
<rect x="378.0" y="759.9" width="3.0" height="9.9" fill="#7cc47c" />
<line x1="459.5" y1="764.8" x2="2312.5" y2="764.8" stroke="#34283a" stroke-width="1" />
<line x1="415.0" y1="764.8" x2="428.5" y2="764.8" stroke="#8a8a8a" stroke-width="1.3" stroke-dasharray="6 1.5"/>
<line x1="496.4" y1="764.8" x2="2312.5" y2="764.8" stroke="#7cc47c" stroke-width="8" stroke-dasharray="1 160.4 1.5 12.7 1 31.1 2.5 141.2 1.5 1.3 1 139.6 1.5 30.6 2.5 20.4 1 27.8 2.5 1.3 1 110.5 1 10.1 1 62.2 1 5.2 1 25.7 1 72.2 1.5 4.4 1 9.6 1.5 2.8 1 32.2 1 27.7 1 90.5 1 2.0 1 37.3 1 29.7 3.5 45.5 1 26.0 1 70.4 1.5 71.5 1 2.6 1 6.1 1 98.0 3 129.6 1.5 96.5 1 1.6 1.5 66.4 1.5 113"/>
<rect x="378.0" y="769.7" width="3.0" height="9.9" fill="#74bd78" />
<line x1="459.5" y1="774.7" x2="2312.5" y2="774.7" stroke="#34283a" stroke-width="1" />
<line x1="415.0" y1="774.7" x2="428.5" y2="774.7" stroke="#8a8a8a" stroke-width="1.3" stroke-dasharray="6 1.5"/>
<line x1="564.5" y1="774.7" x2="2312.5" y2="774.7" stroke="#74bd78" stroke-width="8" stroke-dasharray="2 75.0 1 29.5 1 31.2 4.1845 217.3 2 25.8 2 216.9 2 90.3 1.5 59.4 4 41.2 1.5 4.3 1 47.6 1 118.5 1 32.0 1 7.5 1 63.4 4 11.8 1.5 25.6 1 75.5 1.5 69.6 1 6.0 1 98.0 2.5 153.3 1.5 128.8 1 13.9 2 112"/>
<rect x="378.0" y="779.6" width="3.0" height="9.9" fill="#80cc82" />
<line x1="459.5" y1="784.5" x2="2312.5" y2="784.5" stroke="#34283a" stroke-width="1" />
<line x1="415.0" y1="784.5" x2="428.5" y2="784.5" stroke="#8a8a8a" stroke-width="1.3" stroke-dasharray="6 1.5"/>
<line x1="525.9" y1="784.5" x2="2312.5" y2="784.5" stroke="#80cc82" stroke-width="8" stroke-dasharray="2 77.9 1.5 34.1 1 46.8 1 13.9 2.5 36.1 1 2.6 1 50.6 1 49.1 1.5 0.9 1 43.8 1.5 19.4 1 125.8 1.5 31.0 1.5 113.6 1 9.8 1 74.1 5 26.5 2 16.1 4.5 46.1 1 47.6 1 28.9 1 64.7 1 22.9 1 31.5 1.92984 65.4 1.5 31.6 1 162.3 1 70.8 1 33.4 3 129.8 1 17.8 1 148.3 1.5 26.8 1 85"/>
<rect x="378.0" y="789.5" width="3.0" height="9.9" fill="#6fb674" />
<line x1="459.5" y1="794.4" x2="2312.5" y2="794.4" stroke="#34283a" stroke-width="1" />
<line x1="415.0" y1="794.4" x2="428.5" y2="794.4" stroke="#8a8a8a" stroke-width="1.3" stroke-dasharray="6 1.5"/>
<line x1="477.5" y1="794.4" x2="2312.5" y2="794.4" stroke="#6fb674" stroke-width="8" stroke-dasharray="1 47.3 2.5 100.5 1.5 23.0 1.5 49.1 2.5 40.1 1 135.8 1 5.0 1 4.8 1.5 19.0 1 3.5 1 56.7 1 18.5 1 44.4 1.5 14.6 1 14.8 1.5 92.8 3 3.4 1 14.6 1.5 22.6 2 43.5 1 19.1 2.5 37.7 1 21.4 1 9.6 1 99.8 1 64.9 1 22.0 2 1.5 1 29.7 1 39.1 1.5 33.0 1.5 38.4 4 59.5 1 54.4 1 28.5 1 4.5 2.5 16.1 1.5 37.2 2.0867 41.2 3.5 38.9 2.5 67.2 3.5 17.6 1 2.6 1 9.7 1 3.1 1 21.5 2.5 21.0 1 87.9 1 46.6 1 20.3 1 59"/>
<rect x="378.0" y="799.4" width="3.0" height="9.9" fill="#74bd78" />
<line x1="459.5" y1="804.3" x2="2312.5" y2="804.3" stroke="#34283a" stroke-width="1" />
<line x1="415.0" y1="804.3" x2="428.5" y2="804.3" stroke="#8a8a8a" stroke-width="1.3" stroke-dasharray="6 1.5"/>
<line x1="494.3" y1="804.3" x2="2312.5" y2="804.3" stroke="#74bd78" stroke-width="8" stroke-dasharray="5 26.5 2.5 10.8 2 4.0 1 82.4 1.5 16.0 3 4.8 1.5 17.0 1 19.0 1 6.7 2.7961 4.0 1.5 38.1 1 28.5 1 62.8 1 0.5 1 47.6 1 7.1 1 18.3 1 2.1 1 15.9 1 31.7 1 5.2 1 0.9 1 18.8 1 2.2 1 7.6 1 1.0 1 30.0 1.5 16.4 1 8.0 4.5 1.7 3 26.2 1 9.9 1.5 45.1 1.5 8.9 2.5 9.0 1 4.9 1 7.3 1 1.4 1 34.1 1 24.1 1 18.6 2 19.2 1 20.1 1 19.6 1 9.4 1 75.3 1 14.1 4 3.0 2 19.7 1 2.0 1 6.8 1 1.3 1.51528 32.0 1 8.3 1 12.5 1.5 19.6 1 12.4 1 6.9 4 21.3 1.5 12.9 1 7.8 1.5 10.0 2.5 12.6 1.5 29.9 3 9.7 1 15.5 1.5 24.6 1 7.8 1 12.2 2 18.0 1 17.6 2 1.4 1 1.0 1 6.4 2.11798 1.1 1.5 20.2 3 39.2 1 11.2 1 2.4 1.5 7.4 1 15.3 4 14.1 3 21.0 1 14.4 1.5 0.9 1 39.0 1 15.6 1 7.5 1.5 3.2 3 41.3 1.5 88.2 5 22.3 1.0642 11.9 1 45.5 2 20.6 1 59"/>
<rect x="378.0" y="809.2" width="3.0" height="9.9" fill="#6aae6e" />
<line x1="459.5" y1="814.2" x2="2312.5" y2="814.2" stroke="#34283a" stroke-width="1" />
<line x1="415.0" y1="814.2" x2="428.5" y2="814.2" stroke="#8a8a8a" stroke-width="1.3" stroke-dasharray="6 1.5"/>
<line x1="479.2" y1="814.2" x2="2312.5" y2="814.2" stroke="#6aae6e" stroke-width="8" stroke-dasharray="1 9.8 1 3.4 5 3.8 1 21.7 3 3.7 5 7.5 1 1.6 1 4.4 1 4.3 1 4.9 1 2.0 1 24.7 2 58.6 1 6.8 1 19.6 2 7.6 2.14046 7.3 1.5 11.6 1 32.2 1 20.9 1 32.9 2 10.9 1 17.4 2.00733 4.6 1 17.3 1 3.1 1 19.8 2.02128 3.0 1 7.4 1 9.3 2 7.1 1 19.1 1 3.1 1 1.8 1 5.2 1 6.2 1 2.6 1 7.8 1 26.6 1 3.3 1 1.6 1 2.8 2.35621 1.1 1 30.0 1 31.8 3.42069 38.1 2 34.9 1 2.7 4.5 0.7 1.5 10.5 1 8.5 1 5.0 1 6.9 1 1.8 1 26.8 1 6.4 1 23.6 1 18.9 2.5 6.8 1 10.2 1.89181 20.3 1 1.5 1.5 16.1 1 9.3 1 6.6 1 1.9 1 2.6 1 12.2 1 33.3 1.5 13.5 1 21.1 2 28.9 2.52175 14.2 1 11.2 1 11.2 1 3.5 1.87526 12.9 2 18.7 1 12.3 1 0.7 1 5.4 5 19.8 1.5 6.3 1.5 5.5 1 7.7 1.5 10.3 2 13.0 1 19.4 2 9.0 3 7.8 2.6151 2.9 2 11.2 2 23.7 1.86599 6.8 1 5.6 1.55788 0.7 1.5 2.9 1.5 22.6 1 13.4 1.5 11.4 2.33861 1.0 1.5 35.3 2 18.2 1 8.7 1 12.1 1.5 6.9 1 6.4 1.5 7.7 3.5 2.8 1.0213 49.8 1.5 0.9 1 28.4 1 1.9 1.5 19.5 3 7.8 1 0.5 1.5 46.9 1 2.6 1.61489 37.0 2 21.5 1.5 36.1 1 12.9 3.6927 56.2 1.5 8.1 1 72"/>
<rect x="378.0" y="819.1" width="3.0" height="9.9" fill="#7cc47c" />
<line x1="459.5" y1="824.0" x2="2312.5" y2="824.0" stroke="#34283a" stroke-width="1" />
<line x1="415.0" y1="824.0" x2="428.5" y2="824.0" stroke="#8a8a8a" stroke-width="1.3" stroke-dasharray="6 1.5"/>
<line x1="463.2" y1="824.0" x2="2312.5" y2="824.0" stroke="#7cc47c" stroke-width="8" stroke-dasharray="1 5.8 1 19.2 1 1.8 5.75859 16.4 1 28.3 1.53933 6.8 2.52536 3.5 1 4.4 1 10.5 1 9.6 1 5.8 2.5 9.6 1 31.7 1.5 14.4 1.5 8.0 1 18.2 2.60849 7.9 1 19.5 1 10.6 1 20.6 2 6.0 2.23925 22.2 1 6.2 1 47.1 2.13852 4.4 1 4.2 1.5 11.6 1.42319 6.7 4 18.1 1 17.8 2 7.2 1 9.2 1 1.3 1.5 10.1 1 18.9 1 7.1 1 3.5 1 6.6 1.18808 1.7 5.5 11.4 2.5 7.6 1 30.3 1 10.0 1 9.4 2 3.5 4 1.8 2.5 8.6 1 66.4 1 27.0 1.5 7.6 1 19.7 1.5 12.7 1 9.2 1 23.9 1 14.9 1.5 11.0 3 8.9 1.57115 0.5 1.5 17.0 2 19.8 1 15.6 2.13693 5.6 1.5 6.9 2 2.5 1 1.8 1 1.0 1.5 5.4 2 35.7 1 19.0 1.51761 0.7 1.5 16.8 1 8.9 1 1.4 2.70631 14.0 1 20.9 1 0.7 3 2.2 1.5 13.3 1 6.4 1 8.0 1 3.7 1 13.7 1.5 4.8 4 9.2 2.5 9.4 1.5 13.5 1 7.8 1.5 25.8 1 26.5 3 7.2 1 2.4 1.5 0.6 1 2.7 2.98528 1.6 1 7.6 1.5 10.1 1 12.2 2 13.9 1 1.8 1.5 27.0 1 26.5 2.0177 1.0 1.5 48.1 2.5 14.5 2 0.6 1.5 8.8 1.5 7.0 1 8.5 1 5.6 1 5.2 2.35895 20.6 1 10.7 1.5 2.7 1 12.1 1 1.1 1 2.5 1.5 24.1 1 1.9 1.5 14.4 1 1.3 2 12.4 1 25.4 1 19.5 1 38.7 1 2.0 1 1.4 2.5 2.8 1 17.4 1.5 17.6 1 17.5 1 9.1 1 41.8 1.5 1.9 1 6.5 1.5 18.1 1 14.3 3 54"/>
<rect x="378.0" y="829.0" width="3.0" height="9.9" fill="#6fb674" />
<line x1="459.5" y1="833.9" x2="2312.5" y2="833.9" stroke="#34283a" stroke-width="1" />
<text x="402.3" y="838.9" font-size="15.5" font-family='"Liberation Mono","DejaVu Sans Mono",monospace' fill="#8c8c8c" textLength="38.4" lengthAdjust="spacing" >CH19</text>
<line x1="463.3" y1="833.9" x2="2312.5" y2="833.9" stroke="#6fb674" stroke-width="8" stroke-dasharray="1 5.8 1 11.3 1.5 2.2 1.5 2.1 1 1.9 3.3432 19.4 1.5 5.1 1.5 21.2 1 8.1 1.5 3.3 1 4.4 1 2.6 4.5 2.0 1 1.2 1 1.4 1.5 6.7 1 2.8 1.5 13.7 1 17.5 1 0.7 1.5 5.1 2.5 8.4 1.5 2.0 2.93245 3.1 1 9.1 1.56569 16.5 2.90053 3.8 1.5 3.2 1 4.5 3 4.2 3.5 5.0 1 10.1 1.80559 19.7 3.55904 4.8 1 4.0 1 8.0 1 8.7 4.5 7.3 1 11.4 2 6.4 1 1.2 1 7.1 1 2.2 1.5 6.9 4.30114 3.7 1 12.5 1.5 7.4 1.5 4.1 2.82173 1.4 1 10.8 1 3.7 1 0.7 4.5 4.0 2.5 11.5 1 12.8 1.08843 15.5 1 8.9 1.5 6.1 1 11.2 1 11.9 1 2.7 1 20.3 1 11.3 1 26.8 1 1.1 1 8.6 2.24888 3.9 4 2.2 3 7.9 1 8.1 1.5 34.2 1 17.9 1.5 0.8 2.0553 8.5 1 17.3 3.57596 9.1 1.5 9.5 1 1.0 1 3.8 1.5 2.7 1 6.7 1 4.1 1 6.1 1 15.5 1 4.3 1 2.0 1 4.3 1 9.7 2 8.4 1.5 0.8 1 5.0 3 9.8 1 3.9 1 7.4 2 6.0 1 4.7 5.29945 2.5 1 17.4 1 1.1 1.53864 2.8 1 11.9 1.77777 0.9 1 0.7 1.5 5.8 2 2.4 1.76289 31.3 1 19.0 1.92025 0.7 1.5 6.3 3.0794 11.6 1 7.5 1 19.2 1.70378 0.9 1 6.2 1 2.4 2.34348 2.9 1 0.4 3 15.2 2.77444 14.9 1 15.0 1 3.9 1 9.5 1 6.5 3.5 8.6 1.5 18.9 1.5 0.4 2.51327 9.9 1.9109 2.2 1.5 18.8 1 9.1 3.25089 1.4 3 13.7 3.56916 3.6 2.58744 2.3 1 3.7 1 3.0 1 3.8 4.5 16.3 1 5.6 1 7.2 1 30.2 3.5 3.4 1.5 2.6 1 5.2 1 2.8 1.5 0.9 5.5 2.6 1 61.6 5.1153 0.5 1.5 4.7 1 3.4 1 12.9 1.89341 1.9 1 12.0 4.19616 0.8 1 2.2 2 5.2 1 5.5 2.20853 11.1 2.22992 1.8 1 11.7 1.5 1.1 1 15.2 1 11.9 1 8.6 1.5 7.5 1 4.0 3 14.2 1 19.8 1 7.0 1.92676 5.6 1 3.5 1 6.2 1 32.0 1 2.0 1 6.7 3.85455 9.9 2 2.5 1.5 6.0 1 10.9 1 15.9 1 30.3 2 2.0 1.5 9.1 2 2.7 1 5.6 1 6.5 1 3.2 1 2.2 1.5 1.9 1 4.3 1 3.1 1 5.4 1 3.7 1.5 60"/>
<rect x="378.0" y="838.8" width="3.0" height="9.9" fill="#80cc82" />
<line x1="459.5" y1="843.8" x2="2312.5" y2="843.8" stroke="#34283a" stroke-width="1" />
<line x1="415.0" y1="843.8" x2="428.5" y2="843.8" stroke="#8a8a8a" stroke-width="1.3" stroke-dasharray="6 1.5"/>
<line x1="463.1" y1="843.8" x2="2312.5" y2="843.8" stroke="#80cc82" stroke-width="8" stroke-dasharray="1 6.7 2 7.2 1 0.9 1.5 9.3 3.95552 10.7 1.5 13.3 1 30.5 1.95189 8.5 1 2.0 6.5 2.4 1.65652 13.0 1.5 13.2 1 14.0 1 4.3 1.5 5.1 1 12.3 4.26997 13.6 1 10.4 1.5 6.2 2.53496 2.9 1.5 30.3 1 16.4 1 9.0 3.07643 15.0 1.5 2.1 1.09325 8.9 6 4.7 2 11.1 2.5 11.5 1 6.7 2 0.8 2.5 3.7 2.13274 4.6 1.6886 2.9 1.5 5.3 4.32962 3.4 1 3.8 2 2.4 4.1643 1.3 1 10.3 1 5.3 6 2.5 2.5 7.0 1 9.8 1 2.4 1 7.6 1 1.8 2.39682 15.0 3.78619 4.9 1.06893 1.8 1 8.6 1 5.8 1 2.9 4.41766 1.4 3 23.9 1.5 5.8 1 6.3 1 5.1 2.54335 11.9 1 0.8 2.25107 7.9 2.3344 1.2 11.6252 7.5 1 7.9 1.5 7.8 1 8.0 6 8.4 3 1.4 1 16.4 3.17172 9.7 1.5 18.1 1.5 7.2 1 13.0 1 9.4 1 9.7 1 8.2 1 12.9 1 2.2 1.23955 11.8 1 19.9 1.5 1.6 1 4.9 3 8.5 1.5 26.4 6.64321 1.4 1 15.1 1.5 2.9 1 3.5 2 20.6 1 0.8 1.5 3.9 1.85658 21.6 1 10.5 1 17.0 1.5 8.1 3.5 0.8 1.5 4.6 1 1.0 1.5 2.7 1.5 1.7 1 2.7 1 17.0 1.5 0.8 1 0.8 1 2.7 1.5 2.3 1 2.1 2.9359 0.4 1.5 1.9 3.2223 2.1 1 12.0 2 6.5 1.5 3.4 2.5 2.6 1 6.3 2.5 3.7 2.26434 4.4 1.98342 4.3 2 21.6 1.5 0.7 1 1.6 1 14.9 4.94338 9.8 1 11.7 1 2.6 1 6.8 1 4.5 1.5 3.0 1 3.9 1.5 14.8 1.5 6.1 2.10295 0.9 1 5.0 1.91643 18.8 1.5 4.4 1 2.7 1.5 2.6 1 5.1 6.36513 4.5 1.35176 7.3 6 6.5 1 2.3 1 8.1 2.72996 5.3 1 1.8 2.51411 1.0 8.59742 13.6 4 28.6 4 1.7 1 9.4 5.5 5.8 1 12.5 1 6.0 1.5 0.5 1 14.8 2 10.3 1 5.8 1.82002 11.5 1.5 4.8 3.62928 9.0 3.57958 23.8 1 0.6 1 8.9 1.5 7.1 1 4.6 4 7.0 2 4.1 1.5 19.4 2.37569 5.5 1 6.1 1 4.2 1.5 5.5 1 10.2 1.5 11.9 2.62857 5.7 2.38777 9.0 2.5 10.3 2.5 10.0 1 37.1 5.81631 16.0 2.5 1.3 1.5 9.9 1 11.4 1 3.0 1 8.2 2.05023 1.2 1 4.6 1 2.7 1 5.2 1 9.2 3.5 53"/>
<rect x="378.0" y="848.7" width="3.0" height="9.9" fill="#9ce89c" />
<line x1="459.5" y1="853.6" x2="2312.5" y2="853.6" stroke="#34283a" stroke-width="1" />
<line x1="415.0" y1="853.6" x2="428.5" y2="853.6" stroke="#8a8a8a" stroke-width="1.3" stroke-dasharray="6 1.5"/>
<line x1="470.8" y1="853.6" x2="2312.5" y2="853.6" stroke="#9ce89c" stroke-width="8" stroke-dasharray="2.5 3.3 1 2.5 1 3.7 1.5 6.3 2 9.0 1 2.6 2 11.2 3.37004 12.4 3.18956 14.2 3 2.2 1.5 6.7 7 16.5 2 0.7 1.5 8.8 1 0.9 1.5 8.6 4 26.1 4.51866 26.4 2 6.1 1.5 1.9 2 57.0 2.84191 15.1 2 2.1 1.5 8.1 6.5 2.7 2.84003 3.5 1.5 6.8 3.5 10.4 4.65826 1.1 1.5 0.7 1.5 1.1 2.5 4.3 2.8787 2.2 3.03125 0.7 2 1.3 1.5 0.6 2.5 1.1 6.5 5.9 9.56411 12.4 16.8547 6.6 1 0.5 1.5 8.1 1 2.5 1.5 2.4 2.23389 2.1 2.69921 1.3 1 8.7 10.4961 4.7 1 2.0 1 15.1 1 3.2 1.5 1.1 1.5 2.0 2.5 4.2 1.5 13.1 1.5 18.5 1 4.9 2.31889 13.8 1 5.8 3.5 6.1 1 34.2 1 10.1 2 4.3 1.5 1.5 1 1.0 4.70662 2.0 1.5 15.1 1.5 30.5 2 13.1 1 5.9 1 8.9 1.87815 7.0 1.5 1.1 1.5 25.5 1.5 7.8 2 8.8 5.76011 1.7 2 3.2 1 5.5 1 2.0 3.5 7.0 5 3.0 3.01248 11.4 3.5 3.6 7.01549 16.6 2 1.3 1.86129 1.7 4.45464 11.5 3.29218 7.4 2 4.3 1 14.7 1 5.7 3.68759 7.8 1.5 12.5 1.5 1.2 3.31448 7.6 4.5 4.3 1.5 4.9 2.86273 5.3 2 6.1 4 6.5 2 2.2 1 5.5 2.5 2.3 2.64698 2.5 1 4.5 1.5 3.0 3.5 3.0 1 9.5 2 8.5 3.28717 4.0 2.78517 3.1 1 27.8 1 8.6 1 2.2 1 8.1 2 2.7 6.34273 44.1 1.5 3.8 2 5.4 2 3.9 1.5 5.4 2 4.8 1 3.2 4.50645 13.9 1.5 5.4 1 1.0 2.63241 2.2 2 0.7 2 2.4 2 11.8 1.78107 7.0 6.5 5.9 1 11.1 2.5 6.2 1.5 1.3 2.22127 0.7 7 0.9 1 0.9 1.5 22.7 2 1.0 1 16.7 4.5 1.4 1 9.3 6.5 0.4 1 3.7 3.24227 1.3 4 2.8 1.5 0.9 1 1.3 1 3.6 2 3.6 2.5 3.3 2.5 12.8 1.5 1.7 1 5.5 2.73015 1.0 1.5 4.5 1 1.0 4.80734 17.0 1 10.6 1.5 7.5 1.5 16.0 3.22035 5.2 1 15.0 1.5 5.3 1.5 11.8 1.5 5.8 1 0.6 2 16.4 1.5 13.9 5 8.8 5.77386 5.0 3.3121 16.7 2.5 1.3 2 4.9 2 9.2 1 7.3 4.35744 5.5 2 12.9 6.7803 13.4 9.19994 6.8 2.5 9.4 1.5 3.9 1 11.7 1.5 3.3 1.5 2.7 1 5.1 1 6.1 2 2.2 1 54"/>
<rect x="378.0" y="858.6" width="3.0" height="9.9" fill="#5f9f62" />
<line x1="459.5" y1="863.5" x2="2312.5" y2="863.5" stroke="#34283a" stroke-width="1" />
<line x1="415.0" y1="863.5" x2="428.5" y2="863.5" stroke="#8a8a8a" stroke-width="1.3" stroke-dasharray="6 1.5"/>
<line x1="463.4" y1="863.5" x2="2312.5" y2="863.5" stroke="#5f9f62" stroke-width="8" stroke-dasharray="1 6.2 2 2.5 1 0.5 1 10.6 2 2.5 1.5 0.5 1 3.2 2 12.5 2.0941 6.9 1 12.5 1 1.2 1 20.1 1.5 3.1 1 0.5 1 0.8 6.91706 14.4 1 1.3 1.5 0.9 1.5 6.8 1.5 1.7 2.59489 8.5 3.5 22.3 2.12953 9.8 2.88471 12.5 1 2.6 1.5 10.4 1 2.6 2 12.6 1 10.0 5.5 28.0 2 3.4 1.5 11.6 1.5 19.9 3.5 3.6 1.5 11.4 2 8.4 5.49039 2.5 1 7.1 1 8.3 1.5 19.5 7.23969 0.6 1 2.5 1.29042 9.1 5.18756 5.3 6.21412 8.1 2.15336 8.2 1.91227 0.9 2.61824 1.7 1.85089 2.8 1 8.1 2.5 8.0 2.86942 9.1 1 22.3 1 31.9 2.5 7.5 1.5 4.3 5 29.4 1 13.4 1 4.7 6.68701 5.0 3 3.8 1 3.9 4.13487 5.1 1 1.6 2.65072 2.9 1 7.5 1 42.1 1.9991 2.7 5.48166 8.6 1 1.5 1 11.1 1 6.5 1.5 1.5 1 17.8 1 7.7 1.5 9.8 1.5 6.9 5.5 1.7 2 3.2 1 5.5 1 2.3 3 7.9 5.5 2.4 1 1.1 1 8.0 2 9.5 1 8.8 1 1.3 1 12.0 1 6.1 1 11.9 2.5 4.5 1 2.4 2.5 8.1 1 10.8 1 2.3 1 3.1 2.80656 9.6 1 11.0 1 3.4 1.5 10.9 1.5 5.6 1 3.7 3.35029 1.3 2 20.3 2.5 8.2 2 2.9 1.5 1.4 1.5 1.1 1 8.8 3.5 2.9 1 9.4 1.5 10.8 2.32727 7.4 1.5 29.0 1.97744 5.8 1.5 0.4 1 3.5 1 0.7 1 13.5 2 5.2 1.5 17.6 1 10.8 4.5 4.2 1 0.5 1.5 0.9 2.59545 1.1 1 4.3 1.5 22.6 1.5 0.5 2.05593 2.0 3.22822 8.3 1 1.3 2 2.7 1 4.1 3.20197 1.8 3 0.7 2 6.1 1.5 4.5 2.37843 18.6 1 22.4 1 1.0 6.96969 4.0 1.5 8.7 1 10.7 1 1.4 1.5 19.2 3.5 0.5 2.86666 1.3 6.48929 1.5 4 6.0 3 5.1 1 3.5 1 3.7 1 9.6 2.67068 2.5 3.96292 11.5 1 2.0 1.9557 5.2 4.70531 4.5 1.05637 3.4 1 1.0 1 10.0 1 17.3 1 3.7 1 16.4 1 3.1 1.5 13.4 1 28.0 2.26584 28.3 4.5 19.6 1.5 5.2 1 1.0 2 0.8 1.5 0.8 2.10898 17.4 2.5 1.6 2 15.8 1 7.1 4.26654 6.0 1.5 13.4 5.85518 14.4 6.52338 3.3 1 16.7 1 3.0 1 28.7 1 6.2 2 2.0 1 54"/>
<rect x="378.0" y="868.4" width="3.0" height="9.9" fill="#86d488" />
<line x1="459.5" y1="873.4" x2="2312.5" y2="873.4" stroke="#34283a" stroke-width="1" />
<line x1="415.0" y1="873.4" x2="428.5" y2="873.4" stroke="#8a8a8a" stroke-width="1.3" stroke-dasharray="6 1.5"/>
<line x1="476.5" y1="873.4" x2="2312.5" y2="873.4" stroke="#86d488" stroke-width="8" stroke-dasharray="2 10.1 2 3.7 1.22567 5.1 2.5 4.9 2 3.0 2.42121 20.8 1 1.0 1 6.8 1 2.7 1.5 3.1 1 8.8 1.93285 1.4 1 19.7 1 3.8 1 11.1 2.5 3.9 4 0.4 1.5 5.4 2 3.5 1 11.9 2.52806 5.7 1 2.8 1.5 11.3 1.5 19.2 3.22368 1.6 2.5 8.0 1 0.6 1 8.6 6 6.8 1 21.1 1 2.7 1.5 3.6 3.71433 4.2 2 13.6 1.5 6.5 1.5 3.3 1.5 11.2 2.74337 5.3 7.22272 0.4 1 2.4 1 2.5 1.5 3.3 2 0.9 5.5 1.0 1.5 1.5 2 7.3 1 14.9 1.36116 13.2 6 4.7 1 3.3 1.5 0.9 1.5 5.8 2.43421 4.5 1 2.4 1 2.8 2 5.8 1 11.2 2 5.7 2.62653 9.3 2.96898 17.0 1.5 1.3 1 10.3 1 0.6 2.39346 7.9 1 8.8 2.5 11.5 7.28673 8.5 1 2.9 3 7.4 2.17472 4.1 1 3.7 1 5.6 1 6.0 2.5 0.6 1 3.5 1 5.4 3 3.3 1 6.6 1.5 4.8 1 3.9 1 2.3 1 29.2 1 3.7 1 5.5 2.5 1.2 1 6.6 1 0.8 1 1.0 6 1.7 1.5 9.7 1 6.8 1 0.8 1 6.6 1.5 8.9 1 12.1 2 4.6 2 3.3 1 6.2 1 1.3 1.5 4.2 6 1.3 1.5 1.4 1 1.2 1 5.3 1 2.3 2.5 7.7 6.10571 14.0 1.5 4.7 1 2.1 7.27846 7.0 1 3.9 1 4.0 1.5 8.6 1 11.5 2.5 4.8 1 15.8 1 5.9 1 0.9 1 4.1 1 3.3 1 9.8 1 6.4 1 1.0 1 3.2 1.5 3.7 1 0.5 5.5 2.3 2.15689 5.1 2.5 0.5 1 1.3 1.6432 2.0 2.9429 2.3 2 11.2 1.45867 2.8 1 7.3 1 2.0 2.5 5.6 1 5.1 1 3.4 1 1.0 1 4.4 1 7.6 1 6.0 1.5 15.6 2.16998 18.7 1 8.4 2.60817 12.3 1 0.5 2.29491 1.9 1.5 9.1 1.62152 1.5 1 2.4 2.44207 15.1 1 12.5 5.5 3.1 3.26166 0.4 1 0.7 2.56353 4.4 2 24.1 2.02673 2.2 1.4032 10.2 1 1.2 2.5 7.8 2 2.5 3 1.5 1 4.6 1 0.8 1 5.1 3.81305 9.6 1 16.7 1 8.7 2 1.9 1 0.6 7.41982 0.9 1 17.1 2 4.1 1 6.5 1.5 7.1 1 7.3 1 2.7 2 1.9 2 1.8 3.5 0.5 4 21.0 1.24786 1.2 1 9.7 2.00884 2.8 4.23958 3.1 1 5.7 2.65613 1.9 1.6982 5.7 1 1.7 1.5 5.1 1.18179 5.0 1 22.9 2.5 3.3 1 1.7 1 0.6 1 0.6 1.89009 6.1 1 1.9 3 6.1 1.5 13.7 1 4.9 1 4.8 1 8.1 2 3.5 1 1.2 1 30.1 1 3.7 1 18.5 2 4.6 1 3.7 1 1.2 5.2496 6.6 1 6.5 3.29662 18.6 1 1.6 1 4.5 3 7.2 1.5 4.3 1 5.4 1 6.5 2.0251 1.7 1.5 1.4 1.5 3.3 1 2.1 8.10042 2.5 1 2.2 1 13.8 1 3.2 1.30206 26.4 1 0.6 1 0.9 2 2.7 1.5 58"/>
<rect x="378.0" y="878.3" width="3.0" height="9.9" fill="#6aae6e" />
<line x1="459.5" y1="883.2" x2="2312.5" y2="883.2" stroke="#34283a" stroke-width="1" />
<line x1="415.0" y1="883.2" x2="428.5" y2="883.2" stroke="#8a8a8a" stroke-width="1.3" stroke-dasharray="6 1.5"/>
<line x1="465.1" y1="883.2" x2="2312.5" y2="883.2" stroke="#6aae6e" stroke-width="8" stroke-dasharray="1 13.7 1.5 5.9 1 5.3 1 6.1 3.48057 3.7 1.5 2.3 4 1.2 1 3.1 2.5 7.2 1 6.7 1 10.5 2 2.6 1 8.7 1.71535 6.7 1 9.0 1 4.3 1.6069 3.7 1.5 11.2 2 4.2 4 1.0 1.5 9.6 1.1612 12.1 1.97132 6.2 1 0.7 1 4.1 1 8.9 1.5 18.1 1.5 1.8 1 4.7 1 6.4 1 7.7 1 3.4 1 6.1 1 2.8 1.5479 0.4 6.55182 10.2 1 6.0 2.10301 6.4 2 2.5 1.5 5.4 1 8.0 1.5 6.2 1.5 2.7 2 11.9 2.2876 4.0 6.64064 17.2 4.5 1.4 2 1.1 1 9.9 1 11.0 1.5 8.8 1 3.7 1 4.5 2 23.6 2 11.6 5.01163 7.3 2 9.5 2.86726 0.7 1 7.6 2.55056 33.0 2.87617 7.0 1 1.0 1 0.6 1.61426 5.1 2.5 6.7 1 3.9 4.28397 11.1 1 7.7 1 4.7 1.5 4.8 1 17.0 2 5.9 1 19.2 1.53506 9.9 1 9.8 1.5 0.8 2 7.4 2.5 12.7 1 5.9 2.87753 5.5 1 2.0 2.73242 4.6 1 14.3 1 8.9 1.5 5.6 2 8.1 1 9.4 2 1.1 2.5 19.1 1.5 7.2 1 2.7 1 24.2 5.4413 2.3 3.0264 3.6 1 10.6 1.37127 3.9 4.53316 7.9 1 3.9 1 6.1 1.5 9.9 1 15.3 1 15.7 1 12.7 1.26312 3.2 1 4.1 1.5 4.2 1 8.4 1 9.3 2.35307 0.5 1 4.3 1.5 0.4 1 10.3 1 3.0 1.64078 3.0 2 15.7 1 24.2 1 5.0 2.66421 0.7 2 5.0 1.5 2.6 1 23.0 1.5 3.6 1 7.5 1.53798 6.0 1 6.4 1 0.6 1 0.6 1.30891 5.7 3.5 1.4 2 0.9 1.89437 2.0 1 9.8 1.37597 2.0 1.54931 1.9 1.5 14.6 1 3.5 1.5 6.7 1.99546 2.0 2 5.6 2 1.5 1 33.6 1 3.0 1.15273 9.0 1 0.6 1 11.2 2.5 2.0 2.81226 1.6 1 6.5 2.89761 3.3 1 0.6 2 2.2 2 14.6 1 8.0 1 1.6 1.98167 5.0 2 1.8 1 13.6 1 12.7 1.5 20.3 1 9.4 1.5 4.3 1.5 1.7 3.5 5.7 2 3.2 2 13.4 1 1.4 1.5 1.2 1 8.0 1 2.4 4.18279 4.8 1.5 4.1 2.5 1.4 1 6.7 1 1.5 2.5 3.8 2.31622 10.2 1 3.3 1.5 6.7 1.5 3.7 2.5 7.7 1 0.9 1.90978 2.0 1 2.2 6.58063 24.7 1.5 0.8 3.1488 2.9 1 14.5 1 0.8 1 8.4 1 18.3 2.5 2.9 2.50825 16.1 3.963 7.9 1 2.4 2.5 5.6 2 1.3 2.5 9.2 1.5 17.4 1 5.9 3.52466 7.3 1.5 4.6 3.19834 10.0 1.5 2.3 2.69383 0.8 1 6.7 1 0.8 1 7.7 1 3.2 2 1.4 3 7.9 1.1013 3.0 1 10.1 1.5 4.6 1.5 8.9 1 7.3 1.5 0.5 1 57"/>
<rect x="378.0" y="888.2" width="3.0" height="9.9" fill="#74bd78" />
<line x1="459.5" y1="893.1" x2="2312.5" y2="893.1" stroke="#34283a" stroke-width="1" />
<line x1="415.0" y1="893.1" x2="428.5" y2="893.1" stroke="#8a8a8a" stroke-width="1.3" stroke-dasharray="6 1.5"/>
<line x1="465.8" y1="893.1" x2="2312.5" y2="893.1" stroke="#74bd78" stroke-width="8" stroke-dasharray="1.5 10.0 1 1.5 1.5 3.6 1.5 14.3 2 4.8 3.09636 0.4 5.44879 0.5 1 12.7 5.95004 17.8 1 5.4 2 1.3 1 2.8 1.5 3.3 1 3.4 1 2.3 2.75797 5.1 1 5.6 5.73487 8.4 1 17.8 1.07937 9.8 1 2.1 1.5 0.7 1 1.6 3.5 3.5 1 4.4 1 6.0 1.5 5.0 2 6.3 1 6.6 1 5.3 1 4.4 3.09861 12.1 1 4.4 6.78598 1.3 1 0.5 3.5 6.0 1 4.0 1 6.7 1 3.4 2 1.2 2 9.2 2.44687 4.8 3.63065 5.8 1.86479 2.6 2 9.1 1 1.5 1 0.9 5.0507 2.8 1.5 1.1 1 10.7 1 4.9 4 2.5 1.5 0.9 1.5 7.0 2.5 4.3 1 5.2 2.51838 12.5 1 0.9 1 1.3 1 2.7 2 23.3 2 8.5 6.35575 9.0 2.5 8.6 2.1951 10.2 2.71307 9.1 1 8.1 1.5 13.4 2.10498 7.4 1 9.3 1.5 12.3 2.5 1.2 1 10.4 2.5 20.9 1 1.9 3.16954 9.9 2.5 3.5 1 3.2 1.5 10.1 1 5.7 1 15.2 6.3244 26.4 1 13.6 1 9.5 1 7.1 1 4.8 5.5 6.0 1.5 15.9 1 25.2 1 0.5 1.5 5.7 1.5 6.4 1.96553 25.1 1 4.0 1 4.4 2 4.1 1 11.0 1.09828 4.0 4.5 16.2 1 14.1 6.82944 5.6 1.5 0.9 1 0.9 1 1.4 1.5 1.3 1 5.5 1 3.1 1 13.2 1.03188 3.9 1 15.7 1.5 12.2 1 1.2 1.64639 3.8 1 1.2 1 7.9 1 5.6 1.5 20.6 1 14.3 1 9.5 1 5.6 1 1.3 1.5 13.0 4.25818 21.1 1 5.8 1 1.2 1.71038 5.8 1 6.0 1 2.3 1.04407 5.9 6.78205 1.1 1 3.3 1 0.6 1 8.1 1.2781 1.6 1 19.2 4.16324 1.8 1.5 5.2 1.5 19.4 3 16.1 1 1.9 1.5 4.4 1 3.8 1.5 8.4 1 0.7 1 0.4 1 7.4 1.5 0.5 2 4.7 1 1.2 1 6.0 1 7.1 1 7.9 2.5 0.5 3 17.7 2.30333 3.3 2.83869 16.5 1.8666 11.9 1.5 1.3 2.5 10.5 1 8.8 1 6.1 1.5 5.0 1.54497 0.8 8.01834 1.0 1.5 3.5 2 8.8 1.69847 3.1 1 4.0 1 8.0 1.5 2.4 2.39373 6.9 7.01113 2.3 1 13.0 1 1.1 2.04416 11.1 1 2.9 1.5 1.3 1 8.6 2.7652 11.8 4.12043 2.6 5.17559 5.2 1.5 18.4 1 1.2 2.38299 4.1 1 2.9 4.5 6.7 1 3.7 1.5 4.9 1 4.6 1 5.2 2.5 3.3 3.29408 3.9 1 0.4 1 2.6 1.5 12.3 2 0.4 2 6.0 2.54361 2.3 2 0.8 1 3.9 1 14.1 1 4.4 3.5 7.5 1 2.7 2 14.4 1.5 4.9 1 1.1 3.5 8.0 2.17713 1.8 3.5 7.4 1 7.4 1.5 4.4 2.5 1.1 2 8.8 1 11.1 4.02757 2.6 1.5 18.7 1 2.3 1 56"/>
<rect x="378.0" y="898.1" width="3.0" height="9.9" fill="#80cc82" />
<line x1="459.5" y1="903.0" x2="2312.5" y2="903.0" stroke="#34283a" stroke-width="1" />
<line x1="415.0" y1="903.0" x2="428.5" y2="903.0" stroke="#8a8a8a" stroke-width="1.3" stroke-dasharray="6 1.5"/>
<line x1="465.4" y1="903.0" x2="2312.5" y2="903.0" stroke="#80cc82" stroke-width="8" stroke-dasharray="2 18.0 2 21.5 9.21965 3.5 1 30.0 2 6.0 2 1.7 1.00586 6.5 1.90305 6.3 2 8.0 1 3.5 7.33186 2.3 2 3.0 1 17.8 1 2.7 1.5 13.6 3.5 0.7 6 15.0 1.87473 1.8 1 4.6 1 5.3 2.02079 5.2 1 4.4 1.60696 0.5 1 10.0 2.72119 6.1 4.98414 1.5 5.30114 3.2 1 1.9 1.5 2.9 1 6.4 2.5 15.8 1 1.1 1.5 5.9 2.63626 5.9 1 9.2 1 4.2 1 3.9 1.5 6.1 1.5 1.1 1 4.5 1.64509 8.8 1.5 0.6 6 2.1 2.5 6.4 2.5 3.0 1 6.4 2.54368 12.4 3.03857 1.2 1.5 37.8 7.28326 19.6 2 11.7 1 9.2 1 3.4 3 2.5 1.5 13.0 2.05723 1.6 1 4.5 1 2.7 1 6.1 1.5 15.2 2.5 9.6 1.75717 14.3 1 6.1 1.5 1.4 3.12212 1.8 2 13.7 1 8.5 2 1.0 3 21.6 6.09555 16.3 2 3.2 1 0.5 1 4.6 1.82141 9.8 3.00628 1.6 1.5 5.8 1 3.8 6 3.2 6 5.2 1.5 0.9 1 34.3 1 5.7 2.43475 5.7 1.5 6.3 1.74933 9.4 1 18.6 2.14568 1.2 1 2.8 2 9.5 2 4.1 1.97468 13.7 1 8.9 1 3.9 1 15.5 4.17529 2.4 1.5 2.2 1 2.0 2 7.1 1 3.5 1 1.8 1.5 9.6 1.1067 3.8 1 27.8 3.26943 0.5 1 6.2 1.10866 3.1 1 10.2 1.5 21.2 1 6.9 2 6.3 1.5 15.7 1 5.5 5.53338 3.8 5.22349 13.5 2.19745 4.4 1 8.3 1 5.7 1 6.2 2.38395 0.9 1 5.8 7.21258 1.0 1 3.9 1.7638 32.4 4 33.7 1 6.8 1 5.2 1 1.4 2.16094 4.2 1 11.5 2 5.5 1 3.1 1 3.1 2 4.3 1 8.3 1 3.8 1 2.7 1 7.1 2.56821 19.9 1 2.1 1 2.6 1 11.6 1 10.2 1.5 2.2 1.5 21.1 1 8.3 1 12.4 2 10.0 1.5 4.1 1 8.5 2.58807 3.8 1 2.9 1 11.5 2.53765 0.6 1 7.1 1.5 0.5 1 1.6 1.5 8.8 1.5 5.0 1 18.4 4.89688 7.7 2.9446 0.4 1 3.0 1.89065 7.2 1.5 2.8 4.94974 15.6 1 2.3 1.74536 5.3 2 6.0 2.5 3.4 2.5 10.9 2.8647 1.1 2.5 8.9 1 2.1 3 5.0 2 4.6 1 2.6 2.5 1.6 1 9.3 4.67823 3.8 1 0.6 4 0.8 4.07826 12.2 1.5 1.3 1 1.2 1 0.6 1.5 4.9 1 17.5 2 9.5 1 20.7 2.06987 11.2 1.5 16.8 1.5 13.9 2.5 7.8 1 1.7 3.30515 78"/>
<rect x="378.0" y="907.9" width="3.0" height="9.9" fill="#7cc47c" />
<line x1="459.5" y1="912.9" x2="2312.5" y2="912.9" stroke="#34283a" stroke-width="1" />
<line x1="415.0" y1="912.9" x2="428.5" y2="912.9" stroke="#8a8a8a" stroke-width="1.3" stroke-dasharray="6 1.5"/>
<line x1="462.2" y1="912.9" x2="2312.5" y2="912.9" stroke="#7cc47c" stroke-width="8" stroke-dasharray="1.5 2.3 1.5 10.0 1 30.7 2.9296 3.1 1.5 6.8 1 28.0 2 9.9 1 6.6 1.93826 0.9 1 4.0 2.55987 7.6 1 9.5 1 25.0 2 6.9 1 1.4 2.5 1.5 1.50373 3.6 9.77372 4.9 1 0.6 1 7.8 1 2.7 1 10.8 2.54308 3.8 1 0.7 1 5.9 3.08674 2.2 1 5.0 4 17.0 4.5 0.7 1 1.1 1 1.6 1 7.4 1.988 2.8 1 22.3 1.5 1.7 2.5 1.9 1 13.9 1 1.9 1 0.8 1.5 6.8 1 1.1 1 4.5 1.58876 8.9 1.5 22.8 1 6.9 2.12088 11.5 1 2.3 1.50807 4.9 1 13.8 1 19.1 3.5 1.1 2 16.4 2.1472 4.6 1 3.8 1 4.9 1 9.6 1 14.1 1.5 6.1 1 1.7 1 10.7 1 6.1 1 24.0 2.52202 1.8 1 14.4 1 6.0 1.5 3.3 1 2.1 1.61504 3.5 1 15.6 1 2.8 1.5 22.2 1.5 2.2 9.78649 8.7 1 2.6 2.5 9.9 1 11.9 1.62832 14.0 4 4.6 5.5 6.0 1.5 36.4 1 3.3 1.5 1.0 1.5 14.7 1 9.7 1 37.3 2 4.4 1.77819 4.1 1 23.3 1 5.6 1 15.6 1.5 2.9 1.5 6.1 1.5 12.8 1 7.0 1 4.5 3.56874 26.6 2.33184 1.2 1.5 3.9 1 2.8 1 41.3 2 6.3 1 8.0 1 0.8 4 2.3 1 5.4 5.5 3.7 2.20441 1.8 1 4.2 1 3.9 6.35002 9.4 1 4.1 1 12.7 1 4.2 1.5 3.9 4 0.7 2.5 5.5 1 70.5 1 4.5 1 1.7 1 4.8 1 1.7 2.45162 9.3 1 6.0 2 13.7 1 14.1 6.81393 10.1 1 11.4 1 12.4 1 14.1 2.6528 9.5 1.5 2.3 1 11.6 3.24138 4.5 1.5 15.3 1 20.0 1 23.4 1 2.3 1 24.1 1 9.7 1 12.5 1.5 3.7 1 6.1 1.5 0.7 1.99738 29.0 5.32194 15.6 1 2.5 1.5 12.4 2.3916 3.7 2 2.0 2.5 1.6 1 2.4 3.10829 3.4 2 27.6 1 31.2 4.0169 12.2 1.5 1.3 1 1.5 1 24.9 2 9.4 1 16.9 1 2.9 1 2.6 4.5 0.9 1 3.3 1 31.1 3.5 93"/>
<rect x="378.0" y="917.8" width="3.0" height="9.9" fill="#74bd78" />
<line x1="459.5" y1="922.7" x2="2312.5" y2="922.7" stroke="#34283a" stroke-width="1" />
<line x1="415.0" y1="922.7" x2="428.5" y2="922.7" stroke="#8a8a8a" stroke-width="1.3" stroke-dasharray="6 1.5"/>
<line x1="462.0" y1="922.7" x2="2312.5" y2="922.7" stroke="#74bd78" stroke-width="8" stroke-dasharray="1.5 47.7 1 11.3 1 75.8 1 33.6 1 2.0 5.25629 8.0 5 5.0 1 9.5 1 2.8 1 10.7 2 7.0 1 25.3 4 10.8 1 14.7 1 49.6 1 11.8 1.5 2.3 1 2.8 1.66973 9.0 1.5 21.4 1 2.3 1.5 42.3 1 7.5 1 27.8 1 11.9 1 3.6 1 38.5 1 20.3 1.5 50.0 1.5 6.5 1.5 48.2 1.5 4.6 6.10765 25.9 1 89.7 1.5 28.0 1 25.6 2 95.4 1 13.0 1 8.7 1 19.5 1 2.2 1 8.1 2.74887 39.7 2 43.0 1 4.3 1 4.6 1 3.3 1.5 7.3 1.5 5.3 1 116.5 1 41.6 1 24.5 1.5 17.2 1 12.1 1 37.2 1 29.3 1 3.4 1 1.5 1.5 72.3 1 13.3 1 7.4 1 8.4 1 19.1 1 6.2 1 145.8 1 27.6 1 35.7 4 74.6 1 58"/>
</g>
<path d="M2318.2 652.8L2324.5 640L2330.8 652.8z" fill="#6f6f6f"/>
<rect x="2318.5" y="856.0" width="12.5" height="36.0" rx="4" fill="#5a5a5a" />
<path d="M2318.2 908.5L2324.5 921.5L2330.8 908.5z" fill="#6f6f6f"/>
<rect x="375.0" y="938.0" width="1963.0" height="213.0" fill="#2b2b2b" />
<rect x="375.0" y="938.0" width="1963.0" height="42.0" fill="url(#gHdr)" />
<line x1="922.8" y1="938.0" x2="922.8" y2="980.0" stroke="#5a5a5a" stroke-width="3.2" />
<text x="937.2" y="964.6" font-size="20" font-family='"Liberation Mono","DejaVu Sans Mono",monospace' fill="#6a6a6a" textLength="55.5" lengthAdjust="spacingAndGlyphs" stroke="#6a6a6a" stroke-width="0.25">0.5 s</text>
<line x1="1386.0" y1="938.0" x2="1386.0" y2="980.0" stroke="#5a5a5a" stroke-width="3.2" />
<text x="1400.5" y="964.6" font-size="20" font-family='"Liberation Mono","DejaVu Sans Mono",monospace' fill="#6a6a6a" textLength="33.3" lengthAdjust="spacingAndGlyphs" stroke="#6a6a6a" stroke-width="0.25">1 s</text>
<line x1="1849.2" y1="938.0" x2="1849.2" y2="980.0" stroke="#5a5a5a" stroke-width="3.2" />
<text x="1863.8" y="964.6" font-size="20" font-family='"Liberation Mono","DejaVu Sans Mono",monospace' fill="#6a6a6a" textLength="55.5" lengthAdjust="spacingAndGlyphs" stroke="#6a6a6a" stroke-width="0.25">1.5 s</text>
<rect x="381.0" y="943.5" width="198.0" height="31.0" rx="5" fill="#d3d3d3" />
<text x="389.5" y="965.8" font-size="19.5" font-family='"Liberation Sans","DejaVu Sans",sans-serif' fill="#000" textLength="122.0" lengthAdjust="spacing" >example_data</text>
<path d="M557.0 954.4h14l-7.0 9.5z" fill="#111"/>
<rect x="378.0" y="980.0" width="1957.0" height="168.0" fill="#0a1707" />
<rect x="378.0" y="980.0" width="3.2" height="168.0" fill="#a98de0" />
<clipPath id="d3clip"><rect x="375" y="980" width="1963" height="168"/></clipPath><g clip-path="url(#d3clip)">
<text x="395.0" y="984.0" font-size="13" font-family='"Liberation Mono","DejaVu Sans Mono",monospace' fill="#a98de0" >DATA</text>
</g>
<text x="394.5" y="1025.0" font-size="13" font-family='"Liberation Mono","DejaVu Sans Mono",monospace' fill="#6c6c64" >MEAN:</text>
<text x="387.0" y="1053.5" font-size="13" font-family='"Liberation Mono","DejaVu Sans Mono",monospace' fill="#8c8c84" >-0.7216</text>
<text x="398.5" y="1096.5" font-size="13" font-family='"Liberation Mono","DejaVu Sans Mono",monospace' fill="#6c6c64" >STD:</text>
<text x="387.0" y="1124.5" font-size="13" font-family='"Liberation Mono","DejaVu Sans Mono",monospace' fill="#8c8c84" >8.80809</text>
<line x1="459.5" y1="1022.0" x2="2312.5" y2="1022.0" stroke="#4c4f48" stroke-width="1" />
<line x1="459.5" y1="1103.7" x2="2312.5" y2="1103.7" stroke="#4c4f48" stroke-width="1" />
<line x1="459.5" y1="1144.5" x2="2312.5" y2="1144.5" stroke="#4c4f48" stroke-width="1" />
<path d="M460.2 1060.0v11.5m1.5 0.5v-17.5m1.5 -26v92.5m1.5 -51v-12m1.5 -1.5v14.5m1.5 1v-12m1.5 0.5v9.5m1.5 4v-17.5m1.5 1.5v13m1.5 1v-13m1.5 -11v32.5m1.5 -8v-12.5m1.5 0v10m1.5 1.5v-12m1.5 -5.5v15.5m1.5 4.5v-15.5m1.5 -8.5v40.5m1.5 -20v-11m1.5 -1v12.5m1.5 1.5v-13m1.5 -1.5v13.5m1.5 2v-13.5m1.5 -3.5v13.5m1.5 0v-15m1.5 2v16.5m1.5 1.5v-16m1.5 -1v13m1.5 0v-11.5m1.5 -1.5v15m1.5 1v-13.5m1.5 -2v11.5m1.5 18v-37m1.5 7v15m1.5 -1v-15m1.5 -1v17.5m1.5 16.5v-35.5m1.5 1v19.5m1.5 -1.5v-14.5m1.5 -3v15m1.5 4.5v-20m1.5 -2v19m1.5 4.5v-18.5m1.5 -1v15m1.5 -3v-15.5m1.5 0v15.5m1.5 0.5v-9.5m1.5 -2v12.5m1.5 0.5v-12m1.5 0.5v10m1.5 0.5v-11.5m1.5 0v13m1.5 0v-15m1.5 1v13m1.5 -1.5v-10.5m1.5 -12.5v39.5m1.5 -14v-16m1.5 -1.5v18m1.5 -3v-9.5m1.5 0v11.5m1.5 1.5v-13.5m1.5 -2.5v14m1.5 -0.5v-12m1.5 0.5v11.5m1.5 1v-15.5m1.5 -30v97.5m1.5 -52v-17.5m1.5 4.5v12.5m1.5 -1v-11m1.5 0.5v13m1.5 -3v-9.5m1.5 0v10m1.5 1v-17m1.5 6v15.5m1.5 -4.5v-11m1.5 -4v16m1.5 -1v-17.5m1.5 5v12m1.5 1.5v-15m1.5 3v13m1.5 0v-14.5m1.5 -2v16m1.5 -1.5v-11m1.5 -29.5v92m1.5 -51v-12.5m1.5 0.5v13m1.5 21v-42m1.5 5.5v13m1.5 8v-18.5m1.5 -0.5v16m1.5 -2.5v-13.5m1.5 -8v19.5m1.5 -1v-10m1.5 -2v15.5m1.5 -1v-13.5m1.5 0v12m1.5 0.5v-13m1.5 0.5v13m1.5 0v-12m1.5 -0.5v15m1.5 -2v-15.5m1.5 0v44.5m1.5 -27.5v-16.5m1.5 3v11.5m1.5 -2v-10m1.5 -1v12.5m1.5 46.5v-85m1.5 27.5v10m1.5 4v-15m1.5 -0.5v17m1.5 -1.5v-16.5m1.5 2.5v10.5m1.5 0v-10m1.5 0v11m1.5 -1v-10.5m1.5 -1.5v12m1.5 -0.5v-13m1.5 -5.5v47.5m1.5 -28.5v-10.5m1.5 -6.5v16.5m1.5 2v-16m1.5 2v14m1.5 2.5v-14.5m1.5 0v11.5m1.5 -0.5v-15.5m1.5 3v11.5m1.5 3.5v-17.5m1.5 2.5v14m1.5 -1.5v-13.5m1.5 0v15.5m1.5 -0.5v-19m1.5 3.5v13.5m1.5 10v-53.5m1.5 29v17m1.5 -2.5v-13m1.5 1v12m1.5 4v-17m1.5 3v12m1.5 -1.5v-12m1.5 -2v14.5m1.5 4.5v-17.5m1.5 -2.5v14.5m1.5 3.5v-17.5m1.5 0v14m1.5 2.5v-13m1.5 0v13.5m1.5 -3.5v-11.5m1.5 -5.5v25m1.5 1.5v-28.5m1.5 8v11m1.5 2.5v-12.5m1.5 -2.5v12.5m1.5 0v-10m1.5 -34v89m1.5 -41.5v-17m1.5 -22v36.5m1.5 3v-17.5m1.5 1v15m1.5 4.5v-16.5m1.5 -30.5v89.5m1.5 -13.5v-49.5m1.5 3v15m1.5 -4v-11.5m1.5 -0.5v12.5m1.5 -0.5v-14m1.5 3v11.5m1.5 -1.5v-11.5m1.5 1v15m1.5 -2.5v-18m1.5 7v10m1.5 0.5v-12m1.5 -2v12.5m1.5 3.5v-18.5m1.5 3v15m1.5 2v-16m1.5 0.5v11m1.5 0.5v-12.5m1.5 0v13m1.5 3v-15m1.5 -0.5v12m1.5 2.5v-14m1.5 -1v14m1.5 0v-14m1.5 -1v17m1.5 -3v-11m1.5 -2v16m1.5 0v-24m1.5 8.5v13.5m1.5 -1.5v-15m1.5 1v14.5m1.5 5v-21.5m1.5 6v11.5m1.5 -1.5v-12m1.5 1.5v15.5m1.5 -1v-16.5m1.5 2v14.5m1.5 -5v-12m1.5 2.5v10.5m1.5 4v-17m1.5 -6.5v28m1.5 -7.5v-11m1.5 -8.5v21.5m1.5 -4v-14m1.5 1v16m1.5 1v-18.5m1.5 5v12m1.5 0.5v-14.5m1.5 -1v14m1.5 0v-11m1.5 -2v14.5m1.5 4v-16.5m1.5 -1v11m1.5 3.5v-19m1.5 5v11.5m1.5 0.5v-13m1.5 1v19m1.5 -8v-11.5m1.5 1v16.5m1.5 -5.5v-12m1.5 1v15.5m1.5 -5.5v-13m1.5 1.5v14m1.5 2.5v-14.5m1.5 -2v12m1.5 1v-11m1.5 -4v16.5m1.5 -2v-12m1.5 -1v13.5m1.5 -0.5v-27m1.5 16.5v9m1.5 0.5v-10m1.5 -1v17.5m1.5 -2.5v-16.5m1.5 1v11.5m1.5 0v-15m1.5 4.5v16.5m1.5 2v-19.5m1.5 -1v14m1.5 -1v-11m1.5 -2v14.5m1.5 -1v-14m1.5 2v14m1.5 -3v-10.5m1.5 -2v15m1.5 3v-21m1.5 2v34m1.5 -21v-10m1.5 0v12.5m1.5 -2v-12m1.5 -2.5v14m1.5 8v-18m1.5 -3v18m1.5 -5v-10m1.5 -6.5v17.5m1.5 4v-15.5m1.5 0v12m1.5 0v-18m1.5 4.5v21m1.5 -6.5v-13m1.5 -1v11.5m1.5 0.5v-11m1.5 1v12m1.5 -0.5v-11.5m1.5 -9v20.5m1.5 -1v-17.5m1.5 6v13m1.5 -1v-15.5m1.5 2.5v12.5m1.5 0v-14.5m1.5 1.5v18m1.5 -3v-14.5m1.5 0v16.5m1.5 -3.5v-14.5m1.5 -1.5v15m1.5 5.5v-15.5m1.5 -0.5v13.5m1.5 -2.5v-10m1.5 -1.5v13.5m1.5 4.5v-19.5m1.5 1v11.5m1.5 4v-16m1.5 2.5v11.5m1.5 0v-16m1.5 4v14m1.5 -1.5v-13m1.5 -1v11.5m1.5 3v-18m1.5 5v10m1.5 1.5v-12m1.5 -0.5v15m1.5 -3.5v-11.5m1.5 0.5v10.5m1.5 0.5v-12.5m1.5 -0.5v15m1.5 -2.5v-12m1.5 1.5v12m1.5 -0.5v-16m1.5 5v10.5m1.5 -1v-12.5m1.5 2v11.5m1.5 2v-14.5m1.5 -1.5v15.5m1.5 0v-12m1.5 -2.5v12.5m1.5 6v-17.5m1.5 1.5v10.5m1.5 0v-13m1.5 2v11m1.5 6v-16.5m1.5 -3v14.5m1.5 -2v-12.5m1.5 0v14.5m1.5 3v-20m1.5 6v9.5m1.5 1.5v-11m1.5 -4.5v22.5m1.5 -5.5v-13m1.5 0.5v20m1.5 -9.5v-12m1.5 0v11m1.5 8v-17.5m1.5 -31.5v88.5m1.5 -45.5v-12.5m1.5 -1.5v12m1.5 2v-13m1.5 -1v13m1.5 -1v-11m1.5 0.5v11m1.5 -0.5v-10.5m1.5 -1v13.5m1.5 -0.5v-11m1.5 -2.5v12m1.5 17v-59m1.5 27v18.5m1.5 -1v-14.5m1.5 -0.5v16.5m1.5 -4v-10.5m1.5 -4v16.5m1.5 -0.5v-13.5m1.5 -1.5v16.5m1.5 -1.5v-11m1.5 0v10.5m1.5 4.5v-18.5m1.5 -0.5v17m1.5 3v-16.5m1.5 -4v14.5m1.5 0.5v-13m1.5 -14v48.5m1.5 -18.5v-15m1.5 0.5v13m1.5 -2v-10m1.5 -3.5v13.5m1.5 2v-16m1.5 3.5v10m1.5 1.5v-13m1.5 -12.5v23.5m1.5 0v-12.5m1.5 2v11.5m1.5 -1v-9m1.5 -0.5v10.5m1.5 2.5v-16m1.5 -4v19m1.5 2v-14m1.5 -4.5v15.5m1.5 0.5v-13.5m1.5 -2.5v17m1.5 -2v-17m1.5 4v14m1.5 -1.5v-10m1.5 -6.5v18.5m1.5 -1.5v-14m1.5 0.5v17m1.5 5v-21m1.5 -29v96.5m1.5 -53v-18m1.5 3v13.5m1.5 0v-13.5m1.5 -4.5v18.5m1.5 0.5v-12m1.5 -3.5v18m1.5 0.5v-16.5m1.5 -29.5v94m1.5 -50.5v-17m1.5 3v16m1.5 -1v-19m1.5 0.5v15.5m1.5 6.5v-18.5m1.5 0v15.5m1.5 -2.5v-13m1.5 1.5v12.5m1.5 0v-19.5m1.5 -0.5v17m1.5 1.5v-11m1.5 -0.5v16m1.5 -4v-11m1.5 -7v17.5m1.5 0.5v-14m1.5 0v20m1.5 -7v-10.5m1.5 0v10m1.5 -0.5v-12m1.5 -6v19m1.5 1.5v-11.5m1.5 -0.5v11.5m1.5 3.5v-17m1.5 -2.5v18.5m1.5 -3v-12m1.5 -2.5v14m1.5 2v-22m1.5 -23v89m1.5 -39.5v-16.5m1.5 -12v48m1.5 -22v-19.5m1.5 4.5v16.5m1.5 -1v-15.5m1.5 0v16.5m1.5 -4v-13.5m1.5 -1.5v38m1.5 -22v-14.5m1.5 -3v15.5m1.5 -1.5v-9.5m1.5 -2.5v12m1.5 3.5v-14m1.5 -1.5v14m1.5 3v-14m1.5 -2.5v14.5m1.5 -1v-14m1.5 -3v16m1.5 -0.5v-16m1.5 6.5v12m1.5 2.5v-17m1.5 -3v15.5m1.5 -1v-15m1.5 5v11m1.5 8v-22m1.5 0.5v14.5m1.5 2.5v-19.5m1.5 5.5v10.5m1.5 3v-13.5m1.5 -1v14m1.5 3v-21m1.5 2v15.5m1.5 -2.5v-15.5m1.5 4.5v12m1.5 0.5v-14.5m1.5 2.5v12.5m1.5 14.5v-27.5m1.5 1v12m1.5 0.5v-13m1.5 -3v14m1.5 -0.5v-11m1.5 1.5v9.5m1.5 0.5v-14.5m1.5 -2v22.5m1.5 -3v-16m1.5 0v16m1.5 -3v-11.5m1.5 -1v12.5m1.5 1v-12.5m1.5 -1v14.5m1.5 -2v-13.5m1.5 3.5v14.5m1.5 0.5v-18m1.5 -10.5v46.5m1.5 -22.5v-11m1.5 -1v12.5m1.5 -1.5v-12m1.5 2.5v13m1.5 -0.5v-15.5m1.5 2.5v10.5m1.5 3v-20.5m1.5 3.5v14.5m1.5 0v-11m1.5 -5v18m1.5 47v-65.5m1.5 3v14m1.5 -1.5v-11m1.5 1v11m1.5 -1.5v-9.5m1.5 -2.5v17.5m1.5 -1.5v-15.5m1.5 -3v16m1.5 22.5v-51.5m1.5 14.5v15m1.5 -1v-18m1.5 0v28m1.5 -4.5v-20.5m1.5 0v14.5m1.5 1v-17m1.5 3.5v13m1.5 4.5v-17m1.5 -11.5v50m1.5 -26.5v-12m1.5 2.5v11m1.5 -1.5v-14.5m1.5 4v12m1.5 0v-11.5m1.5 -3v16m1.5 -1.5v-19m1.5 7v11m1.5 0v-11.5m1.5 -1v14m1.5 -1.5v-11.5m1.5 -2v12.5m1.5 0v-10.5m1.5 -0.5v12.5m1.5 1.5v-12m1.5 -2v11m1.5 2v-12m1.5 -2.5v17m1.5 -2.5v-11.5m1.5 -3.5v13.5m1.5 3.5v-16.5m1.5 2v25m1.5 -10v-15m1.5 -1.5v15m1.5 -0.5v-15.5m1.5 2v13.5m1.5 0.5v-20m1.5 6.5v11.5m1.5 4.5v-18.5m1.5 1.5v13.5m1.5 -1v-12.5m1.5 1.5v12m1.5 -1v-14.5m1.5 2.5v17m1.5 -5.5v-11.5m1.5 2v13.5m1.5 -3.5v-12.5m1.5 1v13m1.5 -0.5v-16.5m1.5 3v12m1.5 0.5v-10m1.5 -35v96.5m1.5 -50v-12.5m1.5 -1v14.5m1.5 2v-45m1.5 30v12.5m1.5 -3v-11.5m1.5 -3v18m1.5 -1v-18.5m1.5 3v17.5m1.5 3.5v-21m1.5 1v13.5m1.5 -1.5v-10m1.5 -2.5v13m1.5 0.5v-12.5m1.5 -5v19m1.5 2v-15m1.5 -0.5v12.5m1.5 16.5v-40m1.5 8v17m1.5 -1.5v-13.5m1.5 -0.5v15m1.5 0v-14.5m1.5 -4v18m1.5 -1.5v-9.5m1.5 -5.5v17.5m1.5 1.5v-15.5m1.5 1v15m1.5 -4.5v-11m1.5 -2v21m1.5 18v-38.5m1.5 -1.5v17m1.5 -1.5v-12.5m1.5 -0.5v11.5m1.5 5v-15m1.5 -3.5v16.5m1.5 -1.5v-14.5m1.5 1.5v14.5m1.5 19v-45m1.5 7.5v16m1.5 2.5v-13.5m1.5 -4.5v16m1.5 0.5v-12.5m1.5 0v11m1.5 0.5v-16.5m1.5 4.5v11.5m1.5 3v-14m1.5 0.5v11m1.5 -0.5v-11.5m1.5 -0.5v11.5m1.5 5v-15m1.5 -2v14m1.5 0v-16m1.5 4.5v12.5m1.5 -2v-17.5m1.5 2v17m1.5 1v-15m1.5 -1v15.5m1.5 -2.5v-12.5m1.5 2v12m1.5 5v-19m1.5 1v16m1.5 -3.5v-12m1.5 0v11.5m1.5 -0.5v-10.5m1.5 -5.5v18m1.5 3v-30.5m1.5 6v44m1.5 -22v-12m1.5 -4v18m1.5 -5v-10.5m1.5 0v13m1.5 -1.5v-12m1.5 -1v12m1.5 7.5v-18m1.5 1.5v11m1.5 -1v-10.5m1.5 -1.5v14m1.5 2v-15.5m1.5 1v14m1.5 -4v-18m1.5 6v12.5m1.5 1v-12m1.5 -2.5v13m1.5 -0.5v-10.5m1.5 0v12m1.5 3v-13.5m1.5 -4v13.5m1.5 44.5v-83.5m1.5 28.5v12m1.5 -1v-10.5m1.5 -1.5v16m1.5 -2v-14m1.5 -3.5v15m1.5 5v-22.5m1.5 6.5v11.5m1.5 8v-28m1.5 6v14.5m1.5 -1v-13.5m1.5 0v15m1.5 -1v-12m1.5 -2.5v15.5m1.5 1.5v-18m1.5 5v11.5m1.5 2.5v-17.5m1.5 2v13m1.5 -1v-13m1.5 -1.5v21m1.5 -3.5v-13m1.5 -2v11.5m1.5 1.5v-13.5m1.5 0v15.5m1.5 2v-16m1.5 -3v19m1.5 -5.5v-13m1.5 1.5v11.5m1.5 2v-14.5m1.5 0.5v14m1.5 0v-19.5m1.5 6v14m1.5 -2.5v-10m1.5 -4.5v15m1.5 -1v-19m1.5 10v11m1.5 -1v-13m1.5 -2.5v16.5m1.5 4.5v-16m1.5 -3.5v18m1.5 -4v-10m1.5 -4.5v14m1.5 5v-21m1.5 3v16.5m1.5 -3v-10.5m1.5 0.5v10.5m1.5 3.5v-21m1.5 2.5v16.5m1.5 -2.5v-12m1.5 -2v14m1.5 5v-15.5m1.5 -2.5v16m1.5 0v-14m1.5 -1v12.5m1.5 3v-17.5m1.5 1.5v12.5m1.5 4.5v-17.5m1.5 2v14.5m1.5 0v-16m1.5 2.5v11m1.5 -1.5v-10m1.5 -0.5v14.5m1.5 2v-15m1.5 -1.5v12m1.5 -1.5v-15.5m1.5 3v17.5m1.5 -3.5v-12m1.5 0.5v11m1.5 4v-23m1.5 3.5v15.5m1.5 0.5v-12m1.5 0.5v14m1.5 -3.5v-11.5m1.5 -6.5v18.5m1.5 7.5v-17.5m1.5 -1.5v11m1.5 3v-13.5m1.5 -0.5v11m1.5 16.5v-30m1.5 3v13m1.5 3.5v-17m1.5 -4.5v16.5m1.5 2.5v-14m1.5 -2v14m1.5 0.5v-16m1.5 3.5v12.5m1.5 -1v-10.5m1.5 -3v12.5m1.5 0v-10m1.5 -7v17.5m1.5 4.5v-16.5m1.5 -3v14m1.5 6.5v-17m1.5 -30v43m1.5 0.5v-18m1.5 1.5v14m1.5 0v-16m1.5 4.5v15.5m1.5 46v-93m1.5 33.5v9m1.5 1.5v-12m1.5 -0.5v13m1.5 0v-14.5m1.5 3.5v12.5m1.5 -2.5v-14.5m1.5 4.5v11.5m1.5 -2.5v-10m1.5 -16v45.5m1.5 -16.5v-18.5m1.5 3v13.5m1.5 0.5v-13.5m1.5 0.5v14.5m1.5 2v-21.5m1.5 5v14.5m1.5 0v-18.5m1.5 6.5v10.5m1.5 -1.5v-11.5m1.5 0.5v15m1.5 -0.5v-18.5m1.5 3.5v12m1.5 2.5v-14m1.5 2v12.5m1.5 -1.5v-11m1.5 -2.5v16m1.5 -0.5v-15.5m1.5 2.5v11.5m1.5 0.5v-19.5m1.5 4.5v15.5m1.5 0v-18m1.5 4.5v16m1.5 -1v-16.5m1.5 -1v12.5m1.5 1.5v-11.5m1.5 1v10m1.5 2v-15m1.5 1.5v12.5m1.5 2v-13m1.5 -1.5v12m1.5 1.5v-13.5m1.5 1v9.5m1.5 1.5v-11.5m1.5 1v10m1.5 0v-16m1.5 3.5v14.5m1.5 -1.5v-14.5m1.5 3v11.5m1.5 -1.5v-11m1.5 -0.5v17m1.5 -2.5v-15.5m1.5 -0.5v17.5m1.5 -3.5v-10.5m1.5 -0.5v15m1.5 -3v-15.5m1.5 2v11.5m1.5 11.5v-21.5m1.5 0.5v12m1.5 1.5v-14.5m1.5 1.5v15.5m1.5 1v-19m1.5 0.5v14m1.5 0.5v-13m1.5 -4.5v15.5m1.5 -1.5v-9m1.5 -3v17m1.5 -3.5v-11.5m1.5 0.5v11m1.5 -1v-12.5m1.5 2.5v10m1.5 0.5v-12m1.5 0.5v14m1.5 3.5v-17.5m1.5 -0.5v17m1.5 -5v-18m1.5 7.5v13.5m1.5 -2v-12m1.5 -1v16.5m1.5 -3.5v-11m1.5 -6.5v21.5m1.5 -2v-16m1.5 1v11m1.5 7.5v-24m1.5 6v12m1.5 4.5v-15.5m1.5 0v12.5m1.5 0v-14.5m1.5 2.5v11m1.5 0v-12.5m1.5 -9v31m1.5 -6.5v-14m1.5 -5v18m1.5 -0.5v-16m1.5 0v16m1.5 0v-14m1.5 -3v17.5m1.5 -2.5v-12m1.5 0v11m1.5 4.5v-17.5m1.5 2v15m1.5 1v-20m1.5 -0.5v18m1.5 -0.5v-14.5m1.5 3v9.5m1.5 6.5v-18.5m1.5 2.5v11.5m1.5 -1v-12.5m1.5 -1.5v15.5m1.5 -1v-12.5m1.5 1.5v11m1.5 6v-20.5m1.5 0v16m1.5 -2v-12.5m1.5 0.5v12m1.5 6.5v-18m1.5 -1v11.5m1.5 0v-11.5m1.5 -1.5v13m1.5 1.5v-11m1.5 0v11m1.5 18.5v-36m1.5 6.5v10.5m1.5 -1v-10.5m1.5 -3.5v15.5m1.5 0.5v-18.5m1.5 7v9m1.5 1.5v-11m1.5 -18.5v81.5m1.5 -52v-13.5m1.5 -1.5v17.5m1.5 -4v-11m1.5 -1.5v16m1.5 -1v-12m1.5 -2.5v13m1.5 -0.5v-10m1.5 -1v18.5m1.5 -7v-11m1.5 -32.5v94.5m1.5 -52v-10.5m1.5 0v13m1.5 4v-17.5m1.5 1v13.5m1.5 0v-18.5m1.5 1.5v15m1.5 1v-13.5m1.5 2v12m1.5 5v-21.5m1.5 -2v16.5m1.5 -0.5v-14.5m1.5 2.5v14m1.5 1.5v-15.5m1.5 2.5v9.5m1.5 4.5v-16.5m1.5 -1v15.5m1.5 -0.5v-16m1.5 1v20.5m1.5 -7v-14.5m1.5 3.5v18m1.5 -7.5v-13m1.5 3v11m1.5 1v-14m1.5 -1v14m1.5 0.5v-13.5m1.5 1v11.5m1.5 0v-11m1.5 0.5v12m1.5 -2.5v-13.5m1.5 2.5v12m1.5 3v-14.5m1.5 0v12.5m1.5 -0.5v-11m1.5 -2.5v13m1.5 1.5v-14.5m1.5 0.5v13.5m1.5 0v-13m1.5 -1v12.5m1.5 0.5v-11.5m1.5 0.5v14m1.5 1v-20m1.5 1v17.5m1.5 -3.5v-12.5m1.5 -1.5v15m1.5 3.5v-14.5m1.5 -1v12m1.5 0.5v-12.5m1.5 1.5v10m1.5 0.5v-14m1.5 3v12.5m1.5 -2v-10m1.5 -1v13.5m1.5 -2v-11.5m1.5 -3v18m1.5 -2v-14m1.5 -1.5v16.5m1.5 1v-14m1.5 0.5v13m1.5 -2.5v-14m1.5 1v12.5m1.5 3v-18m1.5 -21v87m1.5 -49.5v-12m1.5 -0.5v10.5m1.5 2.5v-18.5m1.5 3v19.5m1.5 -4.5v-17.5m1.5 4v17m1.5 -2.5v-16m1.5 -0.5v14.5m1.5 2.5v-13.5m1.5 -1v14.5m1.5 -4v-16m1.5 6v10.5m1.5 1v-10.5m1.5 -4.5v13.5m1.5 2.5v-14.5m1.5 3v10m1.5 3.5v-13.5m1.5 -1v11.5m1.5 -1.5v-11m1.5 -1.5v13.5m1.5 3.5v-16.5m1.5 1v16.5m1.5 -4.5v-11m1.5 -1.5v14m1.5 0v-15.5m1.5 1v14m1.5 0.5v-13m1.5 0v13m1.5 1.5v-13.5m1.5 0.5v9m1.5 1v-11m1.5 -4v14m1.5 1.5v-11.5m1.5 0.5v10m1.5 2v-12.5m1.5 -1v12m1.5 0v-11m1.5 0.5v10m1.5 3.5v-14.5m1.5 -2v17m1.5 0.5v-16.5m1.5 1v11m1.5 1.5v-14.5m1.5 -2v15.5m1.5 18.5v-43.5m1.5 15v9.5m1.5 2.5v-12.5m1.5 0v14.5m1.5 -2v-16m1.5 -2v17.5m1.5 3.5v-16m1.5 0v11m1.5 3.5v-14.5m1.5 -2v15m1.5 2v-20m1.5 4v14m1.5 1.5v-14m1.5 0.5v11m1.5 -1v-11m1.5 0v10.5m1.5 1v-11.5m1.5 -2.5v12.5m1.5 4v-13.5m1.5 -0.5v11.5m1.5 -1v-12m1.5 -7.5v22m1.5 -2.5v-13.5m1.5 2.5v14.5m1.5 0v-17m1.5 2.5v11m1.5 3.5v-19m1.5 2.5v13m1.5 4v-24.5m1.5 9v11m1.5 6v-15.5m1.5 -0.5v11m1.5 3.5v-15m1.5 -8v21.5m1.5 1.5v-18m1.5 4v10m1.5 2v-11.5m1.5 -1v11.5m1.5 -1v-15m1.5 5v13m1.5 -0.5v-15.5m1.5 -1v17m1.5 0.5v-17m1.5 3v12.5m1.5 -0.5v-14.5m1.5 -3v15.5m1.5 0.5v-12.5m1.5 -1.5v14m1.5 0.5v-13.5m1.5 0.5v12.5m1.5 -0.5v-12.5m1.5 0v20m1.5 -4.5v-14.5m1.5 -2v14m1.5 6v-18.5m1.5 2.5v12m1.5 0v-16m1.5 4v10m1.5 3.5v-13m1.5 -3v15.5m1.5 -3.5v-11m1.5 -2.5v15m1.5 0v-12.5m1.5 1.5v13m1.5 -1v-14.5m1.5 -2v16.5m1.5 -2v-11m1.5 -1.5v14m1.5 2v-24m1.5 5v17m1.5 -0.5v-18.5m1.5 7.5v12m1.5 2.5v-20.5m1.5 6.5v10m1.5 0v-10.5m1.5 -5.5v16.5m1.5 2.5v-14m1.5 -4v15m1.5 4.5v-21m1.5 1.5v18m1.5 -1v-14.5m1.5 -1v14m1.5 1.5v-16m1.5 0v14.5m1.5 -1v-18m1.5 8v13m1.5 -1.5v-12.5m1.5 1.5v12m1.5 0v-14.5m1.5 2v10.5m1.5 1.5v-16.5m1.5 -2v16.5m1.5 4v-14.5m1.5 1v14m1.5 -4v-11m1.5 0.5v15m1.5 -4v-11.5m1.5 0.5v11m1.5 9.5v-22m1.5 1.5v11m1.5 51v-91.5m1.5 29.5v13m1.5 3.5v-16m1.5 -4.5v16m1.5 0v-16m1.5 3v12m1.5 1v-12.5m1.5 0v10.5m1.5 2v-15m1.5 -14.5v53.5m1.5 -26v-12.5m1.5 1v18m1.5 -6.5v-13m1.5 3v10.5m1.5 0.5v-14.5m1.5 1v13.5m1.5 -0.5v-12m1.5 1.5v15.5m1.5 -3v-16m1.5 -2.5v17m1.5 -1v-10.5m1.5 0.5v10m1.5 5v-16m1.5 -3.5v14.5m1.5 0.5v-16m1.5 5v12m1.5 2v-16.5m1.5 -0.5v18.5m1.5 0v-18m1.5 3v13.5m1.5 1.5v-17m1.5 -0.5v14.5m1.5 1.5v-14.5m1.5 -6.5v19.5m1.5 -2.5v-11.5m1.5 2.5v11.5m1.5 0v-16.5m1.5 -1v22m1.5 -2.5v-19.5m1.5 4v13m1.5 3v-14.5m1.5 -5v14.5m1.5 2.5v-11.5m1.5 -26.5v40m1.5 -2v-14.5m1.5 3v21m1.5 -8.5v-14m1.5 1v14m1.5 -1.5v-19.5m1.5 4v18.5m1.5 -4.5v-11m1.5 -2v14.5m1.5 0v-13.5m1.5 -1.5v15m1.5 -2v-11.5m1.5 1.5v9.5m1.5 3v-16.5m1.5 2.5v11.5m1.5 0.5v-11.5m1.5 0.5v12m1.5 0.5v-12.5m1.5 -5v15.5m1.5 1v-12.5m1.5 0.5v15m1.5 1.5v-16.5m1.5 -1v13.5m1.5 1v-13m1.5 -2v12m1.5 2v-14.5m1.5 -13.5v68.5m1.5 -39.5v-12.5m1.5 -1.5v12m1.5 6.5v-18m1.5 -4v19m1.5 -4.5v-12.5m1.5 -4v18m1.5 -0.5v-11.5m1.5 -1v14.5m1.5 1.5v-16m1.5 -4v15m1.5 5.5v-18.5m1.5 3v13m1.5 15v-35.5m1.5 5v13.5m1.5 5.5v-20.5m1.5 4v16.5m1.5 -6v-10.5m1.5 -2v16m1.5 1.5v-16m1.5 -1.5v12m1.5 3.5v-16m1.5 0.5v13.5m1.5 1v-13.5m1.5 2v9.5m1.5 0v-11m1.5 -24v34.5m1.5 4v-22m1.5 0.5v23.5m1.5 -1v-17m1.5 2v12.5m1.5 -2v-10.5m1.5 0v15.5m1.5 -5v-10.5m1.5 0v18.5m1.5 -5.5v-19.5m1.5 6v14m1.5 -2.5v-15m1.5 3.5v16m1.5 -3.5v-14m1.5 2.5v13m1.5 0v-16m1.5 2.5v14m1.5 -1.5v-12m1.5 -1v13.5m1.5 -2.5v-14m1.5 3v11m1.5 1v-12m1.5 0v12.5m1.5 -1v-12.5m1.5 -0.5v13.5m1.5 -1v-15m1.5 5.5v13.5m1.5 -3.5v-12.5m1.5 -1v13.5m1.5 1.5v-15m1.5 2v11.5m1.5 -0.5v-14m1.5 3v13.5m1.5 -0.5v-16m1.5 1.5v14m1.5 -1v-13m1.5 -5.5v19.5m1.5 2v-15.5m1.5 1v16m1.5 -3.5v-16m1.5 1v17.5m1.5 -1v-17m1.5 -2v15.5m1.5 1.5v-12.5m1.5 1.5v12m1.5 -0.5v-11.5m1.5 -0.5v14m1.5 -4v-11.5m1.5 -1.5v20m1.5 -5.5v-13.5m1.5 -7v19.5m1.5 1v-12.5m1.5 -0.5v12.5m1.5 0.5v-14.5m1.5 0v25.5m1.5 -10.5v-12.5m1.5 1v12m1.5 -2.5v-13m1.5 0v14.5m1.5 5v-16.5m1.5 -2.5v12.5m1.5 0v-12.5m1.5 3v9.5m1.5 1v-13m1.5 2.5v12m1.5 -2v-16.5m1.5 5v13.5m1.5 -2.5v-10m1.5 0.5v9.5m1.5 1v-11m1.5 -1.5v13.5m1.5 -0.5v-11.5m1.5 -0.5v11.5m1.5 -0.5v-11.5m1.5 2v10m1.5 1v-11m1.5 -0.5v10m1.5 1v-10.5m1.5 -3v13.5" stroke="#a98de0" stroke-width="1.8" fill="none"/>
<line x1="990.7" y1="203.8" x2="990.7" y2="574.0" stroke="#f0e850" stroke-width="1.5" stroke-dasharray="1.4 1.4"/>
<line x1="990.7" y1="633.3" x2="990.7" y2="928.3" stroke="#f0e850" stroke-width="1.5" stroke-dasharray="1.4 1.4"/>
<line x1="990.7" y1="980.0" x2="990.7" y2="1148.0" stroke="#f0e850" stroke-width="1.5" stroke-dasharray="1.4 1.4"/>
<rect x="375.0" y="1151.0" width="1963.0" height="78.0" fill="#000" />
<text x="387.0" y="1175.3" font-size="18.6" font-family='"Liberation Sans","DejaVu Sans",sans-serif' fill="#7e7e7e" >Timebase (s)</text>
<rect x="386.2" y="1186.7" width="127.8" height="30.8" rx="5" fill="#d3d3d3" />
<text x="394.7" y="1208.8" font-size="19" font-family='"Liberation Sans","DejaVu Sans",sans-serif' fill="#000" >2.0</text>
<path d="M492.0 1197.5h14l-7.0 9.5z" fill="#111"/>
<text x="542.8" y="1175.3" font-size="18.6" font-family='"Liberation Sans","DejaVu Sans",sans-serif' fill="#7e7e7e" >Chan height (px)</text>
<rect x="542.0" y="1186.7" width="126.7" height="30.8" rx="5" fill="#d3d3d3" />
<text x="550.5" y="1208.8" font-size="19" font-family='"Liberation Sans","DejaVu Sans",sans-serif' fill="#000" >20</text>
<path d="M646.7 1197.5h14l-7.0 9.5z" fill="#111"/>
<text x="698.3" y="1175.3" font-size="18.6" font-family='"Liberation Sans","DejaVu Sans",sans-serif' fill="#7e7e7e" >Range (µV)</text>
<rect x="697.5" y="1186.7" width="127.5" height="30.8" rx="5" fill="#d3d3d3" />
<text x="706.0" y="1208.8" font-size="19" font-family='"Liberation Sans","DejaVu Sans",sans-serif' fill="#000" >400</text>
<path d="M803.0 1197.5h14l-7.0 9.5z" fill="#111"/>
<rect x="832.0" y="1186.7" width="70.5" height="33.3" fill="#8a8a8a" />
<rect x="832.5" y="1187.0" width="69.5" height="10.7" fill="#e2b236" />
<rect x="832.5" y="1198.7" width="69.5" height="10.0" fill="#cfcfcf" />
<rect x="832.5" y="1209.7" width="69.5" height="10.0" fill="#cfcfcf" />
<text x="867.2" y="1197.3" font-size="11.5" font-family='"DejaVu Sans Mono","Liberation Mono",monospace' fill="#5a5240" font-weight="bold" textLength="56.0" lengthAdjust="spacingAndGlyphs" text-anchor="middle" >DATA</text>
<text x="867.2" y="1208.4" font-size="11.5" font-family='"DejaVu Sans Mono","Liberation Mono",monospace' fill="#555" font-weight="bold" textLength="36.0" lengthAdjust="spacingAndGlyphs" text-anchor="middle" >AUX</text>
<text x="867.2" y="1219.5" font-size="11.5" font-family='"DejaVu Sans Mono","Liberation Mono",monospace' fill="#555" font-weight="bold" textLength="36.0" lengthAdjust="spacingAndGlyphs" text-anchor="middle" >ADC</text>
<text x="1011.4" y="1188.3" font-size="19" font-family='"Liberation Sans","DejaVu Sans",sans-serif' fill="#7e7e7e" text-anchor="end" >Overlay</text>
<text x="1011.4" y="1214.0" font-size="19" font-family='"Liberation Sans","DejaVu Sans",sans-serif' fill="#7e7e7e" text-anchor="end" >Events:</text>
<rect x="1032.3" y="1167.5" width="25.8" height="25.8" rx="9.5" fill="#e8c040" />
<rect x="1035.6" y="1170.8" width="19.2" height="19.2" rx="6.5" fill="url(#gBtn2)" />
<text x="1045.2" y="1185.5" font-size="14.5" font-family='"Liberation Sans","DejaVu Sans",sans-serif' fill="#555" text-anchor="middle" >1</text>
<rect x="1032.3" y="1195.8" width="25.8" height="25.8" rx="9.5" fill="#e88830" />
<rect x="1035.6" y="1199.1" width="19.2" height="19.2" rx="6.5" fill="url(#gBtn2)" />
<text x="1045.2" y="1213.8" font-size="14.5" font-family='"Liberation Sans","DejaVu Sans",sans-serif' fill="#555" text-anchor="middle" >2</text>
<rect x="1060.6" y="1167.5" width="25.8" height="25.8" rx="9.5" fill="#e03030" />
<rect x="1063.9" y="1170.8" width="19.2" height="19.2" rx="6.5" fill="url(#gBtn2)" />
<text x="1073.5" y="1185.5" font-size="14.5" font-family='"Liberation Sans","DejaVu Sans",sans-serif' fill="#555" text-anchor="middle" >3</text>
<rect x="1060.6" y="1195.8" width="25.8" height="25.8" rx="9.5" fill="#d838b0" />
<rect x="1063.9" y="1199.1" width="19.2" height="19.2" rx="6.5" fill="url(#gBtn2)" />
<text x="1073.5" y="1213.8" font-size="14.5" font-family='"Liberation Sans","DejaVu Sans",sans-serif' fill="#555" text-anchor="middle" >4</text>
<rect x="1088.9" y="1167.5" width="25.8" height="25.8" rx="9.5" fill="#5830e8" />
<rect x="1092.2" y="1170.8" width="19.2" height="19.2" rx="6.5" fill="url(#gBtn2)" />
<text x="1101.8" y="1185.5" font-size="14.5" font-family='"Liberation Sans","DejaVu Sans",sans-serif' fill="#555" text-anchor="middle" >5</text>
<rect x="1088.9" y="1195.8" width="25.8" height="25.8" rx="9.5" fill="#3870f0" />
<rect x="1092.2" y="1199.1" width="19.2" height="19.2" rx="6.5" fill="url(#gBtn2)" />
<text x="1101.8" y="1213.8" font-size="14.5" font-family='"Liberation Sans","DejaVu Sans",sans-serif' fill="#555" text-anchor="middle" >6</text>
<rect x="1117.2" y="1167.5" width="25.8" height="25.8" rx="9.5" fill="#90e8a8" />
<rect x="1120.5" y="1170.8" width="19.2" height="19.2" rx="6.5" fill="url(#gBtn2)" />
<text x="1130.1" y="1185.5" font-size="14.5" font-family='"Liberation Sans","DejaVu Sans",sans-serif' fill="#555" text-anchor="middle" >7</text>
<rect x="1117.2" y="1195.8" width="25.8" height="25.8" rx="9.5" fill="#68b030" />
<rect x="1120.5" y="1199.1" width="19.2" height="19.2" rx="6.5" fill="url(#gBtn2)" />
<text x="1130.1" y="1213.8" font-size="14.5" font-family='"Liberation Sans","DejaVu Sans",sans-serif' fill="#555" text-anchor="middle" >8</text>
<text x="1174.3" y="1175.3" font-size="19" font-family='"Liberation Sans","DejaVu Sans",sans-serif' fill="#7e7e7e" textLength="80.5" lengthAdjust="spacingAndGlyphs" >TTL word:</text>
<rect x="1174.3" y="1186.7" width="126.7" height="30.8" fill="#1b1b1b" />
<text x="1181.3" y="1208.3" font-size="17.5" font-family='"Liberation Sans","DejaVu Sans",sans-serif' fill="#8a8a6e" textLength="41.5" lengthAdjust="spacingAndGlyphs" >NONE</text>
<rect x="1336.8" y="1173.0" width="98.5" height="41.6" rx="7" fill="url(#gBtn)" stroke="#7a7a7a" stroke-width="1"/>
<text x="1386.0" y="1199.0" font-size="14.5" font-family='"Liberation Mono","DejaVu Sans Mono",monospace' fill="#5c5c5c" text-anchor="middle" >Pause</text>
<text x="1479.0" y="1175.3" font-size="19" font-family='"Liberation Sans","DejaVu Sans",sans-serif' fill="#7e7e7e" >Color scheme</text>
<rect x="1478.3" y="1186.7" width="254.2" height="30.8" rx="5" fill="#d3d3d3" />
<text x="1486.8" y="1208.8" font-size="19" font-family='"Liberation Sans","DejaVu Sans",sans-serif' fill="#000" >Classic</text>
<path d="M1710.5 1197.5h14l-7.0 9.5z" fill="#111"/>
<text x="1754.5" y="1175.3" font-size="19" font-family='"Liberation Sans","DejaVu Sans",sans-serif' fill="#7e7e7e" >Color grouping</text>
<rect x="1753.8" y="1186.7" width="77.6" height="30.8" rx="5" fill="#d3d3d3" />
<text x="1762.3" y="1208.8" font-size="19" font-family='"Liberation Sans","DejaVu Sans",sans-serif' fill="#000" >1</text>
<path d="M1809.4 1197.5h14l-7.0 9.5z" fill="#111"/>
<path d="M2321.5 1194.5L2305.5 1203.5L2321.5 1212.5z" fill="none" stroke="#e0e0e0" stroke-width="1.6"/>
<rect x="129.5" y="1248.5" width="2264.5" height="203" fill="none" stroke="#2b2b2b" stroke-width="1.5"/>
<path d="M103.5 1266.5L109 1255.5L114.5 1266.5z" fill="none" stroke="#555" stroke-width="1"/>
<path d="M103.5 1440.5L109 1451.5L114.5 1440.5z" fill="none" stroke="#555" stroke-width="1"/>
<circle cx="109" cy="1294" r="13.3" fill="url(#gA)" stroke="#d88a20" stroke-width="0.8"/>
<text x="109.0" y="1299.8" font-size="15.5" font-family='"Liberation Sans","DejaVu Sans",sans-serif' fill="#111" font-weight="bold" text-anchor="middle" >A</text>
<circle cx="109" cy="1333.4" r="13.3" fill="#6a6a6a" stroke="#4c4c4c" stroke-width="1.4"/>
<text x="109.0" y="1339.0" font-size="15.5" font-family='"Liberation Sans","DejaVu Sans",sans-serif' fill="#111" font-weight="bold" text-anchor="middle" >B</text>
<circle cx="109" cy="1373.4" r="13" fill="#000" stroke="#555" stroke-width="1.2"/>
<circle cx="109" cy="1412.8" r="13" fill="#000" stroke="#555" stroke-width="1.2"/>
<rect x="140.0" y="1259.0" width="297.0" height="186.5" fill="#e0663a" />
<rect x="140.0" y="1287.0" width="297.0" height="151.3" fill="url(#gBody)" />
<text x="152.0" y="1279.7" font-size="19.5" font-family='"DejaVu Sans Mono","Liberation Mono",monospace' fill="#fff" textLength="133.2" lengthAdjust="spacingAndGlyphs" stroke="#fff" stroke-width="0.7">FILE READER</text>
<line x1="425.5" y1="1312.5" x2="425.5" y2="1419.5" stroke="#6a6a6a" stroke-width="1.1" />
<line x1="428.1" y1="1312.5" x2="428.1" y2="1419.5" stroke="#6a6a6a" stroke-width="1.1" />
<line x1="430.7" y1="1312.5" x2="430.7" y2="1419.5" stroke="#6a6a6a" stroke-width="1.1" />
<rect x="451.5" y="1259.0" width="141.5" height="186.5" fill="#98989c" />
<rect x="451.5" y="1287.0" width="141.5" height="151.3" fill="url(#gBody)" />
<text x="463.5" y="1279.7" font-size="19.5" font-family='"DejaVu Sans Mono","Liberation Mono",monospace' fill="#fff" textLength="72.4" lengthAdjust="spacingAndGlyphs" stroke="#fff" stroke-width="0.7">MERGER</text>
<rect x="607.2" y="1259.0" width="225.8" height="186.5" fill="#e93324" />
<rect x="607.2" y="1287.0" width="225.8" height="151.3" fill="url(#gBody)" />
<text x="619.2" y="1279.7" font-size="19.5" font-family='"DejaVu Sans Mono","Liberation Mono",monospace' fill="#fff" textLength="133.2" lengthAdjust="spacingAndGlyphs" stroke="#fff" stroke-width="0.7">RECORD NODE</text>
<line x1="821.5" y1="1312.5" x2="821.5" y2="1419.5" stroke="#6a6a6a" stroke-width="1.1" />
<line x1="824.1" y1="1312.5" x2="824.1" y2="1419.5" stroke="#6a6a6a" stroke-width="1.1" />
<line x1="826.7" y1="1312.5" x2="826.7" y2="1419.5" stroke="#6a6a6a" stroke-width="1.1" />
<rect x="847.5" y="1259.0" width="289.3" height="186.5" fill="#4aa65d" />
<rect x="847.5" y="1287.0" width="289.3" height="151.3" fill="url(#gBody)" />
<text x="859.5" y="1279.7" font-size="19.5" font-family='"DejaVu Sans Mono","Liberation Mono",monospace' fill="#fff" textLength="121.0" lengthAdjust="spacingAndGlyphs" stroke="#fff" stroke-width="0.7">LFP VIEWER</text>
<line x1="1125.3" y1="1312.5" x2="1125.3" y2="1419.5" stroke="#6a6a6a" stroke-width="1.1" />
<line x1="1127.9" y1="1312.5" x2="1127.9" y2="1419.5" stroke="#6a6a6a" stroke-width="1.1" />
<line x1="1130.5" y1="1312.5" x2="1130.5" y2="1419.5" stroke="#6a6a6a" stroke-width="1.1" />
<rect x="1083.5" y="1266.7" width="18.6" height="12.3" fill="none" stroke="#4e5f54" stroke-width="1.6"/>
<rect x="1083.5" y="1266.0" width="18.6" height="3.0" fill="#4e5f54" />
<rect x="1118.5" y="1266.0" width="2.0" height="13.5" fill="#fff" />
<rect x="1120.3" y="1268.5" width="4.3" height="6.0" fill="#fff" />
<rect x="1151.5" y="1259.0" width="226.5" height="186.5" fill="#4eabeb" />
<rect x="1151.5" y="1287.0" width="226.5" height="151.3" fill="url(#gBody)" />
<text x="1163.5" y="1279.7" font-size="19.5" font-family='"DejaVu Sans Mono","Liberation Mono",monospace' fill="#fff" textLength="181.8" lengthAdjust="spacingAndGlyphs" stroke="#fff" stroke-width="0.7">BANDPASS FILTER</text>
<line x1="1366.5" y1="1312.5" x2="1366.5" y2="1419.5" stroke="#6a6a6a" stroke-width="1.1" />
<line x1="1369.1" y1="1312.5" x2="1369.1" y2="1419.5" stroke="#6a6a6a" stroke-width="1.1" />
<line x1="1371.7" y1="1312.5" x2="1371.7" y2="1419.5" stroke="#6a6a6a" stroke-width="1.1" />
<rect x="1392.0" y="1259.0" width="324.8" height="186.5" fill="#4eabeb" />
<rect x="1392.0" y="1287.0" width="324.8" height="151.3" fill="url(#gBody)" />
<text x="1404.0" y="1279.7" font-size="19.5" font-family='"DejaVu Sans Mono","Liberation Mono",monospace' fill="#fff" textLength="169.6" lengthAdjust="spacingAndGlyphs" stroke="#fff" stroke-width="0.7">SPIKE DETECTOR</text>
<line x1="1705.3" y1="1312.5" x2="1705.3" y2="1419.5" stroke="#6a6a6a" stroke-width="1.1" />
<line x1="1707.9" y1="1312.5" x2="1707.9" y2="1419.5" stroke="#6a6a6a" stroke-width="1.1" />
<line x1="1710.5" y1="1312.5" x2="1710.5" y2="1419.5" stroke="#6a6a6a" stroke-width="1.1" />
<rect x="1731.2" y="1259.0" width="268.8" height="186.5" fill="#4aa65d" />
<rect x="1731.2" y="1287.0" width="268.8" height="151.3" fill="url(#gBody)" />
<text x="1743.2" y="1279.7" font-size="19.5" font-family='"DejaVu Sans Mono","Liberation Mono",monospace' fill="#fff" textLength="145.3" lengthAdjust="spacingAndGlyphs" stroke="#fff" stroke-width="0.7">SPIKE VIEWER</text>
<line x1="1988.5" y1="1312.5" x2="1988.5" y2="1419.5" stroke="#6a6a6a" stroke-width="1.1" />
<line x1="1991.1" y1="1312.5" x2="1991.1" y2="1419.5" stroke="#6a6a6a" stroke-width="1.1" />
<line x1="1993.7" y1="1312.5" x2="1993.7" y2="1419.5" stroke="#6a6a6a" stroke-width="1.1" />
<rect x="1946.7" y="1266.7" width="18.6" height="12.3" fill="none" stroke="#4e5f54" stroke-width="1.6"/>
<rect x="1946.7" y="1266.0" width="18.6" height="3.0" fill="#4e5f54" />
<rect x="1981.7" y="1266.0" width="2.0" height="13.5" fill="#fff" />
<rect x="1983.5" y="1268.5" width="4.3" height="6.0" fill="#fff" />
<rect x="2014.0" y="1259.0" width="332.0" height="186.5" fill="#4aa65d" />
<rect x="2014.0" y="1287.0" width="332.0" height="151.3" fill="url(#gBody)" />
<text x="2026.0" y="1279.7" font-size="19.5" font-family='"DejaVu Sans Mono","Liberation Mono",monospace' fill="#fff" textLength="133.2" lengthAdjust="spacingAndGlyphs" stroke="#fff" stroke-width="0.7">ONLINE PSTH</text>
<line x1="2334.5" y1="1312.5" x2="2334.5" y2="1419.5" stroke="#6a6a6a" stroke-width="1.1" />
<line x1="2337.1" y1="1312.5" x2="2337.1" y2="1419.5" stroke="#6a6a6a" stroke-width="1.1" />
<line x1="2339.7" y1="1312.5" x2="2339.7" y2="1419.5" stroke="#6a6a6a" stroke-width="1.1" />
<rect x="2292.7" y="1266.7" width="18.6" height="12.3" fill="none" stroke="#4e5f54" stroke-width="1.6"/>
<rect x="2292.7" y="1266.0" width="18.6" height="3.0" fill="#4e5f54" />
<rect x="2327.7" y="1266.0" width="2.0" height="13.5" fill="#fff" />
<rect x="2329.5" y="1268.5" width="4.3" height="6.0" fill="#fff" />
<rect x="451.5" y="1259.0" width="141.5" height="28.0" fill="#98989c" />
<text x="463.5" y="1279.7" font-size="19.5" font-family='"DejaVu Sans Mono","Liberation Mono",monospace' fill="#fff" textLength="72.4" lengthAdjust="spacingAndGlyphs" stroke="#fff" stroke-width="0.7">MERGER</text>
<rect x="451.5" y="1438.3" width="141.5" height="7.2" fill="#98989c" />
<rect x="166.0" y="1295.0" width="28.0" height="27.0" rx="6" fill="url(#gBtn2)" stroke="#7c7c7c" stroke-width="1"/>
<text x="180.0" y="1313.0" font-size="13.5" font-family='"Liberation Mono","DejaVu Sans Mono",monospace' fill="#5e5e5e" text-anchor="middle" >F:</text>
<text x="216.0" y="1311.0" font-size="17.5" font-family='"Liberation Mono","DejaVu Sans Mono",monospace' fill="#111" textLength="158.0" lengthAdjust="spacing" >structure.oebin</text>
<rect x="208.0" y="1327.0" width="170.0" height="28.0" rx="5" fill="#d2d2d2" />
<text x="217.0" y="1346.7" font-size="17.5" font-family='"Liberation Sans","DejaVu Sans",sans-serif' fill="#787878" >example_data</text>
<path d="M358 1335.5h12.5l-6.25 9.5z" fill="#9c9c9c"/>
<text x="173.7" y="1387.0" font-size="12" font-family='"DejaVu Sans Mono","Liberation Mono",monospace' fill="#111" font-weight="bold" textLength="211.0" lengthAdjust="spacingAndGlyphs" >00:00:14.272 / 00:00:30.000</text>
<rect x="166.3" y="1405" width="105.2" height="27.3" fill="#d4d4d4" stroke="#6a6a6a" stroke-width="1.2"/>
<rect x="286.3" y="1405" width="105.2" height="27.3" fill="#d4d4d4" stroke="#6a6a6a" stroke-width="1.2"/>
<text x="173.7" y="1422.8" font-size="11.5" font-family='"DejaVu Sans Mono","Liberation Mono",monospace' fill="#7c7c7c" textLength="90.0" lengthAdjust="spacingAndGlyphs" >00:00:00.000</text>
<text x="293.7" y="1422.8" font-size="11.5" font-family='"DejaVu Sans Mono","Liberation Mono",monospace' fill="#7c7c7c" textLength="90.0" lengthAdjust="spacingAndGlyphs" >00:00:30.000</text>
<text x="279.0" y="1422.5" font-size="13" font-family='"DejaVu Sans Mono","Liberation Mono",monospace' fill="#555" text-anchor="middle" >-</text>
<path d="M453 1413H463C477 1413 483 1406 483 1392V1382C483 1368 489 1360.8 503 1360.8H510" fill="none" stroke="#939499" stroke-width="15.5"/>
<path d="M453 1309.2H463C477 1309.2 483 1316 483 1330V1340C483 1354 489 1360.8 503 1360.8H510" fill="none" stroke="#000" stroke-width="15.4"/>
<path d="M508.6 1345.6L544 1361.4L508.6 1377.3z" fill="#050606"/>
<line x1="617.5" y1="1312.0" x2="617.5" y2="1422.0" stroke="#6e6e6e" stroke-width="1" />
<rect x="629.7" y="1302.5" width="20.8" height="130.0" rx="5" fill="#76879a" stroke="#818181" stroke-width="2"/>
<rect x="632.5" y="1405.5" width="15.5" height="24.5" rx="2" fill="#fbf84a" />
<rect x="663.5" y="1305.5" width="101.5" height="28.5" fill="#848484" />
<text x="671.0" y="1327.5" font-size="21" font-family='"Liberation Sans","DejaVu Sans",sans-serif' fill="#111" textLength="51.0" lengthAdjust="spacingAndGlyphs" >/Users/</text>
<rect x="769.5" y="1305.5" width="25.5" height="28.5" rx="6" fill="url(#gBtn2)" stroke="#7c7c7c" stroke-width="1"/>
<text x="782.2" y="1324.5" font-size="15" font-family='"Liberation Sans","DejaVu Sans",sans-serif' fill="#5a5a5a" font-weight="bold" text-anchor="middle" >...</text>
<rect x="663.5" y="1349.0" width="131.5" height="28.0" rx="5" fill="#d3d3d3" />
<text x="672.5" y="1369.8" font-size="19.5" font-family='"Liberation Sans","DejaVu Sans",sans-serif' fill="#000" textLength="50.0" lengthAdjust="spacing" >Binary</text>
<path d="M772.5 1358.2h14.5l-7.2 9.9z" fill="#111"/>
<text x="668.0" y="1402.3" font-size="13.5" font-family='"Liberation Mono","DejaVu Sans Mono",monospace' fill="#111" textLength="91.5" lengthAdjust="spacing" stroke="#111" stroke-width="0.35">RECORD EVENTS</text>
<text x="668.0" y="1426.5" font-size="13.5" font-family='"Liberation Mono","DejaVu Sans Mono",monospace' fill="#111" textLength="91.5" lengthAdjust="spacing" stroke="#111" stroke-width="0.35">RECORD SPIKES</text>
<rect x="774.3" y="1388.0" width="20.5" height="20.2" rx="4" fill="#e93324" stroke="#0a0a0a" stroke-width="1.5"/>
<circle cx="784.5" cy="1398.1" r="3.3" fill="#0a0a0a"/>
<rect x="774.3" y="1412.2" width="20.5" height="20.2" rx="4" fill="#e93324" stroke="#0a0a0a" stroke-width="1.5"/>
<circle cx="784.5" cy="1422.3" r="3.3" fill="#0a0a0a"/>
<rect x="875.7" y="1317.0" width="35.0" height="34.7" rx="4" fill="#8b8b8b" />
<rect x="879.3" y="1320.6" width="27.8" height="27.5" rx="3" fill="#7a7a7a" stroke="#111" stroke-width="1.6"/>
<rect x="918.1" y="1317.0" width="35.0" height="34.7" rx="4" fill="#8b8b8b" />
<rect x="921.7" y="1320.6" width="27.8" height="27.5" rx="3" fill="#7a7a7a" stroke="#111" stroke-width="1.6"/>
<line x1="935.6" y1="1320.6" x2="935.6" y2="1348.1" stroke="#111" stroke-width="1.6" />
<rect x="960.4" y="1317.0" width="35.0" height="34.7" rx="4" fill="#8b8b8b" />
<rect x="964.0" y="1320.6" width="27.8" height="27.5" rx="3" fill="#7a7a7a" stroke="#111" stroke-width="1.6"/>
<line x1="973.3" y1="1320.6" x2="973.3" y2="1348.1" stroke="#111" stroke-width="1.6" />
<line x1="982.5" y1="1320.6" x2="982.5" y2="1348.1" stroke="#111" stroke-width="1.6" />
<rect x="1002.8" y="1317.0" width="35.0" height="34.7" rx="4" fill="#8b8b8b" />
<rect x="1006.4" y="1320.6" width="27.8" height="27.5" rx="3" fill="#7a7a7a" stroke="#111" stroke-width="1.6"/>
<line x1="1006.4" y1="1334.3" x2="1034.2" y2="1334.3" stroke="#111" stroke-width="1.6" />
<rect x="1045.1" y="1317.0" width="35.0" height="34.7" rx="4" fill="#f0a535" />
<rect x="1048.7" y="1320.6" width="27.8" height="27.5" rx="3" fill="#f0a535" stroke="#111" stroke-width="1.6"/>
<line x1="1048.7" y1="1329.8" x2="1076.5" y2="1329.8" stroke="#111" stroke-width="1.6" />
<line x1="1048.7" y1="1339.0" x2="1076.5" y2="1339.0" stroke="#111" stroke-width="1.6" />
<rect x="901.2" y="1375.2" width="155.5" height="41.5" rx="8" fill="url(#gBtn2)" stroke="#7c7c7c" stroke-width="1"/>
<text x="979.0" y="1401.0" font-size="14.5" font-family='"Liberation Mono","DejaVu Sans Mono",monospace' fill="#555" textLength="111.0" lengthAdjust="spacing" text-anchor="middle" >SYNC DISPLAYS</text>
<text x="1171.2" y="1305.5" font-size="13.5" font-family='"DejaVu Sans Mono","Liberation Mono",monospace' fill="#565656" font-weight="bold" textLength="82.0" lengthAdjust="spacingAndGlyphs" letter-spacing="1.6" >LOW_CUT</text>
<rect x="1163.0" y="1315.0" width="113.0" height="25.7" fill="#828282" />
<text x="1170.0" y="1333.4" font-size="16.5" font-family='"DejaVu Sans Mono","Liberation Mono",monospace' fill="#fff" font-weight="bold" textLength="32.6" lengthAdjust="spacingAndGlyphs" >300</text>
<text x="1171.2" y="1362.0" font-size="13.5" font-family='"DejaVu Sans Mono","Liberation Mono",monospace' fill="#565656" font-weight="bold" textLength="87.5" lengthAdjust="spacingAndGlyphs" letter-spacing="1.6" >HIGH_CUT</text>
<rect x="1163.0" y="1372.2" width="113.0" height="25.0" fill="#828282" />
<text x="1170.0" y="1389.9" font-size="16.5" font-family='"DejaVu Sans Mono","Liberation Mono",monospace' fill="#fff" font-weight="bold" textLength="43.8" lengthAdjust="spacingAndGlyphs" >6000</text>
<rect x="1163.3" y="1409.3" width="112.4" height="26.7" rx="8" fill="url(#gBtn2)" stroke="#7c7c7c" stroke-width="1"/>
<text x="1219.5" y="1427.1" font-size="13.5" font-family='"DejaVu Sans Mono","Liberation Mono",monospace' fill="#555" textLength="73.0" lengthAdjust="spacing" text-anchor="middle" >Channels</text>
<rect x="1488.3" y="1341.3" width="112.4" height="41.4" rx="6" fill="url(#gBtn2)" stroke="#7c7c7c" stroke-width="1"/>
<text x="1544.5" y="1366.5" font-size="13.5" font-family='"DejaVu Sans Mono","Liberation Mono",monospace' fill="#555" textLength="82.0" lengthAdjust="spacing" text-anchor="middle" >configure</text>
<text x="1806.5" y="1335.5" font-size="16.5" font-family='"Liberation Mono","DejaVu Sans Mono",monospace' fill="#111" textLength="125.5" lengthAdjust="spacing" >Display size:</text>
<rect x="1820.6" y="1362.4" width="34.8" height="34.6" rx="7" fill="url(#gBtn2)" stroke="#7c7c7c" stroke-width="1"/>
<text x="1838.0" y="1383.3" font-size="11" font-family='"Liberation Mono","DejaVu Sans Mono",monospace' fill="#666" text-anchor="middle" >-</text>
<rect x="1870.0" y="1362.4" width="35.0" height="34.6" rx="7" fill="url(#gBtn2)" stroke="#7c7c7c" stroke-width="1"/>
<text x="1887.5" y="1383.3" font-size="11" font-family='"Liberation Mono","DejaVu Sans Mono",monospace' fill="#666" text-anchor="middle" >+</text>
<text x="2047.8" y="1316.5" font-size="13.5" font-family='"DejaVu Sans Mono","Liberation Mono",monospace' fill="#565656" font-weight="bold" textLength="71.5" lengthAdjust="spacingAndGlyphs" letter-spacing="1.6" >PRE_MS</text>
<rect x="2039.3" y="1327.0" width="113.1" height="25.0" fill="#828282" />
<text x="2046.3" y="1344.7" font-size="16.5" font-family='"DejaVu Sans Mono","Liberation Mono",monospace' fill="#fff" font-weight="bold" textLength="32.6" lengthAdjust="spacingAndGlyphs" >500</text>
<text x="2196.5" y="1316.5" font-size="13.5" font-family='"DejaVu Sans Mono","Liberation Mono",monospace' fill="#565656" font-weight="bold" textLength="81.0" lengthAdjust="spacingAndGlyphs" letter-spacing="1.6" >BIN_SIZE</text>
<rect x="2188.0" y="1327.0" width="113.0" height="25.0" fill="#828282" />
<text x="2195.0" y="1344.7" font-size="16.5" font-family='"DejaVu Sans Mono","Liberation Mono",monospace' fill="#fff" font-weight="bold" textLength="21.4" lengthAdjust="spacingAndGlyphs" >10</text>
<text x="2047.8" y="1380.0" font-size="13.5" font-family='"DejaVu Sans Mono","Liberation Mono",monospace' fill="#565656" font-weight="bold" textLength="83.0" lengthAdjust="spacingAndGlyphs" letter-spacing="1.6" >POST_MS</text>
<rect x="2039.3" y="1390.0" width="113.1" height="25.8" fill="#828282" />
<text x="2046.3" y="1408.5" font-size="16.5" font-family='"DejaVu Sans Mono","Liberation Mono",monospace' fill="#fff" font-weight="bold" textLength="32.6" lengthAdjust="spacingAndGlyphs" >500</text>
<text x="2196.5" y="1380.0" font-size="13.5" font-family='"DejaVu Sans Mono","Liberation Mono",monospace' fill="#565656" font-weight="bold" textLength="72.0" lengthAdjust="spacingAndGlyphs" letter-spacing="1.6" >TRIGGER</text>
<rect x="2188.0" y="1390.0" width="113.0" height="25.8" rx="5" fill="#d3d3d3" />
<text x="2196.0" y="1408.3" font-size="15.5" font-family='"Liberation Sans","DejaVu Sans",sans-serif' fill="#000" >1</text>
<path d="M2279.5 1398.4h13.5l-6.8 9.2z" fill="#111"/>
<rect x="88.2" y="1482.2" width="1979.4" height="39.6" rx="11" fill="#646464" stroke="#707070" stroke-width="1.4"/>
<text x="102.0" y="1508.0" font-size="17.5" font-family='"DejaVu Sans Mono","Liberation Mono",monospace' fill="#0a0a0a" textLength="241.0" lengthAdjust="spacingAndGlyphs" stroke="#0a0a0a" stroke-width="0.4">Loaded lastConfig.xml</text>
<path d="M1074 1504.5L1090.5 1493.5L1107 1504.5" fill="none" stroke="#7e7e7e" stroke-width="1.3"/>
<rect x="1115" y="1488.7" width="877.5" height="26.5" fill="#636363" stroke="#707070" stroke-width="1.3"/>
<text x="1125.0" y="1508.0" font-size="17.5" font-family='"DejaVu Sans Mono","Liberation Mono",monospace' fill="#0a0a0a" textLength="274.0" lengthAdjust="spacingAndGlyphs" stroke="#0a0a0a" stroke-width="0.4">Type a new message here.</text>
<rect x="1999.3" y="1489.2" width="62.2" height="26.1" rx="7" fill="url(#gBtn2)" stroke="#7c7c7c" stroke-width="1"/>
<text x="2030.4" y="1506.7" font-size="13.5" font-family='"Liberation Mono","DejaVu Sans Mono",monospace' fill="#5a5a5a" text-anchor="middle" >Save</text>
<rect x="2076.0" y="1474.4" width="318.4" height="48.3" fill="#3a3a3a" />
<text x="2091.5" y="1507.5" font-size="30.5" font-family='"Liberation Mono","DejaVu Sans Mono",monospace' fill="#fff" textLength="227.0" lengthAdjust="spacing" >SIGNAL CHAIN</text>
<path d="M2353 1507.5L2363 1490.5L2373 1507.5z" fill="none" stroke="#fff" stroke-width="1.6"/>
</g>
</svg>
</body></html>
